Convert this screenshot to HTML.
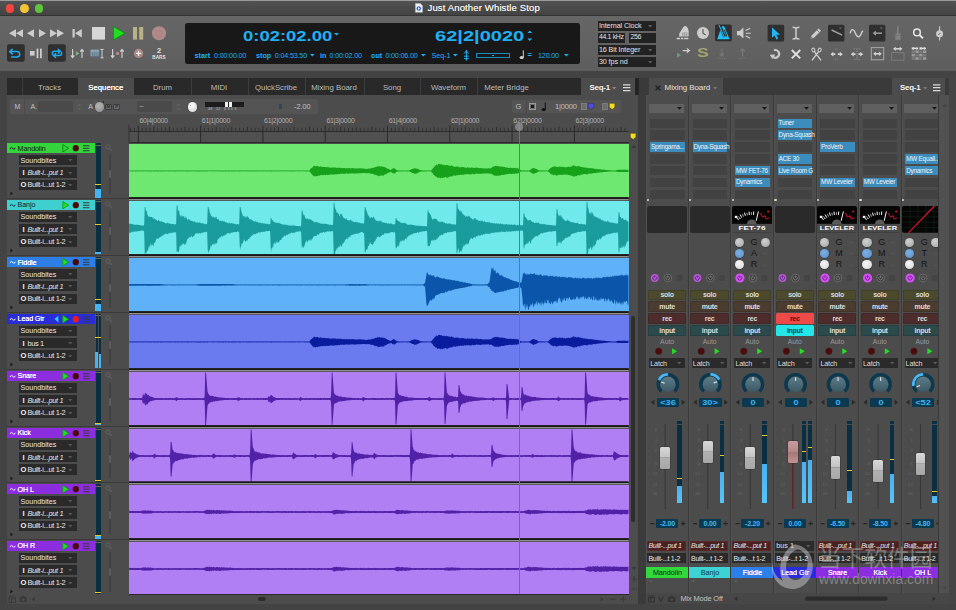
<!DOCTYPE html>
<html lang="en"><head><meta charset="utf-8"><title>Just Another Whistle Stop</title>
<style>
*{margin:0;padding:0;box-sizing:border-box}
html,body{width:956px;height:610px;overflow:hidden;background:#434343}
body{position:relative;font-family:"Liberation Sans","Noto Sans CJK SC",sans-serif;color:#ddd}
div,svg{position:absolute}
.t{white-space:nowrap;line-height:1}
.b{font-weight:bold}
.i{font-style:italic}
svg{overflow:visible}
</style></head>
<body>
<div style="left:0px;top:0px;width:956px;height:16px;background:linear-gradient(#525252,#434343);border-top:1px solid #9a9a9a;border-bottom:1px solid #333;"></div>
<div style="left:5.9px;top:4.2px;width:8.6px;height:8.6px;background:#f4453d;border-radius:50%;"></div>
<div style="left:20px;top:4.2px;width:8.6px;height:8.6px;background:#f0c436;border-radius:50%;"></div>
<div style="left:34.5px;top:4.2px;width:8.6px;height:8.6px;background:#5ec43c;border-radius:50%;"></div>
<svg style="left:415.2px;top:3.4px;" width="9" height="11" viewBox="0 0 9 11"><g transform="scale(.88)"><path d="M0.5 0.5h5.5l2.5 2.5v7.5h-8z" fill="#f4f4f4" stroke="#bbb" stroke-width=".6"/><circle cx="4.3" cy="6.2" r="2.6" fill="#2a6fd0"/><path d="M3.4 4.8l2.3 1.4-2.3 1.4z" fill="#fff"/></g></svg>
<div class="t" style="left:427.5px;top:3px;font-size:9.6px;color:#f4f4f4;letter-spacing:.1px;text-shadow:0 0 .5px rgba(255,255,255,.7);">Just Another Whistle Stop</div>
<div style="left:0px;top:16px;width:956px;height:55px;background:linear-gradient(#666,#5e5e5e);"></div>
<svg style="left:0px;top:0px;" width="180" height="72" viewBox="0 0 180 72"><path d="M9 33.3l7-4v8zM16 33.3l7-4v8z" fill="#cdcdcd"/><path d="M27 33.3l7-4v8z" fill="#cdcdcd"/><path d="M46 33.3l-7-4v8z" fill="#cdcdcd"/><path d="M57 33.3l-7-4v8zM64 33.3l-7-4v8z" fill="#cdcdcd"/><path d="M72.5 29h2.2v8.6h-2.2zM75 33.3l6.8-4.2v8.4z" fill="#cdcdcd"/><rect x="92" y="27" width="13" height="12.6" fill="#d6d6d6"/><path d="M113.4 26.4l11.6 6.8-11.6 6.8z" fill="#1fe01f" stroke="#0a8a0a" stroke-width=".8"/><rect x="133" y="27" width="4" height="12.6" fill="#b9b285"/><rect x="139.2" y="27" width="4" height="12.6" fill="#b9b285"/><circle cx="159" cy="33.2" r="7" fill="#b38a8a"/><circle cx="159" cy="33.2" r="3.2" fill="none" stroke="#a87c7c" stroke-width=".8"/><rect x="7" y="44.2" width="17.8" height="17.6" rx="2" fill="#2f2f2f"/><path d="M12.3 49.3l-2.6 2.3 2.6 2.3M10 51.6h7a2.6 2.6 0 0 1 0 5.4h-5.5" fill="none" stroke="#22aaf0" stroke-width="1.5" stroke-linecap="round" stroke-linejoin="round"/><rect x="30" y="51" width="4.6" height="4.6" fill="#cdcdcd"/><rect x="36.6" y="48.6" width="1.8" height="9.6" fill="#cdcdcd"/><rect x="40" y="48.6" width="1.8" height="9.6" fill="#cdcdcd"/><rect x="48" y="44.2" width="17.8" height="17.6" rx="2" fill="#2f2f2f"/><path d="M52.3 54.5v-1.2a2 2 0 0 1 2-2h5.6M58.2 49.3l2.2 2-2.2 2M61.6 52.3v1.2a2 2 0 0 1-2 2h-5.6M55.6 57.5l-2.2-2 2.2-2" fill="none" stroke="#22aaf0" stroke-width="1.4" stroke-linecap="round" stroke-linejoin="round"/><path d="M72.6 49v8M70.8 55.4l1.8 2.2 1.8-2.2M82 58v-8M80.2 51.6l1.8-2.2 1.8 2.2" fill="none" stroke="#cdcdcd" stroke-width="1.2"/><path d="M75.8 51l3.4 2.4-3.4 2.4z" fill="#7fb27f"/><rect x="90.5" y="49.6" width="8.6" height="6.6" fill="#8aa3b5"/><path d="M92.3 52v5.6M94.2 52v5.6M96.1 52v5.6M98 52v5.6" stroke="#5e7486" stroke-width=".9"/><path d="M100.3 49.4h3.4M102 49.4v8.4M100.3 57.8h3.4" stroke="#cdcdcd" stroke-width="1" fill="none"/><path d="M112.6 49v8M110.8 55.4l1.8 2.2 1.8-2.2M122 58v-8M120.2 51.6l1.8-2.2 1.8 2.2" fill="none" stroke="#cdcdcd" stroke-width="1.2"/><circle cx="117.6" cy="53.4" r="1.7" fill="#b98585"/><circle cx="138.6" cy="53.4" r="4.6" fill="#b08888"/><path d="M136 53.4h5.2M138.6 50.8v5.2" stroke="#f2f2f2" stroke-width="1.1"/></svg>
<div class="t" style="left:149px;top:47.1px;font-size:7.5px;color:#e4e4e4;width:20px;text-align:center;font-weight:bold;">2</div>
<div class="t" style="left:149px;top:55.6px;font-size:4.6px;color:#e4e4e4;width:20px;text-align:center;font-weight:bold;letter-spacing:.1px;">BARS</div>
<div style="left:185px;top:23.2px;width:394.6px;height:40.4px;background:#181818;border-radius:2.5px;"></div>
<div class="t" style="left:242.6px;top:27.6px;font-size:15.2px;color:#1fb0f4;font-weight:bold;transform-origin:0 0;transform:scaleX(1.215);">0:02:02.00</div>
<svg style="left:333.6px;top:32.8px;" width="6" height="4" viewBox="0 0 6 4"><path d="M0 0h5l-2.5 2.6z" fill="#1fb0f4"/></svg>
<div class="t" style="left:434.6px;top:27.6px;font-size:15.2px;color:#1fb0f4;font-weight:bold;transform-origin:0 0;transform:scaleX(1.32);">62|2|0020</div>
<svg style="left:526.6px;top:29.6px;" width="6" height="12" viewBox="0 0 6 12"><path d="M0.4 3l2.4-2.6 2.4 2.6zM0.4 8.4h4.8l-2.4 2.6z" fill="#1fb0f4"/></svg>
<div class="t" style="left:194.6px;top:51.7px;font-size:7.2px;color:#1fb0f4;font-weight:bold;">start</div>
<div class="t" style="left:214px;top:51.7px;font-size:7.2px;color:#1fb0f4;letter-spacing:-.18px;">0:00:00.00</div>
<div class="t" style="left:256px;top:51.7px;font-size:7.2px;color:#1fb0f4;font-weight:bold;">stop</div>
<div class="t" style="left:274.8px;top:51.7px;font-size:7.2px;color:#1fb0f4;letter-spacing:-.18px;">0:04:53.50</div>
<svg style="left:310px;top:54.1px;" width="4.6" height="2.6" viewBox="0 0 4.6 2.6"><path d="M0 0h4.6l-2.3 2.6z" fill="#1fb0f4"/></svg>
<div class="t" style="left:320px;top:51.7px;font-size:7.2px;color:#1fb0f4;font-weight:bold;">in</div>
<div class="t" style="left:329.6px;top:51.7px;font-size:7.2px;color:#1fb0f4;letter-spacing:-.18px;">0:00:02.00</div>
<div class="t" style="left:371px;top:51.7px;font-size:7.2px;color:#1fb0f4;font-weight:bold;">out</div>
<div class="t" style="left:385.4px;top:51.7px;font-size:7.2px;color:#1fb0f4;letter-spacing:-.18px;">0:00:06.00</div>
<svg style="left:421.4px;top:54.1px;" width="4.6" height="2.6" viewBox="0 0 4.6 2.6"><path d="M0 0h4.6l-2.3 2.6z" fill="#1fb0f4"/></svg>
<div class="t" style="left:431.4px;top:51.7px;font-size:7.2px;color:#1fb0f4;">Seq-1</div>
<svg style="left:453px;top:54.1px;" width="4.6" height="2.6" viewBox="0 0 4.6 2.6"><path d="M0 0h4.6l-2.3 2.6z" fill="#1fb0f4"/></svg>
<svg style="left:463px;top:49.6px;" width="7" height="11" viewBox="0 0 7 11"><path d="M3.4 0v10.6M1.2 3.6l2.2-2.8 2.2 2.8M1 6.2h4.8M1 8.6h4.8" stroke="#1fb0f4" stroke-width="1" fill="none"/></svg>
<div style="left:476px;top:52.6px;width:34px;height:5.4px;background:transparent;border:1px solid #1fb0f4;opacity:.75;"></div>
<div style="left:492.4px;top:54.6px;width:1.6px;height:1.6px;background:#1fb0f4;"></div>
<svg style="left:519px;top:49.6px;" width="6" height="10" viewBox="0 0 6 10"><path d="M4.3 0.4v7" stroke="#d0d0d0" stroke-width="1"/><ellipse cx="2.7" cy="7.6" rx="2.1" ry="1.5" fill="#d0d0d0"/></svg>
<div class="t" style="left:527.6px;top:51.4px;font-size:7.6px;color:#1fb0f4;font-weight:bold;">=</div>
<div class="t" style="left:538px;top:51.7px;font-size:7.2px;color:#1fb0f4;letter-spacing:-.18px;">120.00</div>
<svg style="left:564px;top:54.1px;" width="4.6" height="2.6" viewBox="0 0 4.6 2.6"><path d="M0 0h4.6l-2.3 2.6z" fill="#1fb0f4"/></svg>
<div style="left:597.5px;top:21.2px;width:58.6px;height:9.4px;background:#222;"></div>
<div class="t" style="left:598.9px;top:21.9px;font-size:7.2px;color:#e2e2e2;letter-spacing:-.1px;">Internal Clock</div>
<svg style="left:648.1px;top:25px;" width="4.4" height="2.4" viewBox="0 0 4.4 2.4"><path d="M0 0h4.4l-2.2 2.4z" fill="#5c5c5c"/></svg>
<div style="left:597.5px;top:33.2px;width:27.4px;height:9.4px;background:#222;"></div>
<div class="t" style="left:598.9px;top:33.9px;font-size:6.9px;color:#e2e2e2;letter-spacing:-.3px;">44.1 kHz</div>
<div style="left:629px;top:33.2px;width:27.1px;height:9.4px;background:#222;"></div>
<div class="t" style="left:630.4px;top:33.9px;font-size:6.9px;color:#e2e2e2;letter-spacing:-.3px;">256</div>
<div style="left:597.5px;top:45.2px;width:58.6px;height:9.4px;background:#222;"></div>
<div class="t" style="left:598.9px;top:45.9px;font-size:7.2px;color:#e2e2e2;letter-spacing:-.1px;">16 Bit Integer</div>
<svg style="left:648.1px;top:49px;" width="4.4" height="2.4" viewBox="0 0 4.4 2.4"><path d="M0 0h4.4l-2.2 2.4z" fill="#5c5c5c"/></svg>
<div style="left:597.5px;top:57.2px;width:58.6px;height:9.4px;background:#222;"></div>
<div class="t" style="left:598.9px;top:57.9px;font-size:7.2px;color:#e2e2e2;letter-spacing:-.1px;">30 fps nd</div>
<svg style="left:648.1px;top:61px;" width="4.4" height="2.4" viewBox="0 0 4.4 2.4"><path d="M0 0h4.4l-2.2 2.4z" fill="#5c5c5c"/></svg>
<svg style="left:0px;top:0px;" width="956" height="72" viewBox="0 0 956 72"><path d="M679.2 36.600V33.800L683.200 27.200Q684.600 25.600 686.200 26.200Q688.600 27.600 688.600 31.200V36.600z" fill="#cdcdcd"/><path d="M682.800 32.400v4.200M684.800 32v4.600M686.800 32.400v4.200" stroke="#777" stroke-width=".7"/><path d="M676.600 38.400h3.400M680.800 38.400h2.600M684.200 38.400h4.200" stroke="#cdcdcd" stroke-width="1.500" fill="none"/><circle cx="703" cy="33" r="6" fill="#cdcdcd"/><path d="M703 29v4.2l2.6 1.8" stroke="#5e5e5e" stroke-width="1.2" fill="none"/><rect x="715" y="24.4" width="16.8" height="16.8" rx="1.5" fill="#2f2f2f"/><path d="M721.600 26.200h2.600l5.400 13h-12.400z" fill="#1ec0f8"/><path d="M719.600 25.400l5 11.400" stroke="#2f2f2f" stroke-width="2.800"/><path d="M719 25l5.200 11.800" stroke="#1ec0f8" stroke-width="1"/><path d="M724.400 29.600l2.400 6.800" stroke="#2f2f2f" stroke-width="1"/><path d="M737 31h2.8l3.6-3.4v11l-3.6-3.4h-2.8z" fill="#cdcdcd"/><path d="M745.6 30.6l4.6-2.4M745.8 33.2h5M745.6 35.8l4.6 2.4" stroke="#cdcdcd" stroke-width="1.1"/><path d="M677 52.6l4 2.6-4 2.6z" fill="#6f9a6f"/><path d="M682.6 50.6h6.6M686.8 48.4l2.6 2.2-2.6 2.2" stroke="#cdcdcd" stroke-width="1.2" fill="none"/><path d="M721.8 48.6v7.4M719.6 53.6l2.2 2.6 2.2-2.6" stroke="#7a7a7a" stroke-width="1.1" fill="none"/><path d="M718 58.4h8" stroke="#727272" stroke-width="1.2" stroke-dasharray="1.2 .8"/><path d="M742.6 56.4v-7.4M740.4 51.4l2.2-2.6 2.2 2.6" stroke="#7a7a7a" stroke-width="1.1" fill="none"/><path d="M738.6 58.4h8" stroke="#727272" stroke-width="1.2" stroke-dasharray="1.2 .8"/><rect x="767.6" y="24.8" width="16.6" height="16.6" rx="1.5" fill="#2f2f2f"/><path d="M772 27.2v10.6l2.6-2.4 1.8 4 1.8-.8-1.8-3.8h3.6z" fill="#22b4f4"/><path d="M792.600 27.200c1.800 0 3 .4 3.400 1.400c.4-1 1.600-1.400 3.400-1.400M796 28.400v9.400M792.600 39c1.800 0 3-.4 3.400-1.400c.4 1 1.600 1.400 3.400 1.400" stroke="#cdcdcd" stroke-width="1.500" fill="none"/><path d="M810.600 38.800l1-3.400 7-7 2.400 2.400-7 7z" fill="#cdcdcd"/><path d="M817 30l2.400 2.400" stroke="#5e5e5e" stroke-width=".7"/><path d="M811 38.400l.6-1.600 1 1z" fill="#5e5e5e"/><rect x="828" y="24.800" width="16.400" height="16.600" rx="1.500" fill="#2f2f2f"/><path d="M831.600 30l10.600 5.200" stroke="#a0a0a0" stroke-width="1.500"/><path d="M838.800 27.400h3l-1.500 1.800z" fill="#6a6a6a"/><path d="M850 33.400c1.400-5 3.600-5 5.400-.2s4.200 5 6 0c.5-1.400 1-2 1.600-2.400" stroke="#cdcdcd" stroke-width="1.400" fill="none"/><rect x="869" y="24.800" width="16.400" height="16.600" rx="1.500" fill="#2f2f2f"/><path d="M875 33.200h7" stroke="#9a9a9a" stroke-width="1.500"/><path d="M872.600 33.200l3.400-2.600v5.200z" fill="#9a9a9a"/><path d="M879.800 27.400h3l-1.500 1.800z" fill="#6a6a6a"/><path d="M897 26.200v7.400h1.600v-7.400zM895.400 33.600h5.200v6.200h-5.200z" fill="#838383"/><path d="M895.400 35.400h5.200" stroke="#6e6e6e" stroke-width=".6"/><circle cx="917" cy="32.400" r="3.300" fill="none" stroke="#e6e6e6" stroke-width="1.500"/><path d="M919.500 35l3.500 3.400" stroke="#e6e6e6" stroke-width="1.900"/><path d="M939.600 26.200v14.400" stroke="#cdcdcd" stroke-width="1.100"/><circle cx="939.600" cy="33.800" r="3.500" fill="#cdcdcd"/><path d="M938.400 35l1.800-1.800" stroke="#5e5e5e" stroke-width="1"/><path d="M774 50.300a3.800 3.800 0 1 1 -1.200 6.400" stroke="#cdcdcd" stroke-width="2.100" fill="none"/><path d="M769.800 54.800l2.600 4.200 2.800-4.600z" fill="#cdcdcd"/><path d="M791.800 50l8.400 8.400M800.200 50l-8.400 8.400" stroke="#e0e0e0" stroke-width="1.900"/><path d="M814.400 51.600l6.600 8.800M818.600 51.600l-6.600 8.800" stroke="#cdcdcd" stroke-width="1.400"/><ellipse cx="813.400" cy="50" rx="1.500" ry="1.900" fill="none" stroke="#cdcdcd" stroke-width="1.100" transform="rotate(-25 813.400 50)"/><ellipse cx="819.600" cy="50" rx="1.500" ry="1.900" fill="none" stroke="#cdcdcd" stroke-width="1.100" transform="rotate(25 819.600 50)"/><path d="M833.2 54.2H835.3M837.9 54.2H840.0" stroke="#d6d6d6" stroke-width="1.7"/><path d="M830.4 54.2l3 -2.4v4.8zM842.8 54.2l-3 -2.4v4.8z" fill="#d6d6d6"/><path d="M834.800 49.200h3.600M834.800 59.200h3.600" stroke="#8c8c8c" stroke-width=".9" stroke-dasharray="1 .8"/><path d="M853.6 54.2H855.5M858.5 54.2H860.4" stroke="#d6d6d6" stroke-width="1.7"/><path d="M850.8 54.2l3 -2.4v4.8zM863.2 54.2l-3 -2.4v4.8z" fill="#d6d6d6"/><path d="M857 48.400v11.600" stroke="#9a9a9a" stroke-width=".9" stroke-dasharray="1.400 .8"/><path d="M853.600 48.800h2M858.400 48.800h2M853.600 59.600h2M858.400 59.600h2" stroke="#8c8c8c" stroke-width=".8"/><rect x="871.300" y="47.600" width="12.400" height="12.200" fill="none" stroke="#a8a8a8" stroke-width="1"/><path d="M875.7 53.8H879.3" stroke="#dcdcdc" stroke-width="1.5"/><path d="M873.3 53.8l2.6 -2.1v4.2zM881.7 53.8l-2.6 -2.1v4.2z" fill="#dcdcdc"/><path d="M895.5 48.8H899.9" stroke="#dcdcdc" stroke-width="1.5"/><path d="M893.1 48.8l2.6 -2.1v4.2zM902.3 48.8l-2.6 -2.1v4.2z" fill="#dcdcdc"/><rect x="891.600" y="52.600" width="12.400" height="7.600" fill="none" stroke="#7c7c7c" stroke-width=".9"/><rect x="911.6" y="47" width="3.300" height="2.700" fill="#9a9a9a"/><rect x="915.4" y="47" width="3.300" height="2.700" fill="#7a7a7a"/><rect x="919.2" y="47" width="3.300" height="2.700" fill="#9a9a9a"/><rect x="923" y="47" width="3.300" height="2.700" fill="#7a7a7a"/><rect x="911.6" y="50.4" width="3.300" height="2.700" fill="#7a7a7a"/><rect x="915.4" y="50.4" width="3.300" height="2.700" fill="#9a9a9a"/><rect x="919.2" y="50.4" width="3.300" height="2.700" fill="#7a7a7a"/><rect x="923" y="50.4" width="3.300" height="2.700" fill="#9a9a9a"/><rect x="911.6" y="53.8" width="3.300" height="2.700" fill="#9a9a9a"/><rect x="915.4" y="53.8" width="3.300" height="2.700" fill="#7a7a7a"/><rect x="919.2" y="53.8" width="3.300" height="2.700" fill="#9a9a9a"/><rect x="923" y="53.8" width="3.300" height="2.700" fill="#7a7a7a"/><rect x="911.6" y="57.2" width="3.300" height="2.700" fill="#7a7a7a"/><rect x="915.4" y="57.2" width="3.300" height="2.700" fill="#9a9a9a"/><rect x="919.2" y="57.2" width="3.300" height="2.700" fill="#7a7a7a"/><rect x="923" y="57.2" width="3.300" height="2.700" fill="#9a9a9a"/><path d="M913.4 48.4H916.6" stroke="#e4e4e4" stroke-width="1.2"/><path d="M911.6 48.4l2 -1.7v3.4zM918.4 48.4l-2 -1.7v3.4z" fill="#e4e4e4"/><path d="M921.2 48.4H924.4" stroke="#e4e4e4" stroke-width="1.2"/><path d="M919.4 48.4l2 -1.7v3.4zM926.2 48.4l-2 -1.7v3.4z" fill="#e4e4e4"/></svg>
<div class="t" style="left:697px;top:47.2px;font-size:12px;color:#a4a472;font-weight:bold;transform-origin:0 0;transform:scaleX(1.46);">S</div>
<div style="left:7.3px;top:78px;width:630.4px;height:526px;background:#4c4c4c;"></div>
<div style="left:7.3px;top:78px;width:574.2px;height:17px;background:#292929;"></div>
<div style="left:77.5px;top:78px;width:56.5px;height:17px;background:#4c4c4c;"></div>
<div style="left:21.5px;top:78px;width:1px;height:17px;background:#3d3d3d;"></div>
<div style="left:191px;top:78px;width:1px;height:17px;background:#3d3d3d;"></div>
<div style="left:247.5px;top:78px;width:1px;height:17px;background:#3d3d3d;"></div>
<div style="left:304.5px;top:78px;width:1px;height:17px;background:#3d3d3d;"></div>
<div style="left:363.5px;top:78px;width:1px;height:17px;background:#3d3d3d;"></div>
<div style="left:420px;top:78px;width:1px;height:17px;background:#3d3d3d;"></div>
<div style="left:476.5px;top:78px;width:1px;height:17px;background:#3d3d3d;"></div>
<div class="t" style="left:9.5px;top:84px;font-size:7.8px;color:#bcbcbc;width:80px;text-align:center;">Tracks</div>
<div class="t" style="left:65.8px;top:84px;font-size:7.8px;color:#fff;width:80px;text-align:center;text-shadow:0 0 .5px #fff;">Sequence</div>
<div class="t" style="left:122.5px;top:84px;font-size:7.8px;color:#bcbcbc;width:80px;text-align:center;">Drum</div>
<div class="t" style="left:179px;top:84px;font-size:7.8px;color:#bcbcbc;width:80px;text-align:center;">MIDI</div>
<div class="t" style="left:236px;top:84px;font-size:7.8px;color:#bcbcbc;width:80px;text-align:center;">QuickScribe</div>
<div class="t" style="left:294px;top:84px;font-size:7.8px;color:#bcbcbc;width:80px;text-align:center;">Mixing Board</div>
<div class="t" style="left:352px;top:84px;font-size:7.8px;color:#bcbcbc;width:80px;text-align:center;">Song</div>
<div class="t" style="left:408.5px;top:84px;font-size:7.8px;color:#bcbcbc;width:80px;text-align:center;">Waveform</div>
<div class="t" style="left:466.5px;top:84px;font-size:7.8px;color:#bcbcbc;width:80px;text-align:center;">Meter Bridge</div>
<div class="t" style="left:589.4px;top:84.2px;font-size:7.9px;color:#f4f4f4;font-weight:bold;letter-spacing:-.2px;">Seq-1</div>
<svg style="left:612px;top:87px;" width="4.4" height="2.4" viewBox="0 0 4.4 2.4"><path d="M0 0h4.4l-2.2 2.4z" fill="#8a8a8a"/></svg>
<svg style="left:623px;top:83.6px;" width="8" height="8" viewBox="0 0 8 8"><path d="M0 .8h7.4M0 3.7h7.4M0 6.6h7.4" stroke="#d8d8d8" stroke-width="1.3"/></svg>
<div style="left:10px;top:99px;width:307.6px;height:15.4px;background:#545454;border-radius:2.5px;"></div>
<div style="left:24.4px;top:99px;width:1px;height:15.4px;background:#4b4b4b;"></div>
<div class="t" style="left:14.6px;top:103px;font-size:7px;color:#c2c2c2;">M</div>
<div class="t" style="left:30.6px;top:103px;font-size:7px;color:#c2c2c2;">A.</div>
<div style="left:38px;top:101.4px;width:35px;height:10.6px;background:#4a4a4a;border-radius:1.5px;"></div>
<svg style="left:77px;top:102px;" width="5" height="10" viewBox="0 0 5 10"><path d="M.4 3.8l2-2.6 2 2.6zM.4 6l2 2.6 2-2.6z" fill="#626262"/></svg>
<div class="t" style="left:88.2px;top:103px;font-size:7px;color:#c2c2c2;">A</div>
<div style="left:94.6px;top:102.2px;width:9.4px;height:9.4px;background:radial-gradient(circle at 40% 35%,#b4b4b4,#8a8a8a);border-radius:50%;box-shadow:0 0 0 .6px #444;"></div>
<div style="left:102.6px;top:101px;width:1.6px;height:1.6px;background:#222;border-radius:50%;"></div>
<div style="left:105px;top:103.8px;width:6.6px;height:6.6px;background:#6a6a6a;border:.7px solid #3c3c3c;border-radius:1px;"></div>
<div class="t" style="left:105px;top:105px;font-size:4.4px;color:#2a2a2a;width:6.6px;text-align:center;font-weight:bold;">M</div>
<div style="left:113.4px;top:103.8px;width:6.6px;height:6.6px;background:#6a6a6a;border:.7px solid #3c3c3c;border-radius:1px;"></div>
<div class="t" style="left:113.4px;top:105px;font-size:4.4px;color:#2a2a2a;width:6.6px;text-align:center;font-weight:bold;">P</div>
<div style="left:137px;top:101.4px;width:35px;height:10.6px;background:#4a4a4a;border-radius:1.5px;"></div>
<div class="t" style="left:139.4px;top:102.2px;font-size:7.6px;color:#aaa;">–</div>
<svg style="left:176px;top:102px;" width="5" height="10" viewBox="0 0 5 10"><path d="M.4 3.8l2-2.6 2 2.6zM.4 6l2 2.6 2-2.6z" fill="#626262"/></svg>
<div style="left:187.8px;top:102.4px;width:9.4px;height:9.4px;background:radial-gradient(circle at 40% 35%,#fff,#d0d0d0);border-radius:50%;box-shadow:0 0 0 .6px #444;"></div>
<div style="left:189.6px;top:105px;width:1.4px;height:1.4px;background:#777;border-radius:50%;"></div>
<div style="left:205px;top:102px;width:39px;height:4.6px;background:#1c1c1c;"></div>
<div style="left:225.2px;top:101.8px;width:3px;height:5px;background:#f0f0f0;"></div>
<div style="left:229px;top:101.8px;width:3px;height:5px;background:#f0f0f0;"></div>
<div class="t" style="left:208px;top:108.4px;font-size:3.6px;color:#c0c0c0;letter-spacing:.2px;">48&nbsp;&nbsp;&nbsp;12&nbsp;&nbsp;&nbsp;6 3 0 3</div>
<div style="left:279.4px;top:103.6px;width:2.4px;height:5.6px;background:#2a4a5c;"></div>
<div class="t" style="left:294px;top:102.8px;font-size:7.2px;color:#c2c2c2;">-2.00</div>
<div style="left:511.8px;top:100px;width:109px;height:12.8px;background:#545454;border-radius:2px;"></div>
<div style="left:525.6px;top:100px;width:0.8px;height:12.8px;background:#474747;"></div>
<div class="t" style="left:515.6px;top:102.6px;font-size:7.6px;color:#c2c2c2;">G</div>
<div style="left:528.6px;top:102.8px;width:7.4px;height:7.4px;background:#6a6a6a;border:.8px solid #999;"></div>
<div style="left:530.8px;top:105px;width:3px;height:3px;background:#1a1a1a;"></div>
<svg style="left:540.6px;top:101.6px;" width="6" height="10" viewBox="0 0 6 10"><path d="M4.3 0.4v7" stroke="#111" stroke-width="1"/><ellipse cx="2.7" cy="7.6" rx="2.1" ry="1.5" fill="#111"/></svg>
<div class="t" style="left:555px;top:102.6px;font-size:7.6px;color:#c2c2c2;letter-spacing:-.2px;">1|0000</div>
<div style="left:580.8px;top:103px;width:6.4px;height:6.6px;background:#6c6c6c;border:.5px solid #7c7c7c;"></div>
<svg style="left:588px;top:102.8px;" width="6.4" height="6.8" viewBox="0 0 6.4 6.8"><path d="M.3 .3h5.6v4l-2.8 2.2-2.8-2.2z" fill="#4b4bf0" stroke="#222" stroke-width=".4"/></svg>
<div style="left:601.8px;top:103px;width:6.4px;height:6.6px;background:#6c6c6c;border:.5px solid #7c7c7c;"></div>
<svg style="left:609px;top:102.8px;" width="6.4" height="6.8" viewBox="0 0 6.4 6.8"><path d="M.3 .3h5.6v4l-2.8 2.2-2.8-2.2z" fill="#f4dc1c" stroke="#222" stroke-width=".4"/></svg>
<div style="left:129px;top:131.4px;width:499.5px;height:11.4px;background:#505050;"></div>
<div style="left:129px;top:131px;width:499.5px;height:0.9px;background:#2e2e2e;"></div>
<div style="left:129px;top:142.2px;width:499.5px;height:0.9px;background:#2a2a2a;"></div>
<svg style="left:0px;top:0px;" width="640" height="144" viewBox="0 0 640 144"><path d="M130.51 127.8V131.4" stroke="#2c2c2c" stroke-width=".8"/><path d="M134.41 127.8V131.4" stroke="#2c2c2c" stroke-width=".8"/><path d="M138.30 125.6V143" stroke="#2a2a2a" stroke-width="1"/><path d="M142.19 127.8V131.4" stroke="#2c2c2c" stroke-width=".8"/><path d="M146.09 127.8V131.4" stroke="#2c2c2c" stroke-width=".8"/><path d="M149.98 127.8V131.4" stroke="#2c2c2c" stroke-width=".8"/><path d="M153.88 126.8V131.4" stroke="#2a2a2a" stroke-width=".9"/><path d="M157.77 127.8V131.4" stroke="#2c2c2c" stroke-width=".8"/><path d="M161.66 127.8V131.4" stroke="#2c2c2c" stroke-width=".8"/><path d="M165.56 127.8V131.4" stroke="#2c2c2c" stroke-width=".8"/><path d="M169.45 126.8V131.4" stroke="#2a2a2a" stroke-width=".9"/><path d="M173.34 127.8V131.4" stroke="#2c2c2c" stroke-width=".8"/><path d="M177.24 127.8V131.4" stroke="#2c2c2c" stroke-width=".8"/><path d="M181.13 127.8V131.4" stroke="#2c2c2c" stroke-width=".8"/><path d="M185.03 126.8V131.4" stroke="#2a2a2a" stroke-width=".9"/><path d="M188.92 127.8V131.4" stroke="#2c2c2c" stroke-width=".8"/><path d="M192.81 127.8V131.4" stroke="#2c2c2c" stroke-width=".8"/><path d="M196.71 127.8V131.4" stroke="#2c2c2c" stroke-width=".8"/><path d="M200.60 125.6V143" stroke="#2a2a2a" stroke-width="1"/><path d="M204.49 127.8V131.4" stroke="#2c2c2c" stroke-width=".8"/><path d="M208.39 127.8V131.4" stroke="#2c2c2c" stroke-width=".8"/><path d="M212.28 127.8V131.4" stroke="#2c2c2c" stroke-width=".8"/><path d="M216.18 126.8V131.4" stroke="#2a2a2a" stroke-width=".9"/><path d="M220.07 127.8V131.4" stroke="#2c2c2c" stroke-width=".8"/><path d="M223.96 127.8V131.4" stroke="#2c2c2c" stroke-width=".8"/><path d="M227.86 127.8V131.4" stroke="#2c2c2c" stroke-width=".8"/><path d="M231.75 126.8V131.4" stroke="#2a2a2a" stroke-width=".9"/><path d="M235.64 127.8V131.4" stroke="#2c2c2c" stroke-width=".8"/><path d="M239.54 127.8V131.4" stroke="#2c2c2c" stroke-width=".8"/><path d="M243.43 127.8V131.4" stroke="#2c2c2c" stroke-width=".8"/><path d="M247.32 126.8V131.4" stroke="#2a2a2a" stroke-width=".9"/><path d="M251.22 127.8V131.4" stroke="#2c2c2c" stroke-width=".8"/><path d="M255.11 127.8V131.4" stroke="#2c2c2c" stroke-width=".8"/><path d="M259.01 127.8V131.4" stroke="#2c2c2c" stroke-width=".8"/><path d="M262.90 125.6V143" stroke="#2a2a2a" stroke-width="1"/><path d="M266.79 127.8V131.4" stroke="#2c2c2c" stroke-width=".8"/><path d="M270.69 127.8V131.4" stroke="#2c2c2c" stroke-width=".8"/><path d="M274.58 127.8V131.4" stroke="#2c2c2c" stroke-width=".8"/><path d="M278.48 126.8V131.4" stroke="#2a2a2a" stroke-width=".9"/><path d="M282.37 127.8V131.4" stroke="#2c2c2c" stroke-width=".8"/><path d="M286.26 127.8V131.4" stroke="#2c2c2c" stroke-width=".8"/><path d="M290.16 127.8V131.4" stroke="#2c2c2c" stroke-width=".8"/><path d="M294.05 126.8V131.4" stroke="#2a2a2a" stroke-width=".9"/><path d="M297.94 127.8V131.4" stroke="#2c2c2c" stroke-width=".8"/><path d="M301.84 127.8V131.4" stroke="#2c2c2c" stroke-width=".8"/><path d="M305.73 127.8V131.4" stroke="#2c2c2c" stroke-width=".8"/><path d="M309.62 126.8V131.4" stroke="#2a2a2a" stroke-width=".9"/><path d="M313.52 127.8V131.4" stroke="#2c2c2c" stroke-width=".8"/><path d="M317.41 127.8V131.4" stroke="#2c2c2c" stroke-width=".8"/><path d="M321.31 127.8V131.4" stroke="#2c2c2c" stroke-width=".8"/><path d="M325.20 125.6V143" stroke="#2a2a2a" stroke-width="1"/><path d="M329.09 127.8V131.4" stroke="#2c2c2c" stroke-width=".8"/><path d="M332.99 127.8V131.4" stroke="#2c2c2c" stroke-width=".8"/><path d="M336.88 127.8V131.4" stroke="#2c2c2c" stroke-width=".8"/><path d="M340.77 126.8V131.4" stroke="#2a2a2a" stroke-width=".9"/><path d="M344.67 127.8V131.4" stroke="#2c2c2c" stroke-width=".8"/><path d="M348.56 127.8V131.4" stroke="#2c2c2c" stroke-width=".8"/><path d="M352.46 127.8V131.4" stroke="#2c2c2c" stroke-width=".8"/><path d="M356.35 126.8V131.4" stroke="#2a2a2a" stroke-width=".9"/><path d="M360.24 127.8V131.4" stroke="#2c2c2c" stroke-width=".8"/><path d="M364.14 127.8V131.4" stroke="#2c2c2c" stroke-width=".8"/><path d="M368.03 127.8V131.4" stroke="#2c2c2c" stroke-width=".8"/><path d="M371.93 126.8V131.4" stroke="#2a2a2a" stroke-width=".9"/><path d="M375.82 127.8V131.4" stroke="#2c2c2c" stroke-width=".8"/><path d="M379.71 127.8V131.4" stroke="#2c2c2c" stroke-width=".8"/><path d="M383.61 127.8V131.4" stroke="#2c2c2c" stroke-width=".8"/><path d="M387.50 125.6V143" stroke="#2a2a2a" stroke-width="1"/><path d="M391.39 127.8V131.4" stroke="#2c2c2c" stroke-width=".8"/><path d="M395.29 127.8V131.4" stroke="#2c2c2c" stroke-width=".8"/><path d="M399.18 127.8V131.4" stroke="#2c2c2c" stroke-width=".8"/><path d="M403.07 126.8V131.4" stroke="#2a2a2a" stroke-width=".9"/><path d="M406.97 127.8V131.4" stroke="#2c2c2c" stroke-width=".8"/><path d="M410.86 127.8V131.4" stroke="#2c2c2c" stroke-width=".8"/><path d="M414.76 127.8V131.4" stroke="#2c2c2c" stroke-width=".8"/><path d="M418.65 126.8V131.4" stroke="#2a2a2a" stroke-width=".9"/><path d="M422.54 127.8V131.4" stroke="#2c2c2c" stroke-width=".8"/><path d="M426.44 127.8V131.4" stroke="#2c2c2c" stroke-width=".8"/><path d="M430.33 127.8V131.4" stroke="#2c2c2c" stroke-width=".8"/><path d="M434.23 126.8V131.4" stroke="#2a2a2a" stroke-width=".9"/><path d="M438.12 127.8V131.4" stroke="#2c2c2c" stroke-width=".8"/><path d="M442.01 127.8V131.4" stroke="#2c2c2c" stroke-width=".8"/><path d="M445.91 127.8V131.4" stroke="#2c2c2c" stroke-width=".8"/><path d="M449.80 125.6V143" stroke="#2a2a2a" stroke-width="1"/><path d="M453.69 127.8V131.4" stroke="#2c2c2c" stroke-width=".8"/><path d="M457.59 127.8V131.4" stroke="#2c2c2c" stroke-width=".8"/><path d="M461.48 127.8V131.4" stroke="#2c2c2c" stroke-width=".8"/><path d="M465.38 126.8V131.4" stroke="#2a2a2a" stroke-width=".9"/><path d="M469.27 127.8V131.4" stroke="#2c2c2c" stroke-width=".8"/><path d="M473.16 127.8V131.4" stroke="#2c2c2c" stroke-width=".8"/><path d="M477.06 127.8V131.4" stroke="#2c2c2c" stroke-width=".8"/><path d="M480.95 126.8V131.4" stroke="#2a2a2a" stroke-width=".9"/><path d="M484.84 127.8V131.4" stroke="#2c2c2c" stroke-width=".8"/><path d="M488.74 127.8V131.4" stroke="#2c2c2c" stroke-width=".8"/><path d="M492.63 127.8V131.4" stroke="#2c2c2c" stroke-width=".8"/><path d="M496.52 126.8V131.4" stroke="#2a2a2a" stroke-width=".9"/><path d="M500.42 127.8V131.4" stroke="#2c2c2c" stroke-width=".8"/><path d="M504.31 127.8V131.4" stroke="#2c2c2c" stroke-width=".8"/><path d="M508.21 127.8V131.4" stroke="#2c2c2c" stroke-width=".8"/><path d="M512.10 125.6V143" stroke="#2a2a2a" stroke-width="1"/><path d="M515.99 127.8V131.4" stroke="#2c2c2c" stroke-width=".8"/><path d="M519.89 127.8V131.4" stroke="#2c2c2c" stroke-width=".8"/><path d="M523.78 127.8V131.4" stroke="#2c2c2c" stroke-width=".8"/><path d="M527.67 126.8V131.4" stroke="#2a2a2a" stroke-width=".9"/><path d="M531.57 127.8V131.4" stroke="#2c2c2c" stroke-width=".8"/><path d="M535.46 127.8V131.4" stroke="#2c2c2c" stroke-width=".8"/><path d="M539.36 127.8V131.4" stroke="#2c2c2c" stroke-width=".8"/><path d="M543.25 126.8V131.4" stroke="#2a2a2a" stroke-width=".9"/><path d="M547.14 127.8V131.4" stroke="#2c2c2c" stroke-width=".8"/><path d="M551.04 127.8V131.4" stroke="#2c2c2c" stroke-width=".8"/><path d="M554.93 127.8V131.4" stroke="#2c2c2c" stroke-width=".8"/><path d="M558.83 126.8V131.4" stroke="#2a2a2a" stroke-width=".9"/><path d="M562.72 127.8V131.4" stroke="#2c2c2c" stroke-width=".8"/><path d="M566.61 127.8V131.4" stroke="#2c2c2c" stroke-width=".8"/><path d="M570.51 127.8V131.4" stroke="#2c2c2c" stroke-width=".8"/><path d="M574.40 125.6V143" stroke="#2a2a2a" stroke-width="1"/><path d="M578.29 127.8V131.4" stroke="#2c2c2c" stroke-width=".8"/><path d="M582.19 127.8V131.4" stroke="#2c2c2c" stroke-width=".8"/><path d="M586.08 127.8V131.4" stroke="#2c2c2c" stroke-width=".8"/><path d="M589.97 126.8V131.4" stroke="#2a2a2a" stroke-width=".9"/><path d="M593.87 127.8V131.4" stroke="#2c2c2c" stroke-width=".8"/><path d="M597.76 127.8V131.4" stroke="#2c2c2c" stroke-width=".8"/><path d="M601.66 127.8V131.4" stroke="#2c2c2c" stroke-width=".8"/><path d="M605.55 126.8V131.4" stroke="#2a2a2a" stroke-width=".9"/><path d="M609.44 127.8V131.4" stroke="#2c2c2c" stroke-width=".8"/><path d="M613.34 127.8V131.4" stroke="#2c2c2c" stroke-width=".8"/><path d="M617.23 127.8V131.4" stroke="#2c2c2c" stroke-width=".8"/><path d="M621.12 126.8V131.4" stroke="#2a2a2a" stroke-width=".9"/><path d="M625.02 127.8V131.4" stroke="#2c2c2c" stroke-width=".8"/><path d="M129 124.4V143" stroke="#333" stroke-width="1"/></svg>
<div class="t" style="left:139.5px;top:117px;font-size:7px;color:#b2b2b2;letter-spacing:-.3px;">60|4|0000</div>
<div class="t" style="left:201.8px;top:117px;font-size:7px;color:#b2b2b2;letter-spacing:-.3px;">61|1|0000</div>
<div class="t" style="left:264.1px;top:117px;font-size:7px;color:#b2b2b2;letter-spacing:-.3px;">61|2|0000</div>
<div class="t" style="left:326.4px;top:117px;font-size:7px;color:#b2b2b2;letter-spacing:-.3px;">61|3|0000</div>
<div class="t" style="left:388.7px;top:117px;font-size:7px;color:#b2b2b2;letter-spacing:-.3px;">61|4|0000</div>
<div class="t" style="left:451px;top:117px;font-size:7px;color:#b2b2b2;letter-spacing:-.3px;">62|1|0000</div>
<div class="t" style="left:513.3px;top:117px;font-size:7px;color:#b2b2b2;letter-spacing:-.3px;">62|2|0000</div>
<div class="t" style="left:575.6px;top:117px;font-size:7px;color:#b2b2b2;letter-spacing:-.3px;">62|3|0000</div>
<svg style="left:630px;top:133.4px;" width="6.4" height="6.8" viewBox="0 0 6.4 6.8"><path d="M.3 .3h5.6v4l-2.8 2.2-2.8-2.2z" fill="#f4dc1c" stroke="#222" stroke-width=".4"/></svg>
<svg style="left:630.6px;top:143.6px;" width="6" height="5" viewBox="0 0 6 5"><path d="M0 4l2.8-3.6 2.8 3.6z" fill="#3a3a3a"/></svg>
<div style="left:7.3px;top:143px;width:88px;height:10.4px;background:#33d43c;"></div>
<div class="t" style="left:17.6px;top:144.7px;font-size:7.2px;color:#111;letter-spacing:-.15px;">Mandolin</div>
<svg style="left:0px;top:143px;" width="100" height="11" viewBox="0 0 100 11"><path d="M10.2 6c.8-2 1.8-2 2.5-.6s1.700 1.400 2.500-.600" stroke="#111" stroke-width="1" fill="none"/><path d="M62.8 1.5l5.8 3.7-5.8 3.7z" fill="none" stroke="#0a7a0a" stroke-width=".8"/><circle cx="75.8" cy="5.2" r="3.1" fill="#4a0808"/><path d="M83 2.7h6.4M83 5.2h6.4M83 7.7h6.4" stroke="#3a3a3a" stroke-width="1.1"/></svg>
<div style="left:19px;top:155.2px;width:57.6px;height:10.2px;background:#2a2a2a;"></div>
<div class="t" style="left:20.4px;top:156.8px;font-size:7.2px;color:#e6e6e6;">Soundbites</div>
<svg style="left:68.4px;top:159.4px;" width="4.6" height="2.4" viewBox="0 0 4.6 2.4"><path d="M0 0h4.6l-2.3 2.4z" fill="#555"/></svg>
<div style="left:19px;top:167.4px;width:57.6px;height:10.2px;background:#2a2a2a;"></div>
<div class="t" style="left:22.6px;top:168.9px;font-size:7.6px;color:#eee;font-weight:bold;">I</div>
<div class="t" style="left:27.4px;top:168.9px;font-size:7.4px;color:#e6e6e6;font-style:italic;letter-spacing:-.35px;">Built-i...put 1</div>
<svg style="left:68.4px;top:171.6px;" width="4.6" height="2.4" viewBox="0 0 4.6 2.4"><path d="M0 0h4.6l-2.3 2.4z" fill="#555"/></svg>
<div style="left:19px;top:179.8px;width:57.6px;height:10.2px;background:#2a2a2a;"></div>
<div class="t" style="left:20.6px;top:181.3px;font-size:7.6px;color:#eee;font-weight:bold;">O</div>
<div class="t" style="left:27.4px;top:181.3px;font-size:7.4px;color:#e6e6e6;letter-spacing:-.35px;">Built-i...ut 1-2</div>
<svg style="left:68.4px;top:184px;" width="4.6" height="2.4" viewBox="0 0 4.6 2.4"><path d="M0 0h4.6l-2.3 2.4z" fill="#555"/></svg>
<svg style="left:10.4px;top:191px;" width="4" height="5" viewBox="0 0 4 5"><path d="M.4 .4l2.6 2-2.6 2z" fill="#1c1c1c"/></svg>
<div style="left:95.6px;top:143px;width:5.2px;height:54.6px;background:#0b2f42;"></div>
<div style="left:95.4px;top:144.6px;width:5.4px;height:0.8px;background:#6a6a50;"></div>
<svg style="left:104.8px;top:144.4px;" width="8" height="8" viewBox="0 0 8 8"><circle cx="3" cy="3" r="2.1" fill="none" stroke="#626262" stroke-width="1"/><path d="M4.6 4.6l2.2 2.2" stroke="#626262" stroke-width="1.2"/></svg>
<div style="left:108.9px;top:154px;width:2.6px;height:40px;background:#414141;border-radius:1.3px;"></div>
<div style="left:108.9px;top:170px;width:2.6px;height:8px;background:#5c5c5c;border-radius:1.3px;"></div>

<div style="left:129px;top:144.2px;width:499.5px;height:53.2px;background:#6fe872;"></div>
<svg style="left:129px;top:144.2px;" width="499.5" height="53.2" viewBox="0 0 499.5 53.2"><path d="M0.0 26.4L0.5 26.5L1.0 26.5L1.5 26.5L2.0 26.4L2.5 26.4L3.0 26.5L3.5 26.4L4.0 26.4L4.5 26.4L5.0 26.5L5.5 26.4L6.0 26.5L6.5 26.5L7.0 26.5L7.5 26.4L8.0 26.5L8.5 26.4L9.0 26.5L9.5 26.4L10.0 26.5L10.5 26.5L11.0 26.5L11.5 26.5L12.0 26.4L12.5 26.5L13.0 26.5L13.5 26.5L14.0 26.5L14.5 26.5L15.0 26.5L15.5 26.5L16.0 26.5L16.5 26.5L17.0 26.5L17.5 26.4L18.0 26.5L18.5 26.4L19.0 26.4L19.5 26.5L20.0 26.5L20.5 26.4L21.0 26.4L21.5 26.5L22.0 26.4L22.5 26.5L23.0 26.5L23.5 26.5L24.0 26.5L24.5 26.4L25.0 26.5L25.5 26.4L26.0 26.4L26.5 26.5L27.0 26.4L27.5 26.4L28.0 26.5L28.5 26.4L29.0 26.5L29.5 26.4L30.0 26.4L30.5 26.5L31.0 26.4L31.5 26.5L32.0 26.5L32.5 26.4L33.0 26.4L33.5 26.5L34.0 26.4L34.5 26.4L35.0 26.5L35.5 26.5L36.0 26.4L36.5 26.4L37.0 26.4L37.5 26.4L38.0 26.4L38.5 26.4L39.0 26.4L39.5 26.5L40.0 26.4L40.5 26.4L41.0 26.4L41.5 26.5L42.0 26.5L42.5 26.4L43.0 26.5L43.5 26.4L44.0 26.5L44.5 26.4L45.0 26.5L45.5 26.4L46.0 26.4L46.5 26.4L47.0 26.4L47.5 26.4L48.0 26.5L48.5 26.5L49.0 26.4L49.5 26.5L50.0 26.5L50.5 26.5L51.0 26.4L51.5 26.5L52.0 26.4L52.5 26.5L53.0 26.4L53.5 26.5L54.0 26.4L54.5 26.4L55.0 26.5L55.5 26.4L56.0 26.5L56.5 26.4L57.0 26.5L57.5 26.5L58.0 26.5L58.5 26.5L59.0 26.4L59.5 26.4L60.0 26.4L60.5 26.5L61.0 26.4L61.5 26.4L62.0 26.5L62.5 26.5L63.0 26.4L63.5 26.4L64.0 26.4L64.5 26.4L65.0 26.4L65.5 26.5L66.0 26.5L66.5 26.4L67.0 26.4L67.5 26.4L68.0 26.4L68.5 26.4L69.0 26.5L69.5 26.4L70.0 26.5L70.5 26.5L71.0 26.4L71.5 26.5L72.0 26.5L72.5 26.4L73.0 26.5L73.5 26.5L74.0 26.5L74.5 26.5L75.0 26.5L75.5 26.5L76.0 26.4L76.5 26.5L77.0 26.4L77.5 26.5L78.0 26.5L78.5 26.4L79.0 26.4L79.5 26.5L80.0 26.4L80.5 26.4L81.0 26.5L81.5 26.5L82.0 26.5L82.5 26.5L83.0 26.4L83.5 26.4L84.0 26.5L84.5 26.5L85.0 26.5L85.5 26.5L86.0 26.5L86.5 26.4L87.0 26.5L87.5 26.4L88.0 26.5L88.5 26.4L89.0 26.5L89.5 26.5L90.0 26.5L90.5 26.5L91.0 26.5L91.5 26.5L92.0 26.5L92.5 26.5L93.0 26.5L93.5 26.4L94.0 26.5L94.5 26.4L95.0 26.5L95.5 26.5L96.0 26.4L96.5 26.4L97.0 26.4L97.5 26.5L98.0 26.5L98.5 26.4L99.0 26.5L99.5 26.5L100.0 26.4L100.5 26.4L101.0 26.5L101.5 26.4L102.0 26.5L102.5 26.5L103.0 26.4L103.5 26.4L104.0 26.5L104.5 26.5L105.0 26.5L105.5 26.5L106.0 26.5L106.5 26.4L107.0 26.5L107.5 26.4L108.0 26.5L108.5 26.5L109.0 26.4L109.5 26.5L110.0 26.5L110.5 26.4L111.0 26.5L111.5 26.4L112.0 26.4L112.5 26.5L113.0 26.5L113.5 26.5L114.0 26.5L114.5 26.5L115.0 26.5L115.5 26.5L116.0 26.5L116.5 26.5L117.0 26.4L117.5 26.5L118.0 26.4L118.5 26.4L119.0 26.4L119.5 26.4L120.0 26.4L120.5 26.4L121.0 26.5L121.5 26.5L122.0 26.5L122.5 26.5L123.0 26.5L123.5 26.5L124.0 26.5L124.5 26.4L125.0 26.5L125.5 26.5L126.0 26.5L126.5 26.4L127.0 26.4L127.5 26.5L128.0 26.4L128.5 26.4L129.0 26.5L129.5 26.5L130.0 26.4L130.5 26.4L131.0 26.5L131.5 26.5L132.0 26.4L132.5 26.5L133.0 26.5L133.5 26.5L134.0 26.4L134.5 26.5L135.0 26.5L135.5 26.5L136.0 26.5L136.5 26.4L137.0 26.4L137.5 26.4L138.0 26.5L138.5 26.5L139.0 26.5L139.5 26.5L140.0 26.5L140.5 26.5L141.0 26.5L141.5 26.4L142.0 26.4L142.5 26.5L143.0 26.4L143.5 26.4L144.0 26.4L144.5 26.5L145.0 26.4L145.5 26.4L146.0 26.5L146.5 26.5L147.0 26.5L147.5 26.5L148.0 26.5L148.5 26.5L149.0 26.4L149.5 26.4L150.0 26.5L150.5 26.5L151.0 26.5L151.5 26.5L152.0 26.5L152.5 26.5L153.0 26.4L153.5 26.5L154.0 26.5L154.5 26.5L155.0 26.5L155.5 26.5L156.0 26.5L156.5 26.4L157.0 26.4L157.5 26.4L158.0 26.4L158.5 26.4L159.0 26.5L159.5 26.4L160.0 26.4L160.5 26.4L161.0 26.4L161.5 26.5L162.0 26.5L162.5 26.4L163.0 26.5L163.5 26.5L164.0 26.5L164.5 26.4L165.0 26.5L165.5 26.5L166.0 26.5L166.5 26.4L167.0 26.4L167.5 26.5L168.0 26.5L168.5 26.4L169.0 26.4L169.5 26.4L170.0 26.5L170.5 26.4L171.0 26.5L171.5 26.4L172.0 26.5L172.5 26.5L173.0 26.4L173.5 26.4L174.0 26.5L174.5 26.4L175.0 26.4L175.5 26.5L176.0 26.4L176.5 26.4L177.0 26.5L177.5 26.4L178.0 26.4L178.5 26.5L179.0 26.4L179.5 26.5L180.0 26.5L180.5 26.4L181.0 25.6L181.5 24.8L182.0 24.5L182.5 23.9L183.0 23.8L183.5 23.3L184.0 22.6L184.5 22.4L185.0 21.8L185.5 21.8L186.0 21.7L186.5 22.2L187.0 22.5L187.5 21.9L188.0 22.1L188.5 22.1L189.0 21.9L189.5 22.7L190.0 22.7L190.5 22.9L191.0 22.0L191.5 22.6L192.0 22.6L192.5 22.8L193.0 22.7L193.5 22.9L194.0 23.1L194.5 22.8L195.0 23.1L195.5 23.1L196.0 22.8L196.5 22.9L197.0 23.3L197.5 23.6L198.0 23.0L198.5 23.3L199.0 22.9L199.5 23.6L200.0 23.1L200.5 23.7L201.0 23.4L201.5 23.8L202.0 23.6L202.5 23.5L203.0 23.7L203.5 23.3L204.0 23.5L204.5 23.6L205.0 23.3L205.5 23.7L206.0 23.2L206.5 23.5L207.0 23.9L207.5 23.7L208.0 24.0L208.5 23.5L209.0 23.9L209.5 23.6L210.0 23.5L210.5 24.1L211.0 24.2L211.5 23.6L212.0 24.1L212.5 23.7L213.0 24.3L213.5 24.3L214.0 24.1L214.5 24.0L215.0 24.1L215.5 23.9L216.0 24.1L216.5 24.4L217.0 24.2L217.5 23.9L218.0 24.4L218.5 24.1L219.0 24.4L219.5 24.0L220.0 24.3L220.5 24.0L221.0 23.9L221.5 24.4L222.0 24.5L222.5 24.1L223.0 24.2L223.5 24.0L224.0 24.2L224.5 24.3L225.0 24.3L225.5 24.3L226.0 24.7L226.5 24.6L227.0 24.3L227.5 24.5L228.0 24.3L228.5 24.6L229.0 24.5L229.5 24.5L230.0 24.3L230.5 24.3L231.0 24.3L231.5 24.3L232.0 24.6L232.5 24.5L233.0 24.5L233.5 24.5L234.0 24.5L234.5 24.4L235.0 24.8L235.5 24.5L236.0 25.0L236.5 24.8L237.0 25.0L237.5 24.9L238.0 25.0L238.5 24.7L239.0 24.6L239.5 24.5L240.0 24.6L240.5 24.7L241.0 24.4L241.5 24.2L242.0 24.5L242.5 24.0L243.0 24.2L243.5 23.8L244.0 23.7L244.5 23.9L245.0 23.3L245.5 23.7L246.0 22.8L246.5 23.1L247.0 23.0L247.5 22.7L248.0 22.9L248.5 21.8L249.0 22.2L249.5 22.5L250.0 22.5L250.5 21.9L251.0 22.2L251.5 22.8L252.0 22.3L252.5 22.5L253.0 22.7L253.5 22.8L254.0 22.6L254.5 23.0L255.0 22.6L255.5 22.9L256.0 23.6L256.5 23.4L257.0 23.4L257.5 24.0L258.0 24.5L258.5 24.6L259.0 24.9L259.5 25.0L260.0 25.0L260.5 25.4L261.0 25.7L261.5 25.9L262.0 25.9L262.5 25.5L263.0 24.9L263.5 24.7L264.0 24.4L264.5 24.2L265.0 24.3L265.5 24.3L266.0 24.7L266.5 25.2L267.0 25.4L267.5 25.9L268.0 26.2L268.5 26.2L269.0 26.3L269.5 26.4L270.0 26.5L270.5 26.4L271.0 26.5L271.5 26.4L272.0 26.4L272.5 26.5L273.0 26.5L273.5 26.5L274.0 26.5L274.5 26.4L275.0 26.5L275.5 26.4L276.0 26.5L276.5 26.5L277.0 26.4L277.5 26.4L278.0 26.4L278.5 26.4L279.0 26.4L279.5 26.5L280.0 26.5L280.5 26.3L281.0 26.1L281.5 25.9L282.0 25.6L282.5 25.3L283.0 25.0L283.5 25.1L284.0 24.7L284.5 24.7L285.0 24.4L285.5 24.3L286.0 24.3L286.5 24.5L287.0 24.4L287.5 24.7L288.0 24.7L288.5 24.7L289.0 25.1L289.5 25.2L290.0 25.4L290.5 25.8L291.0 25.9L291.5 26.2L292.0 26.4L292.5 26.3L293.0 26.3L293.5 26.3L294.0 26.4L294.5 26.5L295.0 26.4L295.5 26.4L296.0 26.4L296.5 26.4L297.0 26.5L297.5 26.4L298.0 26.4L298.5 26.4L299.0 26.4L299.5 26.5L300.0 26.4L300.5 26.4L301.0 26.4L301.5 26.5L302.0 26.5L302.5 25.9L303.0 25.5L303.5 24.7L304.0 24.5L304.5 23.7L305.0 23.1L305.5 22.4L306.0 22.0L306.5 21.5L307.0 20.9L307.5 20.6L308.0 20.7L308.5 21.4L309.0 20.2L309.5 20.0L310.0 20.0L310.5 19.7L311.0 20.1L311.5 20.2L312.0 20.4L312.5 19.7L313.0 20.7L313.5 20.9L314.0 20.4L314.5 21.2L315.0 20.2L315.5 21.2L316.0 20.9L316.5 21.5L317.0 20.7L317.5 21.3L318.0 20.8L318.5 21.4L319.0 20.8L319.5 21.8L320.0 21.4L320.5 21.8L321.0 21.8L321.5 22.3L322.0 21.2L322.5 21.4L323.0 21.5L323.5 22.3L324.0 22.1L324.5 22.4L325.0 22.6L325.5 22.9L326.0 22.8L326.5 22.4L327.0 22.8L327.5 22.2L328.0 22.8L328.5 22.8L329.0 22.6L329.5 23.2L330.0 22.6L330.5 23.3L331.0 23.5L331.5 23.3L332.0 23.2L332.5 22.8L333.0 23.3L333.5 23.0L334.0 22.9L334.5 23.1L335.0 23.5L335.5 23.2L336.0 23.7L336.5 23.5L337.0 23.7L337.5 23.9L338.0 23.3L338.5 23.2L339.0 23.4L339.5 23.7L340.0 23.8L340.5 23.4L341.0 23.8L341.5 23.6L342.0 24.0L342.5 23.3L343.0 23.5L343.5 23.4L344.0 23.7L344.5 23.9L345.0 24.1L345.5 24.0L346.0 23.7L346.5 23.6L347.0 23.9L347.5 23.6L348.0 23.8L348.5 23.8L349.0 23.8L349.5 24.3L350.0 24.0L350.5 24.1L351.0 24.2L351.5 23.9L352.0 23.8L352.5 24.2L353.0 24.3L353.5 24.3L354.0 24.6L354.5 24.6L355.0 24.4L355.5 24.6L356.0 24.1L356.5 24.4L357.0 24.5L357.5 24.6L358.0 24.4L358.5 24.3L359.0 24.4L359.5 24.3L360.0 24.3L360.5 24.4L361.0 24.4L361.5 24.2L362.0 23.9L362.5 23.8L363.0 23.8L363.5 22.9L364.0 22.6L364.5 22.2L365.0 22.8L365.5 22.3L366.0 22.1L366.5 21.9L367.0 21.8L367.5 22.6L368.0 21.5L368.5 22.2L369.0 21.7L369.5 22.3L370.0 22.5L370.5 22.5L371.0 22.5L371.5 22.6L372.0 22.7L372.5 22.4L373.0 22.3L373.5 22.9L374.0 22.7L374.5 22.9L375.0 22.8L375.5 23.1L376.0 23.1L376.5 22.9L377.0 23.8L377.5 23.8L378.0 23.4L378.5 23.4L379.0 23.8L379.5 24.0L380.0 24.1L380.5 23.9L381.0 23.6L381.5 23.5L382.0 23.9L382.5 23.8L383.0 23.9L383.5 24.2L384.0 24.1L384.5 23.7L385.0 23.7L385.5 24.1L386.0 24.3L386.5 23.7L387.0 24.4L387.5 24.0L388.0 24.2L388.5 24.3L389.0 24.6L389.5 24.5L390.0 25.0L390.5 25.1L391.0 25.4L391.5 26.0L392.0 26.3L392.5 26.4L393.0 26.4L393.5 26.4L394.0 26.5L394.5 26.4L395.0 26.3L395.5 26.5L396.0 26.5L396.5 26.4L397.0 26.4L397.5 26.5L398.0 26.4L398.5 26.5L399.0 26.4L399.5 26.5L400.0 26.4L400.5 26.2L401.0 25.8L401.5 25.7L402.0 25.4L402.5 24.9L403.0 24.6L403.5 24.2L404.0 24.2L404.5 23.9L405.0 24.1L405.5 24.4L406.0 24.5L406.5 24.8L407.0 24.7L407.5 24.9L408.0 25.3L408.5 25.6L409.0 25.9L409.5 26.2L410.0 26.4L410.5 26.4L411.0 26.3L411.5 26.4L412.0 26.4L412.5 26.4L413.0 26.3L413.5 26.4L414.0 26.3L414.5 26.4L415.0 26.4L415.5 26.4L416.0 26.4L416.5 26.5L417.0 26.4L417.5 26.5L418.0 26.5L418.5 26.5L419.0 26.4L419.5 26.0L420.0 25.5L420.5 25.0L421.0 24.6L421.5 24.1L422.0 24.3L422.5 23.5L423.0 23.0L423.5 22.9L424.0 22.8L424.5 22.3L425.0 22.9L425.5 22.3L426.0 22.9L426.5 22.4L427.0 22.3L427.5 22.7L428.0 22.9L428.5 22.9L429.0 23.1L429.5 23.2L430.0 22.2L430.5 22.8L431.0 22.8L431.5 22.8L432.0 23.1L432.5 23.0L433.0 22.6L433.5 22.7L434.0 22.8L434.5 23.3L435.0 23.2L435.5 23.1L436.0 23.1L436.5 23.5L437.0 23.4L437.5 23.3L438.0 23.1L438.5 22.8L439.0 23.3L439.5 22.7L440.0 22.4L440.5 23.2L441.0 23.0L441.5 22.5L442.0 22.9L442.5 22.8L443.0 22.1L443.5 22.1L444.0 21.5L444.5 21.2L445.0 21.5L445.5 22.4L446.0 21.3L446.5 22.3L447.0 21.9L447.5 22.5L448.0 22.6L448.5 22.5L449.0 21.8L449.5 22.2L450.0 22.0L450.5 22.6L451.0 22.9L451.5 22.2L452.0 22.8L452.5 23.3L453.0 22.5L453.5 23.5L454.0 23.1L454.5 23.6L455.0 23.2L455.5 23.4L456.0 23.5L456.5 23.7L457.0 23.6L457.5 23.7L458.0 24.1L458.5 23.8L459.0 24.1L459.5 23.9L460.0 24.2L460.5 24.4L461.0 23.9L461.5 24.1L462.0 24.1L462.5 24.2L463.0 24.3L463.5 24.3L464.0 24.7L464.5 24.3L465.0 24.5L465.5 24.9L466.0 24.8L466.5 24.7L467.0 25.0L467.5 25.0L468.0 24.7L468.5 25.0L469.0 25.3L469.5 25.2L470.0 25.1L470.5 25.3L471.0 25.4L471.5 25.5L472.0 25.2L472.5 25.5L473.0 25.5L473.5 25.7L474.0 25.7L474.5 25.7L475.0 25.6L475.5 25.7L476.0 25.8L476.5 25.9L477.0 25.9L477.5 26.0L478.0 26.0L478.5 26.1L479.0 26.2L479.5 26.2L480.0 26.1L480.5 26.2L481.0 26.2L481.5 26.3L482.0 26.3L482.5 26.5L483.0 26.4L483.5 26.5L484.0 26.4L484.5 26.4L485.0 26.5L485.5 26.4L486.0 26.4L486.5 26.4L487.0 26.3L487.5 26.2L488.0 26.1L488.5 25.9L489.0 25.7L489.5 25.7L490.0 25.8L490.5 25.7L491.0 25.8L491.5 25.8L492.0 25.7L492.5 25.8L493.0 25.7L493.5 25.8L494.0 25.8L494.5 25.7L495.0 25.6L495.5 25.6L496.0 25.7L496.5 25.8L497.0 25.9L497.5 25.7L498.0 25.7L498.5 25.8L499.0 25.8L499.5 25.7L499.5 28.0L499.0 27.9L498.5 28.0L498.0 28.0L497.5 28.0L497.0 27.9L496.5 28.0L496.0 27.9L495.5 28.1L495.0 27.9L494.5 28.0L494.0 28.0L493.5 27.9L493.0 28.0L492.5 27.9L492.0 28.0L491.5 27.9L491.0 28.1L490.5 27.9L490.0 27.9L489.5 28.1L489.0 27.9L488.5 27.9L488.0 27.7L487.5 27.6L487.0 27.5L486.5 27.5L486.0 27.5L485.5 27.4L485.0 27.4L484.5 27.4L484.0 27.4L483.5 27.4L483.0 27.4L482.5 27.4L482.0 27.4L481.5 27.5L481.0 27.6L480.5 27.6L480.0 27.6L479.5 27.6L479.0 27.7L478.5 27.8L478.0 27.7L477.5 27.8L477.0 27.8L476.5 28.0L476.0 28.0L475.5 28.1L475.0 28.1L474.5 28.1L474.0 28.3L473.5 28.3L473.0 28.4L472.5 28.3L472.0 28.3L471.5 28.3L471.0 28.4L470.5 28.6L470.0 28.6L469.5 28.8L469.0 28.6L468.5 28.7L468.0 28.8L467.5 28.7L467.0 29.0L466.5 29.2L466.0 29.3L465.5 29.0L465.0 28.9L464.5 29.0L464.0 29.2L463.5 29.6L463.0 29.4L462.5 29.7L462.0 29.8L461.5 29.8L461.0 29.4L460.5 29.5L460.0 29.5L459.5 30.0L459.0 30.0L458.5 30.3L458.0 30.4L457.5 30.4L457.0 30.2L456.5 29.9L456.0 29.9L455.5 30.0L455.0 30.0L454.5 30.2L454.0 30.6L453.5 30.6L453.0 30.9L452.5 30.5L452.0 30.5L451.5 30.9L451.0 31.4L450.5 31.7L450.0 30.9L449.5 31.0L449.0 31.8L448.5 31.1L448.0 32.1L447.5 32.2L447.0 31.9L446.5 31.8L446.0 32.7L445.5 32.7L445.0 32.1L444.5 32.6L444.0 32.6L443.5 32.2L443.0 31.4L442.5 31.9L442.0 31.3L441.5 31.7L441.0 31.6L440.5 30.8L440.0 31.0L439.5 30.9L439.0 30.8L438.5 30.5L438.0 31.2L437.5 30.6L437.0 30.2L436.5 30.7L436.0 30.8L435.5 30.6L435.0 30.4L434.5 30.7L434.0 31.0L433.5 31.1L433.0 30.5L432.5 31.2L432.0 30.9L431.5 30.6L431.0 30.8L430.5 30.7L430.0 30.6L429.5 31.1L429.0 31.4L428.5 31.0L428.0 31.5L427.5 31.7L427.0 31.5L426.5 30.9L426.0 30.8L425.5 30.8L425.0 31.1L424.5 31.2L424.0 31.2L423.5 30.4L423.0 30.8L422.5 30.2L422.0 30.0L421.5 29.7L421.0 29.0L420.5 28.6L420.0 28.2L419.5 27.8L419.0 27.3L418.5 27.4L418.0 27.3L417.5 27.3L417.0 27.3L416.5 27.3L416.0 27.4L415.5 27.4L415.0 27.4L414.5 27.3L414.0 27.4L413.5 27.4L413.0 27.4L412.5 27.4L412.0 27.4L411.5 27.4L411.0 27.5L410.5 27.4L410.0 27.5L409.5 27.6L409.0 27.9L408.5 28.2L408.0 28.5L407.5 28.8L407.0 28.8L406.5 29.4L406.0 29.1L405.5 29.2L405.0 30.1L404.5 29.9L404.0 29.5L403.5 29.4L403.0 29.0L402.5 28.8L402.0 28.4L401.5 28.3L401.0 28.0L400.5 27.6L400.0 27.3L399.5 27.4L399.0 27.4L398.5 27.4L398.0 27.4L397.5 27.4L397.0 27.4L396.5 27.4L396.0 27.4L395.5 27.4L395.0 27.4L394.5 27.4L394.0 27.4L393.5 27.4L393.0 27.4L392.5 27.4L392.0 27.4L391.5 27.8L391.0 28.2L390.5 28.7L390.0 29.2L389.5 29.3L389.0 29.1L388.5 29.6L388.0 29.7L387.5 29.8L387.0 29.6L386.5 29.5L386.0 29.7L385.5 29.9L385.0 29.6L384.5 29.5L384.0 29.9L383.5 29.7L383.0 30.3L382.5 30.1L382.0 29.7L381.5 29.9L381.0 29.6L380.5 29.7L380.0 30.1L379.5 30.0L379.0 29.9L378.5 30.2L378.0 30.2L377.5 30.1L377.0 30.5L376.5 30.1L376.0 31.0L375.5 30.6L375.0 31.0L374.5 30.9L374.0 31.0L373.5 30.9L373.0 30.8L372.5 31.0L372.0 31.1L371.5 31.7L371.0 31.3L370.5 31.7L370.0 31.2L369.5 32.3L369.0 31.9L368.5 31.2L368.0 31.9L367.5 32.0L367.0 31.3L366.5 32.0L366.0 31.4L365.5 31.4L365.0 31.8L364.5 31.1L364.0 30.4L363.5 30.3L363.0 30.5L362.5 29.8L362.0 29.6L361.5 29.4L361.0 29.9L360.5 29.9L360.0 29.3L359.5 29.3L359.0 29.4L358.5 29.3L358.0 29.8L357.5 29.3L357.0 29.3L356.5 29.5L356.0 29.7L355.5 29.2L355.0 29.6L354.5 29.6L354.0 29.8L353.5 29.4L353.0 29.6L352.5 29.8L352.0 29.7L351.5 30.0L351.0 30.0L350.5 29.7L350.0 29.6L349.5 30.1L349.0 29.5L348.5 30.1L348.0 29.6L347.5 29.6L347.0 29.6L346.5 30.2L346.0 30.3L345.5 30.1L345.0 30.2L344.5 30.4L344.0 29.8L343.5 29.8L343.0 30.3L342.5 30.3L342.0 30.4L341.5 30.4L341.0 30.3L340.5 30.5L340.0 30.3L339.5 30.2L339.0 30.0L338.5 30.5L338.0 30.1L337.5 30.1L337.0 30.6L336.5 30.7L336.0 30.2L335.5 30.2L335.0 30.3L334.5 31.1L334.0 30.8L333.5 30.7L333.0 30.3L332.5 31.1L332.0 31.1L331.5 30.4L331.0 30.9L330.5 30.9L330.0 31.1L329.5 30.6L329.0 31.2L328.5 31.5L328.0 31.3L327.5 30.7L327.0 31.9L326.5 31.8L326.0 31.2L325.5 31.7L325.0 31.2L324.5 31.8L324.0 31.4L323.5 32.3L323.0 32.2L322.5 32.6L322.0 32.5L321.5 32.6L321.0 32.3L320.5 32.7L320.0 33.1L319.5 33.5L319.0 32.6L318.5 34.0L318.0 34.2L317.5 33.7L317.0 32.8L316.5 32.9L316.0 33.5L315.5 33.3L315.0 33.5L314.5 33.4L314.0 33.9L313.5 34.5L313.0 33.3L312.5 33.8L312.0 34.2L311.5 34.4L311.0 33.4L310.5 33.8L310.0 33.8L309.5 33.3L309.0 34.1L308.5 34.1L308.0 33.0L307.5 32.7L307.0 32.4L306.5 32.5L306.0 31.7L305.5 31.7L305.0 30.7L304.5 30.8L304.0 29.7L303.5 29.1L303.0 28.6L302.5 27.9L302.0 27.4L301.5 27.3L301.0 27.4L300.5 27.3L300.0 27.3L299.5 27.3L299.0 27.3L298.5 27.3L298.0 27.4L297.5 27.4L297.0 27.3L296.5 27.4L296.0 27.4L295.5 27.4L295.0 27.5L294.5 27.4L294.0 27.5L293.5 27.4L293.0 27.5L292.5 27.4L292.0 27.4L291.5 27.7L291.0 27.8L290.5 28.1L290.0 28.5L289.5 28.7L289.0 28.6L288.5 29.1L288.0 29.5L287.5 29.5L287.0 29.6L286.5 29.8L286.0 29.8L285.5 30.0L285.0 29.5L284.5 29.0L284.0 29.1L283.5 29.1L283.0 28.9L282.5 28.5L282.0 28.1L281.5 28.1L281.0 27.8L280.5 27.6L280.0 27.3L279.5 27.4L279.0 27.3L278.5 27.4L278.0 27.4L277.5 27.4L277.0 27.4L276.5 27.3L276.0 27.3L275.5 27.3L275.0 27.3L274.5 27.4L274.0 27.4L273.5 27.3L273.0 27.3L272.5 27.4L272.0 27.4L271.5 27.3L271.0 27.4L270.5 27.4L270.0 27.4L269.5 27.5L269.0 27.5L268.5 27.6L268.0 27.5L267.5 28.0L267.0 28.2L266.5 28.8L266.0 28.9L265.5 29.8L265.0 29.4L264.5 29.1L264.0 29.3L263.5 29.3L263.0 28.6L262.5 28.2L262.0 27.7L261.5 27.9L261.0 28.4L260.5 28.5L260.0 28.6L259.5 28.6L259.0 28.9L258.5 29.2L258.0 29.2L257.5 29.9L257.0 30.0L256.5 30.4L256.0 30.2L255.5 30.5L255.0 31.4L254.5 31.5L254.0 31.4L253.5 31.8L253.0 31.2L252.5 31.4L252.0 31.8L251.5 31.5L251.0 32.0L250.5 31.9L250.0 31.3L249.5 32.4L249.0 32.1L248.5 31.8L248.0 31.2L247.5 31.3L247.0 30.6L246.5 30.9L246.0 31.2L245.5 30.8L245.0 30.4L244.5 30.0L244.0 29.9L243.5 29.8L243.0 29.9L242.5 30.0L242.0 29.5L241.5 29.5L241.0 29.7L240.5 29.1L240.0 29.5L239.5 29.1L239.0 28.8L238.5 29.2L238.0 29.3L237.5 29.3L237.0 29.2L236.5 29.1L236.0 29.2L235.5 29.1L235.0 29.1L234.5 29.1L234.0 29.1L233.5 28.9L233.0 29.1L232.5 29.4L232.0 29.0L231.5 29.2L231.0 29.3L230.5 29.3L230.0 29.2L229.5 29.3L229.0 29.6L228.5 29.3L228.0 29.5L227.5 29.6L227.0 29.2L226.5 29.6L226.0 29.7L225.5 29.6L225.0 29.7L224.5 29.3L224.0 29.4L223.5 29.3L223.0 29.4L222.5 29.4L222.0 29.3L221.5 29.4L221.0 29.8L220.5 29.3L220.0 29.8L219.5 29.7L219.0 29.7L218.5 29.5L218.0 29.6L217.5 29.6L217.0 29.5L216.5 29.5L216.0 29.6L215.5 30.1L215.0 30.0L214.5 30.1L214.0 29.6L213.5 29.6L213.0 29.8L212.5 29.9L212.0 29.8L211.5 29.7L211.0 29.7L210.5 30.2L210.0 29.9L209.5 30.1L209.0 30.2L208.5 29.9L208.0 30.4L207.5 30.1L207.0 30.4L206.5 30.0L206.0 30.5L205.5 30.2L205.0 30.7L204.5 30.7L204.0 30.4L203.5 30.3L203.0 30.8L202.5 30.5L202.0 30.3L201.5 30.4L201.0 30.9L200.5 30.3L200.0 31.0L199.5 30.9L199.0 30.7L198.5 31.1L198.0 31.1L197.5 30.8L197.0 30.7L196.5 31.2L196.0 31.2L195.5 30.6L195.0 31.1L194.5 30.9L194.0 31.5L193.5 30.9L193.0 31.0L192.5 31.1L192.0 31.1L191.5 31.4L191.0 31.0L190.5 32.0L190.0 31.6L189.5 31.3L189.0 32.2L188.5 31.9L188.0 31.9L187.5 32.1L187.0 32.2L186.5 32.4L186.0 32.3L185.5 31.8L185.0 32.7L184.5 32.1L184.0 31.3L183.5 31.3L183.0 30.7L182.5 29.8L182.0 29.4L181.5 28.6L181.0 28.2L180.5 27.4L180.0 27.4L179.5 27.3L179.0 27.3L178.5 27.4L178.0 27.3L177.5 27.4L177.0 27.3L176.5 27.4L176.0 27.3L175.5 27.4L175.0 27.3L174.5 27.3L174.0 27.3L173.5 27.3L173.0 27.3L172.5 27.3L172.0 27.3L171.5 27.3L171.0 27.3L170.5 27.4L170.0 27.3L169.5 27.4L169.0 27.3L168.5 27.3L168.0 27.3L167.5 27.3L167.0 27.4L166.5 27.3L166.0 27.4L165.5 27.3L165.0 27.3L164.5 27.4L164.0 27.3L163.5 27.4L163.0 27.3L162.5 27.4L162.0 27.4L161.5 27.3L161.0 27.4L160.5 27.4L160.0 27.3L159.5 27.3L159.0 27.4L158.5 27.3L158.0 27.3L157.5 27.3L157.0 27.3L156.5 27.3L156.0 27.4L155.5 27.4L155.0 27.3L154.5 27.3L154.0 27.3L153.5 27.3L153.0 27.4L152.5 27.3L152.0 27.3L151.5 27.4L151.0 27.3L150.5 27.4L150.0 27.3L149.5 27.3L149.0 27.4L148.5 27.4L148.0 27.3L147.5 27.4L147.0 27.3L146.5 27.3L146.0 27.3L145.5 27.4L145.0 27.3L144.5 27.4L144.0 27.3L143.5 27.3L143.0 27.4L142.5 27.4L142.0 27.4L141.5 27.4L141.0 27.3L140.5 27.3L140.0 27.4L139.5 27.3L139.0 27.3L138.5 27.3L138.0 27.4L137.5 27.4L137.0 27.3L136.5 27.3L136.0 27.3L135.5 27.3L135.0 27.4L134.5 27.4L134.0 27.3L133.5 27.4L133.0 27.3L132.5 27.4L132.0 27.3L131.5 27.3L131.0 27.3L130.5 27.3L130.0 27.4L129.5 27.3L129.0 27.3L128.5 27.4L128.0 27.3L127.5 27.4L127.0 27.3L126.5 27.3L126.0 27.4L125.5 27.3L125.0 27.3L124.5 27.4L124.0 27.3L123.5 27.3L123.0 27.4L122.5 27.3L122.0 27.4L121.5 27.4L121.0 27.4L120.5 27.3L120.0 27.4L119.5 27.3L119.0 27.4L118.5 27.3L118.0 27.4L117.5 27.4L117.0 27.3L116.5 27.3L116.0 27.3L115.5 27.3L115.0 27.3L114.5 27.4L114.0 27.3L113.5 27.3L113.0 27.3L112.5 27.3L112.0 27.3L111.5 27.4L111.0 27.4L110.5 27.4L110.0 27.4L109.5 27.3L109.0 27.4L108.5 27.3L108.0 27.3L107.5 27.3L107.0 27.4L106.5 27.4L106.0 27.4L105.5 27.4L105.0 27.3L104.5 27.4L104.0 27.4L103.5 27.4L103.0 27.4L102.5 27.4L102.0 27.4L101.5 27.3L101.0 27.3L100.5 27.4L100.0 27.3L99.5 27.4L99.0 27.4L98.5 27.3L98.0 27.3L97.5 27.3L97.0 27.4L96.5 27.4L96.0 27.3L95.5 27.3L95.0 27.3L94.5 27.4L94.0 27.4L93.5 27.4L93.0 27.4L92.5 27.4L92.0 27.3L91.5 27.3L91.0 27.4L90.5 27.4L90.0 27.3L89.5 27.4L89.0 27.3L88.5 27.3L88.0 27.4L87.5 27.3L87.0 27.3L86.5 27.3L86.0 27.3L85.5 27.3L85.0 27.4L84.5 27.3L84.0 27.3L83.5 27.4L83.0 27.3L82.5 27.3L82.0 27.3L81.5 27.3L81.0 27.3L80.5 27.3L80.0 27.3L79.5 27.3L79.0 27.3L78.5 27.4L78.0 27.4L77.5 27.4L77.0 27.3L76.5 27.3L76.0 27.4L75.5 27.4L75.0 27.3L74.5 27.4L74.0 27.4L73.5 27.3L73.0 27.4L72.5 27.4L72.0 27.3L71.5 27.4L71.0 27.4L70.5 27.4L70.0 27.4L69.5 27.4L69.0 27.4L68.5 27.3L68.0 27.4L67.5 27.4L67.0 27.4L66.5 27.3L66.0 27.3L65.5 27.4L65.0 27.3L64.5 27.3L64.0 27.3L63.5 27.3L63.0 27.4L62.5 27.4L62.0 27.3L61.5 27.3L61.0 27.4L60.5 27.3L60.0 27.3L59.5 27.4L59.0 27.3L58.5 27.4L58.0 27.4L57.5 27.4L57.0 27.3L56.5 27.3L56.0 27.3L55.5 27.3L55.0 27.4L54.5 27.3L54.0 27.3L53.5 27.3L53.0 27.4L52.5 27.4L52.0 27.3L51.5 27.3L51.0 27.3L50.5 27.3L50.0 27.4L49.5 27.4L49.0 27.3L48.5 27.3L48.0 27.4L47.5 27.3L47.0 27.3L46.5 27.4L46.0 27.4L45.5 27.4L45.0 27.3L44.5 27.3L44.0 27.4L43.5 27.3L43.0 27.4L42.5 27.3L42.0 27.3L41.5 27.4L41.0 27.3L40.5 27.4L40.0 27.4L39.5 27.3L39.0 27.3L38.5 27.3L38.0 27.3L37.5 27.3L37.0 27.3L36.5 27.3L36.0 27.3L35.5 27.3L35.0 27.3L34.5 27.4L34.0 27.4L33.5 27.3L33.0 27.3L32.5 27.4L32.0 27.4L31.5 27.4L31.0 27.4L30.5 27.3L30.0 27.3L29.5 27.4L29.0 27.4L28.5 27.4L28.0 27.4L27.5 27.3L27.0 27.3L26.5 27.4L26.0 27.4L25.5 27.4L25.0 27.4L24.5 27.3L24.0 27.3L23.5 27.3L23.0 27.3L22.5 27.4L22.0 27.4L21.5 27.3L21.0 27.4L20.5 27.4L20.0 27.3L19.5 27.3L19.0 27.4L18.5 27.3L18.0 27.4L17.5 27.3L17.0 27.3L16.5 27.4L16.0 27.3L15.5 27.3L15.0 27.3L14.5 27.4L14.0 27.3L13.5 27.3L13.0 27.4L12.5 27.4L12.0 27.3L11.5 27.3L11.0 27.3L10.5 27.3L10.0 27.4L9.5 27.3L9.0 27.4L8.5 27.3L8.0 27.3L7.5 27.4L7.0 27.4L6.5 27.4L6.0 27.3L5.5 27.3L5.0 27.3L4.5 27.4L4.0 27.4L3.5 27.3L3.0 27.4L2.5 27.3L2.0 27.3L1.5 27.3L1.0 27.4L0.5 27.3L0.0 27.3Z" fill="#17a01a"/></svg>
<div style="left:7.3px;top:198px;width:121.7px;height:1px;background:#3a3a3a;"></div>
<div style="left:7.3px;top:199.6px;width:88px;height:10.4px;background:#3fcfcf;"></div>
<div class="t" style="left:17.6px;top:201.3px;font-size:7.2px;color:#123;letter-spacing:-.15px;">Banjo</div>
<svg style="left:0px;top:199.6px;" width="100" height="11" viewBox="0 0 100 11"><path d="M10.2 6c.8-2 1.8-2 2.5-.6s1.700 1.400 2.500-.600" stroke="#123" stroke-width="1" fill="none"/><path d="M62.8 1.5l5.8 3.7-5.8 3.7z" fill="#22e022" stroke="#0c9a0c" stroke-width=".8"/><circle cx="75.8" cy="5.2" r="3.1" fill="#4a0808"/><path d="M83 2.7h6.4M83 5.2h6.4M83 7.7h6.4" stroke="#3a3a3a" stroke-width="1.1"/></svg>
<div style="left:19px;top:211.8px;width:57.6px;height:10.2px;background:#2a2a2a;"></div>
<div class="t" style="left:20.4px;top:213.4px;font-size:7.2px;color:#e6e6e6;">Soundbites</div>
<svg style="left:68.4px;top:216px;" width="4.6" height="2.4" viewBox="0 0 4.6 2.4"><path d="M0 0h4.6l-2.3 2.4z" fill="#555"/></svg>
<div style="left:19px;top:224px;width:57.6px;height:10.2px;background:#2a2a2a;"></div>
<div class="t" style="left:22.6px;top:225.5px;font-size:7.6px;color:#eee;font-weight:bold;">I</div>
<div class="t" style="left:27.4px;top:225.5px;font-size:7.4px;color:#e6e6e6;font-style:italic;letter-spacing:-.35px;">Built-i...put 1</div>
<svg style="left:68.4px;top:228.2px;" width="4.6" height="2.4" viewBox="0 0 4.6 2.4"><path d="M0 0h4.6l-2.3 2.4z" fill="#555"/></svg>
<div style="left:19px;top:236.4px;width:57.6px;height:10.2px;background:#2a2a2a;"></div>
<div class="t" style="left:20.6px;top:237.9px;font-size:7.6px;color:#eee;font-weight:bold;">O</div>
<div class="t" style="left:27.4px;top:237.9px;font-size:7.4px;color:#e6e6e6;letter-spacing:-.35px;">Built-i...ut 1-2</div>
<svg style="left:68.4px;top:240.6px;" width="4.6" height="2.4" viewBox="0 0 4.6 2.4"><path d="M0 0h4.6l-2.3 2.4z" fill="#555"/></svg>
<svg style="left:10.4px;top:247.6px;" width="4" height="5" viewBox="0 0 4 5"><path d="M.4 .4l2.6 2-2.6 2z" fill="#1c1c1c"/></svg>
<div style="left:95.6px;top:199.6px;width:5.2px;height:54.6px;background:#0b2f42;"></div>
<div style="left:95.4px;top:201.2px;width:5.4px;height:0.8px;background:#6a6a50;"></div>
<svg style="left:104.8px;top:201px;" width="8" height="8" viewBox="0 0 8 8"><circle cx="3" cy="3" r="2.1" fill="none" stroke="#626262" stroke-width="1"/><path d="M4.6 4.6l2.2 2.2" stroke="#626262" stroke-width="1.2"/></svg>
<div style="left:108.9px;top:210.6px;width:2.6px;height:40px;background:#414141;border-radius:1.3px;"></div>
<div style="left:108.9px;top:226.6px;width:2.6px;height:8px;background:#5c5c5c;border-radius:1.3px;"></div>
<svg style="left:129px;top:196.8px;" width="499.5" height="4" viewBox="0 0 499.5 4"><rect y=".3" width="499.5" height="1.700" fill="#161616"/><rect y="2" width="499.5" height="1.200" fill="#909090"/></svg>
<div style="left:129px;top:200.8px;width:499.5px;height:53.2px;background:#6fe9ea;"></div>
<svg style="left:129px;top:200.8px;" width="499.5" height="53.2" viewBox="0 0 499.5 53.2"><path d="M0.0 22.6L0.5 23.1L1.0 22.7L1.5 22.6L2.0 22.8L2.5 22.9L3.0 22.9L3.5 23.1L4.0 23.5L4.5 23.5L5.0 23.6L5.5 23.7L6.0 23.4L6.5 23.9L7.0 24.1L7.5 23.7L8.0 23.8L8.5 23.6L9.0 24.0L9.5 23.8L10.0 23.9L10.5 24.1L11.0 24.2L11.5 24.2L12.0 24.6L12.5 24.6L13.0 24.5L13.5 24.4L14.0 24.7L14.5 24.3L15.0 24.3L15.5 18.6L16.0 9.0L16.5 9.2L17.0 10.5L17.5 8.7L18.0 12.4L18.5 13.8L19.0 14.8L19.5 15.9L20.0 14.9L20.5 16.1L21.0 16.0L21.5 16.1L22.0 15.7L22.5 16.1L23.0 15.7L23.5 17.7L24.0 15.8L24.5 17.9L25.0 17.6L25.5 17.6L26.0 18.8L26.5 18.1L27.0 19.1L27.5 19.1L28.0 19.3L28.5 20.6L29.0 19.2L29.5 19.3L30.0 19.4L30.5 19.8L31.0 20.4L31.5 20.5L32.0 20.6L32.5 19.9L33.0 20.4L33.5 21.3L34.0 21.1L34.5 21.2L35.0 21.1L35.5 22.1L36.0 22.1L36.5 22.2L37.0 22.3L37.5 22.6L38.0 21.5L38.5 22.0L39.0 22.3L39.5 22.5L40.0 21.9L40.5 22.2L41.0 22.8L41.5 23.1L42.0 23.1L42.5 23.2L43.0 22.9L43.5 22.9L44.0 22.9L44.5 23.0L45.0 23.5L45.5 23.4L46.0 23.3L46.5 23.1L47.0 23.6L47.5 16.9L48.0 5.6L48.5 5.7L49.0 9.9L49.5 9.4L50.0 9.3L50.5 12.6L51.0 14.9L51.5 15.7L52.0 13.8L52.5 14.6L53.0 16.8L53.5 14.8L54.0 15.2L54.5 14.5L55.0 16.7L55.5 16.9L56.0 14.7L56.5 17.4L57.0 16.1L57.5 16.5L58.0 18.8L58.5 18.9L59.0 18.1L59.5 18.5L60.0 18.3L60.5 18.6L61.0 19.6L61.5 19.7L62.0 19.9L62.5 19.6L63.0 20.1L63.5 20.0L64.0 20.2L64.5 20.7L65.0 21.2L65.5 20.0L66.0 20.4L66.5 21.7L67.0 20.9L67.5 21.8L68.0 21.2L68.5 21.8L69.0 21.3L69.5 21.9L70.0 21.6L70.5 21.6L71.0 21.2L71.5 22.2L72.0 22.3L72.5 22.4L73.0 22.0L73.5 22.3L74.0 22.6L74.5 22.4L75.0 22.4L75.5 23.3L76.0 23.2L76.5 22.6L77.0 23.2L77.5 23.3L78.0 23.0L78.5 18.1L79.0 9.1L79.5 9.2L80.0 7.0L80.5 11.2L81.0 11.7L81.5 12.9L82.0 15.3L82.5 15.4L83.0 14.4L83.5 16.9L84.0 15.5L84.5 16.0L85.0 15.7L85.5 17.3L86.0 17.3L86.5 16.0L87.0 15.5L87.5 16.1L88.0 18.2L88.5 18.3L89.0 17.7L89.5 18.3L90.0 19.3L90.5 20.2L91.0 19.4L91.5 19.5L92.0 20.7L92.5 19.4L93.0 20.4L93.5 19.3L94.0 20.7L94.5 19.7L95.0 21.0L95.5 19.9L96.0 21.0L96.5 21.6L97.0 20.8L97.5 21.6L98.0 22.2L98.5 22.0L99.0 21.5L99.5 22.4L100.0 22.3L100.5 21.5L101.0 22.3L101.5 22.5L102.0 22.4L102.5 21.8L103.0 22.0L103.5 22.8L104.0 22.4L104.5 22.6L105.0 22.9L105.5 22.6L106.0 23.1L106.5 23.0L107.0 23.6L107.5 23.5L108.0 23.1L108.5 23.0L109.0 23.0L109.5 23.4L110.0 23.7L110.5 18.4L111.0 7.4L111.5 6.4L112.0 8.5L112.5 11.1L113.0 11.8L113.5 14.3L114.0 15.9L114.5 14.8L115.0 14.9L115.5 15.1L116.0 17.1L116.5 16.2L117.0 14.8L117.5 16.7L118.0 15.6L118.5 15.3L119.0 15.7L119.5 16.8L120.0 17.2L120.5 18.2L121.0 18.6L121.5 18.1L122.0 18.4L122.5 18.8L123.0 19.1L123.5 19.3L124.0 20.3L124.5 19.7L125.0 20.4L125.5 20.7L126.0 19.4L126.5 20.5L127.0 20.7L127.5 21.2L128.0 20.5L128.5 21.5L129.0 20.8L129.5 21.8L130.0 22.3L130.5 21.4L131.0 21.3L131.5 21.7L132.0 22.3L132.5 22.3L133.0 22.3L133.5 21.9L134.0 22.1L134.5 22.7L135.0 22.2L135.5 22.6L136.0 22.3L136.5 23.3L137.0 22.5L137.5 23.3L138.0 22.6L138.5 23.0L139.0 22.8L139.5 23.3L140.0 23.2L140.5 22.9L141.0 23.6L141.5 22.7L142.0 16.9L142.5 18.5L143.0 19.4L143.5 19.6L144.0 18.9L144.5 20.8L145.0 21.0L145.5 21.0L146.0 21.2L146.5 22.1L147.0 22.1L147.5 21.4L148.0 21.6L148.5 22.3L149.0 21.5L149.5 21.9L150.0 22.6L150.5 21.8L151.0 22.3L151.5 22.8L152.0 23.1L152.5 23.3L153.0 23.2L153.5 23.4L154.0 23.4L154.5 23.4L155.0 23.5L155.5 23.7L156.0 23.9L156.5 23.4L157.0 23.7L157.5 23.8L158.0 24.2L158.5 24.1L159.0 24.2L159.5 24.4L160.0 24.5L160.5 24.5L161.0 24.7L161.5 24.2L162.0 24.6L162.5 24.7L163.0 24.7L163.5 24.3L164.0 24.4L164.5 24.6L165.0 24.5L165.5 24.5L166.0 24.6L166.5 24.9L167.0 24.7L167.5 24.9L168.0 24.9L168.5 25.0L169.0 25.1L169.5 25.3L170.0 25.1L170.5 25.0L171.0 25.2L171.5 25.4L172.0 25.2L172.5 18.2L173.0 10.4L173.5 10.7L174.0 12.3L174.5 13.8L175.0 15.1L175.5 13.5L176.0 16.4L176.5 17.5L177.0 17.2L177.5 18.3L178.0 17.6L178.5 17.4L179.0 17.4L179.5 18.6L180.0 18.9L180.5 17.8L181.0 18.0L181.5 18.6L182.0 18.7L182.5 18.8L183.0 19.8L183.5 19.5L184.0 20.3L184.5 20.3L185.0 21.2L185.5 21.3L186.0 21.7L186.5 20.5L187.0 21.1L187.5 20.7L188.0 21.6L188.5 21.4L189.0 21.0L189.5 22.0L190.0 22.2L190.5 22.0L191.0 22.1L191.5 22.8L192.0 22.4L192.5 23.0L193.0 22.2L193.5 22.9L194.0 22.5L194.5 22.8L195.0 23.2L195.5 22.8L196.0 22.5L196.5 23.0L197.0 22.7L197.5 23.0L198.0 23.1L198.5 23.5L199.0 23.3L199.5 23.6L200.0 23.8L200.5 23.8L201.0 23.5L201.5 23.8L202.0 23.7L202.5 24.0L203.0 24.2L203.5 23.6L204.0 24.0L204.5 14.8L205.0 4.8L205.5 6.6L206.0 6.2L206.5 8.5L207.0 8.7L207.5 11.3L208.0 12.0L208.5 11.2L209.0 11.7L209.5 13.3L210.0 12.9L210.5 15.4L211.0 14.8L211.5 12.5L212.0 12.9L212.5 12.7L213.0 14.1L213.5 15.0L214.0 15.8L214.5 16.9L215.0 17.1L215.5 17.8L216.0 16.9L216.5 18.5L217.0 17.2L217.5 17.5L218.0 19.0L218.5 19.1L219.0 18.9L219.5 19.4L220.0 19.1L220.5 19.4L221.0 19.8L221.5 18.5L222.0 18.9L222.5 19.7L223.0 19.5L223.5 20.8L224.0 20.1L224.5 21.3L225.0 20.8L225.5 21.2L226.0 21.1L226.5 21.1L227.0 20.6L227.5 21.7L228.0 20.6L228.5 21.5L229.0 21.3L229.5 22.2L230.0 21.3L230.5 21.4L231.0 22.2L231.5 22.0L232.0 22.5L232.5 22.3L233.0 22.3L233.5 22.3L234.0 22.2L234.5 22.7L235.0 22.8L235.5 18.2L236.0 5.9L236.5 7.1L237.0 8.5L237.5 9.7L238.0 10.7L238.5 12.8L239.0 14.6L239.5 14.8L240.0 14.6L240.5 17.0L241.0 16.3L241.5 17.7L242.0 15.7L242.5 16.4L243.0 16.1L243.5 17.6L244.0 15.7L244.5 15.8L245.0 16.7L245.5 17.0L246.0 19.0L246.5 18.4L247.0 19.9L247.5 19.8L248.0 19.2L248.5 20.5L249.0 19.6L249.5 20.5L250.0 20.4L250.5 19.3L251.0 20.6L251.5 19.4L252.0 19.8L252.5 20.8L253.0 20.8L253.5 21.7L254.0 21.3L254.5 21.7L255.0 21.0L255.5 21.7L256.0 21.9L256.5 22.0L257.0 22.0L257.5 21.8L258.0 22.4L258.5 22.4L259.0 22.5L259.5 22.4L260.0 22.2L260.5 22.9L261.0 22.5L261.5 22.4L262.0 22.5L262.5 22.6L263.0 23.3L263.5 23.2L264.0 23.6L264.5 23.0L265.0 23.2L265.5 23.4L266.0 23.5L266.5 22.0L267.0 17.7L267.5 18.7L268.0 19.5L268.5 18.9L269.0 20.1L269.5 20.5L270.0 19.7L270.5 21.0L271.0 20.8L271.5 21.2L272.0 22.5L272.5 21.8L273.0 21.8L273.5 22.0L274.0 22.2L274.5 22.0L275.0 21.9L275.5 21.8L276.0 22.3L276.5 22.5L277.0 22.5L277.5 22.7L278.0 23.3L278.5 23.7L279.0 23.7L279.5 23.9L280.0 23.4L280.5 23.8L281.0 23.3L281.5 23.9L282.0 23.7L282.5 23.6L283.0 23.5L283.5 24.0L284.0 24.1L284.5 24.1L285.0 24.1L285.5 24.4L286.0 24.4L286.5 24.2L287.0 24.7L287.5 24.4L288.0 24.9L288.5 24.4L289.0 24.4L289.5 24.8L290.0 24.8L290.5 24.5L291.0 25.0L291.5 24.7L292.0 25.0L292.5 25.0L293.0 25.0L293.5 24.9L294.0 25.0L294.5 25.3L295.0 25.3L295.5 25.1L296.0 25.1L296.5 25.2L297.0 25.2L297.5 25.4L298.0 25.1L298.5 19.9L299.0 11.7L299.5 12.8L300.0 11.8L300.5 12.0L301.0 13.2L301.5 13.5L302.0 14.8L302.5 16.4L303.0 17.7L303.5 18.2L304.0 19.0L304.5 17.6L305.0 18.0L305.5 17.5L306.0 17.7L306.5 17.9L307.0 17.6L307.5 18.1L308.0 19.0L308.5 19.5L309.0 20.1L309.5 20.7L310.0 20.5L310.5 20.8L311.0 21.4L311.5 21.1L312.0 20.4L312.5 20.6L313.0 20.7L313.5 20.4L314.0 21.6L314.5 21.2L315.0 22.0L315.5 20.9L316.0 22.2L316.5 22.3L317.0 22.5L317.5 21.9L318.0 22.5L318.5 23.1L319.0 22.6L319.5 22.5L320.0 22.4L320.5 22.4L321.0 22.7L321.5 22.6L322.0 22.7L322.5 23.4L323.0 23.3L323.5 22.9L324.0 23.7L324.5 23.3L325.0 23.3L325.5 23.6L326.0 23.5L326.5 23.6L327.0 24.0L327.5 15.8L328.0 9.5L328.5 10.1L329.0 8.7L329.5 7.6L330.0 7.9L330.5 9.9L331.0 10.6L331.5 10.8L332.0 8.8L332.5 11.6L333.0 10.4L333.5 12.9L334.0 13.0L334.5 13.2L335.0 14.5L335.5 14.6L336.0 14.3L336.5 16.5L337.0 15.1L337.5 14.4L338.0 16.3L338.5 15.3L339.0 15.7L339.5 14.5L340.0 15.6L340.5 14.8L341.0 16.2L341.5 16.5L342.0 17.8L342.5 17.1L343.0 17.7L343.5 18.3L344.0 19.0L344.5 18.6L345.0 17.2L345.5 17.0L346.0 17.4L346.5 17.1L347.0 19.1L347.5 18.4L348.0 18.4L348.5 18.9L349.0 19.4L349.5 20.0L350.0 19.6L350.5 20.0L351.0 19.2L351.5 20.4L352.0 19.3L352.5 20.3L353.0 19.4L353.5 19.6L354.0 20.6L354.5 21.1L355.0 20.4L355.5 20.1L356.0 20.5L356.5 21.3L357.0 21.2L357.5 21.1L358.0 21.6L358.5 20.7L359.0 21.6L359.5 20.9L360.0 22.0L360.5 20.8L361.0 21.6L361.5 22.2L362.0 21.2L362.5 22.2L363.0 22.0L363.5 22.0L364.0 22.0L364.5 22.7L365.0 21.7L365.5 21.9L366.0 22.7L366.5 22.8L367.0 22.2L367.5 22.0L368.0 22.8L368.5 22.8L369.0 22.7L369.5 22.8L370.0 22.5L370.5 23.1L371.0 22.4L371.5 22.6L372.0 22.7L372.5 23.0L373.0 23.2L373.5 22.6L374.0 23.2L374.5 23.4L375.0 23.0L375.5 23.4L376.0 23.4L376.5 23.5L377.0 22.9L377.5 23.3L378.0 23.1L378.5 23.5L379.0 23.9L379.5 23.2L380.0 23.6L380.5 23.3L381.0 23.9L381.5 23.4L382.0 23.5L382.5 23.6L383.0 23.4L383.5 23.7L384.0 24.0L384.5 24.1L385.0 23.5L385.5 23.6L386.0 23.5L386.5 23.9L387.0 24.2L387.5 24.3L388.0 24.2L388.5 23.7L389.0 23.9L389.5 24.2L390.0 23.8L390.5 23.8L391.0 24.2L391.5 24.3L392.0 24.0L392.5 24.3L393.0 24.4L393.5 24.2L394.0 24.2L394.5 20.6L395.0 12.8L395.5 13.9L396.0 16.7L396.5 15.7L397.0 16.5L397.5 17.5L398.0 17.7L398.5 19.5L399.0 19.2L399.5 19.2L400.0 19.4L400.5 19.3L401.0 18.5L401.5 19.0L402.0 19.5L402.5 20.5L403.0 20.2L403.5 21.3L404.0 21.0L404.5 20.5L405.0 22.0L405.5 22.0L406.0 22.1L406.5 21.8L407.0 22.0L407.5 21.3L408.0 22.1L408.5 21.8L409.0 22.1L409.5 21.6L410.0 21.9L410.5 22.7L411.0 23.1L411.5 22.7L412.0 22.5L412.5 23.1L413.0 23.5L413.5 22.9L414.0 22.9L414.5 23.3L415.0 22.8L415.5 23.3L416.0 23.2L416.5 23.6L417.0 23.5L417.5 23.7L418.0 23.4L418.5 24.0L419.0 24.0L419.5 23.7L420.0 23.8L420.5 24.1L421.0 24.2L421.5 24.1L422.0 24.2L422.5 24.0L423.0 24.4L423.5 24.3L424.0 24.3L424.5 24.4L425.0 24.4L425.5 24.6L426.0 24.8L426.5 24.5L427.0 24.5L427.5 18.5L428.0 13.4L428.5 14.2L429.0 12.9L429.5 14.1L430.0 15.6L430.5 13.9L431.0 15.4L431.5 14.6L432.0 13.8L432.5 15.6L433.0 16.8L433.5 16.3L434.0 18.3L434.5 18.1L435.0 18.6L435.5 19.2L436.0 19.8L436.5 20.1L437.0 19.8L437.5 20.2L438.0 18.8L438.5 18.6L439.0 19.9L439.5 19.8L440.0 19.2L440.5 20.6L441.0 20.1L441.5 21.3L442.0 21.3L442.5 20.7L443.0 21.7L443.5 20.9L444.0 21.4L444.5 21.0L445.0 21.8L445.5 22.1L446.0 21.9L446.5 22.3L447.0 21.8L447.5 22.3L448.0 21.7L448.5 21.8L449.0 22.3L449.5 22.8L450.0 23.1L450.5 23.0L451.0 23.0L451.5 23.3L452.0 22.7L452.5 22.9L453.0 22.7L453.5 23.5L454.0 23.3L454.5 22.9L455.0 23.6L455.5 23.2L456.0 23.3L456.5 23.4L457.0 23.9L457.5 15.7L458.0 4.1L458.5 7.5L459.0 7.0L459.5 7.3L460.0 11.1L460.5 12.9L461.0 11.5L461.5 13.5L462.0 10.6L462.5 11.1L463.0 13.9L463.5 11.0L464.0 12.2L464.5 14.1L465.0 15.2L465.5 15.6L466.0 15.8L466.5 15.1L467.0 17.1L467.5 16.1L468.0 16.0L468.5 16.4L469.0 17.4L469.5 16.6L470.0 18.3L470.5 17.9L471.0 16.6L471.5 18.0L472.0 18.8L472.5 19.3L473.0 18.3L473.5 18.9L474.0 20.3L474.5 19.3L475.0 20.5L475.5 20.0L476.0 20.5L476.5 20.5L477.0 20.1L477.5 21.0L478.0 20.8L478.5 19.6L479.0 20.2L479.5 21.1L480.0 20.3L480.5 21.7L481.0 21.1L481.5 21.7L482.0 21.5L482.5 22.1L483.0 21.6L483.5 21.8L484.0 21.5L484.5 21.9L485.0 22.0L485.5 21.9L486.0 22.5L486.5 22.6L487.0 22.0L487.5 22.8L488.0 22.2L488.5 22.2L489.0 22.9L489.5 19.8L490.0 13.5L490.5 13.9L491.0 16.3L491.5 15.8L492.0 16.1L492.5 18.5L493.0 16.9L493.5 17.2L494.0 16.9L494.5 18.2L495.0 18.7L495.5 18.9L496.0 19.0L496.5 18.3L497.0 19.1L497.5 19.0L498.0 20.8L498.5 20.1L499.0 20.3L499.5 21.1L499.5 40.7L499.0 39.7L498.5 40.2L498.0 42.6L497.5 40.5L497.0 44.4L496.5 45.8L496.0 43.0L495.5 47.8L495.0 44.4L494.5 45.4L494.0 46.5L493.5 46.9L493.0 44.3L492.5 47.3L492.0 46.4L491.5 47.5L491.0 46.5L490.5 47.7L490.0 52.9L489.5 37.6L489.0 31.4L488.5 31.4L488.0 31.6L487.5 31.7L487.0 31.4L486.5 32.2L486.0 31.8L485.5 31.5L485.0 32.5L484.5 31.7L484.0 32.1L483.5 32.5L483.0 31.7L482.5 32.4L482.0 32.9L481.5 32.8L481.0 32.6L480.5 33.4L480.0 32.5L479.5 32.6L479.0 34.2L478.5 33.1L478.0 33.1L477.5 33.5L477.0 34.4L476.5 34.5L476.0 33.7L475.5 35.0L475.0 34.9L474.5 35.1L474.0 35.4L473.5 35.2L473.0 36.6L472.5 36.8L472.0 37.7L471.5 38.7L471.0 37.0L470.5 37.5L470.0 39.6L469.5 38.9L469.0 38.5L468.5 38.5L468.0 39.4L467.5 39.4L467.0 43.1L466.5 42.7L466.0 45.1L465.5 45.5L465.0 43.4L464.5 45.1L464.0 47.0L463.5 45.5L463.0 48.5L462.5 49.0L462.0 45.9L461.5 46.3L461.0 47.1L460.5 48.6L460.0 47.1L459.5 48.4L459.0 52.9L458.5 52.8L458.0 52.9L457.5 38.3L457.0 30.3L456.5 29.7L456.0 30.1L455.5 30.4L455.0 30.1L454.5 30.4L454.0 30.1L453.5 30.6L453.0 30.3L452.5 30.9L452.0 30.3L451.5 31.0L451.0 30.9L450.5 31.1L450.0 31.0L449.5 30.7L449.0 30.8L448.5 31.3L448.0 31.2L447.5 31.5L447.0 32.2L446.5 31.5L446.0 32.3L445.5 31.9L445.0 32.4L444.5 32.2L444.0 32.9L443.5 32.1L443.0 32.9L442.5 33.2L442.0 33.3L441.5 34.8L441.0 35.4L440.5 35.7L440.0 35.1L439.5 36.4L439.0 35.3L438.5 37.2L438.0 35.5L437.5 37.5L437.0 37.1L436.5 37.0L436.0 37.0L435.5 38.8L435.0 38.6L434.5 39.2L434.0 39.3L433.5 40.6L433.0 39.5L432.5 42.6L432.0 42.7L431.5 40.4L431.0 42.2L430.5 40.9L430.0 40.0L429.5 42.7L429.0 40.9L428.5 42.6L428.0 43.4L427.5 34.5L427.0 29.6L426.5 30.3L426.0 30.1L425.5 29.8L425.0 30.3L424.5 30.5L424.0 30.0L423.5 30.2L423.0 30.7L422.5 30.7L422.0 30.4L421.5 30.6L421.0 30.3L420.5 30.7L420.0 31.0L419.5 30.6L419.0 30.9L418.5 31.1L418.0 30.8L417.5 31.8L417.0 31.1L416.5 31.8L416.0 31.3L415.5 31.7L415.0 31.4L414.5 31.7L414.0 32.6L413.5 32.3L413.0 32.6L412.5 31.7L412.0 32.5L411.5 32.4L411.0 33.5L410.5 33.7L410.0 33.4L409.5 33.9L409.0 35.4L408.5 35.4L408.0 34.6L407.5 35.0L407.0 35.6L406.5 35.2L406.0 35.2L405.5 36.3L405.0 36.8L404.5 37.8L404.0 37.0L403.5 39.1L403.0 38.1L402.5 39.3L402.0 42.1L401.5 43.0L401.0 40.6L400.5 40.3L400.0 40.1L399.5 43.0L399.0 40.3L398.5 42.9L398.0 42.4L397.5 42.6L397.0 43.0L396.5 43.8L396.0 43.5L395.5 45.4L395.0 48.4L394.5 34.8L394.0 29.3L393.5 29.7L393.0 30.0L392.5 29.5L392.0 29.6L391.5 29.6L391.0 29.9L390.5 29.6L390.0 30.0L389.5 30.1L389.0 29.8L388.5 29.7L388.0 29.9L387.5 29.8L387.0 30.3L386.5 30.2L386.0 30.3L385.5 29.8L385.0 30.3L384.5 30.2L384.0 30.5L383.5 30.1L383.0 30.4L382.5 30.3L382.0 30.6L381.5 30.7L381.0 30.6L380.5 30.4L380.0 30.7L379.5 30.3L379.0 30.7L378.5 30.9L378.0 30.2L377.5 30.5L377.0 30.6L376.5 30.9L376.0 31.2L375.5 30.9L375.0 30.4L374.5 31.0L374.0 30.6L373.5 31.3L373.0 30.6L372.5 30.6L372.0 30.5L371.5 31.4L371.0 30.6L370.5 31.4L370.0 31.3L369.5 31.3L369.0 31.4L368.5 30.9L368.0 31.6L367.5 31.2L367.0 31.7L366.5 31.2L366.0 31.4L365.5 31.9L365.0 31.3L364.5 31.8L364.0 32.5L363.5 31.7L363.0 31.5L362.5 31.9L362.0 32.8L361.5 32.3L361.0 31.9L360.5 33.2L360.0 33.1L359.5 32.8L359.0 32.6L358.5 33.0L358.0 32.4L357.5 33.0L357.0 32.4L356.5 32.4L356.0 33.7L355.5 33.1L355.0 33.1L354.5 33.1L354.0 34.3L353.5 34.6L353.0 33.3L352.5 34.1L352.0 33.6L351.5 34.7L351.0 34.9L350.5 34.8L350.0 34.4L349.5 34.0L349.0 34.8L348.5 35.3L348.0 35.5L347.5 35.0L347.0 35.3L346.5 37.2L346.0 36.9L345.5 35.8L345.0 35.9L344.5 36.8L344.0 37.6L343.5 37.9L343.0 37.8L342.5 36.9L342.0 37.1L341.5 37.5L341.0 39.6L340.5 39.0L340.0 42.1L339.5 42.4L339.0 43.4L338.5 42.2L338.0 43.8L337.5 41.9L337.0 44.5L336.5 42.9L336.0 43.6L335.5 45.7L335.0 42.6L334.5 46.1L334.0 45.3L333.5 47.5L333.0 48.7L332.5 51.6L332.0 49.4L331.5 49.5L331.0 50.9L330.5 51.7L330.0 51.5L329.5 46.4L329.0 48.7L328.5 47.7L328.0 47.4L327.5 38.3L327.0 30.0L326.5 30.2L326.0 30.1L325.5 30.3L325.0 30.5L324.5 30.3L324.0 30.8L323.5 30.4L323.0 31.0L322.5 31.0L322.0 30.5L321.5 31.0L321.0 31.4L320.5 31.0L320.0 31.2L319.5 31.3L319.0 31.0L318.5 31.5L318.0 31.5L317.5 32.0L317.0 31.9L316.5 31.8L316.0 31.9L315.5 32.3L315.0 32.7L314.5 32.8L314.0 34.0L313.5 33.9L313.0 33.9L312.5 33.5L312.0 34.1L311.5 34.5L311.0 34.4L310.5 34.4L310.0 36.0L309.5 36.6L309.0 35.8L308.5 38.6L308.0 37.0L307.5 38.3L307.0 39.3L306.5 38.7L306.0 39.2L305.5 38.3L305.0 39.6L304.5 40.0L304.0 38.5L303.5 39.0L303.0 40.6L302.5 38.8L302.0 40.3L301.5 42.8L301.0 44.4L300.5 45.1L300.0 45.7L299.5 43.9L299.0 44.0L298.5 35.1L298.0 29.8L297.5 30.2L297.0 30.0L296.5 30.0L296.0 30.0L295.5 30.4L295.0 29.9L294.5 30.6L294.0 30.0L293.5 30.7L293.0 30.3L292.5 30.9L292.0 30.5L291.5 31.1L291.0 31.3L290.5 31.0L290.0 31.6L289.5 31.9L289.0 31.0L288.5 31.2L288.0 31.7L287.5 32.0L287.0 31.9L286.5 32.0L286.0 32.2L285.5 32.3L285.0 31.8L284.5 32.6L284.0 32.9L283.5 33.5L283.0 32.8L282.5 32.9L282.0 34.4L281.5 34.1L281.0 33.2L280.5 34.9L280.0 34.0L279.5 35.5L279.0 34.7L278.5 36.8L278.0 36.0L277.5 38.4L277.0 37.9L276.5 37.3L276.0 38.1L275.5 39.4L275.0 39.5L274.5 40.0L274.0 38.4L273.5 39.9L273.0 39.6L272.5 41.3L272.0 39.0L271.5 40.4L271.0 41.1L270.5 41.4L270.0 45.2L269.5 45.5L269.0 43.9L268.5 44.9L268.0 46.1L267.5 47.5L267.0 47.0L266.5 36.6L266.0 30.7L265.5 30.9L265.0 31.5L264.5 31.5L264.0 31.5L263.5 31.0L263.0 30.9L262.5 30.9L262.0 31.5L261.5 31.1L261.0 31.8L260.5 31.5L260.0 32.7L259.5 32.0L259.0 32.2L258.5 32.2L258.0 32.1L257.5 32.8L257.0 32.2L256.5 32.3L256.0 32.3L255.5 32.3L255.0 33.6L254.5 33.8L254.0 34.2L253.5 33.2L253.0 34.3L252.5 34.7L252.0 35.2L251.5 35.3L251.0 35.9L250.5 36.2L250.0 36.8L249.5 35.1L249.0 35.8L248.5 35.8L248.0 36.1L247.5 38.2L247.0 37.5L246.5 40.1L246.0 39.5L245.5 40.8L245.0 40.7L244.5 42.9L244.0 42.7L243.5 44.6L243.0 43.3L242.5 42.8L242.0 43.4L241.5 42.1L241.0 41.1L240.5 42.7L240.0 45.0L239.5 44.4L239.0 45.6L238.5 48.2L238.0 48.5L237.5 48.3L237.0 49.0L236.5 51.1L236.0 52.9L235.5 38.5L235.0 31.9L234.5 32.0L234.0 31.4L233.5 31.3L233.0 31.1L232.5 31.1L232.0 31.3L231.5 31.6L231.0 31.6L230.5 32.1L230.0 31.8L229.5 32.8L229.0 32.8L228.5 32.6L228.0 32.7L227.5 32.3L227.0 33.4L226.5 32.7L226.0 32.5L225.5 32.8L225.0 34.1L224.5 32.9L224.0 34.0L223.5 33.4L223.0 34.0L222.5 34.0L222.0 34.3L221.5 34.9L221.0 36.7L220.5 35.5L220.0 35.6L219.5 36.2L219.0 38.2L218.5 38.2L218.0 36.6L217.5 38.0L217.0 37.7L216.5 38.9L216.0 38.6L215.5 41.3L215.0 41.1L214.5 42.1L214.0 43.1L213.5 41.9L213.0 45.1L212.5 46.0L212.0 45.3L211.5 43.3L211.0 45.5L210.5 46.3L210.0 44.3L209.5 46.8L209.0 46.2L208.5 47.0L208.0 49.1L207.5 46.9L207.0 50.3L206.5 49.2L206.0 52.9L205.5 52.9L205.0 52.9L204.5 37.8L204.0 30.3L203.5 30.4L203.0 29.8L202.5 30.4L202.0 30.0L201.5 30.7L201.0 30.2L200.5 30.6L200.0 30.0L199.5 30.7L199.0 30.8L198.5 30.3L198.0 30.6L197.5 30.6L197.0 31.2L196.5 31.1L196.0 31.6L195.5 31.7L195.0 31.1L194.5 30.9L194.0 30.9L193.5 32.0L193.0 31.9L192.5 31.6L192.0 31.7L191.5 31.7L191.0 31.9L190.5 32.3L190.0 33.7L189.5 33.4L189.0 33.4L188.5 32.9L188.0 34.6L187.5 34.9L187.0 34.5L186.5 35.0L186.0 35.2L185.5 35.0L185.0 34.9L184.5 35.7L184.0 36.6L183.5 37.8L183.0 38.6L182.5 38.2L182.0 40.4L181.5 38.0L181.0 40.2L180.5 38.8L180.0 38.5L179.5 38.8L179.0 40.3L178.5 41.4L178.0 40.1L177.5 38.9L177.0 41.5L176.5 40.6L176.0 42.7L175.5 45.4L175.0 44.4L174.5 47.4L174.0 45.4L173.5 44.6L173.0 45.3L172.5 36.1L172.0 30.2L171.5 30.2L171.0 30.8L170.5 30.2L170.0 30.2L169.5 30.5L169.0 30.6L168.5 30.7L168.0 30.4L167.5 30.8L167.0 31.1L166.5 30.8L166.0 31.7L165.5 32.1L165.0 31.7L164.5 31.5L164.0 32.3L163.5 32.3L163.0 31.3L162.5 31.7L162.0 31.9L161.5 32.3L161.0 32.6L160.5 32.8L160.0 32.8L159.5 32.7L159.0 34.0L158.5 34.1L158.0 33.2L157.5 34.3L157.0 34.1L156.5 34.9L156.0 35.5L155.5 34.1L155.0 35.8L154.5 35.6L154.0 36.2L153.5 37.1L153.0 36.6L152.5 38.3L152.0 39.0L151.5 38.9L151.0 39.0L150.5 40.0L150.0 41.5L149.5 40.8L149.0 41.9L148.5 41.9L148.0 40.1L147.5 41.4L147.0 40.6L146.5 43.0L146.0 43.5L145.5 41.1L145.0 42.9L144.5 42.5L144.0 47.7L143.5 45.1L143.0 47.4L142.5 46.9L142.0 52.3L141.5 36.8L141.0 29.7L140.5 29.8L140.0 30.0L139.5 30.0L139.0 30.0L138.5 30.2L138.0 30.3L137.5 30.1L137.0 29.9L136.5 30.2L136.0 30.5L135.5 30.9L135.0 30.7L134.5 30.7L134.0 30.8L133.5 31.0L133.0 31.1L132.5 30.8L132.0 31.1L131.5 31.4L131.0 31.4L130.5 31.7L130.0 31.0L129.5 31.3L129.0 32.2L128.5 32.6L128.0 31.7L127.5 32.3L127.0 33.2L126.5 33.0L126.0 33.1L125.5 32.9L125.0 34.1L124.5 33.3L124.0 33.3L123.5 33.9L123.0 34.5L122.5 34.8L122.0 35.2L121.5 36.4L121.0 35.7L120.5 37.6L120.0 37.9L119.5 37.7L119.0 38.0L118.5 39.8L118.0 39.3L117.5 39.6L117.0 40.5L116.5 40.6L116.0 40.7L115.5 37.9L115.0 40.1L114.5 38.9L114.0 42.2L113.5 42.4L113.0 42.4L112.5 42.5L112.0 45.6L111.5 46.2L111.0 49.2L110.5 35.6L110.0 30.6L109.5 30.9L109.0 30.3L108.5 30.5L108.0 31.1L107.5 30.9L107.0 31.3L106.5 30.9L106.0 30.7L105.5 30.9L105.0 31.0L104.5 31.4L104.0 31.1L103.5 31.5L103.0 31.8L102.5 31.6L102.0 32.1L101.5 31.7L101.0 32.6L100.5 32.4L100.0 32.7L99.5 31.9L99.0 31.8L98.5 32.2L98.0 32.5L97.5 33.0L97.0 33.8L96.5 34.3L96.0 33.2L95.5 34.4L95.0 35.1L94.5 34.9L94.0 34.3L93.5 35.4L93.0 36.4L92.5 34.7L92.0 34.7L91.5 36.5L91.0 36.3L90.5 36.5L90.0 38.0L89.5 37.6L89.0 38.1L88.5 38.8L88.0 42.1L87.5 42.5L87.0 42.7L86.5 41.6L86.0 44.0L85.5 43.5L85.0 42.5L84.5 43.5L84.0 42.3L83.5 44.1L83.0 42.9L82.5 45.8L82.0 44.8L81.5 44.4L81.0 48.5L80.5 48.4L80.0 51.0L79.5 50.0L79.0 52.9L78.5 36.3L78.0 30.6L77.5 30.9L77.0 30.7L76.5 31.6L76.0 30.8L75.5 31.2L75.0 31.2L74.5 31.0L74.0 31.9L73.5 31.9L73.0 31.2L72.5 31.7L72.0 32.3L71.5 32.8L71.0 32.3L70.5 32.0L70.0 32.0L69.5 32.6L69.0 32.8L68.5 32.4L68.0 32.1L67.5 32.5L67.0 32.7L66.5 32.5L66.0 32.6L65.5 34.6L65.0 35.0L64.5 35.4L64.0 35.2L63.5 36.2L63.0 36.6L62.5 34.8L62.0 35.1L61.5 36.6L61.0 36.1L60.5 36.5L60.0 36.0L59.5 37.4L59.0 37.3L58.5 38.0L58.0 38.4L57.5 40.7L57.0 42.7L56.5 42.4L56.0 43.7L55.5 44.1L55.0 42.6L54.5 42.2L54.0 43.4L53.5 42.5L53.0 44.2L52.5 43.3L52.0 45.7L51.5 44.9L51.0 44.9L50.5 45.5L50.0 50.3L49.5 51.4L49.0 50.3L48.5 49.4L48.0 50.5L47.5 38.3L47.0 30.8L46.5 31.3L46.0 31.9L45.5 30.9L45.0 31.3L44.5 31.8L44.0 31.8L43.5 31.2L43.0 31.9L42.5 31.8L42.0 32.3L41.5 32.2L41.0 31.6L40.5 32.2L40.0 32.3L39.5 32.2L39.0 33.3L38.5 33.2L38.0 33.1L37.5 32.3L37.0 33.0L36.5 32.4L36.0 33.5L35.5 33.4L35.0 32.7L34.5 34.6L34.0 34.2L33.5 35.0L33.0 34.6L32.5 35.2L32.0 35.6L31.5 36.3L31.0 35.8L30.5 36.5L30.0 36.9L29.5 37.6L29.0 37.7L28.5 37.6L28.0 37.4L27.5 37.3L27.0 39.2L26.5 39.7L26.0 42.1L25.5 41.9L25.0 41.6L24.5 45.7L24.0 43.4L23.5 45.1L23.0 42.3L22.5 45.6L22.0 42.4L21.5 42.9L21.0 46.4L20.5 44.1L20.0 47.7L19.5 44.9L19.0 49.9L18.5 49.6L18.0 49.2L17.5 52.9L17.0 51.0L16.5 51.9L16.0 52.9L15.5 37.4L15.0 29.7L14.5 29.9L14.0 29.5L13.5 29.4L13.0 29.4L12.5 29.7L12.0 29.8L11.5 29.6L11.0 30.1L10.5 30.2L10.0 29.9L9.5 29.9L9.0 30.3L8.5 30.3L8.0 30.2L7.5 30.5L7.0 30.6L6.5 30.4L6.0 30.2L5.5 30.7L5.0 30.8L4.5 30.5L4.0 30.8L3.5 30.6L3.0 31.4L2.5 30.8L2.0 31.3L1.5 32.0L1.0 31.7L0.5 31.5L0.0 32.6ZM15.0 26.9L15.7 5.9L16.4 5.9L18.4 26.9L16.4 52.9L15.7 52.9ZM47.0 26.9L47.6 4.4L48.5 4.4L50.4 26.9L48.5 50.9L47.6 50.9ZM78.0 26.9L78.7 5.9L79.5 5.9L81.4 26.9L79.5 49.6L78.7 49.6ZM110.0 26.9L110.7 5.9L111.5 5.9L113.4 26.9L111.5 44.9L110.7 44.9ZM141.0 26.9L141.7 16.9L142.4 16.9L144.4 26.9L142.4 47.9L141.7 47.9ZM172.0 26.9L172.7 9.2L173.4 9.2L175.4 26.9L173.4 46.5L172.7 46.5ZM204.0 26.9L204.7 1.5L205.4 1.5L207.4 26.9L205.4 52.9L204.7 52.9ZM235.0 26.9L235.7 5.9L236.4 5.9L238.4 26.9L236.4 50.9L235.7 50.9ZM266.0 26.9L266.6 16.9L267.4 16.9L269.4 26.9L267.4 46.5L266.6 46.5ZM298.0 26.9L298.6 9.2L299.4 9.2L301.4 26.9L299.4 44.9L298.6 44.9ZM327.0 26.9L327.6 2.3L328.4 2.3L330.4 26.9L328.4 52.3L327.6 52.3ZM394.0 26.9L394.6 12.3L395.4 12.3L397.4 26.9L395.4 46.5L394.6 46.5ZM427.0 26.9L427.6 8.2L428.4 8.2L430.4 26.9L428.4 44.9L427.6 44.9ZM457.0 26.9L457.6 1.1L458.4 1.1L460.4 26.9L458.4 52.9L457.6 52.9ZM489.0 26.9L489.6 11.3L490.4 11.3L492.4 26.9L490.4 50.9L489.6 50.9Z" fill="#1b9c9c"/></svg>
<div style="left:7.3px;top:255.2px;width:121.7px;height:1px;background:#3a3a3a;"></div>
<div style="left:7.3px;top:256.8px;width:88px;height:10.4px;background:#2b7fe6;"></div>
<div class="t" style="left:17.6px;top:258.5px;font-size:7.2px;color:#fff;letter-spacing:-.15px;text-shadow:0 0 .6px #fff;">Fiddle</div>
<svg style="left:0px;top:256.8px;" width="100" height="11" viewBox="0 0 100 11"><path d="M10.2 6c.8-2 1.8-2 2.5-.6s1.700 1.400 2.500-.600" stroke="#fff" stroke-width="1" fill="none"/><path d="M62.8 1.5l5.8 3.7-5.8 3.7z" fill="#22e022" stroke="#0c9a0c" stroke-width=".8"/><circle cx="75.8" cy="5.2" r="3.1" fill="#4a0808"/><path d="M83 2.7h6.4M83 5.2h6.4M83 7.7h6.4" stroke="#3a3a3a" stroke-width="1.1"/></svg>
<div style="left:19px;top:269px;width:57.6px;height:10.2px;background:#2a2a2a;"></div>
<div class="t" style="left:20.4px;top:270.6px;font-size:7.2px;color:#e6e6e6;">Soundbites</div>
<svg style="left:68.4px;top:273.2px;" width="4.6" height="2.4" viewBox="0 0 4.6 2.4"><path d="M0 0h4.6l-2.3 2.4z" fill="#555"/></svg>
<div style="left:19px;top:281.2px;width:57.6px;height:10.2px;background:#2a2a2a;"></div>
<div class="t" style="left:22.6px;top:282.7px;font-size:7.6px;color:#eee;font-weight:bold;">I</div>
<div class="t" style="left:27.4px;top:282.7px;font-size:7.4px;color:#e6e6e6;font-style:italic;letter-spacing:-.35px;">Built-i...put 1</div>
<svg style="left:68.4px;top:285.4px;" width="4.6" height="2.4" viewBox="0 0 4.6 2.4"><path d="M0 0h4.6l-2.3 2.4z" fill="#555"/></svg>
<div style="left:19px;top:293.6px;width:57.6px;height:10.2px;background:#2a2a2a;"></div>
<div class="t" style="left:20.6px;top:295.1px;font-size:7.6px;color:#eee;font-weight:bold;">O</div>
<div class="t" style="left:27.4px;top:295.1px;font-size:7.4px;color:#e6e6e6;letter-spacing:-.35px;">Built-i...ut 1-2</div>
<svg style="left:68.4px;top:297.8px;" width="4.6" height="2.4" viewBox="0 0 4.6 2.4"><path d="M0 0h4.6l-2.3 2.4z" fill="#555"/></svg>
<svg style="left:10.4px;top:304.8px;" width="4" height="5" viewBox="0 0 4 5"><path d="M.4 .4l2.6 2-2.6 2z" fill="#1c1c1c"/></svg>
<div style="left:95.6px;top:256.8px;width:5.2px;height:54.6px;background:#0b2f42;"></div>
<div style="left:95.4px;top:258.4px;width:5.4px;height:0.8px;background:#6a6a50;"></div>
<svg style="left:104.8px;top:258.2px;" width="8" height="8" viewBox="0 0 8 8"><circle cx="3" cy="3" r="2.1" fill="none" stroke="#626262" stroke-width="1"/><path d="M4.6 4.6l2.2 2.2" stroke="#626262" stroke-width="1.2"/></svg>
<div style="left:108.9px;top:267.8px;width:2.6px;height:40px;background:#414141;border-radius:1.3px;"></div>
<div style="left:108.9px;top:283.8px;width:2.6px;height:8px;background:#5c5c5c;border-radius:1.3px;"></div>
<svg style="left:129px;top:254px;" width="499.5" height="4" viewBox="0 0 499.5 4"><rect y=".3" width="499.5" height="1.700" fill="#161616"/><rect y="2" width="499.5" height="1.200" fill="#909090"/></svg>
<div style="left:129px;top:258px;width:499.5px;height:53.2px;background:#5fb2f8;"></div>
<svg style="left:129px;top:258px;" width="499.5" height="53.2" viewBox="0 0 499.5 53.2"><path d="M0.0 26.0L0.5 26.0L1.0 26.1L1.5 26.1L2.0 26.0L2.5 26.1L3.0 26.2L3.5 26.1L4.0 26.0L4.5 26.1L5.0 26.1L5.5 26.0L6.0 26.0L6.5 26.1L7.0 26.0L7.5 26.0L8.0 26.1L8.5 26.1L9.0 26.1L9.5 26.0L10.0 26.1L10.5 26.1L11.0 26.1L11.5 26.1L12.0 26.0L12.5 26.0L13.0 26.1L13.5 26.0L14.0 26.1L14.5 26.1L15.0 26.1L15.5 26.0L16.0 26.1L16.5 26.0L17.0 26.1L17.5 26.0L18.0 26.1L18.5 26.0L19.0 26.0L19.5 26.0L20.0 26.0L20.5 26.0L21.0 26.0L21.5 26.0L22.0 26.1L22.5 26.0L23.0 26.0L23.5 26.0L24.0 26.1L24.5 26.0L25.0 26.0L25.5 25.9L26.0 26.1L26.5 26.1L27.0 26.1L27.5 25.9L28.0 26.0L28.5 26.0L29.0 26.0L29.5 26.0L30.0 26.1L30.5 26.1L31.0 26.1L31.5 26.0L32.0 26.0L32.5 26.2L33.0 26.2L33.5 26.2L34.0 26.3L34.5 26.3L35.0 26.3L35.5 26.4L36.0 26.5L36.5 26.5L37.0 26.5L37.5 26.5L38.0 26.5L38.5 26.5L39.0 26.4L39.5 26.5L40.0 26.5L40.5 26.4L41.0 26.4L41.5 26.5L42.0 26.4L42.5 26.4L43.0 26.4L43.5 26.4L44.0 26.4L44.5 26.5L45.0 26.4L45.5 26.4L46.0 26.4L46.5 26.5L47.0 26.4L47.5 26.5L48.0 26.4L48.5 26.5L49.0 26.5L49.5 26.4L50.0 26.5L50.5 26.4L51.0 26.4L51.5 26.5L52.0 26.4L52.5 26.5L53.0 26.5L53.5 26.5L54.0 26.4L54.5 26.5L55.0 26.5L55.5 26.5L56.0 26.4L56.5 26.4L57.0 26.5L57.5 26.5L58.0 26.5L58.5 26.4L59.0 26.5L59.5 26.5L60.0 26.4L60.5 26.4L61.0 26.4L61.5 26.4L62.0 26.4L62.5 26.4L63.0 26.4L63.5 26.4L64.0 26.4L64.5 26.5L65.0 26.4L65.5 26.5L66.0 26.5L66.5 26.4L67.0 26.5L67.5 26.4L68.0 26.3L68.5 26.3L69.0 26.3L69.5 26.2L70.0 26.2L70.5 26.1L71.0 26.0L71.5 26.0L72.0 26.0L72.5 26.1L73.0 26.0L73.5 26.0L74.0 25.9L74.5 26.0L75.0 26.0L75.5 26.1L76.0 26.0L76.5 26.0L77.0 25.9L77.5 26.0L78.0 26.0L78.5 26.1L79.0 26.1L79.5 26.1L80.0 26.0L80.5 26.1L81.0 26.1L81.5 26.0L82.0 26.1L82.5 26.0L83.0 26.0L83.5 26.1L84.0 26.1L84.5 26.1L85.0 26.0L85.5 26.1L86.0 26.0L86.5 26.0L87.0 26.1L87.5 26.1L88.0 26.1L88.5 26.1L89.0 26.0L89.5 26.1L90.0 26.1L90.5 26.1L91.0 26.1L91.5 26.0L92.0 26.1L92.5 26.0L93.0 26.1L93.5 26.1L94.0 26.1L94.5 26.1L95.0 26.1L95.5 26.0L96.0 26.1L96.5 26.1L97.0 26.1L97.5 26.1L98.0 26.2L98.5 26.1L99.0 26.1L99.5 26.2L100.0 26.0L100.5 26.2L101.0 26.1L101.5 26.0L102.0 26.0L102.5 26.0L103.0 26.1L103.5 26.1L104.0 26.2L104.5 26.2L105.0 26.3L105.5 26.3L106.0 26.4L106.5 26.4L107.0 26.4L107.5 26.5L108.0 26.4L108.5 26.4L109.0 26.5L109.5 26.5L110.0 26.4L110.5 26.5L111.0 26.5L111.5 26.4L112.0 26.5L112.5 26.5L113.0 26.5L113.5 26.4L114.0 26.4L114.5 26.4L115.0 26.5L115.5 26.5L116.0 26.4L116.5 26.4L117.0 26.5L117.5 26.5L118.0 26.5L118.5 26.5L119.0 26.4L119.5 26.4L120.0 26.4L120.5 26.4L121.0 26.4L121.5 26.5L122.0 26.4L122.5 26.5L123.0 26.5L123.5 26.5L124.0 26.5L124.5 26.4L125.0 26.5L125.5 26.5L126.0 26.5L126.5 26.4L127.0 26.5L127.5 26.4L128.0 26.5L128.5 26.5L129.0 26.4L129.5 26.5L130.0 26.4L130.5 26.5L131.0 26.5L131.5 26.5L132.0 26.4L132.5 26.4L133.0 26.5L133.5 26.4L134.0 26.5L134.5 26.4L135.0 26.4L135.5 26.5L136.0 26.4L136.5 26.5L137.0 26.5L137.5 26.5L138.0 26.5L138.5 26.4L139.0 26.4L139.5 26.5L140.0 26.4L140.5 26.4L141.0 26.4L141.5 26.4L142.0 26.5L142.5 26.5L143.0 26.5L143.5 26.5L144.0 26.5L144.5 26.4L145.0 26.5L145.5 26.5L146.0 26.5L146.5 26.5L147.0 26.5L147.5 26.5L148.0 26.4L148.5 26.5L149.0 26.4L149.5 26.4L150.0 26.4L150.5 26.5L151.0 26.5L151.5 26.5L152.0 26.5L152.5 26.5L153.0 26.4L153.5 26.4L154.0 26.4L154.5 26.5L155.0 26.5L155.5 26.4L156.0 26.4L156.5 26.4L157.0 26.4L157.5 26.4L158.0 26.4L158.5 26.4L159.0 26.5L159.5 26.4L160.0 26.4L160.5 26.5L161.0 26.5L161.5 26.5L162.0 26.5L162.5 26.5L163.0 26.5L163.5 26.4L164.0 26.4L164.5 26.5L165.0 26.4L165.5 26.4L166.0 26.5L166.5 26.4L167.0 26.5L167.5 26.4L168.0 26.4L168.5 26.5L169.0 26.4L169.5 26.4L170.0 26.5L170.5 26.4L171.0 26.5L171.5 26.4L172.0 26.4L172.5 26.5L173.0 26.5L173.5 26.5L174.0 26.5L174.5 26.5L175.0 26.5L175.5 26.5L176.0 26.4L176.5 26.5L177.0 26.4L177.5 26.4L178.0 26.4L178.5 26.5L179.0 26.4L179.5 26.4L180.0 26.4L180.5 26.4L181.0 26.5L181.5 26.5L182.0 26.5L182.5 26.5L183.0 26.4L183.5 26.4L184.0 26.4L184.5 26.5L185.0 26.4L185.5 26.4L186.0 26.5L186.5 26.4L187.0 26.4L187.5 26.5L188.0 26.4L188.5 26.5L189.0 26.4L189.5 26.4L190.0 26.5L190.5 26.4L191.0 26.5L191.5 26.4L192.0 26.4L192.5 26.4L193.0 26.5L193.5 26.5L194.0 26.4L194.5 26.5L195.0 26.4L195.5 26.5L196.0 26.4L196.5 26.5L197.0 26.5L197.5 26.4L198.0 26.5L198.5 26.4L199.0 26.5L199.5 26.4L200.0 26.4L200.5 26.4L201.0 26.5L201.5 26.5L202.0 26.4L202.5 26.5L203.0 26.5L203.5 26.4L204.0 26.5L204.5 26.4L205.0 26.5L205.5 26.4L206.0 26.4L206.5 26.5L207.0 26.5L207.5 26.4L208.0 26.5L208.5 26.4L209.0 26.5L209.5 26.5L210.0 26.5L210.5 26.5L211.0 26.4L211.5 26.4L212.0 26.5L212.5 26.5L213.0 26.4L213.5 26.4L214.0 26.5L214.5 26.5L215.0 26.5L215.5 26.4L216.0 26.5L216.5 26.4L217.0 26.4L217.5 26.3L218.0 26.4L218.5 26.2L219.0 26.2L219.5 26.2L220.0 26.2L220.5 26.2L221.0 26.1L221.5 26.1L222.0 26.1L222.5 26.1L223.0 26.1L223.5 26.0L224.0 26.2L224.5 26.2L225.0 26.2L225.5 26.1L226.0 26.2L226.5 26.2L227.0 26.1L227.5 26.2L228.0 26.2L228.5 26.1L229.0 26.2L229.5 26.2L230.0 26.1L230.5 26.1L231.0 26.2L231.5 26.1L232.0 26.2L232.5 26.2L233.0 26.1L233.5 26.2L234.0 26.2L234.5 26.1L235.0 26.1L235.5 26.2L236.0 26.1L236.5 26.1L237.0 26.3L237.5 26.2L238.0 26.3L238.5 26.4L239.0 26.4L239.5 26.4L240.0 26.4L240.5 26.5L241.0 26.4L241.5 26.4L242.0 26.5L242.5 26.4L243.0 26.4L243.5 26.5L244.0 26.5L244.5 26.5L245.0 26.5L245.5 26.5L246.0 26.5L246.5 26.5L247.0 26.4L247.5 26.4L248.0 26.4L248.5 26.4L249.0 26.5L249.5 26.4L250.0 26.5L250.5 26.4L251.0 26.5L251.5 26.5L252.0 26.4L252.5 26.4L253.0 26.4L253.5 26.4L254.0 26.5L254.5 26.4L255.0 26.5L255.5 26.5L256.0 26.4L256.5 26.5L257.0 26.5L257.5 26.4L258.0 26.4L258.5 26.5L259.0 26.5L259.5 26.5L260.0 26.5L260.5 26.4L261.0 26.5L261.5 26.5L262.0 26.5L262.5 26.4L263.0 26.4L263.5 26.5L264.0 26.5L264.5 26.4L265.0 26.5L265.5 26.5L266.0 26.5L266.5 26.5L267.0 26.4L267.5 26.4L268.0 26.5L268.5 26.5L269.0 26.5L269.5 26.5L270.0 26.5L270.5 26.4L271.0 26.4L271.5 26.5L272.0 26.5L272.5 26.5L273.0 26.5L273.5 26.4L274.0 26.4L274.5 26.4L275.0 26.4L275.5 26.5L276.0 26.5L276.5 26.4L277.0 26.4L277.5 26.4L278.0 26.5L278.5 26.4L279.0 26.5L279.5 26.4L280.0 26.5L280.5 26.5L281.0 26.4L281.5 26.5L282.0 26.5L282.5 26.5L283.0 26.5L283.5 26.4L284.0 26.5L284.5 26.4L285.0 26.4L285.5 26.4L286.0 26.5L286.5 26.5L287.0 26.5L287.5 26.5L288.0 26.5L288.5 26.5L289.0 26.5L289.5 26.4L290.0 26.4L290.5 26.5L291.0 26.5L291.5 26.5L292.0 26.5L292.5 26.5L293.0 26.4L293.5 26.4L294.0 26.5L294.5 26.1L295.0 25.7L295.5 25.3L296.0 25.0L296.5 22.3L297.0 19.8L297.5 16.0L298.0 14.0L298.5 14.5L299.0 16.6L299.5 17.0L300.0 16.0L300.5 17.0L301.0 17.5L301.5 16.1L302.0 17.9L302.5 17.6L303.0 17.1L303.5 18.6L304.0 17.0L304.5 17.5L305.0 17.6L305.5 18.4L306.0 19.2L306.5 19.4L307.0 19.4L307.5 18.5L308.0 18.8L308.5 18.3L309.0 19.2L309.5 18.8L310.0 19.2L310.5 19.6L311.0 20.3L311.5 20.1L312.0 20.0L312.5 20.4L313.0 19.4L313.5 21.0L314.0 20.5L314.5 20.5L315.0 20.1L315.5 20.4L316.0 20.8L316.5 21.1L317.0 21.6L317.5 20.8L318.0 21.4L318.5 21.6L319.0 21.3L319.5 21.2L320.0 21.6L320.5 21.8L321.0 21.7L321.5 21.5L322.0 21.8L322.5 22.0L323.0 22.0L323.5 22.4L324.0 22.5L324.5 22.1L325.0 22.4L325.5 22.1L326.0 22.6L326.5 22.9L327.0 22.5L327.5 22.9L328.0 22.8L328.5 22.8L329.0 23.0L329.5 22.8L330.0 23.5L330.5 23.6L331.0 23.5L331.5 23.9L332.0 24.0L332.5 23.6L333.0 23.7L333.5 23.9L334.0 23.9L334.5 24.4L335.0 24.5L335.5 24.0L336.0 24.4L336.5 24.3L337.0 24.9L337.5 24.9L338.0 24.9L338.5 24.8L339.0 24.9L339.5 25.2L340.0 25.4L340.5 25.2L341.0 25.4L341.5 25.7L342.0 25.7L342.5 25.9L343.0 26.0L343.5 26.2L344.0 26.4L344.5 26.3L345.0 26.3L345.5 26.4L346.0 26.4L346.5 26.4L347.0 26.4L347.5 26.3L348.0 26.3L348.5 26.4L349.0 26.4L349.5 26.4L350.0 26.4L350.5 26.4L351.0 26.3L351.5 26.4L352.0 26.4L352.5 26.4L353.0 26.4L353.5 26.4L354.0 26.3L354.5 26.4L355.0 26.4L355.5 26.4L356.0 26.3L356.5 26.3L357.0 26.3L357.5 26.3L358.0 26.4L358.5 26.0L359.0 25.4L359.5 25.2L360.0 24.6L360.5 24.5L361.0 20.2L361.5 17.0L362.0 14.0L362.5 10.3L363.0 8.9L363.5 11.9L364.0 9.3L364.5 10.4L365.0 13.6L365.5 12.5L366.0 12.3L366.5 12.2L367.0 15.2L367.5 15.4L368.0 15.1L368.5 14.2L369.0 14.6L369.5 15.6L370.0 15.8L370.5 17.5L371.0 17.1L371.5 17.7L372.0 16.7L372.5 16.6L373.0 18.4L373.5 17.4L374.0 18.5L374.5 18.4L375.0 19.4L375.5 18.9L376.0 19.8L376.5 19.0L377.0 19.7L377.5 20.2L378.0 20.2L378.5 20.8L379.0 19.9L379.5 20.5L380.0 20.4L380.5 21.1L381.0 21.5L381.5 22.1L382.0 21.4L382.5 22.3L383.0 22.0L383.5 22.8L384.0 22.4L384.5 23.0L385.0 22.8L385.5 23.2L386.0 23.3L386.5 23.3L387.0 23.2L387.5 23.3L388.0 23.8L388.5 24.0L389.0 24.2L389.5 24.0L390.0 24.5L390.5 24.4L391.0 24.8L391.5 24.4L392.0 24.6L392.5 24.4L393.0 21.2L393.5 19.1L394.0 15.8L394.5 15.2L395.0 14.9L395.5 14.5L396.0 16.2L396.5 16.6L397.0 14.7L397.5 16.8L398.0 16.9L398.5 15.4L399.0 16.7L399.5 15.7L400.0 17.1L400.5 15.9L401.0 16.0L401.5 14.9L402.0 16.4L402.5 15.6L403.0 16.4L403.5 16.1L404.0 16.1L404.5 15.9L405.0 15.6L405.5 15.3L406.0 15.6L406.5 17.1L407.0 16.8L407.5 16.7L408.0 16.2L408.5 17.2L409.0 17.0L409.5 16.8L410.0 17.8L410.5 17.0L411.0 16.1L411.5 16.6L412.0 16.5L412.5 16.7L413.0 17.9L413.5 17.9L414.0 18.2L414.5 16.4L415.0 17.9L415.5 17.6L416.0 16.8L416.5 17.5L417.0 17.7L417.5 17.3L418.0 17.5L418.5 17.3L419.0 18.5L419.5 18.3L420.0 17.9L420.5 17.8L421.0 18.4L421.5 17.7L422.0 17.4L422.5 17.9L423.0 18.5L423.5 17.8L424.0 17.4L424.5 19.0L425.0 18.3L425.5 18.7L426.0 19.0L426.5 17.8L427.0 18.4L427.5 18.3L428.0 18.2L428.5 19.4L429.0 18.0L429.5 19.2L430.0 19.0L430.5 18.2L431.0 18.6L431.5 19.6L432.0 19.3L432.5 18.4L433.0 19.6L433.5 18.7L434.0 18.8L434.5 19.6L435.0 18.6L435.5 19.0L436.0 19.5L436.5 18.6L437.0 20.0L437.5 19.3L438.0 19.8L438.5 19.6L439.0 20.0L439.5 18.8L440.0 19.3L440.5 19.3L441.0 19.0L441.5 19.3L442.0 19.3L442.5 19.2L443.0 20.1L443.5 19.6L444.0 19.9L444.5 20.7L445.0 20.0L445.5 20.4L446.0 19.4L446.5 19.6L447.0 19.6L447.5 20.7L448.0 19.4L448.5 20.8L449.0 19.6L449.5 20.7L450.0 20.2L450.5 20.3L451.0 19.6L451.5 20.5L452.0 20.8L452.5 20.6L453.0 20.6L453.5 19.7L454.0 20.0L454.5 19.8L455.0 19.6L455.5 19.7L456.0 21.0L456.5 19.9L457.0 20.4L457.5 20.4L458.0 20.2L458.5 20.2L459.0 19.7L459.5 20.1L460.0 19.9L460.5 20.5L461.0 20.1L461.5 20.0L462.0 20.7L462.5 19.7L463.0 20.6L463.5 20.9L464.0 20.6L464.5 19.8L465.0 20.6L465.5 20.3L466.0 19.7L466.5 19.8L467.0 20.6L467.5 19.3L468.0 19.6L468.5 20.2L469.0 19.6L469.5 19.8L470.0 19.7L470.5 20.1L471.0 19.4L471.5 19.9L472.0 19.9L472.5 20.2L473.0 20.3L473.5 19.5L474.0 18.9L474.5 18.7L475.0 19.5L475.5 18.4L476.0 19.9L476.5 18.7L477.0 19.5L477.5 18.7L478.0 18.6L478.5 19.1L479.0 18.5L479.5 19.4L480.0 18.3L480.5 18.9L481.0 18.9L481.5 18.9L482.0 17.6L482.5 19.1L483.0 18.9L483.5 18.3L484.0 17.4L484.5 19.1L485.0 17.6L485.5 17.3L486.0 18.8L486.5 17.3L487.0 18.4L487.5 17.2L488.0 17.7L488.5 18.1L489.0 18.3L489.5 17.5L490.0 17.1L490.5 17.2L491.0 18.0L491.5 17.6L492.0 16.8L492.5 17.6L493.0 16.5L493.5 16.7L494.0 17.4L494.5 17.5L495.0 18.1L495.5 17.5L496.0 16.7L496.5 16.8L497.0 17.5L497.5 16.2L498.0 17.9L498.5 17.6L499.0 16.1L499.5 18.1L499.5 45.9L499.0 48.1L498.5 45.2L498.0 42.8L497.5 42.9L497.0 43.1L496.5 44.7L496.0 43.2L495.5 44.4L495.0 42.4L494.5 47.2L494.0 43.4L493.5 46.8L493.0 43.3L492.5 46.3L492.0 47.2L491.5 44.4L491.0 46.3L490.5 42.8L490.0 46.4L489.5 44.4L489.0 44.2L488.5 46.8L488.0 42.0L487.5 44.1L487.0 45.3L486.5 47.1L486.0 41.3L485.5 41.9L485.0 46.2L484.5 45.1L484.0 45.2L483.5 43.7L483.0 43.6L482.5 41.4L482.0 43.4L481.5 43.4L481.0 41.2L480.5 44.0L480.0 41.3L479.5 40.4L479.0 41.0L478.5 43.2L478.0 40.5L477.5 44.7L477.0 40.3L476.5 40.6L476.0 43.7L475.5 43.1L475.0 41.1L474.5 39.9L474.0 40.9L473.5 41.1L473.0 41.3L472.5 41.1L472.0 39.0L471.5 41.7L471.0 42.9L470.5 40.7L470.0 42.9L469.5 40.9L469.0 43.5L468.5 42.0L468.0 41.5L467.5 42.7L467.0 39.0L466.5 40.9L466.0 41.9L465.5 42.7L465.0 38.2L464.5 38.0L464.0 42.4L463.5 42.0L463.0 41.7L462.5 39.1L462.0 40.8L461.5 42.3L461.0 38.6L460.5 40.2L460.0 38.4L459.5 39.1L459.0 41.9L458.5 39.2L458.0 40.5L457.5 41.2L457.0 40.7L456.5 38.2L456.0 40.5L455.5 41.7L455.0 38.2L454.5 38.6L454.0 39.7L453.5 38.5L453.0 38.4L452.5 40.7L452.0 38.8L451.5 39.2L451.0 42.1L450.5 38.9L450.0 41.9L449.5 39.4L449.0 41.1L448.5 38.2L448.0 39.7L447.5 37.9L447.0 40.8L446.5 41.1L446.0 42.3L445.5 41.2L445.0 39.6L444.5 41.9L444.0 41.0L443.5 41.5L443.0 42.2L442.5 41.8L442.0 41.0L441.5 41.9L441.0 40.2L440.5 38.6L440.0 39.9L439.5 40.4L439.0 42.8L438.5 39.4L438.0 40.4L437.5 39.2L437.0 42.8L436.5 42.8L436.0 42.3L435.5 40.1L435.0 39.5L434.5 42.6L434.0 42.4L433.5 41.1L433.0 44.5L432.5 44.5L432.0 43.5L431.5 42.4L431.0 39.6L430.5 39.8L430.0 40.9L429.5 39.9L429.0 43.4L428.5 45.2L428.0 41.4L427.5 44.4L427.0 45.1L426.5 42.4L426.0 42.9L425.5 43.2L425.0 45.1L424.5 42.7L424.0 46.3L423.5 46.3L423.0 43.7L422.5 43.5L422.0 45.6L421.5 46.8L421.0 45.0L420.5 44.5L420.0 46.1L419.5 43.0L419.0 41.3L418.5 42.0L418.0 45.0L417.5 45.5L417.0 45.2L416.5 44.5L416.0 42.1L415.5 45.6L415.0 44.8L414.5 48.0L414.0 44.6L413.5 46.0L413.0 43.1L412.5 46.5L412.0 48.6L411.5 45.0L411.0 44.2L410.5 46.4L410.0 45.1L409.5 43.8L409.0 45.5L408.5 48.2L408.0 43.6L407.5 43.6L407.0 46.6L406.5 44.8L406.0 47.1L405.5 45.6L405.0 49.5L404.5 48.4L404.0 47.1L403.5 44.8L403.0 46.1L402.5 47.1L402.0 48.2L401.5 45.3L401.0 49.1L400.5 47.8L400.0 50.8L399.5 52.1L399.0 51.7L398.5 46.1L398.0 50.1L397.5 48.1L397.0 45.0L396.5 52.3L396.0 51.0L395.5 45.9L395.0 46.0L394.5 48.1L394.0 48.3L393.5 41.0L393.0 36.0L392.5 30.8L392.0 29.8L391.5 29.8L391.0 28.9L390.5 29.3L390.0 29.2L389.5 29.2L389.0 29.3L388.5 29.9L388.0 30.0L387.5 30.1L387.0 29.9L386.5 30.1L386.0 30.3L385.5 30.7L385.0 30.2L384.5 30.8L384.0 30.7L383.5 30.9L383.0 31.1L382.5 30.9L382.0 31.0L381.5 31.7L381.0 31.1L380.5 31.7L380.0 32.0L379.5 32.3L379.0 31.6L378.5 31.7L378.0 32.2L377.5 32.4L377.0 32.5L376.5 33.2L376.0 32.6L375.5 32.5L375.0 33.4L374.5 33.6L374.0 33.6L373.5 33.6L373.0 32.9L372.5 34.2L372.0 33.1L371.5 33.8L371.0 34.6L370.5 34.0L370.0 34.1L369.5 34.6L369.0 33.8L368.5 35.0L368.0 34.0L367.5 34.7L367.0 35.1L366.5 35.1L366.0 35.3L365.5 34.6L365.0 34.3L364.5 33.8L364.0 33.0L363.5 33.8L363.0 32.3L362.5 32.9L362.0 31.2L361.5 30.9L361.0 30.5L360.5 29.3L360.0 29.1L359.5 28.7L359.0 28.4L358.5 27.8L358.0 27.5L357.5 27.5L357.0 27.5L356.5 27.4L356.0 27.5L355.5 27.5L355.0 27.4L354.5 27.4L354.0 27.4L353.5 27.4L353.0 27.5L352.5 27.5L352.0 27.4L351.5 27.4L351.0 27.5L350.5 27.4L350.0 27.5L349.5 27.5L349.0 27.5L348.5 27.4L348.0 27.4L347.5 27.4L347.0 27.5L346.5 27.4L346.0 27.5L345.5 27.5L345.0 27.5L344.5 27.5L344.0 27.5L343.5 27.6L343.0 27.8L342.5 27.9L342.0 28.1L341.5 28.1L341.0 28.4L340.5 28.4L340.0 28.6L339.5 28.6L339.0 28.6L338.5 28.9L338.0 29.1L337.5 28.9L337.0 29.3L336.5 29.1L336.0 29.5L335.5 29.8L335.0 29.7L334.5 29.6L334.0 30.1L333.5 29.7L333.0 30.0L332.5 29.9L332.0 30.3L331.5 29.9L331.0 30.0L330.5 30.4L330.0 30.4L329.5 30.4L329.0 30.7L328.5 30.9L328.0 31.0L327.5 30.8L327.0 31.3L326.5 31.3L326.0 31.0L325.5 31.1L325.0 31.9L324.5 31.9L324.0 31.6L323.5 31.6L323.0 32.7L322.5 32.5L322.0 32.3L321.5 32.9L321.0 32.5L320.5 32.6L320.0 33.1L319.5 32.4L319.0 33.5L318.5 32.9L318.0 34.2L317.5 34.4L317.0 33.7L316.5 33.4L316.0 33.7L315.5 35.2L315.0 34.9L314.5 34.8L314.0 35.6L313.5 34.7L313.0 34.9L312.5 35.0L312.0 35.1L311.5 35.4L311.0 35.6L310.5 36.4L310.0 35.5L309.5 36.4L309.0 36.4L308.5 37.2L308.0 36.8L307.5 37.3L307.0 37.3L306.5 37.7L306.0 38.5L305.5 40.6L305.0 40.6L304.5 41.5L304.0 39.5L303.5 41.4L303.0 41.7L302.5 42.3L302.0 43.1L301.5 41.8L301.0 42.2L300.5 43.4L300.0 44.7L299.5 45.5L299.0 47.6L298.5 47.1L298.0 49.1L297.5 46.2L297.0 40.5L296.5 34.0L296.0 28.8L295.5 28.3L295.0 28.0L294.5 27.6L294.0 27.4L293.5 27.3L293.0 27.3L292.5 27.4L292.0 27.3L291.5 27.4L291.0 27.4L290.5 27.3L290.0 27.4L289.5 27.4L289.0 27.4L288.5 27.3L288.0 27.3L287.5 27.4L287.0 27.4L286.5 27.3L286.0 27.4L285.5 27.4L285.0 27.3L284.5 27.3L284.0 27.4L283.5 27.4L283.0 27.3L282.5 27.3L282.0 27.3L281.5 27.4L281.0 27.3L280.5 27.3L280.0 27.4L279.5 27.3L279.0 27.4L278.5 27.4L278.0 27.3L277.5 27.3L277.0 27.3L276.5 27.3L276.0 27.4L275.5 27.4L275.0 27.3L274.5 27.3L274.0 27.3L273.5 27.3L273.0 27.4L272.5 27.3L272.0 27.4L271.5 27.3L271.0 27.3L270.5 27.3L270.0 27.4L269.5 27.4L269.0 27.4L268.5 27.3L268.0 27.3L267.5 27.3L267.0 27.4L266.5 27.4L266.0 27.3L265.5 27.4L265.0 27.3L264.5 27.3L264.0 27.3L263.5 27.4L263.0 27.4L262.5 27.3L262.0 27.3L261.5 27.4L261.0 27.4L260.5 27.3L260.0 27.3L259.5 27.4L259.0 27.4L258.5 27.3L258.0 27.4L257.5 27.4L257.0 27.3L256.5 27.4L256.0 27.3L255.5 27.3L255.0 27.4L254.5 27.4L254.0 27.4L253.5 27.3L253.0 27.4L252.5 27.4L252.0 27.4L251.5 27.3L251.0 27.4L250.5 27.4L250.0 27.4L249.5 27.3L249.0 27.4L248.5 27.3L248.0 27.3L247.5 27.3L247.0 27.4L246.5 27.4L246.0 27.3L245.5 27.3L245.0 27.3L244.5 27.3L244.0 27.3L243.5 27.4L243.0 27.3L242.5 27.3L242.0 27.3L241.5 27.3L241.0 27.3L240.5 27.3L240.0 27.4L239.5 27.4L239.0 27.4L238.5 27.4L238.0 27.6L237.5 27.6L237.0 27.7L236.5 27.6L236.0 27.6L235.5 27.6L235.0 27.6L234.5 27.7L234.0 27.6L233.5 27.7L233.0 27.6L232.5 27.6L232.0 27.7L231.5 27.7L231.0 27.7L230.5 27.7L230.0 27.7L229.5 27.7L229.0 27.7L228.5 27.6L228.0 27.6L227.5 27.7L227.0 27.7L226.5 27.7L226.0 27.7L225.5 27.8L225.0 27.6L224.5 27.8L224.0 27.7L223.5 27.7L223.0 27.6L222.5 27.6L222.0 27.8L221.5 27.8L221.0 27.7L220.5 27.7L220.0 27.7L219.5 27.6L219.0 27.5L218.5 27.6L218.0 27.4L217.5 27.5L217.0 27.5L216.5 27.4L216.0 27.4L215.5 27.3L215.0 27.4L214.5 27.3L214.0 27.3L213.5 27.4L213.0 27.3L212.5 27.4L212.0 27.3L211.5 27.3L211.0 27.4L210.5 27.4L210.0 27.3L209.5 27.3L209.0 27.4L208.5 27.3L208.0 27.4L207.5 27.3L207.0 27.4L206.5 27.4L206.0 27.4L205.5 27.3L205.0 27.4L204.5 27.3L204.0 27.4L203.5 27.3L203.0 27.4L202.5 27.3L202.0 27.3L201.5 27.3L201.0 27.3L200.5 27.4L200.0 27.3L199.5 27.4L199.0 27.4L198.5 27.4L198.0 27.3L197.5 27.4L197.0 27.4L196.5 27.3L196.0 27.3L195.5 27.4L195.0 27.3L194.5 27.4L194.0 27.3L193.5 27.3L193.0 27.3L192.5 27.4L192.0 27.4L191.5 27.3L191.0 27.4L190.5 27.4L190.0 27.3L189.5 27.3L189.0 27.4L188.5 27.4L188.0 27.4L187.5 27.4L187.0 27.3L186.5 27.3L186.0 27.3L185.5 27.3L185.0 27.4L184.5 27.3L184.0 27.3L183.5 27.4L183.0 27.4L182.5 27.4L182.0 27.3L181.5 27.4L181.0 27.3L180.5 27.3L180.0 27.4L179.5 27.3L179.0 27.4L178.5 27.3L178.0 27.4L177.5 27.3L177.0 27.4L176.5 27.4L176.0 27.3L175.5 27.3L175.0 27.3L174.5 27.3L174.0 27.3L173.5 27.4L173.0 27.3L172.5 27.3L172.0 27.4L171.5 27.4L171.0 27.4L170.5 27.4L170.0 27.3L169.5 27.3L169.0 27.4L168.5 27.3L168.0 27.4L167.5 27.4L167.0 27.3L166.5 27.3L166.0 27.4L165.5 27.3L165.0 27.3L164.5 27.4L164.0 27.3L163.5 27.4L163.0 27.3L162.5 27.3L162.0 27.3L161.5 27.3L161.0 27.4L160.5 27.3L160.0 27.3L159.5 27.3L159.0 27.4L158.5 27.4L158.0 27.3L157.5 27.3L157.0 27.3L156.5 27.4L156.0 27.4L155.5 27.3L155.0 27.3L154.5 27.4L154.0 27.3L153.5 27.4L153.0 27.3L152.5 27.4L152.0 27.3L151.5 27.4L151.0 27.4L150.5 27.4L150.0 27.4L149.5 27.4L149.0 27.4L148.5 27.4L148.0 27.3L147.5 27.3L147.0 27.4L146.5 27.3L146.0 27.3L145.5 27.4L145.0 27.3L144.5 27.4L144.0 27.4L143.5 27.4L143.0 27.3L142.5 27.3L142.0 27.4L141.5 27.3L141.0 27.3L140.5 27.4L140.0 27.3L139.5 27.4L139.0 27.3L138.5 27.4L138.0 27.4L137.5 27.3L137.0 27.4L136.5 27.3L136.0 27.4L135.5 27.3L135.0 27.4L134.5 27.3L134.0 27.4L133.5 27.3L133.0 27.4L132.5 27.4L132.0 27.4L131.5 27.3L131.0 27.4L130.5 27.4L130.0 27.4L129.5 27.4L129.0 27.3L128.5 27.3L128.0 27.3L127.5 27.4L127.0 27.3L126.5 27.4L126.0 27.3L125.5 27.4L125.0 27.4L124.5 27.3L124.0 27.4L123.5 27.4L123.0 27.3L122.5 27.4L122.0 27.3L121.5 27.3L121.0 27.4L120.5 27.3L120.0 27.4L119.5 27.3L119.0 27.3L118.5 27.3L118.0 27.4L117.5 27.3L117.0 27.3L116.5 27.4L116.0 27.4L115.5 27.3L115.0 27.3L114.5 27.3L114.0 27.3L113.5 27.4L113.0 27.3L112.5 27.4L112.0 27.3L111.5 27.4L111.0 27.3L110.5 27.3L110.0 27.3L109.5 27.4L109.0 27.4L108.5 27.4L108.0 27.3L107.5 27.3L107.0 27.4L106.5 27.4L106.0 27.4L105.5 27.4L105.0 27.4L104.5 27.5L104.0 27.5L103.5 27.6L103.0 27.6L102.5 27.6L102.0 27.7L101.5 27.6L101.0 27.6L100.5 27.6L100.0 27.6L99.5 27.7L99.0 27.6L98.5 27.6L98.0 27.6L97.5 27.6L97.0 27.7L96.5 27.6L96.0 27.7L95.5 27.6L95.0 27.7L94.5 27.6L94.0 27.6L93.5 27.6L93.0 27.6L92.5 27.7L92.0 27.7L91.5 27.7L91.0 27.7L90.5 27.7L90.0 27.7L89.5 27.8L89.0 27.7L88.5 27.7L88.0 27.7L87.5 27.8L87.0 27.6L86.5 27.8L86.0 27.7L85.5 27.7L85.0 27.8L84.5 27.6L84.0 27.8L83.5 27.8L83.0 27.7L82.5 27.7L82.0 27.7L81.5 27.8L81.0 27.7L80.5 27.8L80.0 27.8L79.5 27.7L79.0 27.7L78.5 27.7L78.0 27.8L77.5 27.7L77.0 27.7L76.5 27.8L76.0 27.7L75.5 27.8L75.0 27.7L74.5 27.7L74.0 27.8L73.5 27.8L73.0 27.9L72.5 27.8L72.0 27.8L71.5 27.8L71.0 27.8L70.5 27.7L70.0 27.6L69.5 27.7L69.0 27.6L68.5 27.5L68.0 27.5L67.5 27.4L67.0 27.4L66.5 27.4L66.0 27.3L65.5 27.3L65.0 27.4L64.5 27.3L64.0 27.3L63.5 27.4L63.0 27.3L62.5 27.3L62.0 27.4L61.5 27.3L61.0 27.4L60.5 27.3L60.0 27.3L59.5 27.4L59.0 27.4L58.5 27.3L58.0 27.3L57.5 27.3L57.0 27.3L56.5 27.4L56.0 27.4L55.5 27.3L55.0 27.4L54.5 27.3L54.0 27.4L53.5 27.3L53.0 27.3L52.5 27.3L52.0 27.3L51.5 27.4L51.0 27.3L50.5 27.4L50.0 27.4L49.5 27.4L49.0 27.3L48.5 27.3L48.0 27.3L47.5 27.4L47.0 27.3L46.5 27.4L46.0 27.4L45.5 27.3L45.0 27.4L44.5 27.4L44.0 27.4L43.5 27.4L43.0 27.3L42.5 27.3L42.0 27.4L41.5 27.4L41.0 27.3L40.5 27.3L40.0 27.3L39.5 27.3L39.0 27.3L38.5 27.4L38.0 27.3L37.5 27.4L37.0 27.3L36.5 27.4L36.0 27.4L35.5 27.4L35.0 27.4L34.5 27.5L34.0 27.5L33.5 27.6L33.0 27.5L32.5 27.6L32.0 27.6L31.5 27.6L31.0 27.8L30.5 27.7L30.0 27.8L29.5 27.7L29.0 27.6L28.5 27.6L28.0 27.7L27.5 27.8L27.0 27.7L26.5 27.6L26.0 27.7L25.5 27.8L25.0 27.8L24.5 27.6L24.0 27.7L23.5 27.7L23.0 27.7L22.5 27.8L22.0 27.7L21.5 27.7L21.0 27.8L20.5 27.8L20.0 27.8L19.5 27.7L19.0 27.7L18.5 27.7L18.0 27.8L17.5 27.7L17.0 27.7L16.5 27.6L16.0 27.8L15.5 27.6L15.0 27.7L14.5 27.7L14.0 27.6L13.5 27.7L13.0 27.7L12.5 27.7L12.0 27.6L11.5 27.7L11.0 27.6L10.5 27.7L10.0 27.7L9.5 27.7L9.0 27.8L8.5 27.7L8.0 27.7L7.5 27.7L7.0 27.8L6.5 27.7L6.0 27.7L5.5 27.7L5.0 27.7L4.5 27.7L4.0 27.7L3.5 27.8L3.0 27.7L2.5 27.7L2.0 27.7L1.5 27.7L1.0 27.7L0.5 27.7L0.0 27.7Z" fill="#0b55aa"/></svg>
<div style="left:7.3px;top:312px;width:121.7px;height:1px;background:#3a3a3a;"></div>
<div style="left:7.3px;top:313.6px;width:88px;height:10.4px;background:#2a2cd8;"></div>
<div class="t" style="left:17.6px;top:315.3px;font-size:7.2px;color:#fff;letter-spacing:-.15px;text-shadow:0 0 .6px #fff;">Lead Gtr</div>
<svg style="left:0px;top:313.6px;" width="100" height="11" viewBox="0 0 100 11"><path d="M10.2 6c.8-2 1.8-2 2.5-.6s1.700 1.400 2.500-.600" stroke="#fff" stroke-width="1" fill="none"/><path d="M58.4 1.8v6.6l-4-3.3z" fill="#22d0f0"/><path d="M62.8 1.5l5.8 3.7-5.8 3.7z" fill="#22e022" stroke="#0c9a0c" stroke-width=".8"/><circle cx="75.8" cy="5.2" r="3.1" fill="#f01818"/><path d="M83 2.7h6.4M83 5.2h6.4M83 7.7h6.4" stroke="#3a3a3a" stroke-width="1.1"/></svg>
<div style="left:19px;top:325.8px;width:57.6px;height:10.2px;background:#2a2a2a;"></div>
<div class="t" style="left:20.4px;top:327.4px;font-size:7.2px;color:#e6e6e6;">Soundbites</div>
<svg style="left:68.4px;top:330px;" width="4.6" height="2.4" viewBox="0 0 4.6 2.4"><path d="M0 0h4.6l-2.3 2.4z" fill="#555"/></svg>
<div style="left:19px;top:338px;width:57.6px;height:10.2px;background:#2a2a2a;"></div>
<div class="t" style="left:22.6px;top:339.5px;font-size:7.6px;color:#eee;font-weight:bold;">I</div>
<div class="t" style="left:27.4px;top:339.5px;font-size:7.4px;color:#e6e6e6;letter-spacing:-.35px;">bus 1</div>
<svg style="left:68.4px;top:342.2px;" width="4.6" height="2.4" viewBox="0 0 4.6 2.4"><path d="M0 0h4.6l-2.3 2.4z" fill="#555"/></svg>
<div style="left:19px;top:350.4px;width:57.6px;height:10.2px;background:#2a2a2a;"></div>
<div class="t" style="left:20.6px;top:351.9px;font-size:7.6px;color:#eee;font-weight:bold;">O</div>
<div class="t" style="left:27.4px;top:351.9px;font-size:7.4px;color:#e6e6e6;letter-spacing:-.35px;">Built-i...ut 1-2</div>
<svg style="left:68.4px;top:354.6px;" width="4.6" height="2.4" viewBox="0 0 4.6 2.4"><path d="M0 0h4.6l-2.3 2.4z" fill="#555"/></svg>
<svg style="left:10.4px;top:361.6px;" width="4" height="5" viewBox="0 0 4 5"><path d="M.4 .4l2.6 2-2.6 2z" fill="#1c1c1c"/></svg>
<div style="left:95.6px;top:313.6px;width:5.2px;height:54.6px;background:#0b2f42;"></div>
<div style="left:95.4px;top:315.2px;width:5.4px;height:0.8px;background:#6a6a50;"></div>
<svg style="left:104.8px;top:315px;" width="8" height="8" viewBox="0 0 8 8"><circle cx="3" cy="3" r="2.1" fill="none" stroke="#626262" stroke-width="1"/><path d="M4.6 4.6l2.2 2.2" stroke="#626262" stroke-width="1.2"/></svg>
<div style="left:108.9px;top:324.6px;width:2.6px;height:40px;background:#414141;border-radius:1.3px;"></div>
<div style="left:108.9px;top:340.6px;width:2.6px;height:8px;background:#5c5c5c;border-radius:1.3px;"></div>
<svg style="left:129px;top:310.8px;" width="499.5" height="4" viewBox="0 0 499.5 4"><rect y=".3" width="499.5" height="1.700" fill="#161616"/><rect y="2" width="499.5" height="1.200" fill="#909090"/></svg>
<div style="left:129px;top:314.8px;width:499.5px;height:53.2px;background:#6a7bf0;"></div>
<svg style="left:129px;top:314.8px;" width="499.5" height="53.2" viewBox="0 0 499.5 53.2"><path d="M0.0 26.4L0.5 26.5L1.0 26.5L1.5 26.5L2.0 26.4L2.5 26.4L3.0 26.5L3.5 26.4L4.0 26.4L4.5 26.4L5.0 26.5L5.5 26.4L6.0 26.5L6.5 26.5L7.0 26.5L7.5 26.4L8.0 26.5L8.5 26.4L9.0 26.5L9.5 26.4L10.0 26.5L10.5 26.5L11.0 26.5L11.5 26.5L12.0 26.4L12.5 26.5L13.0 26.5L13.5 26.5L14.0 26.5L14.5 26.5L15.0 26.5L15.5 26.5L16.0 26.5L16.5 26.5L17.0 26.5L17.5 26.4L18.0 26.5L18.5 26.4L19.0 26.4L19.5 26.5L20.0 26.5L20.5 26.4L21.0 26.4L21.5 26.5L22.0 26.4L22.5 26.5L23.0 26.5L23.5 26.5L24.0 26.5L24.5 26.4L25.0 26.5L25.5 26.4L26.0 26.4L26.5 26.5L27.0 26.4L27.5 26.4L28.0 26.5L28.5 26.4L29.0 26.5L29.5 26.4L30.0 26.4L30.5 26.5L31.0 26.4L31.5 26.5L32.0 26.5L32.5 26.4L33.0 26.4L33.5 26.5L34.0 26.4L34.5 26.4L35.0 26.5L35.5 26.5L36.0 26.4L36.5 26.4L37.0 26.4L37.5 26.4L38.0 26.4L38.5 26.4L39.0 26.4L39.5 26.5L40.0 26.4L40.5 26.4L41.0 26.4L41.5 26.5L42.0 26.5L42.5 26.4L43.0 26.5L43.5 26.4L44.0 26.5L44.5 26.4L45.0 26.5L45.5 26.4L46.0 26.4L46.5 26.4L47.0 26.4L47.5 26.4L48.0 26.5L48.5 26.5L49.0 26.4L49.5 26.5L50.0 26.5L50.5 26.5L51.0 26.4L51.5 26.5L52.0 26.4L52.5 26.5L53.0 26.4L53.5 26.5L54.0 26.4L54.5 26.4L55.0 26.5L55.5 26.4L56.0 26.5L56.5 26.4L57.0 26.5L57.5 26.5L58.0 26.5L58.5 26.5L59.0 26.4L59.5 26.4L60.0 26.4L60.5 26.5L61.0 26.4L61.5 26.4L62.0 26.5L62.5 26.5L63.0 26.4L63.5 26.4L64.0 26.4L64.5 26.4L65.0 26.4L65.5 26.5L66.0 26.5L66.5 26.4L67.0 26.4L67.5 26.4L68.0 26.4L68.5 26.4L69.0 26.5L69.5 26.4L70.0 26.5L70.5 26.5L71.0 26.4L71.5 26.5L72.0 26.5L72.5 26.4L73.0 26.5L73.5 26.5L74.0 26.5L74.5 26.5L75.0 26.5L75.5 26.5L76.0 26.4L76.5 26.5L77.0 26.4L77.5 26.5L78.0 26.5L78.5 26.4L79.0 26.4L79.5 26.5L80.0 26.4L80.5 26.4L81.0 26.5L81.5 26.5L82.0 26.5L82.5 26.5L83.0 26.4L83.5 26.4L84.0 26.5L84.5 26.5L85.0 26.5L85.5 26.5L86.0 26.5L86.5 26.4L87.0 26.5L87.5 26.4L88.0 26.5L88.5 26.4L89.0 26.5L89.5 26.5L90.0 26.5L90.5 26.5L91.0 26.5L91.5 26.5L92.0 26.5L92.5 26.5L93.0 26.5L93.5 26.4L94.0 26.5L94.5 26.4L95.0 26.5L95.5 26.5L96.0 26.4L96.5 26.4L97.0 26.4L97.5 26.5L98.0 26.5L98.5 26.4L99.0 26.5L99.5 26.5L100.0 26.4L100.5 26.4L101.0 26.5L101.5 26.4L102.0 26.5L102.5 26.5L103.0 26.4L103.5 26.4L104.0 26.5L104.5 26.5L105.0 26.5L105.5 26.5L106.0 26.5L106.5 26.4L107.0 26.5L107.5 26.4L108.0 26.5L108.5 26.5L109.0 26.4L109.5 26.5L110.0 26.5L110.5 26.4L111.0 26.5L111.5 26.4L112.0 26.4L112.5 26.5L113.0 26.5L113.5 26.5L114.0 26.5L114.5 26.5L115.0 26.5L115.5 26.5L116.0 26.5L116.5 26.5L117.0 26.4L117.5 26.5L118.0 26.4L118.5 26.4L119.0 26.4L119.5 26.4L120.0 26.4L120.5 26.4L121.0 26.5L121.5 26.5L122.0 26.5L122.5 26.5L123.0 26.5L123.5 26.5L124.0 26.5L124.5 26.4L125.0 26.5L125.5 26.5L126.0 26.5L126.5 26.4L127.0 26.4L127.5 26.5L128.0 26.4L128.5 26.4L129.0 26.5L129.5 26.5L130.0 26.4L130.5 26.4L131.0 26.5L131.5 26.5L132.0 26.4L132.5 26.5L133.0 26.5L133.5 26.5L134.0 26.4L134.5 26.5L135.0 26.5L135.5 26.5L136.0 26.5L136.5 26.4L137.0 26.4L137.5 26.4L138.0 26.5L138.5 26.5L139.0 26.5L139.5 26.5L140.0 26.5L140.5 26.5L141.0 26.5L141.5 26.4L142.0 26.4L142.5 26.5L143.0 26.4L143.5 26.4L144.0 26.4L144.5 26.5L145.0 26.4L145.5 26.4L146.0 26.5L146.5 26.5L147.0 26.5L147.5 26.5L148.0 26.5L148.5 26.5L149.0 26.4L149.5 26.4L150.0 26.5L150.5 26.5L151.0 26.5L151.5 26.5L152.0 26.5L152.5 26.5L153.0 26.4L153.5 26.5L154.0 26.5L154.5 26.5L155.0 26.5L155.5 26.5L156.0 26.5L156.5 26.4L157.0 26.4L157.5 26.4L158.0 26.4L158.5 26.4L159.0 26.5L159.5 26.4L160.0 26.4L160.5 26.4L161.0 26.4L161.5 26.5L162.0 26.5L162.5 26.4L163.0 26.5L163.5 26.5L164.0 26.5L164.5 26.4L165.0 26.5L165.5 26.5L166.0 26.5L166.5 26.4L167.0 26.4L167.5 26.5L168.0 26.5L168.5 26.4L169.0 26.4L169.5 26.4L170.0 26.5L170.5 26.4L171.0 26.5L171.5 26.4L172.0 26.5L172.5 26.5L173.0 26.4L173.5 26.4L174.0 26.5L174.5 26.4L175.0 26.4L175.5 26.5L176.0 26.4L176.5 26.4L177.0 26.5L177.5 26.4L178.0 26.4L178.5 26.5L179.0 26.4L179.5 26.5L180.0 26.5L180.5 26.4L181.0 25.6L181.5 24.8L182.0 24.5L182.5 23.9L183.0 23.8L183.5 23.3L184.0 22.6L184.5 22.4L185.0 21.8L185.5 21.8L186.0 21.7L186.5 22.2L187.0 22.5L187.5 21.9L188.0 22.1L188.5 22.1L189.0 21.9L189.5 22.7L190.0 22.7L190.5 22.9L191.0 22.0L191.5 22.6L192.0 22.6L192.5 22.8L193.0 22.7L193.5 22.9L194.0 23.1L194.5 22.8L195.0 23.1L195.5 23.1L196.0 22.8L196.5 22.9L197.0 23.3L197.5 23.6L198.0 23.0L198.5 23.3L199.0 22.9L199.5 23.6L200.0 23.1L200.5 23.7L201.0 23.4L201.5 23.8L202.0 23.6L202.5 23.5L203.0 23.7L203.5 23.3L204.0 23.5L204.5 23.6L205.0 23.3L205.5 23.7L206.0 23.2L206.5 23.5L207.0 23.9L207.5 23.7L208.0 24.0L208.5 23.5L209.0 23.9L209.5 23.6L210.0 23.5L210.5 24.1L211.0 24.2L211.5 23.6L212.0 24.1L212.5 23.7L213.0 24.3L213.5 24.3L214.0 24.1L214.5 24.0L215.0 24.1L215.5 23.9L216.0 24.1L216.5 24.4L217.0 24.2L217.5 23.9L218.0 24.4L218.5 24.1L219.0 24.4L219.5 24.0L220.0 24.3L220.5 24.0L221.0 23.9L221.5 24.4L222.0 24.5L222.5 24.1L223.0 24.2L223.5 24.0L224.0 24.2L224.5 24.3L225.0 24.3L225.5 24.3L226.0 24.7L226.5 24.6L227.0 24.3L227.5 24.5L228.0 24.3L228.5 24.6L229.0 24.5L229.5 24.5L230.0 24.3L230.5 24.3L231.0 24.3L231.5 24.3L232.0 24.6L232.5 24.5L233.0 24.5L233.5 24.5L234.0 24.5L234.5 24.4L235.0 24.8L235.5 24.5L236.0 25.0L236.5 24.8L237.0 25.0L237.5 24.9L238.0 25.0L238.5 24.7L239.0 24.6L239.5 24.5L240.0 24.6L240.5 24.7L241.0 24.4L241.5 24.2L242.0 24.5L242.5 24.0L243.0 24.2L243.5 23.8L244.0 23.7L244.5 23.9L245.0 23.3L245.5 23.7L246.0 22.8L246.5 23.1L247.0 23.0L247.5 22.7L248.0 22.9L248.5 21.8L249.0 22.2L249.5 22.5L250.0 22.5L250.5 21.9L251.0 22.2L251.5 22.8L252.0 22.3L252.5 22.5L253.0 22.7L253.5 22.8L254.0 22.6L254.5 23.0L255.0 22.6L255.5 22.9L256.0 23.6L256.5 23.4L257.0 23.4L257.5 24.0L258.0 24.5L258.5 24.6L259.0 24.9L259.5 25.0L260.0 25.0L260.5 25.4L261.0 25.7L261.5 25.9L262.0 25.9L262.5 25.5L263.0 24.9L263.5 24.7L264.0 24.4L264.5 24.2L265.0 24.3L265.5 24.3L266.0 24.7L266.5 25.2L267.0 25.4L267.5 25.9L268.0 26.2L268.5 26.2L269.0 26.3L269.5 26.4L270.0 26.5L270.5 26.4L271.0 26.5L271.5 26.4L272.0 26.4L272.5 26.5L273.0 26.5L273.5 26.5L274.0 26.5L274.5 26.4L275.0 26.5L275.5 26.4L276.0 26.5L276.5 26.5L277.0 26.4L277.5 26.4L278.0 26.4L278.5 26.4L279.0 26.4L279.5 26.5L280.0 26.5L280.5 26.3L281.0 26.1L281.5 25.9L282.0 25.6L282.5 25.3L283.0 25.0L283.5 25.1L284.0 24.7L284.5 24.7L285.0 24.4L285.5 24.3L286.0 24.3L286.5 24.5L287.0 24.4L287.5 24.7L288.0 24.7L288.5 24.7L289.0 25.1L289.5 25.2L290.0 25.4L290.5 25.8L291.0 25.9L291.5 26.2L292.0 26.4L292.5 26.3L293.0 26.3L293.5 26.3L294.0 26.4L294.5 26.5L295.0 26.4L295.5 26.4L296.0 26.4L296.5 26.4L297.0 26.5L297.5 26.4L298.0 26.4L298.5 26.4L299.0 26.4L299.5 26.5L300.0 26.4L300.5 26.4L301.0 26.4L301.5 26.5L302.0 26.5L302.5 25.9L303.0 25.5L303.5 24.7L304.0 24.5L304.5 23.7L305.0 23.1L305.5 22.4L306.0 22.0L306.5 21.5L307.0 20.9L307.5 20.6L308.0 20.7L308.5 21.4L309.0 20.2L309.5 20.0L310.0 20.0L310.5 19.7L311.0 20.1L311.5 20.2L312.0 20.4L312.5 19.7L313.0 20.7L313.5 20.9L314.0 20.4L314.5 21.2L315.0 20.2L315.5 21.2L316.0 20.9L316.5 21.5L317.0 20.7L317.5 21.3L318.0 20.8L318.5 21.4L319.0 20.8L319.5 21.8L320.0 21.4L320.5 21.8L321.0 21.8L321.5 22.3L322.0 21.2L322.5 21.4L323.0 21.5L323.5 22.3L324.0 22.1L324.5 22.4L325.0 22.6L325.5 22.9L326.0 22.8L326.5 22.4L327.0 22.8L327.5 22.2L328.0 22.8L328.5 22.8L329.0 22.6L329.5 23.2L330.0 22.6L330.5 23.3L331.0 23.5L331.5 23.3L332.0 23.2L332.5 22.8L333.0 23.3L333.5 23.0L334.0 22.9L334.5 23.1L335.0 23.5L335.5 23.2L336.0 23.7L336.5 23.5L337.0 23.7L337.5 23.9L338.0 23.3L338.5 23.2L339.0 23.4L339.5 23.7L340.0 23.8L340.5 23.4L341.0 23.8L341.5 23.6L342.0 24.0L342.5 23.3L343.0 23.5L343.5 23.4L344.0 23.7L344.5 23.9L345.0 24.1L345.5 24.0L346.0 23.7L346.5 23.6L347.0 23.9L347.5 23.6L348.0 23.8L348.5 23.8L349.0 23.8L349.5 24.3L350.0 24.0L350.5 24.1L351.0 24.2L351.5 23.9L352.0 23.8L352.5 24.2L353.0 24.3L353.5 24.3L354.0 24.6L354.5 24.6L355.0 24.4L355.5 24.6L356.0 24.1L356.5 24.4L357.0 24.5L357.5 24.6L358.0 24.4L358.5 24.3L359.0 24.4L359.5 24.3L360.0 24.3L360.5 24.4L361.0 24.4L361.5 24.2L362.0 23.9L362.5 23.8L363.0 23.8L363.5 22.9L364.0 22.6L364.5 22.2L365.0 22.8L365.5 22.3L366.0 22.1L366.5 21.9L367.0 21.8L367.5 22.6L368.0 21.5L368.5 22.2L369.0 21.7L369.5 22.3L370.0 22.5L370.5 22.5L371.0 22.5L371.5 22.6L372.0 22.7L372.5 22.4L373.0 22.3L373.5 22.9L374.0 22.7L374.5 22.9L375.0 22.8L375.5 23.1L376.0 23.1L376.5 22.9L377.0 23.8L377.5 23.8L378.0 23.4L378.5 23.4L379.0 23.8L379.5 24.0L380.0 24.1L380.5 23.9L381.0 23.6L381.5 23.5L382.0 23.9L382.5 23.8L383.0 23.9L383.5 24.2L384.0 24.1L384.5 23.7L385.0 23.7L385.5 24.1L386.0 24.3L386.5 23.7L387.0 24.4L387.5 24.0L388.0 24.2L388.5 24.3L389.0 24.6L389.5 24.5L390.0 25.0L390.5 25.1L391.0 25.4L391.5 26.0L392.0 26.3L392.5 26.4L393.0 26.4L393.5 26.4L394.0 26.5L394.5 26.4L395.0 26.3L395.5 26.5L396.0 26.5L396.5 26.4L397.0 26.4L397.5 26.5L398.0 26.4L398.5 26.5L399.0 26.4L399.5 26.5L400.0 26.4L400.5 26.2L401.0 25.8L401.5 25.7L402.0 25.4L402.5 24.9L403.0 24.6L403.5 24.2L404.0 24.2L404.5 23.9L405.0 24.1L405.5 24.4L406.0 24.5L406.5 24.8L407.0 24.7L407.5 24.9L408.0 25.3L408.5 25.6L409.0 25.9L409.5 26.2L410.0 26.4L410.5 26.4L411.0 26.3L411.5 26.4L412.0 26.4L412.5 26.4L413.0 26.3L413.5 26.4L414.0 26.3L414.5 26.4L415.0 26.4L415.5 26.4L416.0 26.4L416.5 26.5L417.0 26.4L417.5 26.5L418.0 26.5L418.5 26.5L419.0 26.4L419.5 26.0L420.0 25.5L420.5 25.0L421.0 24.6L421.5 24.1L422.0 24.3L422.5 23.5L423.0 23.0L423.5 22.9L424.0 22.8L424.5 22.3L425.0 22.9L425.5 22.3L426.0 22.9L426.5 22.4L427.0 22.3L427.5 22.7L428.0 22.9L428.5 22.9L429.0 23.1L429.5 23.2L430.0 22.2L430.5 22.8L431.0 22.8L431.5 22.8L432.0 23.1L432.5 23.0L433.0 22.6L433.5 22.7L434.0 22.8L434.5 23.3L435.0 23.2L435.5 23.1L436.0 23.1L436.5 23.5L437.0 23.4L437.5 23.3L438.0 23.1L438.5 22.8L439.0 23.3L439.5 22.7L440.0 22.4L440.5 23.2L441.0 23.0L441.5 22.5L442.0 22.9L442.5 22.8L443.0 22.1L443.5 22.1L444.0 21.5L444.5 21.2L445.0 21.5L445.5 22.4L446.0 21.3L446.5 22.3L447.0 21.9L447.5 22.5L448.0 22.6L448.5 22.5L449.0 21.8L449.5 22.2L450.0 22.0L450.5 22.6L451.0 22.9L451.5 22.2L452.0 22.8L452.5 23.3L453.0 22.5L453.5 23.5L454.0 23.1L454.5 23.6L455.0 23.2L455.5 23.4L456.0 23.5L456.5 23.7L457.0 23.6L457.5 23.7L458.0 24.1L458.5 23.8L459.0 24.1L459.5 23.9L460.0 24.2L460.5 24.4L461.0 23.9L461.5 24.1L462.0 24.1L462.5 24.2L463.0 24.3L463.5 24.3L464.0 24.7L464.5 24.3L465.0 24.5L465.5 24.9L466.0 24.8L466.5 24.7L467.0 25.0L467.5 25.0L468.0 24.7L468.5 25.0L469.0 25.3L469.5 25.2L470.0 25.1L470.5 25.3L471.0 25.4L471.5 25.5L472.0 25.2L472.5 25.5L473.0 25.5L473.5 25.7L474.0 25.7L474.5 25.7L475.0 25.6L475.5 25.7L476.0 25.8L476.5 25.9L477.0 25.9L477.5 26.0L478.0 26.0L478.5 26.1L479.0 26.2L479.5 26.2L480.0 26.1L480.5 26.2L481.0 26.2L481.5 26.3L482.0 26.3L482.5 26.5L483.0 26.4L483.5 26.5L484.0 26.4L484.5 26.4L485.0 26.5L485.5 26.4L486.0 26.4L486.5 26.4L487.0 26.3L487.5 26.2L488.0 26.1L488.5 25.9L489.0 25.7L489.5 25.7L490.0 25.8L490.5 25.7L491.0 25.8L491.5 25.8L492.0 25.7L492.5 25.8L493.0 25.7L493.5 25.8L494.0 25.8L494.5 25.7L495.0 25.6L495.5 25.6L496.0 25.7L496.5 25.8L497.0 25.9L497.5 25.7L498.0 25.7L498.5 25.8L499.0 25.8L499.5 25.7L499.5 28.0L499.0 27.9L498.5 28.0L498.0 28.0L497.5 28.0L497.0 27.9L496.5 28.0L496.0 27.9L495.5 28.1L495.0 27.9L494.5 28.0L494.0 28.0L493.5 27.9L493.0 28.0L492.5 27.9L492.0 28.0L491.5 27.9L491.0 28.1L490.5 27.9L490.0 27.9L489.5 28.1L489.0 27.9L488.5 27.9L488.0 27.7L487.5 27.6L487.0 27.5L486.5 27.5L486.0 27.5L485.5 27.4L485.0 27.4L484.5 27.4L484.0 27.4L483.5 27.4L483.0 27.4L482.5 27.4L482.0 27.4L481.5 27.5L481.0 27.6L480.5 27.6L480.0 27.6L479.5 27.6L479.0 27.7L478.5 27.8L478.0 27.7L477.5 27.8L477.0 27.8L476.5 28.0L476.0 28.0L475.5 28.1L475.0 28.1L474.5 28.1L474.0 28.3L473.5 28.3L473.0 28.4L472.5 28.3L472.0 28.3L471.5 28.3L471.0 28.4L470.5 28.6L470.0 28.6L469.5 28.8L469.0 28.6L468.5 28.7L468.0 28.8L467.5 28.7L467.0 29.0L466.5 29.2L466.0 29.3L465.5 29.0L465.0 28.9L464.5 29.0L464.0 29.2L463.5 29.6L463.0 29.4L462.5 29.7L462.0 29.8L461.5 29.8L461.0 29.4L460.5 29.5L460.0 29.5L459.5 30.0L459.0 30.0L458.5 30.3L458.0 30.4L457.5 30.4L457.0 30.2L456.5 29.9L456.0 29.9L455.5 30.0L455.0 30.0L454.5 30.2L454.0 30.6L453.5 30.6L453.0 30.9L452.5 30.5L452.0 30.5L451.5 30.9L451.0 31.4L450.5 31.7L450.0 30.9L449.5 31.0L449.0 31.8L448.5 31.1L448.0 32.1L447.5 32.2L447.0 31.9L446.5 31.8L446.0 32.7L445.5 32.7L445.0 32.1L444.5 32.6L444.0 32.6L443.5 32.2L443.0 31.4L442.5 31.9L442.0 31.3L441.5 31.7L441.0 31.6L440.5 30.8L440.0 31.0L439.5 30.9L439.0 30.8L438.5 30.5L438.0 31.2L437.5 30.6L437.0 30.2L436.5 30.7L436.0 30.8L435.5 30.6L435.0 30.4L434.5 30.7L434.0 31.0L433.5 31.1L433.0 30.5L432.5 31.2L432.0 30.9L431.5 30.6L431.0 30.8L430.5 30.7L430.0 30.6L429.5 31.1L429.0 31.4L428.5 31.0L428.0 31.5L427.5 31.7L427.0 31.5L426.5 30.9L426.0 30.8L425.5 30.8L425.0 31.1L424.5 31.2L424.0 31.2L423.5 30.4L423.0 30.8L422.5 30.2L422.0 30.0L421.5 29.7L421.0 29.0L420.5 28.6L420.0 28.2L419.5 27.8L419.0 27.3L418.5 27.4L418.0 27.3L417.5 27.3L417.0 27.3L416.5 27.3L416.0 27.4L415.5 27.4L415.0 27.4L414.5 27.3L414.0 27.4L413.5 27.4L413.0 27.4L412.5 27.4L412.0 27.4L411.5 27.4L411.0 27.5L410.5 27.4L410.0 27.5L409.5 27.6L409.0 27.9L408.5 28.2L408.0 28.5L407.5 28.8L407.0 28.8L406.5 29.4L406.0 29.1L405.5 29.2L405.0 30.1L404.5 29.9L404.0 29.5L403.5 29.4L403.0 29.0L402.5 28.8L402.0 28.4L401.5 28.3L401.0 28.0L400.5 27.6L400.0 27.3L399.5 27.4L399.0 27.4L398.5 27.4L398.0 27.4L397.5 27.4L397.0 27.4L396.5 27.4L396.0 27.4L395.5 27.4L395.0 27.4L394.5 27.4L394.0 27.4L393.5 27.4L393.0 27.4L392.5 27.4L392.0 27.4L391.5 27.8L391.0 28.2L390.5 28.7L390.0 29.2L389.5 29.3L389.0 29.1L388.5 29.6L388.0 29.7L387.5 29.8L387.0 29.6L386.5 29.5L386.0 29.7L385.5 29.9L385.0 29.6L384.5 29.5L384.0 29.9L383.5 29.7L383.0 30.3L382.5 30.1L382.0 29.7L381.5 29.9L381.0 29.6L380.5 29.7L380.0 30.1L379.5 30.0L379.0 29.9L378.5 30.2L378.0 30.2L377.5 30.1L377.0 30.5L376.5 30.1L376.0 31.0L375.5 30.6L375.0 31.0L374.5 30.9L374.0 31.0L373.5 30.9L373.0 30.8L372.5 31.0L372.0 31.1L371.5 31.7L371.0 31.3L370.5 31.7L370.0 31.2L369.5 32.3L369.0 31.9L368.5 31.2L368.0 31.9L367.5 32.0L367.0 31.3L366.5 32.0L366.0 31.4L365.5 31.4L365.0 31.8L364.5 31.1L364.0 30.4L363.5 30.3L363.0 30.5L362.5 29.8L362.0 29.6L361.5 29.4L361.0 29.9L360.5 29.9L360.0 29.3L359.5 29.3L359.0 29.4L358.5 29.3L358.0 29.8L357.5 29.3L357.0 29.3L356.5 29.5L356.0 29.7L355.5 29.2L355.0 29.6L354.5 29.6L354.0 29.8L353.5 29.4L353.0 29.6L352.5 29.8L352.0 29.7L351.5 30.0L351.0 30.0L350.5 29.7L350.0 29.6L349.5 30.1L349.0 29.5L348.5 30.1L348.0 29.6L347.5 29.6L347.0 29.6L346.5 30.2L346.0 30.3L345.5 30.1L345.0 30.2L344.5 30.4L344.0 29.8L343.5 29.8L343.0 30.3L342.5 30.3L342.0 30.4L341.5 30.4L341.0 30.3L340.5 30.5L340.0 30.3L339.5 30.2L339.0 30.0L338.5 30.5L338.0 30.1L337.5 30.1L337.0 30.6L336.5 30.7L336.0 30.2L335.5 30.2L335.0 30.3L334.5 31.1L334.0 30.8L333.5 30.7L333.0 30.3L332.5 31.1L332.0 31.1L331.5 30.4L331.0 30.9L330.5 30.9L330.0 31.1L329.5 30.6L329.0 31.2L328.5 31.5L328.0 31.3L327.5 30.7L327.0 31.9L326.5 31.8L326.0 31.2L325.5 31.7L325.0 31.2L324.5 31.8L324.0 31.4L323.5 32.3L323.0 32.2L322.5 32.6L322.0 32.5L321.5 32.6L321.0 32.3L320.5 32.7L320.0 33.1L319.5 33.5L319.0 32.6L318.5 34.0L318.0 34.2L317.5 33.7L317.0 32.8L316.5 32.9L316.0 33.5L315.5 33.3L315.0 33.5L314.5 33.4L314.0 33.9L313.5 34.5L313.0 33.3L312.5 33.8L312.0 34.2L311.5 34.4L311.0 33.4L310.5 33.8L310.0 33.8L309.5 33.3L309.0 34.1L308.5 34.1L308.0 33.0L307.5 32.7L307.0 32.4L306.5 32.5L306.0 31.7L305.5 31.7L305.0 30.7L304.5 30.8L304.0 29.7L303.5 29.1L303.0 28.6L302.5 27.9L302.0 27.4L301.5 27.3L301.0 27.4L300.5 27.3L300.0 27.3L299.5 27.3L299.0 27.3L298.5 27.3L298.0 27.4L297.5 27.4L297.0 27.3L296.5 27.4L296.0 27.4L295.5 27.4L295.0 27.5L294.5 27.4L294.0 27.5L293.5 27.4L293.0 27.5L292.5 27.4L292.0 27.4L291.5 27.7L291.0 27.8L290.5 28.1L290.0 28.5L289.5 28.7L289.0 28.6L288.5 29.1L288.0 29.5L287.5 29.5L287.0 29.6L286.5 29.8L286.0 29.8L285.5 30.0L285.0 29.5L284.5 29.0L284.0 29.1L283.5 29.1L283.0 28.9L282.5 28.5L282.0 28.1L281.5 28.1L281.0 27.8L280.5 27.6L280.0 27.3L279.5 27.4L279.0 27.3L278.5 27.4L278.0 27.4L277.5 27.4L277.0 27.4L276.5 27.3L276.0 27.3L275.5 27.3L275.0 27.3L274.5 27.4L274.0 27.4L273.5 27.3L273.0 27.3L272.5 27.4L272.0 27.4L271.5 27.3L271.0 27.4L270.5 27.4L270.0 27.4L269.5 27.5L269.0 27.5L268.5 27.6L268.0 27.5L267.5 28.0L267.0 28.2L266.5 28.8L266.0 28.9L265.5 29.8L265.0 29.4L264.5 29.1L264.0 29.3L263.5 29.3L263.0 28.6L262.5 28.2L262.0 27.7L261.5 27.9L261.0 28.4L260.5 28.5L260.0 28.6L259.5 28.6L259.0 28.9L258.5 29.2L258.0 29.2L257.5 29.9L257.0 30.0L256.5 30.4L256.0 30.2L255.5 30.5L255.0 31.4L254.5 31.5L254.0 31.4L253.5 31.8L253.0 31.2L252.5 31.4L252.0 31.8L251.5 31.5L251.0 32.0L250.5 31.9L250.0 31.3L249.5 32.4L249.0 32.1L248.5 31.8L248.0 31.2L247.5 31.3L247.0 30.6L246.5 30.9L246.0 31.2L245.5 30.8L245.0 30.4L244.5 30.0L244.0 29.9L243.5 29.8L243.0 29.9L242.5 30.0L242.0 29.5L241.5 29.5L241.0 29.7L240.5 29.1L240.0 29.5L239.5 29.1L239.0 28.8L238.5 29.2L238.0 29.3L237.5 29.3L237.0 29.2L236.5 29.1L236.0 29.2L235.5 29.1L235.0 29.1L234.5 29.1L234.0 29.1L233.5 28.9L233.0 29.1L232.5 29.4L232.0 29.0L231.5 29.2L231.0 29.3L230.5 29.3L230.0 29.2L229.5 29.3L229.0 29.6L228.5 29.3L228.0 29.5L227.5 29.6L227.0 29.2L226.5 29.6L226.0 29.7L225.5 29.6L225.0 29.7L224.5 29.3L224.0 29.4L223.5 29.3L223.0 29.4L222.5 29.4L222.0 29.3L221.5 29.4L221.0 29.8L220.5 29.3L220.0 29.8L219.5 29.7L219.0 29.7L218.5 29.5L218.0 29.6L217.5 29.6L217.0 29.5L216.5 29.5L216.0 29.6L215.5 30.1L215.0 30.0L214.5 30.1L214.0 29.6L213.5 29.6L213.0 29.8L212.5 29.9L212.0 29.8L211.5 29.7L211.0 29.7L210.5 30.2L210.0 29.9L209.5 30.1L209.0 30.2L208.5 29.9L208.0 30.4L207.5 30.1L207.0 30.4L206.5 30.0L206.0 30.5L205.5 30.2L205.0 30.7L204.5 30.7L204.0 30.4L203.5 30.3L203.0 30.8L202.5 30.5L202.0 30.3L201.5 30.4L201.0 30.9L200.5 30.3L200.0 31.0L199.5 30.9L199.0 30.7L198.5 31.1L198.0 31.1L197.5 30.8L197.0 30.7L196.5 31.2L196.0 31.2L195.5 30.6L195.0 31.1L194.5 30.9L194.0 31.5L193.5 30.9L193.0 31.0L192.5 31.1L192.0 31.1L191.5 31.4L191.0 31.0L190.5 32.0L190.0 31.6L189.5 31.3L189.0 32.2L188.5 31.9L188.0 31.9L187.5 32.1L187.0 32.2L186.5 32.4L186.0 32.3L185.5 31.8L185.0 32.7L184.5 32.1L184.0 31.3L183.5 31.3L183.0 30.7L182.5 29.8L182.0 29.4L181.5 28.6L181.0 28.2L180.5 27.4L180.0 27.4L179.5 27.3L179.0 27.3L178.5 27.4L178.0 27.3L177.5 27.4L177.0 27.3L176.5 27.4L176.0 27.3L175.5 27.4L175.0 27.3L174.5 27.3L174.0 27.3L173.5 27.3L173.0 27.3L172.5 27.3L172.0 27.3L171.5 27.3L171.0 27.3L170.5 27.4L170.0 27.3L169.5 27.4L169.0 27.3L168.5 27.3L168.0 27.3L167.5 27.3L167.0 27.4L166.5 27.3L166.0 27.4L165.5 27.3L165.0 27.3L164.5 27.4L164.0 27.3L163.5 27.4L163.0 27.3L162.5 27.4L162.0 27.4L161.5 27.3L161.0 27.4L160.5 27.4L160.0 27.3L159.5 27.3L159.0 27.4L158.5 27.3L158.0 27.3L157.5 27.3L157.0 27.3L156.5 27.3L156.0 27.4L155.5 27.4L155.0 27.3L154.5 27.3L154.0 27.3L153.5 27.3L153.0 27.4L152.5 27.3L152.0 27.3L151.5 27.4L151.0 27.3L150.5 27.4L150.0 27.3L149.5 27.3L149.0 27.4L148.5 27.4L148.0 27.3L147.5 27.4L147.0 27.3L146.5 27.3L146.0 27.3L145.5 27.4L145.0 27.3L144.5 27.4L144.0 27.3L143.5 27.3L143.0 27.4L142.5 27.4L142.0 27.4L141.5 27.4L141.0 27.3L140.5 27.3L140.0 27.4L139.5 27.3L139.0 27.3L138.5 27.3L138.0 27.4L137.5 27.4L137.0 27.3L136.5 27.3L136.0 27.3L135.5 27.3L135.0 27.4L134.5 27.4L134.0 27.3L133.5 27.4L133.0 27.3L132.5 27.4L132.0 27.3L131.5 27.3L131.0 27.3L130.5 27.3L130.0 27.4L129.5 27.3L129.0 27.3L128.5 27.4L128.0 27.3L127.5 27.4L127.0 27.3L126.5 27.3L126.0 27.4L125.5 27.3L125.0 27.3L124.5 27.4L124.0 27.3L123.5 27.3L123.0 27.4L122.5 27.3L122.0 27.4L121.5 27.4L121.0 27.4L120.5 27.3L120.0 27.4L119.5 27.3L119.0 27.4L118.5 27.3L118.0 27.4L117.5 27.4L117.0 27.3L116.5 27.3L116.0 27.3L115.5 27.3L115.0 27.3L114.5 27.4L114.0 27.3L113.5 27.3L113.0 27.3L112.5 27.3L112.0 27.3L111.5 27.4L111.0 27.4L110.5 27.4L110.0 27.4L109.5 27.3L109.0 27.4L108.5 27.3L108.0 27.3L107.5 27.3L107.0 27.4L106.5 27.4L106.0 27.4L105.5 27.4L105.0 27.3L104.5 27.4L104.0 27.4L103.5 27.4L103.0 27.4L102.5 27.4L102.0 27.4L101.5 27.3L101.0 27.3L100.5 27.4L100.0 27.3L99.5 27.4L99.0 27.4L98.5 27.3L98.0 27.3L97.5 27.3L97.0 27.4L96.5 27.4L96.0 27.3L95.5 27.3L95.0 27.3L94.5 27.4L94.0 27.4L93.5 27.4L93.0 27.4L92.5 27.4L92.0 27.3L91.5 27.3L91.0 27.4L90.5 27.4L90.0 27.3L89.5 27.4L89.0 27.3L88.5 27.3L88.0 27.4L87.5 27.3L87.0 27.3L86.5 27.3L86.0 27.3L85.5 27.3L85.0 27.4L84.5 27.3L84.0 27.3L83.5 27.4L83.0 27.3L82.5 27.3L82.0 27.3L81.5 27.3L81.0 27.3L80.5 27.3L80.0 27.3L79.5 27.3L79.0 27.3L78.5 27.4L78.0 27.4L77.5 27.4L77.0 27.3L76.5 27.3L76.0 27.4L75.5 27.4L75.0 27.3L74.5 27.4L74.0 27.4L73.5 27.3L73.0 27.4L72.5 27.4L72.0 27.3L71.5 27.4L71.0 27.4L70.5 27.4L70.0 27.4L69.5 27.4L69.0 27.4L68.5 27.3L68.0 27.4L67.5 27.4L67.0 27.4L66.5 27.3L66.0 27.3L65.5 27.4L65.0 27.3L64.5 27.3L64.0 27.3L63.5 27.3L63.0 27.4L62.5 27.4L62.0 27.3L61.5 27.3L61.0 27.4L60.5 27.3L60.0 27.3L59.5 27.4L59.0 27.3L58.5 27.4L58.0 27.4L57.5 27.4L57.0 27.3L56.5 27.3L56.0 27.3L55.5 27.3L55.0 27.4L54.5 27.3L54.0 27.3L53.5 27.3L53.0 27.4L52.5 27.4L52.0 27.3L51.5 27.3L51.0 27.3L50.5 27.3L50.0 27.4L49.5 27.4L49.0 27.3L48.5 27.3L48.0 27.4L47.5 27.3L47.0 27.3L46.5 27.4L46.0 27.4L45.5 27.4L45.0 27.3L44.5 27.3L44.0 27.4L43.5 27.3L43.0 27.4L42.5 27.3L42.0 27.3L41.5 27.4L41.0 27.3L40.5 27.4L40.0 27.4L39.5 27.3L39.0 27.3L38.5 27.3L38.0 27.3L37.5 27.3L37.0 27.3L36.5 27.3L36.0 27.3L35.5 27.3L35.0 27.3L34.5 27.4L34.0 27.4L33.5 27.3L33.0 27.3L32.5 27.4L32.0 27.4L31.5 27.4L31.0 27.4L30.5 27.3L30.0 27.3L29.5 27.4L29.0 27.4L28.5 27.4L28.0 27.4L27.5 27.3L27.0 27.3L26.5 27.4L26.0 27.4L25.5 27.4L25.0 27.4L24.5 27.3L24.0 27.3L23.5 27.3L23.0 27.3L22.5 27.4L22.0 27.4L21.5 27.3L21.0 27.4L20.5 27.4L20.0 27.3L19.5 27.3L19.0 27.4L18.5 27.3L18.0 27.4L17.5 27.3L17.0 27.3L16.5 27.4L16.0 27.3L15.5 27.3L15.0 27.3L14.5 27.4L14.0 27.3L13.5 27.3L13.0 27.4L12.5 27.4L12.0 27.3L11.5 27.3L11.0 27.3L10.5 27.3L10.0 27.4L9.5 27.3L9.0 27.4L8.5 27.3L8.0 27.3L7.5 27.4L7.0 27.4L6.5 27.4L6.0 27.3L5.5 27.3L5.0 27.3L4.5 27.4L4.0 27.4L3.5 27.3L3.0 27.4L2.5 27.3L2.0 27.3L1.5 27.3L1.0 27.4L0.5 27.3L0.0 27.3Z" fill="#0a1c9e"/></svg>
<div style="left:7.3px;top:369px;width:121.7px;height:1px;background:#3a3a3a;"></div>
<div style="left:7.3px;top:370.6px;width:88px;height:10.4px;background:#8c2de0;"></div>
<div class="t" style="left:17.6px;top:372.3px;font-size:7.2px;color:#fff;letter-spacing:-.15px;text-shadow:0 0 .6px #fff;">Snare</div>
<svg style="left:0px;top:370.6px;" width="100" height="11" viewBox="0 0 100 11"><path d="M10.2 6c.8-2 1.8-2 2.5-.6s1.700 1.400 2.500-.600" stroke="#fff" stroke-width="1" fill="none"/><path d="M62.8 1.5l5.8 3.7-5.8 3.7z" fill="#22e022" stroke="#0c9a0c" stroke-width=".8"/><circle cx="75.8" cy="5.2" r="3.1" fill="#4a0808"/><path d="M83 2.7h6.4M83 5.2h6.4M83 7.7h6.4" stroke="#3a3a3a" stroke-width="1.1"/></svg>
<div style="left:19px;top:382.8px;width:57.6px;height:10.2px;background:#2a2a2a;"></div>
<div class="t" style="left:20.4px;top:384.4px;font-size:7.2px;color:#e6e6e6;">Soundbites</div>
<svg style="left:68.4px;top:387px;" width="4.6" height="2.4" viewBox="0 0 4.6 2.4"><path d="M0 0h4.6l-2.3 2.4z" fill="#555"/></svg>
<div style="left:19px;top:395px;width:57.6px;height:10.2px;background:#2a2a2a;"></div>
<div class="t" style="left:22.6px;top:396.5px;font-size:7.6px;color:#eee;font-weight:bold;">I</div>
<div class="t" style="left:27.4px;top:396.5px;font-size:7.4px;color:#e6e6e6;font-style:italic;letter-spacing:-.35px;">Built-i...put 1</div>
<svg style="left:68.4px;top:399.2px;" width="4.6" height="2.4" viewBox="0 0 4.6 2.4"><path d="M0 0h4.6l-2.3 2.4z" fill="#555"/></svg>
<div style="left:19px;top:407.4px;width:57.6px;height:10.2px;background:#2a2a2a;"></div>
<div class="t" style="left:20.6px;top:408.9px;font-size:7.6px;color:#eee;font-weight:bold;">O</div>
<div class="t" style="left:27.4px;top:408.9px;font-size:7.4px;color:#e6e6e6;letter-spacing:-.35px;">Built-i...ut 1-2</div>
<svg style="left:68.4px;top:411.6px;" width="4.6" height="2.4" viewBox="0 0 4.6 2.4"><path d="M0 0h4.6l-2.3 2.4z" fill="#555"/></svg>
<svg style="left:10.4px;top:418.6px;" width="4" height="5" viewBox="0 0 4 5"><path d="M.4 .4l2.6 2-2.6 2z" fill="#1c1c1c"/></svg>
<div style="left:95.6px;top:370.6px;width:5.2px;height:54.6px;background:#0b2f42;"></div>
<div style="left:95.4px;top:372.2px;width:5.4px;height:0.8px;background:#6a6a50;"></div>
<svg style="left:104.8px;top:372px;" width="8" height="8" viewBox="0 0 8 8"><circle cx="3" cy="3" r="2.1" fill="none" stroke="#626262" stroke-width="1"/><path d="M4.6 4.6l2.2 2.2" stroke="#626262" stroke-width="1.2"/></svg>
<div style="left:108.9px;top:381.6px;width:2.6px;height:40px;background:#414141;border-radius:1.3px;"></div>
<div style="left:108.9px;top:397.6px;width:2.6px;height:8px;background:#5c5c5c;border-radius:1.3px;"></div>
<svg style="left:129px;top:367.8px;" width="499.5" height="4" viewBox="0 0 499.5 4"><rect y=".3" width="499.5" height="1.700" fill="#161616"/><rect y="2" width="499.5" height="1.200" fill="#909090"/></svg>
<div style="left:129px;top:371.8px;width:499.5px;height:53.2px;background:#b07ff4;"></div>
<svg style="left:129px;top:371.8px;" width="499.5" height="53.2" viewBox="0 0 499.5 53.2"><path d="M0.0 26.3L0.5 26.2L1.0 26.1L1.5 26.2L2.0 26.0L2.5 26.0L3.0 26.1L3.5 26.2L4.0 26.1L4.5 26.1L5.0 26.1L5.5 26.1L6.0 26.0L6.5 26.0L7.0 26.2L7.5 26.0L8.0 26.2L8.5 26.3L9.0 26.2L9.5 26.2L10.0 26.1L10.5 26.2L11.0 26.0L11.5 26.0L12.0 26.0L12.5 26.1L13.0 26.0L13.5 24.4L14.0 21.1L14.5 23.1L15.0 23.6L15.5 23.1L16.0 20.6L16.5 21.2L17.0 21.7L17.5 21.6L18.0 22.2L18.5 23.2L19.0 23.0L19.5 22.8L20.0 23.8L20.5 24.1L21.0 24.4L21.5 24.7L22.0 24.4L22.5 24.8L23.0 25.1L23.5 25.1L24.0 25.4L24.5 25.8L25.0 25.7L25.5 25.9L26.0 26.0L26.5 26.0L27.0 26.0L27.5 26.1L28.0 26.1L28.5 26.1L29.0 26.0L29.5 26.2L30.0 26.0L30.5 26.0L31.0 26.2L31.5 26.1L32.0 26.1L32.5 26.0L33.0 26.2L33.5 26.0L34.0 26.2L34.5 26.2L35.0 26.0L35.5 26.0L36.0 26.1L36.5 26.2L37.0 26.0L37.5 26.1L38.0 26.1L38.5 26.3L39.0 26.3L39.5 26.0L40.0 26.0L40.5 26.0L41.0 26.0L41.5 26.0L42.0 26.0L42.5 26.2L43.0 26.1L43.5 26.0L44.0 26.2L44.5 26.2L45.0 26.0L45.5 26.0L46.0 26.2L46.5 25.5L47.0 25.2L47.5 24.9L48.0 25.5L48.5 25.7L49.0 26.0L49.5 26.2L50.0 26.3L50.5 26.1L51.0 26.2L51.5 26.1L52.0 26.1L52.5 26.1L53.0 26.2L53.5 26.0L54.0 26.2L54.5 26.2L55.0 26.3L55.5 26.2L56.0 26.2L56.5 26.0L57.0 26.0L57.5 26.2L58.0 26.2L58.5 26.2L59.0 26.1L59.5 26.1L60.0 26.1L60.5 26.0L61.0 26.0L61.5 26.1L62.0 26.2L62.5 26.2L63.0 26.0L63.5 26.3L64.0 26.0L64.5 26.1L65.0 26.2L65.5 26.2L66.0 26.0L66.5 26.0L67.0 26.1L67.5 26.2L68.0 26.1L68.5 26.1L69.0 26.0L69.5 26.2L70.0 26.1L70.5 26.0L71.0 26.0L71.5 26.2L72.0 26.1L72.5 26.2L73.0 26.2L73.5 26.0L74.0 26.2L74.5 26.0L75.0 26.2L75.5 24.9L76.0 16.6L76.5 8.1L77.0 9.8L77.5 16.2L78.0 19.8L78.5 19.3L79.0 21.2L79.5 22.0L80.0 22.4L80.5 23.2L81.0 23.9L81.5 23.7L82.0 23.7L82.5 24.1L83.0 23.6L83.5 24.0L84.0 24.0L84.5 24.3L85.0 24.6L85.5 25.0L86.0 24.4L86.5 24.4L87.0 24.9L87.5 25.0L88.0 24.9L88.5 24.8L89.0 25.3L89.5 25.5L90.0 25.3L90.5 25.5L91.0 25.1L91.5 25.6L92.0 25.7L92.5 25.6L93.0 25.6L93.5 25.8L94.0 25.7L94.5 25.8L95.0 25.6L95.5 25.9L96.0 26.1L96.5 26.0L97.0 26.0L97.5 26.0L98.0 25.9L98.5 26.1L99.0 26.1L99.5 26.0L100.0 26.1L100.5 26.2L101.0 26.1L101.5 26.2L102.0 26.2L102.5 26.1L103.0 26.2L103.5 26.1L104.0 26.2L104.5 26.1L105.0 26.1L105.5 26.0L106.0 26.0L106.5 26.1L107.0 26.1L107.5 26.1L108.0 26.0L108.5 25.7L109.0 24.7L109.5 25.2L110.0 25.4L110.5 25.5L111.0 25.8L111.5 26.0L112.0 26.2L112.5 26.1L113.0 26.2L113.5 26.1L114.0 26.3L114.5 26.2L115.0 26.0L115.5 26.1L116.0 26.2L116.5 26.1L117.0 26.1L117.5 26.1L118.0 26.0L118.5 26.3L119.0 26.2L119.5 26.1L120.0 26.2L120.5 26.1L121.0 26.2L121.5 26.2L122.0 26.2L122.5 26.1L123.0 26.1L123.5 26.2L124.0 26.0L124.5 26.0L125.0 26.0L125.5 26.1L126.0 26.2L126.5 26.2L127.0 26.2L127.5 26.1L128.0 26.0L128.5 26.0L129.0 26.1L129.5 26.1L130.0 26.2L130.5 26.2L131.0 26.0L131.5 26.1L132.0 26.2L132.5 26.1L133.0 26.0L133.5 26.3L134.0 26.1L134.5 26.0L135.0 26.0L135.5 26.2L136.0 26.1L136.5 26.1L137.0 26.0L137.5 26.0L138.0 26.2L138.5 26.1L139.0 25.2L139.5 24.4L140.0 24.0L140.5 24.7L141.0 24.7L141.5 23.0L142.0 23.5L142.5 22.8L143.0 23.6L143.5 23.8L144.0 24.8L144.5 25.0L145.0 25.2L145.5 25.1L146.0 25.7L146.5 25.7L147.0 25.9L147.5 25.9L148.0 26.0L148.5 26.0L149.0 26.1L149.5 26.2L150.0 26.0L150.5 26.0L151.0 26.0L151.5 26.1L152.0 26.1L152.5 26.0L153.0 26.0L153.5 26.0L154.0 26.0L154.5 26.0L155.0 26.2L155.5 26.1L156.0 26.2L156.5 26.0L157.0 26.2L157.5 26.1L158.0 26.2L158.5 26.2L159.0 26.1L159.5 26.1L160.0 26.0L160.5 26.0L161.0 26.2L161.5 26.2L162.0 26.0L162.5 26.2L163.0 26.3L163.5 26.0L164.0 26.3L164.5 26.1L165.0 26.3L165.5 26.0L166.0 26.0L166.5 26.1L167.0 26.0L167.5 26.2L168.0 26.2L168.5 26.1L169.0 26.2L169.5 26.2L170.0 26.2L170.5 25.9L171.0 24.9L171.5 24.9L172.0 25.4L172.5 25.5L173.0 25.9L173.5 26.0L174.0 26.2L174.5 26.2L175.0 26.3L175.5 26.0L176.0 26.2L176.5 26.1L177.0 26.2L177.5 26.0L178.0 26.1L178.5 26.1L179.0 26.2L179.5 26.2L180.0 26.1L180.5 26.1L181.0 26.0L181.5 26.3L182.0 26.0L182.5 26.1L183.0 26.0L183.5 26.1L184.0 26.0L184.5 26.2L185.0 26.1L185.5 26.0L186.0 26.1L186.5 26.0L187.0 26.2L187.5 26.2L188.0 26.3L188.5 26.1L189.0 26.0L189.5 26.1L190.0 26.3L190.5 26.0L191.0 26.0L191.5 26.1L192.0 26.1L192.5 26.1L193.0 26.2L193.5 26.0L194.0 26.1L194.5 26.0L195.0 26.0L195.5 26.1L196.0 26.0L196.5 26.1L197.0 26.0L197.5 26.3L198.0 26.0L198.5 26.0L199.0 26.2L199.5 26.0L200.0 26.1L200.5 26.0L201.0 26.0L201.5 26.1L202.0 23.4L202.5 11.5L203.0 8.3L203.5 13.3L204.0 16.5L204.5 19.6L205.0 21.3L205.5 21.3L206.0 23.2L206.5 22.3L207.0 23.0L207.5 24.1L208.0 23.4L208.5 23.6L209.0 23.8L209.5 24.3L210.0 24.2L210.5 24.7L211.0 24.9L211.5 24.1L212.0 24.5L212.5 24.4L213.0 24.8L213.5 25.2L214.0 25.0L214.5 25.0L215.0 25.2L215.5 25.1L216.0 24.9L216.5 25.2L217.0 25.5L217.5 25.3L218.0 25.7L218.5 25.3L219.0 25.8L219.5 25.7L220.0 25.7L220.5 25.5L221.0 25.6L221.5 25.8L222.0 25.7L222.5 25.7L223.0 25.8L223.5 26.1L224.0 25.9L224.5 26.2L225.0 26.1L225.5 26.0L226.0 26.1L226.5 26.1L227.0 26.0L227.5 26.2L228.0 26.1L228.5 26.1L229.0 26.2L229.5 26.1L230.0 26.1L230.5 26.2L231.0 26.2L231.5 26.2L232.0 26.1L232.5 26.2L233.0 26.2L233.5 25.8L234.0 25.0L234.5 24.9L235.0 25.4L235.5 25.5L236.0 25.9L236.5 26.0L237.0 26.1L237.5 26.0L238.0 26.2L238.5 26.2L239.0 26.2L239.5 26.2L240.0 26.2L240.5 26.0L241.0 26.2L241.5 26.0L242.0 26.1L242.5 26.2L243.0 26.1L243.5 26.1L244.0 26.1L244.5 26.1L245.0 26.0L245.5 26.0L246.0 26.0L246.5 26.0L247.0 26.1L247.5 26.2L248.0 26.0L248.5 26.1L249.0 26.2L249.5 26.2L250.0 26.0L250.5 26.0L251.0 26.2L251.5 26.0L252.0 26.0L252.5 26.1L253.0 26.1L253.5 26.0L254.0 26.0L254.5 26.0L255.0 26.1L255.5 26.2L256.0 26.2L256.5 26.1L257.0 26.2L257.5 26.1L258.0 26.0L258.5 26.1L259.0 26.1L259.5 26.2L260.0 26.1L260.5 26.0L261.0 26.0L261.5 26.0L262.0 26.1L262.5 26.2L263.0 26.1L263.5 26.1L264.0 26.0L264.5 26.1L265.0 26.2L265.5 26.0L266.0 23.5L266.5 15.2L267.0 5.3L267.5 12.1L268.0 16.1L268.5 19.9L269.0 21.7L269.5 21.6L270.0 22.3L270.5 23.5L271.0 22.9L271.5 23.0L272.0 24.1L272.5 23.4L273.0 24.0L273.5 24.1L274.0 23.9L274.5 23.9L275.0 24.3L275.5 24.3L276.0 24.6L276.5 25.1L277.0 24.7L277.5 24.7L278.0 24.6L278.5 25.0L279.0 25.4L279.5 25.4L280.0 25.4L280.5 25.4L281.0 25.6L281.5 25.6L282.0 25.6L282.5 25.4L283.0 25.7L283.5 25.5L284.0 25.8L284.5 25.7L285.0 25.9L285.5 25.7L286.0 25.8L286.5 26.1L287.0 26.1L287.5 26.0L288.0 26.1L288.5 26.1L289.0 26.1L289.5 26.0L290.0 26.0L290.5 26.1L291.0 26.1L291.5 26.0L292.0 26.3L292.5 26.0L293.0 26.2L293.5 26.1L294.0 26.2L294.5 26.1L295.0 26.1L295.5 26.0L296.0 26.1L296.5 26.0L297.0 26.0L297.5 26.0L298.0 26.1L298.5 26.1L299.0 26.0L299.5 25.5L300.0 24.9L300.5 24.6L301.0 25.4L301.5 25.8L302.0 26.0L302.5 26.1L303.0 26.0L303.5 26.0L304.0 26.1L304.5 26.1L305.0 26.2L305.5 26.0L306.0 26.2L306.5 26.1L307.0 26.2L307.5 26.0L308.0 26.3L308.5 26.0L309.0 26.2L309.5 26.0L310.0 26.2L310.5 26.0L311.0 26.3L311.5 26.2L312.0 26.1L312.5 26.2L313.0 26.0L313.5 26.2L314.0 26.2L314.5 26.2L315.0 23.3L315.5 14.2L316.0 6.5L316.5 11.8L317.0 15.6L317.5 18.5L318.0 21.4L318.5 20.8L319.0 22.4L319.5 22.4L320.0 22.9L320.5 23.8L321.0 23.6L321.5 24.1L322.0 23.4L322.5 24.1L323.0 24.3L323.5 24.0L324.0 24.0L324.5 24.7L325.0 25.0L325.5 25.1L326.0 24.5L326.5 24.6L327.0 24.7L327.5 25.4L328.0 25.2L328.5 25.0L329.0 25.1L329.5 20.0L330.0 16.4L330.5 18.0L331.0 19.0L331.5 19.6L332.0 20.0L332.5 21.1L333.0 21.9L333.5 22.3L334.0 22.7L334.5 22.4L335.0 22.3L335.5 23.5L336.0 23.3L336.5 24.0L337.0 23.9L337.5 23.2L338.0 23.5L338.5 24.2L339.0 24.2L339.5 23.8L340.0 24.3L340.5 24.0L341.0 23.9L341.5 24.4L342.0 24.3L342.5 24.2L343.0 24.7L343.5 24.8L344.0 24.8L344.5 24.5L345.0 24.5L345.5 25.2L346.0 25.0L346.5 24.9L347.0 25.1L347.5 25.2L348.0 25.5L348.5 25.2L349.0 25.4L349.5 25.4L350.0 25.5L350.5 25.6L351.0 25.5L351.5 25.4L352.0 25.5L352.5 25.6L353.0 25.8L353.5 25.6L354.0 25.6L354.5 25.8L355.0 25.8L355.5 25.8L356.0 26.1L356.5 26.1L357.0 26.0L357.5 26.0L358.0 26.2L358.5 26.2L359.0 26.2L359.5 26.2L360.0 26.2L360.5 26.2L361.0 26.1L361.5 26.1L362.0 26.1L362.5 26.0L363.0 26.3L363.5 25.7L364.0 24.9L364.5 25.4L365.0 25.7L365.5 25.8L366.0 25.8L366.5 26.2L367.0 26.1L367.5 26.0L368.0 26.0L368.5 26.2L369.0 26.3L369.5 26.1L370.0 26.0L370.5 26.0L371.0 26.1L371.5 26.1L372.0 26.0L372.5 26.3L373.0 26.1L373.5 26.1L374.0 26.0L374.5 26.0L375.0 26.0L375.5 26.2L376.0 26.1L376.5 26.0L377.0 25.2L377.5 20.2L378.0 16.1L378.5 23.0L379.0 25.0L379.5 26.1L380.0 26.0L380.5 26.2L381.0 26.2L381.5 26.1L382.0 26.0L382.5 26.0L383.0 26.0L383.5 26.2L384.0 26.2L384.5 26.2L385.0 26.0L385.5 26.2L386.0 26.2L386.5 26.2L387.0 26.0L387.5 26.1L388.0 26.2L388.5 26.1L389.0 26.0L389.5 26.1L390.0 26.0L390.5 26.0L391.0 26.3L391.5 26.2L392.0 25.3L392.5 20.7L393.0 18.5L393.5 17.6L394.0 18.8L394.5 21.8L395.0 22.4L395.5 22.6L396.0 22.7L396.5 22.3L397.0 23.4L397.5 23.1L398.0 24.1L398.5 23.6L399.0 23.6L399.5 23.6L400.0 24.5L400.5 24.6L401.0 24.2L401.5 24.4L402.0 24.7L402.5 24.5L403.0 25.1L403.5 25.1L404.0 25.3L404.5 24.8L405.0 24.9L405.5 24.8L406.0 25.0L406.5 25.0L407.0 25.1L407.5 25.6L408.0 25.4L408.5 25.4L409.0 25.8L409.5 25.5L410.0 25.6L410.5 25.8L411.0 25.7L411.5 25.8L412.0 25.9L412.5 26.0L413.0 25.7L413.5 26.0L414.0 25.9L414.5 25.9L415.0 26.0L415.5 26.1L416.0 26.0L416.5 26.1L417.0 26.1L417.5 26.1L418.0 26.2L418.5 26.1L419.0 26.0L419.5 26.2L420.0 26.2L420.5 26.0L421.0 26.2L421.5 26.1L422.0 26.0L422.5 26.1L423.0 26.0L423.5 26.0L424.0 26.0L424.5 26.1L425.0 26.0L425.5 26.1L426.0 26.0L426.5 26.1L427.0 26.2L427.5 26.1L428.0 26.0L428.5 25.7L429.0 24.8L429.5 24.5L430.0 25.5L430.5 25.4L431.0 26.0L431.5 25.9L432.0 26.0L432.5 26.0L433.0 26.2L433.5 26.1L434.0 26.1L434.5 26.0L435.0 26.1L435.5 26.0L436.0 26.0L436.5 26.2L437.0 26.2L437.5 26.2L438.0 26.0L438.5 26.1L439.0 26.1L439.5 26.1L440.0 26.0L440.5 26.0L441.0 26.2L441.5 26.2L442.0 26.1L442.5 26.0L443.0 26.0L443.5 26.0L444.0 26.0L444.5 26.1L445.0 26.1L445.5 26.2L446.0 26.3L446.5 26.1L447.0 26.0L447.5 26.0L448.0 26.2L448.5 26.0L449.0 26.2L449.5 26.0L450.0 26.2L450.5 26.1L451.0 26.1L451.5 26.0L452.0 26.0L452.5 26.2L453.0 26.1L453.5 26.3L454.0 26.1L454.5 26.2L455.0 26.2L455.5 25.4L456.0 16.1L456.5 8.6L457.0 8.8L457.5 15.8L458.0 17.7L458.5 19.6L459.0 22.2L459.5 22.5L460.0 22.3L460.5 22.6L461.0 24.0L461.5 23.2L462.0 23.4L462.5 24.2L463.0 24.4L463.5 24.2L464.0 24.0L464.5 24.8L465.0 24.3L465.5 25.0L466.0 24.8L466.5 24.5L467.0 24.9L467.5 24.6L468.0 25.2L468.5 24.8L469.0 25.0L469.5 25.4L470.0 25.2L470.5 25.1L471.0 25.4L471.5 25.3L472.0 25.6L472.5 25.6L473.0 25.8L473.5 25.6L474.0 25.5L474.5 25.9L475.0 25.9L475.5 26.0L476.0 26.0L476.5 25.9L477.0 25.8L477.5 26.0L478.0 26.2L478.5 26.0L479.0 26.1L479.5 26.0L480.0 26.0L480.5 26.0L481.0 26.0L481.5 26.0L482.0 26.0L482.5 26.2L483.0 26.1L483.5 26.1L484.0 26.3L484.5 26.1L485.0 26.0L485.5 26.0L486.0 26.2L486.5 26.1L487.0 26.1L487.5 26.1L488.0 26.2L488.5 26.2L489.0 26.1L489.5 26.1L490.0 26.2L490.5 25.7L491.0 24.2L491.5 25.1L492.0 25.5L492.5 25.4L493.0 25.9L493.5 26.1L494.0 26.2L494.5 26.0L495.0 26.0L495.5 26.0L496.0 26.1L496.5 26.0L497.0 26.1L497.5 26.0L498.0 26.0L498.5 26.1L499.0 26.1L499.5 26.2L499.5 28.0L499.0 28.0L498.5 27.8L498.0 27.8L497.5 27.8L497.0 27.8L496.5 28.0L496.0 27.7L495.5 28.0L495.0 28.0L494.5 27.8L494.0 28.0L493.5 28.2L493.0 28.1L492.5 28.5L492.0 29.0L491.5 29.3L491.0 29.5L490.5 28.7L490.0 27.9L489.5 28.0L489.0 28.0L488.5 27.9L488.0 28.0L487.5 28.0L487.0 27.9L486.5 27.8L486.0 27.7L485.5 27.8L485.0 27.8L484.5 27.9L484.0 27.8L483.5 27.9L483.0 27.9L482.5 28.0L482.0 28.0L481.5 27.7L481.0 28.0L480.5 28.0L480.0 27.8L479.5 27.9L479.0 28.0L478.5 28.0L478.0 27.9L477.5 27.9L477.0 27.9L476.5 28.2L476.0 27.9L475.5 28.2L475.0 28.1L474.5 28.4L474.0 28.4L473.5 28.3L473.0 28.3L472.5 28.5L472.0 28.4L471.5 28.3L471.0 28.7L470.5 28.5L470.0 28.4L469.5 28.6L469.0 29.0L468.5 29.1L468.0 28.7L467.5 29.3L467.0 28.9L466.5 29.2L466.0 29.3L465.5 29.4L465.0 29.1L464.5 29.1L464.0 29.4L463.5 29.8L463.0 29.4L462.5 30.0L462.0 30.4L461.5 30.5L461.0 30.0L460.5 30.2L460.0 31.6L459.5 30.8L459.0 31.6L458.5 32.7L458.0 34.2L457.5 36.2L457.0 40.9L456.5 49.0L456.0 37.7L455.5 29.0L455.0 27.8L454.5 27.8L454.0 27.7L453.5 27.9L453.0 28.0L452.5 27.8L452.0 27.9L451.5 27.8L451.0 27.8L450.5 28.0L450.0 27.9L449.5 28.0L449.0 27.9L448.5 27.9L448.0 28.0L447.5 28.0L447.0 27.8L446.5 27.9L446.0 27.8L445.5 28.0L445.0 27.8L444.5 27.9L444.0 27.8L443.5 28.0L443.0 27.9L442.5 27.8L442.0 27.8L441.5 28.0L441.0 27.8L440.5 27.8L440.0 27.8L439.5 28.0L439.0 27.8L438.5 27.9L438.0 28.0L437.5 27.8L437.0 28.0L436.5 27.8L436.0 27.8L435.5 28.0L435.0 27.9L434.5 27.8L434.0 27.8L433.5 28.0L433.0 27.8L432.5 27.7L432.0 27.8L431.5 27.9L431.0 28.2L430.5 28.6L430.0 28.9L429.5 29.0L429.0 29.2L428.5 28.3L428.0 27.8L427.5 27.9L427.0 27.9L426.5 27.8L426.0 27.8L425.5 28.0L425.0 27.7L424.5 28.0L424.0 27.8L423.5 28.0L423.0 27.8L422.5 27.9L422.0 27.9L421.5 27.8L421.0 27.9L420.5 28.0L420.0 28.0L419.5 27.9L419.0 28.0L418.5 27.8L418.0 27.9L417.5 27.9L417.0 27.9L416.5 27.8L416.0 28.0L415.5 28.0L415.0 28.0L414.5 28.2L414.0 28.0L413.5 28.0L413.0 28.1L412.5 28.3L412.0 28.0L411.5 28.4L411.0 28.2L410.5 28.2L410.0 28.4L409.5 28.7L409.0 28.4L408.5 28.5L408.0 28.8L407.5 28.5L407.0 28.6L406.5 28.8L406.0 29.1L405.5 28.8L405.0 28.8L404.5 28.8L404.0 29.4L403.5 29.0L403.0 28.9L402.5 29.3L402.0 29.8L401.5 29.7L401.0 29.7L400.5 29.9L400.0 29.6L399.5 29.8L399.0 30.6L398.5 30.3L398.0 30.2L397.5 30.2L397.0 31.1L396.5 31.1L396.0 30.7L395.5 32.5L395.0 32.5L394.5 33.7L394.0 33.6L393.5 34.2L393.0 38.3L392.5 32.1L392.0 28.6L391.5 27.8L391.0 27.8L390.5 27.7L390.0 27.7L389.5 27.9L389.0 28.0L388.5 28.0L388.0 28.0L387.5 27.8L387.0 27.9L386.5 27.9L386.0 27.9L385.5 27.8L385.0 28.0L384.5 27.7L384.0 27.8L383.5 27.8L383.0 27.8L382.5 27.9L382.0 27.8L381.5 28.0L381.0 28.0L380.5 28.0L380.0 27.9L379.5 28.0L379.0 29.3L378.5 33.7L378.0 44.4L377.5 37.5L377.0 29.6L376.5 27.9L376.0 27.9L375.5 27.8L375.0 28.0L374.5 27.9L374.0 27.8L373.5 27.7L373.0 27.8L372.5 27.9L372.0 28.0L371.5 27.8L371.0 27.8L370.5 27.8L370.0 27.8L369.5 28.0L369.0 27.8L368.5 27.8L368.0 27.7L367.5 27.9L367.0 27.8L366.5 28.0L366.0 28.1L365.5 28.2L365.0 28.5L364.5 29.0L364.0 29.3L363.5 28.2L363.0 28.0L362.5 27.9L362.0 27.9L361.5 28.0L361.0 27.9L360.5 28.0L360.0 27.8L359.5 27.9L359.0 27.9L358.5 27.7L358.0 28.0L357.5 28.0L357.0 28.0L356.5 28.1L356.0 28.1L355.5 28.2L355.0 28.2L354.5 28.1L354.0 28.2L353.5 28.3L353.0 28.2L352.5 28.2L352.0 28.3L351.5 28.3L351.0 28.5L350.5 28.4L350.0 28.7L349.5 28.6L349.0 28.9L348.5 28.6L348.0 28.9L347.5 28.8L347.0 28.7L346.5 28.9L346.0 29.0L345.5 28.8L345.0 29.4L344.5 29.0L344.0 29.3L343.5 28.9L343.0 29.7L342.5 29.2L342.0 30.0L341.5 29.2L341.0 29.9L340.5 29.3L340.0 29.7L339.5 30.3L339.0 30.6L338.5 29.8L338.0 30.0L337.5 30.4L337.0 30.4L336.5 31.3L336.0 31.4L335.5 30.9L335.0 31.8L334.5 31.1L334.0 31.0L333.5 32.7L333.0 32.0L332.5 32.5L332.0 33.1L331.5 35.0L331.0 35.8L330.5 37.3L330.0 40.8L329.5 34.7L329.0 29.1L328.5 28.9L328.0 28.4L327.5 28.7L327.0 29.0L326.5 29.0L326.0 29.2L325.5 28.8L325.0 29.5L324.5 29.2L324.0 29.8L323.5 29.8L323.0 29.4L322.5 29.9L322.0 30.3L321.5 30.0L321.0 30.2L320.5 30.0L320.0 30.7L319.5 30.9L319.0 31.4L318.5 32.6L318.0 33.7L317.5 35.9L317.0 36.9L316.5 39.1L316.0 48.0L315.5 38.5L315.0 30.4L314.5 27.9L314.0 27.7L313.5 27.8L313.0 27.8L312.5 27.9L312.0 27.9L311.5 28.0L311.0 27.9L310.5 28.0L310.0 27.9L309.5 28.0L309.0 27.8L308.5 28.0L308.0 28.0L307.5 27.7L307.0 28.0L306.5 27.9L306.0 27.8L305.5 27.7L305.0 27.9L304.5 27.8L304.0 27.9L303.5 27.8L303.0 28.0L302.5 28.1L302.0 28.4L301.5 28.3L301.0 28.7L300.5 29.1L300.0 29.5L299.5 28.6L299.0 27.9L298.5 28.0L298.0 28.0L297.5 27.8L297.0 27.9L296.5 28.0L296.0 27.9L295.5 27.8L295.0 27.9L294.5 27.8L294.0 27.8L293.5 27.9L293.0 27.9L292.5 28.0L292.0 27.9L291.5 28.0L291.0 27.8L290.5 27.9L290.0 28.0L289.5 28.0L289.0 28.0L288.5 27.9L288.0 28.0L287.5 27.9L287.0 27.9L286.5 28.2L286.0 28.1L285.5 28.0L285.0 28.0L284.5 28.2L284.0 28.5L283.5 28.5L283.0 28.4L282.5 28.4L282.0 28.2L281.5 28.7L281.0 28.9L280.5 28.6L280.0 28.8L279.5 28.7L279.0 28.8L278.5 29.1L278.0 29.2L277.5 28.9L277.0 29.1L276.5 29.3L276.0 28.9L275.5 29.5L275.0 29.1L274.5 29.3L274.0 29.2L273.5 29.7L273.0 30.0L272.5 30.2L272.0 29.7L271.5 30.4L271.0 30.0L270.5 31.0L270.0 31.3L269.5 32.3L269.0 33.0L268.5 34.6L268.0 38.6L267.5 40.2L267.0 45.1L266.5 39.9L266.0 30.0L265.5 28.0L265.0 28.0L264.5 28.0L264.0 28.0L263.5 27.8L263.0 28.0L262.5 28.0L262.0 27.8L261.5 27.7L261.0 27.8L260.5 27.8L260.0 27.8L259.5 28.0L259.0 27.8L258.5 27.9L258.0 28.0L257.5 27.8L257.0 27.9L256.5 27.8L256.0 27.9L255.5 28.0L255.0 27.9L254.5 27.8L254.0 27.8L253.5 28.0L253.0 27.9L252.5 28.0L252.0 28.0L251.5 28.0L251.0 27.8L250.5 27.8L250.0 27.9L249.5 28.0L249.0 27.9L248.5 27.9L248.0 28.0L247.5 27.8L247.0 28.0L246.5 27.9L246.0 27.9L245.5 27.9L245.0 28.0L244.5 27.9L244.0 27.8L243.5 28.0L243.0 27.9L242.5 27.8L242.0 28.0L241.5 27.8L241.0 27.8L240.5 27.8L240.0 27.9L239.5 27.9L239.0 28.0L238.5 27.8L238.0 27.7L237.5 28.0L237.0 28.0L236.5 28.0L236.0 28.0L235.5 28.3L235.0 28.5L234.5 29.2L234.0 29.7L233.5 28.3L233.0 27.9L232.5 28.0L232.0 27.9L231.5 27.9L231.0 28.0L230.5 27.8L230.0 28.0L229.5 27.9L229.0 28.0L228.5 28.0L228.0 28.0L227.5 27.8L227.0 28.0L226.5 27.8L226.0 27.9L225.5 28.0L225.0 28.0L224.5 27.9L224.0 28.0L223.5 28.0L223.0 28.2L222.5 28.1L222.0 28.2L221.5 28.2L221.0 28.3L220.5 28.2L220.0 28.2L219.5 28.2L219.0 28.3L218.5 28.4L218.0 28.6L217.5 28.6L217.0 28.7L216.5 28.7L216.0 28.7L215.5 29.1L215.0 28.9L214.5 28.9L214.0 29.0L213.5 29.3L213.0 29.2L212.5 29.6L212.0 29.2L211.5 29.3L211.0 29.2L210.5 29.5L210.0 30.1L209.5 29.3L209.0 29.9L208.5 30.4L208.0 30.3L207.5 30.9L207.0 31.0L206.5 30.9L206.0 31.5L205.5 31.8L205.0 32.4L204.5 35.3L204.0 39.1L203.5 42.7L203.0 50.7L202.5 41.3L202.0 30.9L201.5 27.9L201.0 28.0L200.5 28.0L200.0 27.9L199.5 27.8L199.0 28.0L198.5 28.0L198.0 28.0L197.5 27.8L197.0 27.9L196.5 28.0L196.0 28.0L195.5 27.8L195.0 27.8L194.5 27.9L194.0 27.9L193.5 27.8L193.0 27.8L192.5 27.9L192.0 28.0L191.5 28.0L191.0 27.9L190.5 27.8L190.0 27.9L189.5 28.0L189.0 28.0L188.5 28.0L188.0 28.0L187.5 28.0L187.0 27.9L186.5 27.8L186.0 27.7L185.5 28.0L185.0 28.0L184.5 27.8L184.0 27.9L183.5 27.8L183.0 28.0L182.5 27.8L182.0 27.8L181.5 28.0L181.0 28.0L180.5 27.9L180.0 27.9L179.5 27.9L179.0 27.8L178.5 27.7L178.0 27.9L177.5 27.9L177.0 27.9L176.5 27.8L176.0 27.9L175.5 28.0L175.0 27.9L174.5 27.8L174.0 27.8L173.5 27.9L173.0 28.0L172.5 28.1L172.0 28.6L171.5 28.9L171.0 29.2L170.5 28.3L170.0 27.8L169.5 27.8L169.0 27.7L168.5 27.8L168.0 28.0L167.5 27.8L167.0 27.9L166.5 27.7L166.0 27.8L165.5 27.8L165.0 28.0L164.5 27.9L164.0 28.0L163.5 27.8L163.0 27.8L162.5 27.9L162.0 27.9L161.5 28.0L161.0 27.9L160.5 28.0L160.0 27.8L159.5 27.8L159.0 27.9L158.5 27.7L158.0 27.9L157.5 27.8L157.0 28.0L156.5 27.9L156.0 27.9L155.5 27.9L155.0 27.8L154.5 27.8L154.0 27.7L153.5 28.0L153.0 27.9L152.5 27.8L152.0 27.9L151.5 27.8L151.0 27.8L150.5 27.9L150.0 28.0L149.5 27.9L149.0 28.0L148.5 28.0L148.0 27.8L147.5 28.1L147.0 28.3L146.5 28.4L146.0 28.4L145.5 28.8L145.0 29.0L144.5 29.2L144.0 29.9L143.5 30.2L143.0 30.6L142.5 31.2L142.0 30.8L141.5 31.1L141.0 29.4L140.5 29.5L140.0 30.3L139.5 30.3L139.0 28.6L138.5 27.8L138.0 28.0L137.5 27.8L137.0 28.0L136.5 27.9L136.0 28.0L135.5 27.9L135.0 27.9L134.5 27.9L134.0 28.0L133.5 27.8L133.0 28.0L132.5 27.8L132.0 27.7L131.5 27.8L131.0 28.0L130.5 27.8L130.0 28.0L129.5 28.0L129.0 27.8L128.5 28.0L128.0 27.9L127.5 27.8L127.0 27.8L126.5 27.9L126.0 27.8L125.5 28.0L125.0 27.9L124.5 27.8L124.0 27.8L123.5 27.8L123.0 27.8L122.5 27.9L122.0 27.7L121.5 27.8L121.0 28.0L120.5 27.9L120.0 27.9L119.5 27.9L119.0 27.8L118.5 27.8L118.0 28.0L117.5 28.0L117.0 27.9L116.5 27.8L116.0 27.9L115.5 28.0L115.0 27.9L114.5 27.8L114.0 27.8L113.5 28.0L113.0 27.9L112.5 27.9L112.0 27.9L111.5 27.9L111.0 27.9L110.5 28.4L110.0 28.4L109.5 28.6L109.0 29.5L108.5 28.5L108.0 28.0L107.5 27.8L107.0 27.9L106.5 27.8L106.0 27.9L105.5 28.0L105.0 28.0L104.5 28.0L104.0 27.8L103.5 27.9L103.0 27.8L102.5 27.9L102.0 27.8L101.5 27.8L101.0 27.9L100.5 27.8L100.0 28.0L99.5 28.0L99.0 27.8L98.5 28.0L98.0 27.9L97.5 27.9L97.0 28.1L96.5 27.9L96.0 28.0L95.5 28.0L95.0 28.0L94.5 28.3L94.0 28.1L93.5 28.5L93.0 28.3L92.5 28.3L92.0 28.7L91.5 28.3L91.0 28.8L90.5 28.4L90.0 28.8L89.5 28.9L89.0 28.6L88.5 29.2L88.0 29.1L87.5 29.3L87.0 28.7L86.5 28.9L86.0 29.6L85.5 29.5L85.0 29.6L84.5 29.1L84.0 30.0L83.5 29.8L83.0 30.2L82.5 29.6L82.0 30.5L81.5 29.7L81.0 30.9L80.5 30.4L80.0 31.4L79.5 32.0L79.0 31.9L78.5 34.2L78.0 34.8L77.5 37.9L77.0 45.6L76.5 45.8L76.0 38.4L75.5 28.8L75.0 28.0L74.5 28.0L74.0 28.0L73.5 27.9L73.0 27.9L72.5 27.8L72.0 27.8L71.5 28.0L71.0 27.9L70.5 27.8L70.0 28.0L69.5 27.9L69.0 27.7L68.5 28.0L68.0 27.7L67.5 28.0L67.0 27.9L66.5 28.0L66.0 28.0L65.5 28.0L65.0 27.9L64.5 28.0L64.0 28.0L63.5 28.0L63.0 27.9L62.5 27.9L62.0 28.0L61.5 28.0L61.0 27.8L60.5 27.9L60.0 28.0L59.5 27.8L59.0 27.8L58.5 28.0L58.0 27.8L57.5 27.9L57.0 27.9L56.5 28.0L56.0 28.0L55.5 27.9L55.0 27.8L54.5 27.9L54.0 27.8L53.5 28.0L53.0 27.8L52.5 28.0L52.0 28.0L51.5 27.8L51.0 27.9L50.5 27.8L50.0 28.0L49.5 27.9L49.0 27.9L48.5 28.1L48.0 28.6L47.5 28.9L47.0 29.2L46.5 28.2L46.0 28.0L45.5 28.0L45.0 27.9L44.5 28.0L44.0 28.0L43.5 28.0L43.0 28.0L42.5 27.8L42.0 27.8L41.5 28.0L41.0 27.8L40.5 27.8L40.0 27.9L39.5 27.9L39.0 27.9L38.5 27.8L38.0 27.9L37.5 28.0L37.0 28.0L36.5 27.8L36.0 27.9L35.5 27.8L35.0 27.9L34.5 27.8L34.0 28.0L33.5 28.0L33.0 28.0L32.5 27.9L32.0 27.9L31.5 28.0L31.0 27.8L30.5 27.9L30.0 27.8L29.5 27.9L29.0 27.9L28.5 27.9L28.0 27.8L27.5 27.9L27.0 27.8L26.5 27.9L26.0 28.1L25.5 28.2L25.0 28.4L24.5 28.5L24.0 28.6L23.5 28.8L23.0 29.0L22.5 29.2L22.0 29.1L21.5 29.1L21.0 29.3L20.5 30.2L20.0 29.9L19.5 30.5L19.0 31.1L18.5 31.9L18.0 32.7L17.5 32.0L17.0 32.9L16.5 32.7L16.0 33.8L15.5 31.5L15.0 30.4L14.5 31.0L14.0 31.9L13.5 30.2L13.0 28.0L12.5 28.0L12.0 28.0L11.5 27.9L11.0 27.9L10.5 27.7L10.0 27.9L9.5 27.8L9.0 28.0L8.5 28.0L8.0 27.9L7.5 27.9L7.0 27.8L6.5 27.9L6.0 27.9L5.5 28.0L5.0 27.9L4.5 27.9L4.0 27.9L3.5 27.9L3.0 27.8L2.5 27.8L2.0 27.8L1.5 28.0L1.0 27.8L0.5 28.0L0.0 27.8ZM75.6 27.0L76.2 0.4L77.0 0.4L79.0 27.0L77.0 52.9L76.2 52.9ZM202.0 27.0L202.7 0.4L203.4 0.4L205.4 27.0L203.4 52.9L202.7 52.9ZM266.0 27.0L266.6 0.4L267.4 0.4L269.4 27.0L267.4 52.4L266.6 52.4ZM315.0 27.0L315.6 0.4L316.4 0.4L318.4 27.0L316.4 52.0L315.6 52.0ZM329.0 27.0L329.6 13.0L330.4 13.0L332.4 27.0L330.4 41.0L329.6 41.0ZM377.0 27.0L377.6 12.0L378.4 12.0L380.4 27.0L378.4 47.0L377.6 47.0ZM392.0 27.0L392.6 15.0L393.4 15.0L395.4 27.0L393.4 39.0L392.6 39.0ZM455.6 27.0L456.2 0.4L457.1 0.4L459.0 27.0L457.1 52.4L456.2 52.4Z" fill="#5122a8"/></svg>
<div style="left:7.3px;top:426px;width:121.7px;height:1px;background:#3a3a3a;"></div>
<div style="left:7.3px;top:427.6px;width:88px;height:10.4px;background:#8c2de0;"></div>
<div class="t" style="left:17.6px;top:429.3px;font-size:7.2px;color:#fff;letter-spacing:-.15px;text-shadow:0 0 .6px #fff;">Kick</div>
<svg style="left:0px;top:427.6px;" width="100" height="11" viewBox="0 0 100 11"><path d="M10.2 6c.8-2 1.8-2 2.5-.6s1.700 1.400 2.500-.600" stroke="#fff" stroke-width="1" fill="none"/><path d="M62.8 1.5l5.8 3.7-5.8 3.7z" fill="#22e022" stroke="#0c9a0c" stroke-width=".8"/><circle cx="75.8" cy="5.2" r="3.1" fill="#4a0808"/><path d="M83 2.7h6.4M83 5.2h6.4M83 7.7h6.4" stroke="#3a3a3a" stroke-width="1.1"/></svg>
<div style="left:19px;top:439.8px;width:57.6px;height:10.2px;background:#2a2a2a;"></div>
<div class="t" style="left:20.4px;top:441.4px;font-size:7.2px;color:#e6e6e6;">Soundbites</div>
<svg style="left:68.4px;top:444px;" width="4.6" height="2.4" viewBox="0 0 4.6 2.4"><path d="M0 0h4.6l-2.3 2.4z" fill="#555"/></svg>
<div style="left:19px;top:452px;width:57.6px;height:10.2px;background:#2a2a2a;"></div>
<div class="t" style="left:22.6px;top:453.5px;font-size:7.6px;color:#eee;font-weight:bold;">I</div>
<div class="t" style="left:27.4px;top:453.5px;font-size:7.4px;color:#e6e6e6;font-style:italic;letter-spacing:-.35px;">Built-i...put 1</div>
<svg style="left:68.4px;top:456.2px;" width="4.6" height="2.4" viewBox="0 0 4.6 2.4"><path d="M0 0h4.6l-2.3 2.4z" fill="#555"/></svg>
<div style="left:19px;top:464.4px;width:57.6px;height:10.2px;background:#2a2a2a;"></div>
<div class="t" style="left:20.6px;top:465.9px;font-size:7.6px;color:#eee;font-weight:bold;">O</div>
<div class="t" style="left:27.4px;top:465.9px;font-size:7.4px;color:#e6e6e6;letter-spacing:-.35px;">Built-i...ut 1-2</div>
<svg style="left:68.4px;top:468.6px;" width="4.6" height="2.4" viewBox="0 0 4.6 2.4"><path d="M0 0h4.6l-2.3 2.4z" fill="#555"/></svg>
<svg style="left:10.4px;top:475.6px;" width="4" height="5" viewBox="0 0 4 5"><path d="M.4 .4l2.6 2-2.6 2z" fill="#1c1c1c"/></svg>
<div style="left:95.6px;top:427.6px;width:5.2px;height:54.6px;background:#0b2f42;"></div>
<div style="left:95.4px;top:429.2px;width:5.4px;height:0.8px;background:#6a6a50;"></div>
<svg style="left:104.8px;top:429px;" width="8" height="8" viewBox="0 0 8 8"><circle cx="3" cy="3" r="2.1" fill="none" stroke="#626262" stroke-width="1"/><path d="M4.6 4.6l2.2 2.2" stroke="#626262" stroke-width="1.2"/></svg>
<div style="left:108.9px;top:438.6px;width:2.6px;height:40px;background:#414141;border-radius:1.3px;"></div>
<div style="left:108.9px;top:454.6px;width:2.6px;height:8px;background:#5c5c5c;border-radius:1.3px;"></div>
<svg style="left:129px;top:424.8px;" width="499.5" height="4" viewBox="0 0 499.5 4"><rect y=".3" width="499.5" height="1.700" fill="#161616"/><rect y="2" width="499.5" height="1.200" fill="#909090"/></svg>
<div style="left:129px;top:428.8px;width:499.5px;height:53.2px;background:#b07ff4;"></div>
<svg style="left:129px;top:428.8px;" width="499.5" height="53.2" viewBox="0 0 499.5 53.2"><path d="M0.0 26.2L0.5 24.8L1.0 22.5L1.5 23.2L2.0 23.8L2.5 24.1L3.0 23.7L3.5 21.4L4.0 22.1L4.5 23.4L5.0 23.9L5.5 24.2L6.0 24.1L6.5 24.8L7.0 24.8L7.5 25.2L8.0 25.5L8.5 25.7L9.0 25.6L9.5 25.8L10.0 26.0L10.5 26.1L11.0 26.3L11.5 26.2L12.0 26.0L12.5 26.0L13.0 26.0L13.5 26.1L14.0 26.2L14.5 26.1L15.0 26.0L15.5 26.2L16.0 26.2L16.5 26.1L17.0 26.2L17.5 26.2L18.0 26.3L18.5 26.0L19.0 26.1L19.5 26.2L20.0 26.1L20.5 26.2L21.0 26.0L21.5 26.2L22.0 26.0L22.5 26.2L23.0 26.0L23.5 26.0L24.0 26.1L24.5 25.7L25.0 24.4L25.5 24.6L26.0 25.4L26.5 25.3L27.0 25.9L27.5 26.1L28.0 26.1L28.5 26.0L29.0 26.1L29.5 26.0L30.0 26.0L30.5 26.2L31.0 26.2L31.5 26.2L32.0 26.1L32.5 26.2L33.0 26.2L33.5 26.1L34.0 26.1L34.5 26.2L35.0 26.1L35.5 26.1L36.0 26.0L36.5 26.2L37.0 26.2L37.5 26.1L38.0 26.2L38.5 26.0L39.0 26.2L39.5 26.1L40.0 26.1L40.5 26.1L41.0 25.1L41.5 20.6L42.0 13.4L42.5 19.3L43.0 20.0L43.5 20.6L44.0 21.2L44.5 21.5L45.0 22.9L45.5 23.6L46.0 22.8L46.5 23.2L47.0 23.2L47.5 24.3L48.0 23.8L48.5 23.8L49.0 24.4L49.5 23.7L50.0 24.5L50.5 24.3L51.0 24.2L51.5 24.4L52.0 24.4L52.5 24.3L53.0 24.3L53.5 24.7L54.0 25.2L54.5 24.7L55.0 24.8L55.5 25.4L56.0 24.9L56.5 25.2L57.0 25.0L57.5 25.1L58.0 25.1L58.5 25.4L59.0 25.3L59.5 25.3L60.0 25.7L60.5 25.5L61.0 25.5L61.5 25.7L62.0 25.6L62.5 25.7L63.0 25.8L63.5 25.9L64.0 26.0L64.5 26.0L65.0 25.9L65.5 25.9L66.0 26.1L66.5 26.0L67.0 26.2L67.5 26.0L68.0 26.0L68.5 26.2L69.0 26.2L69.5 26.1L70.0 26.0L70.5 26.1L71.0 26.0L71.5 26.0L72.0 26.1L72.5 26.1L73.0 26.1L73.5 26.0L74.0 26.2L74.5 26.3L75.0 26.2L75.5 26.0L76.0 26.0L76.5 26.2L77.0 26.0L77.5 26.0L78.0 26.3L78.5 26.1L79.0 26.0L79.5 26.1L80.0 26.0L80.5 26.1L81.0 26.2L81.5 26.2L82.0 26.2L82.5 26.2L83.0 26.0L83.5 25.4L84.0 24.4L84.5 24.6L85.0 24.8L85.5 25.0L86.0 25.5L86.5 25.9L87.0 26.1L87.5 26.1L88.0 26.3L88.5 26.1L89.0 26.2L89.5 26.0L90.0 26.0L90.5 26.0L91.0 26.1L91.5 26.2L92.0 26.0L92.5 26.0L93.0 26.0L93.5 26.2L94.0 26.2L94.5 26.2L95.0 26.2L95.5 26.2L96.0 26.2L96.5 26.1L97.0 26.2L97.5 26.0L98.0 26.2L98.5 26.3L99.0 26.1L99.5 26.2L100.0 26.1L100.5 26.2L101.0 26.0L101.5 26.1L102.0 26.1L102.5 26.2L103.0 26.0L103.5 26.2L104.0 26.0L104.5 25.9L105.0 25.1L105.5 25.7L106.0 25.6L106.5 25.9L107.0 26.0L107.5 26.1L108.0 26.1L108.5 26.2L109.0 26.2L109.5 26.0L110.0 26.0L110.5 26.1L111.0 26.0L111.5 26.1L112.0 26.1L112.5 26.2L113.0 26.2L113.5 26.0L114.0 26.2L114.5 26.1L115.0 26.2L115.5 26.2L116.0 26.2L116.5 26.2L117.0 26.1L117.5 26.1L118.0 26.0L118.5 26.1L119.0 26.0L119.5 26.1L120.0 26.3L120.5 26.1L121.0 22.7L121.5 15.0L122.0 7.0L122.5 8.6L123.0 12.8L123.5 16.3L124.0 18.8L124.5 19.2L125.0 20.5L125.5 22.5L126.0 22.2L126.5 22.5L127.0 23.5L127.5 22.3L128.0 22.9L128.5 23.3L129.0 23.3L129.5 23.6L130.0 23.8L130.5 23.4L131.0 23.5L131.5 24.4L132.0 24.4L132.5 24.7L133.0 24.1L133.5 24.6L134.0 24.1L134.5 24.9L135.0 24.7L135.5 24.5L136.0 25.1L136.5 24.5L137.0 24.8L137.5 24.8L138.0 25.3L138.5 25.0L139.0 24.9L139.5 24.9L140.0 25.4L140.5 25.0L141.0 25.3L141.5 25.2L142.0 25.7L142.5 25.7L143.0 25.5L143.5 25.6L144.0 25.4L144.5 25.5L145.0 25.7L145.5 25.6L146.0 25.9L146.5 25.7L147.0 25.8L147.5 26.0L148.0 25.8L148.5 26.1L149.0 26.0L149.5 26.0L150.0 26.0L150.5 26.1L151.0 26.2L151.5 26.1L152.0 26.3L152.5 26.0L153.0 26.0L153.5 26.1L154.0 26.2L154.5 26.0L155.0 26.1L155.5 26.1L156.0 26.2L156.5 26.3L157.0 26.2L157.5 26.1L158.0 26.2L158.5 26.0L159.0 26.3L159.5 26.1L160.0 26.1L160.5 26.1L161.0 26.1L161.5 26.1L162.0 26.2L162.5 26.1L163.0 26.0L163.5 25.2L164.0 23.5L164.5 23.7L165.0 24.0L165.5 24.7L166.0 25.0L166.5 25.1L167.0 25.4L167.5 25.9L168.0 25.9L168.5 26.0L169.0 26.0L169.5 26.0L170.0 26.0L170.5 26.2L171.0 26.2L171.5 26.0L172.0 26.2L172.5 26.2L173.0 26.1L173.5 26.0L174.0 26.2L174.5 26.1L175.0 26.0L175.5 26.1L176.0 26.1L176.5 26.1L177.0 26.0L177.5 26.1L178.0 26.0L178.5 26.0L179.0 26.2L179.5 26.1L180.0 26.2L180.5 26.0L181.0 26.3L181.5 26.0L182.0 26.1L182.5 26.1L183.0 26.0L183.5 26.0L184.0 26.0L184.5 26.1L185.0 26.2L185.5 25.9L186.0 24.9L186.5 25.0L187.0 25.5L187.5 25.8L188.0 26.0L188.5 26.2L189.0 26.2L189.5 26.1L190.0 26.2L190.5 26.0L191.0 26.0L191.5 26.2L192.0 26.0L192.5 26.0L193.0 26.1L193.5 26.2L194.0 26.0L194.5 26.0L195.0 26.0L195.5 26.1L196.0 26.1L196.5 26.1L197.0 26.0L197.5 26.0L198.0 26.1L198.5 26.0L199.0 26.0L199.5 26.0L200.0 26.0L200.5 26.2L201.0 26.1L201.5 26.0L202.0 26.2L202.5 26.1L203.0 26.0L203.5 24.5L204.0 22.6L204.5 23.4L205.0 24.2L205.5 24.0L206.0 24.2L206.5 25.2L207.0 25.1L207.5 25.2L208.0 25.5L208.5 25.5L209.0 25.7L209.5 25.9L210.0 26.1L210.5 26.0L211.0 26.1L211.5 26.2L212.0 26.1L212.5 26.1L213.0 26.2L213.5 26.1L214.0 26.0L214.5 26.2L215.0 26.1L215.5 26.0L216.0 26.0L216.5 26.2L217.0 26.2L217.5 26.1L218.0 26.2L218.5 26.2L219.0 26.2L219.5 26.0L220.0 26.0L220.5 26.2L221.0 26.0L221.5 26.2L222.0 24.8L222.5 20.6L223.0 15.6L223.5 18.4L224.0 19.3L224.5 21.5L225.0 22.3L225.5 23.3L226.0 23.4L226.5 23.5L227.0 23.3L227.5 23.9L228.0 23.8L228.5 24.4L229.0 24.5L229.5 24.7L230.0 24.2L230.5 24.2L231.0 25.0L231.5 24.7L232.0 25.1L232.5 24.9L233.0 24.8L233.5 24.9L234.0 25.2L234.5 25.5L235.0 25.1L235.5 25.5L236.0 25.4L236.5 25.7L237.0 25.4L237.5 25.3L238.0 25.4L238.5 25.6L239.0 25.8L239.5 25.8L240.0 26.0L240.5 26.0L241.0 25.7L241.5 26.0L242.0 25.8L242.5 25.9L243.0 26.1L243.5 26.1L244.0 26.1L244.5 25.2L245.0 23.7L245.5 24.1L246.0 24.5L246.5 24.9L247.0 25.0L247.5 25.6L248.0 25.7L248.5 26.1L249.0 26.1L249.5 26.1L250.0 26.1L250.5 26.1L251.0 26.1L251.5 26.2L252.0 26.0L252.5 26.2L253.0 26.0L253.5 26.0L254.0 26.2L254.5 26.0L255.0 26.0L255.5 26.0L256.0 26.3L256.5 26.1L257.0 26.0L257.5 26.3L258.0 26.2L258.5 26.2L259.0 26.0L259.5 26.2L260.0 26.1L260.5 26.2L261.0 26.0L261.5 26.2L262.0 26.1L262.5 26.1L263.0 26.1L263.5 26.2L264.0 26.0L264.5 26.0L265.0 26.1L265.5 26.2L266.0 26.0L266.5 26.1L267.0 26.0L267.5 26.1L268.0 26.1L268.5 26.1L269.0 26.1L269.5 26.2L270.0 26.1L270.5 26.1L271.0 26.1L271.5 26.0L272.0 26.0L272.5 26.1L273.0 26.0L273.5 26.0L274.0 26.0L274.5 26.1L275.0 26.2L275.5 26.0L276.0 26.2L276.5 26.0L277.0 26.0L277.5 26.0L278.0 26.2L278.5 26.0L279.0 26.0L279.5 26.1L280.0 26.1L280.5 26.2L281.0 23.7L281.5 14.5L282.0 1.1L282.5 13.2L283.0 12.3L283.5 18.2L284.0 18.0L284.5 20.7L285.0 20.8L285.5 21.7L286.0 21.3L286.5 22.6L287.0 22.2L287.5 22.9L288.0 22.6L288.5 23.7L289.0 23.2L289.5 23.1L290.0 24.1L290.5 24.1L291.0 23.7L291.5 23.5L292.0 23.6L292.5 24.2L293.0 24.1L293.5 24.2L294.0 24.2L294.5 24.6L295.0 24.5L295.5 24.5L296.0 24.6L296.5 24.4L297.0 24.8L297.5 25.1L298.0 24.7L298.5 25.3L299.0 25.0L299.5 25.5L300.0 25.2L300.5 25.1L301.0 25.1L301.5 25.4L302.0 25.3L302.5 25.4L303.0 25.6L303.5 25.8L304.0 25.4L304.5 25.9L305.0 25.7L305.5 25.6L306.0 25.7L306.5 25.9L307.0 25.7L307.5 25.8L308.0 26.0L308.5 26.0L309.0 25.8L309.5 26.0L310.0 26.1L310.5 26.2L311.0 26.0L311.5 26.2L312.0 26.1L312.5 26.1L313.0 26.0L313.5 26.2L314.0 26.0L314.5 26.2L315.0 26.0L315.5 26.1L316.0 26.0L316.5 26.2L317.0 26.1L317.5 26.3L318.0 26.3L318.5 26.2L319.0 26.0L319.5 26.0L320.0 26.1L320.5 26.1L321.0 26.1L321.5 26.1L322.0 26.2L322.5 25.3L323.0 24.2L323.5 24.6L324.0 25.5L324.5 25.5L325.0 25.7L325.5 26.0L326.0 26.2L326.5 26.1L327.0 26.1L327.5 26.1L328.0 26.1L328.5 26.0L329.0 26.0L329.5 26.1L330.0 26.1L330.5 26.1L331.0 26.2L331.5 26.2L332.0 26.2L332.5 26.0L333.0 26.2L333.5 26.1L334.0 26.0L334.5 26.0L335.0 26.2L335.5 26.1L336.0 26.0L336.5 26.1L337.0 26.0L337.5 26.2L338.0 26.0L338.5 26.2L339.0 26.2L339.5 26.0L340.0 26.1L340.5 26.0L341.0 26.2L341.5 26.0L342.0 26.0L342.5 26.2L343.0 26.1L343.5 26.2L344.0 26.2L344.5 26.1L345.0 26.0L345.5 26.0L346.0 26.2L346.5 26.1L347.0 26.0L347.5 26.2L348.0 26.3L348.5 26.0L349.0 26.2L349.5 26.2L350.0 26.1L350.5 26.0L351.0 26.2L351.5 26.1L352.0 26.1L352.5 26.1L353.0 26.0L353.5 26.2L354.0 26.3L354.5 26.2L355.0 26.2L355.5 26.0L356.0 26.0L356.5 26.1L357.0 26.2L357.5 26.0L358.0 26.0L358.5 26.2L359.0 26.0L359.5 26.1L360.0 26.1L360.5 26.0L361.0 26.1L361.5 26.0L362.0 25.4L362.5 22.1L363.0 18.5L363.5 20.4L364.0 20.2L364.5 21.3L365.0 22.4L365.5 22.5L366.0 23.4L366.5 23.8L367.0 24.0L367.5 24.6L368.0 24.6L368.5 24.6L369.0 24.8L369.5 25.0L370.0 24.7L370.5 25.1L371.0 25.2L371.5 25.1L372.0 25.5L372.5 25.3L373.0 25.5L373.5 25.9L374.0 25.8L374.5 25.6L375.0 26.0L375.5 25.8L376.0 25.9L376.5 26.1L377.0 26.1L377.5 26.3L378.0 26.1L378.5 26.1L379.0 26.3L379.5 26.2L380.0 26.2L380.5 26.2L381.0 26.1L381.5 26.1L382.0 26.1L382.5 26.2L383.0 26.0L383.5 26.3L384.0 26.0L384.5 26.0L385.0 26.2L385.5 26.2L386.0 26.1L386.5 26.0L387.0 26.2L387.5 26.0L388.0 26.2L388.5 26.1L389.0 26.1L389.5 26.1L390.0 26.0L390.5 26.2L391.0 26.1L391.5 26.3L392.0 26.1L392.5 26.2L393.0 26.2L393.5 26.2L394.0 26.1L394.5 26.1L395.0 26.2L395.5 26.1L396.0 26.2L396.5 26.0L397.0 26.1L397.5 26.0L398.0 26.0L398.5 26.2L399.0 26.1L399.5 26.0L400.0 26.1L400.5 26.0L401.0 26.0L401.5 26.0L402.0 26.2L402.5 25.9L403.0 25.1L403.5 25.0L404.0 25.6L404.5 25.6L405.0 25.9L405.5 26.2L406.0 26.2L406.5 26.0L407.0 26.0L407.5 26.0L408.0 26.1L408.5 26.1L409.0 26.0L409.5 26.1L410.0 26.1L410.5 26.2L411.0 26.2L411.5 26.1L412.0 26.1L412.5 26.1L413.0 26.0L413.5 26.2L414.0 26.1L414.5 26.3L415.0 26.2L415.5 26.2L416.0 26.0L416.5 26.1L417.0 26.1L417.5 26.2L418.0 26.2L418.5 26.2L419.0 26.1L419.5 26.0L420.0 26.2L420.5 26.0L421.0 26.2L421.5 26.0L422.0 26.0L422.5 26.0L423.0 26.3L423.5 26.1L424.0 26.2L424.5 26.0L425.0 26.1L425.5 26.1L426.0 26.0L426.5 26.2L427.0 26.0L427.5 26.2L428.0 26.2L428.5 26.2L429.0 26.2L429.5 26.0L430.0 26.2L430.5 26.0L431.0 26.0L431.5 26.1L432.0 26.3L432.5 26.2L433.0 26.2L433.5 26.3L434.0 26.2L434.5 26.1L435.0 26.0L435.5 26.2L436.0 26.1L436.5 26.2L437.0 26.0L437.5 26.1L438.0 26.0L438.5 26.2L439.0 26.0L439.5 26.1L440.0 26.0L440.5 26.2L441.0 26.2L441.5 26.2L442.0 23.1L442.5 13.3L443.0 6.4L443.5 10.3L444.0 13.2L444.5 16.3L445.0 18.8L445.5 20.4L446.0 22.1L446.5 22.2L447.0 21.6L447.5 22.1L448.0 22.9L448.5 23.2L449.0 23.4L449.5 23.6L450.0 23.2L450.5 23.3L451.0 24.1L451.5 23.2L452.0 23.5L452.5 24.4L453.0 24.2L453.5 24.5L454.0 24.7L454.5 24.5L455.0 24.7L455.5 24.8L456.0 24.5L456.5 25.0L457.0 24.9L457.5 24.8L458.0 24.7L458.5 25.2L459.0 25.0L459.5 25.2L460.0 24.8L460.5 25.5L461.0 25.2L461.5 25.6L462.0 25.2L462.5 25.2L463.0 25.3L463.5 25.2L464.0 25.6L464.5 25.7L465.0 25.4L465.5 25.5L466.0 25.5L466.5 25.9L467.0 26.0L467.5 25.8L468.0 25.7L468.5 26.1L469.0 26.0L469.5 25.8L470.0 26.2L470.5 26.1L471.0 26.1L471.5 26.2L472.0 26.0L472.5 26.0L473.0 26.1L473.5 26.0L474.0 26.1L474.5 26.2L475.0 26.1L475.5 26.2L476.0 26.2L476.5 26.1L477.0 26.1L477.5 26.0L478.0 26.0L478.5 26.1L479.0 26.0L479.5 26.2L480.0 26.2L480.5 26.0L481.0 26.3L481.5 26.2L482.0 26.0L482.5 26.1L483.0 26.1L483.5 26.0L484.0 26.1L484.5 24.0L485.0 21.8L485.5 22.4L486.0 22.9L486.5 22.9L487.0 23.8L487.5 23.8L488.0 24.3L488.5 25.1L489.0 24.8L489.5 25.2L490.0 25.4L490.5 25.6L491.0 25.9L491.5 26.1L492.0 26.1L492.5 26.0L493.0 26.1L493.5 26.1L494.0 26.1L494.5 26.1L495.0 26.2L495.5 26.1L496.0 26.0L496.5 26.0L497.0 26.3L497.5 26.1L498.0 26.1L498.5 26.0L499.0 26.1L499.5 26.0L499.5 27.9L499.0 28.0L498.5 27.8L498.0 28.0L497.5 27.9L497.0 27.9L496.5 27.9L496.0 27.9L495.5 28.0L495.0 27.9L494.5 28.0L494.0 27.9L493.5 28.0L493.0 28.0L492.5 27.9L492.0 28.1L491.5 27.9L491.0 28.3L490.5 28.5L490.0 28.8L489.5 28.8L489.0 28.9L488.5 29.2L488.0 29.7L487.5 29.4L487.0 30.5L486.5 30.9L486.0 31.6L485.5 31.3L485.0 31.6L484.5 29.6L484.0 27.9L483.5 27.8L483.0 27.8L482.5 28.0L482.0 27.9L481.5 27.9L481.0 27.8L480.5 28.0L480.0 27.8L479.5 27.9L479.0 28.0L478.5 27.9L478.0 27.8L477.5 27.7L477.0 27.8L476.5 27.9L476.0 27.8L475.5 27.9L475.0 27.7L474.5 27.8L474.0 27.7L473.5 28.0L473.0 27.9L472.5 28.0L472.0 28.0L471.5 28.1L471.0 27.8L470.5 27.9L470.0 27.9L469.5 28.0L469.0 27.9L468.5 28.3L468.0 28.0L467.5 28.0L467.0 28.1L466.5 28.2L466.0 28.4L465.5 28.3L465.0 28.3L464.5 28.3L464.0 28.4L463.5 28.3L463.0 28.3L462.5 28.4L462.0 28.6L461.5 29.0L461.0 28.9L460.5 28.8L460.0 28.9L459.5 28.6L459.0 29.0L458.5 29.3L458.0 29.1L457.5 29.5L457.0 29.2L456.5 29.4L456.0 29.5L455.5 29.8L455.0 29.7L454.5 29.6L454.0 29.8L453.5 29.9L453.0 29.9L452.5 29.5L452.0 30.2L451.5 30.6L451.0 30.0L450.5 30.6L450.0 30.4L449.5 30.1L449.0 31.1L448.5 30.6L448.0 31.8L447.5 30.9L447.0 31.4L446.5 32.0L446.0 33.8L445.5 33.1L445.0 34.2L444.5 35.3L444.0 41.2L443.5 45.7L443.0 50.0L442.5 41.5L442.0 31.4L441.5 27.8L441.0 28.0L440.5 28.0L440.0 28.0L439.5 27.8L439.0 28.0L438.5 27.8L438.0 27.8L437.5 27.8L437.0 27.7L436.5 28.0L436.0 27.8L435.5 28.0L435.0 27.8L434.5 28.0L434.0 27.8L433.5 28.0L433.0 28.0L432.5 27.9L432.0 27.8L431.5 27.7L431.0 28.0L430.5 27.7L430.0 27.8L429.5 27.9L429.0 27.9L428.5 28.0L428.0 27.9L427.5 28.0L427.0 27.9L426.5 27.8L426.0 28.0L425.5 28.0L425.0 27.8L424.5 27.9L424.0 27.9L423.5 27.8L423.0 27.9L422.5 27.9L422.0 27.8L421.5 28.0L421.0 27.8L420.5 27.8L420.0 27.8L419.5 27.9L419.0 28.0L418.5 27.8L418.0 27.8L417.5 28.0L417.0 28.0L416.5 27.8L416.0 27.8L415.5 28.0L415.0 27.9L414.5 27.9L414.0 28.0L413.5 27.9L413.0 27.9L412.5 28.0L412.0 27.9L411.5 28.0L411.0 27.9L410.5 27.9L410.0 27.9L409.5 27.8L409.0 28.0L408.5 28.0L408.0 27.9L407.5 27.9L407.0 27.9L406.5 27.8L406.0 28.0L405.5 27.8L405.0 27.9L404.5 28.2L404.0 28.6L403.5 28.5L403.0 29.2L402.5 28.1L402.0 27.8L401.5 28.0L401.0 27.9L400.5 27.7L400.0 27.9L399.5 27.8L399.0 27.8L398.5 28.0L398.0 27.8L397.5 27.8L397.0 28.0L396.5 28.0L396.0 27.8L395.5 27.8L395.0 27.8L394.5 27.7L394.0 28.0L393.5 27.9L393.0 28.0L392.5 28.0L392.0 28.0L391.5 27.8L391.0 28.0L390.5 27.9L390.0 27.8L389.5 27.9L389.0 27.9L388.5 27.9L388.0 27.9L387.5 28.0L387.0 28.0L386.5 27.7L386.0 28.0L385.5 27.8L385.0 28.0L384.5 27.8L384.0 28.0L383.5 27.9L383.0 27.9L382.5 27.9L382.0 28.0L381.5 27.8L381.0 27.9L380.5 27.9L380.0 27.8L379.5 28.0L379.0 28.0L378.5 28.0L378.0 28.0L377.5 27.8L377.0 27.9L376.5 28.1L376.0 27.9L375.5 28.1L375.0 28.2L374.5 28.3L374.0 28.3L373.5 28.3L373.0 28.5L372.5 28.7L372.0 28.3L371.5 28.4L371.0 28.5L370.5 29.1L370.0 28.9L369.5 29.4L369.0 29.1L368.5 29.6L368.0 29.2L367.5 29.9L367.0 29.9L366.5 30.2L366.0 30.8L365.5 31.6L365.0 31.2L364.5 32.6L364.0 32.8L363.5 33.9L363.0 37.7L362.5 31.9L362.0 28.5L361.5 27.8L361.0 28.0L360.5 27.7L360.0 27.8L359.5 28.0L359.0 27.8L358.5 27.8L358.0 28.0L357.5 27.8L357.0 28.0L356.5 27.8L356.0 27.9L355.5 27.7L355.0 27.9L354.5 27.9L354.0 27.9L353.5 28.0L353.0 27.8L352.5 27.9L352.0 27.9L351.5 27.9L351.0 27.8L350.5 27.8L350.0 27.9L349.5 28.0L349.0 28.0L348.5 27.8L348.0 27.8L347.5 28.0L347.0 27.8L346.5 27.8L346.0 28.0L345.5 27.8L345.0 27.9L344.5 27.9L344.0 27.8L343.5 27.8L343.0 27.8L342.5 28.0L342.0 27.8L341.5 27.8L341.0 28.0L340.5 27.9L340.0 28.0L339.5 27.8L339.0 28.0L338.5 28.0L338.0 28.0L337.5 27.9L337.0 27.9L336.5 27.9L336.0 27.8L335.5 27.8L335.0 28.0L334.5 27.8L334.0 28.0L333.5 27.8L333.0 28.0L332.5 28.0L332.0 27.8L331.5 28.0L331.0 27.9L330.5 27.9L330.0 27.9L329.5 27.9L329.0 27.9L328.5 28.0L328.0 27.8L327.5 27.8L327.0 27.8L326.5 28.0L326.0 27.9L325.5 28.0L325.0 28.2L324.5 28.4L324.0 28.5L323.5 29.1L323.0 29.3L322.5 28.5L322.0 27.8L321.5 27.9L321.0 27.9L320.5 27.8L320.0 27.9L319.5 28.0L319.0 27.9L318.5 27.8L318.0 27.8L317.5 28.0L317.0 28.0L316.5 28.0L316.0 27.8L315.5 28.0L315.0 28.0L314.5 28.0L314.0 28.0L313.5 27.8L313.0 27.9L312.5 27.9L312.0 27.9L311.5 28.0L311.0 27.9L310.5 27.9L310.0 28.0L309.5 27.9L309.0 28.1L308.5 28.2L308.0 27.9L307.5 28.2L307.0 28.2L306.5 28.4L306.0 28.1L305.5 28.2L305.0 28.4L304.5 28.3L304.0 28.2L303.5 28.3L303.0 28.7L302.5 28.5L302.0 28.5L301.5 28.8L301.0 28.4L300.5 28.5L300.0 29.0L299.5 28.7L299.0 28.7L298.5 29.1L298.0 29.1L297.5 29.2L297.0 29.2L296.5 29.1L296.0 29.0L295.5 29.7L295.0 29.4L294.5 29.5L294.0 29.3L293.5 30.0L293.0 30.2L292.5 29.7L292.0 30.0L291.5 29.5L291.0 29.6L290.5 30.0L290.0 30.2L289.5 30.5L289.0 30.3L288.5 30.2L288.0 31.1L287.5 30.4L287.0 30.8L286.5 31.9L286.0 31.7L285.5 32.3L285.0 32.5L284.5 34.9L284.0 34.7L283.5 36.0L283.0 37.7L282.5 43.7L282.0 51.8L281.5 40.3L281.0 30.9L280.5 28.0L280.0 28.0L279.5 27.9L279.0 27.9L278.5 28.0L278.0 27.9L277.5 27.8L277.0 27.9L276.5 27.9L276.0 28.0L275.5 27.9L275.0 28.0L274.5 27.9L274.0 28.0L273.5 27.9L273.0 27.9L272.5 27.8L272.0 28.0L271.5 27.8L271.0 27.9L270.5 27.8L270.0 28.0L269.5 27.8L269.0 27.8L268.5 27.9L268.0 28.0L267.5 27.8L267.0 27.8L266.5 27.8L266.0 27.7L265.5 27.8L265.0 28.0L264.5 27.8L264.0 27.9L263.5 28.0L263.0 28.0L262.5 27.9L262.0 27.9L261.5 28.0L261.0 27.9L260.5 28.0L260.0 27.9L259.5 27.9L259.0 28.0L258.5 28.0L258.0 27.8L257.5 27.9L257.0 28.0L256.5 27.9L256.0 28.0L255.5 27.8L255.0 28.0L254.5 27.9L254.0 27.8L253.5 27.8L253.0 28.0L252.5 27.9L252.0 27.8L251.5 28.0L251.0 28.0L250.5 27.8L250.0 27.8L249.5 27.8L249.0 28.1L248.5 28.1L248.0 28.1L247.5 28.6L247.0 28.6L246.5 28.7L246.0 29.4L245.5 30.3L245.0 30.6L244.5 29.1L244.0 28.1L243.5 28.4L243.0 28.6L242.5 28.7L242.0 28.3L241.5 28.3L241.0 28.5L240.5 28.8L240.0 28.7L239.5 28.8L239.0 29.0L238.5 29.3L238.0 29.1L237.5 29.4L237.0 28.9L236.5 28.9L236.0 29.3L235.5 29.4L235.0 29.6L234.5 29.7L234.0 29.9L233.5 30.0L233.0 29.6L232.5 29.8L232.0 29.8L231.5 29.8L231.0 30.7L230.5 29.9L230.0 30.7L229.5 30.2L229.0 30.4L228.5 30.9L228.0 31.2L227.5 31.8L227.0 32.7L226.5 31.8L226.0 32.1L225.5 34.1L225.0 34.8L224.5 34.6L224.0 36.3L223.5 39.4L223.0 44.4L222.5 38.6L222.0 29.8L221.5 28.0L221.0 27.9L220.5 28.0L220.0 28.0L219.5 28.0L219.0 27.8L218.5 28.0L218.0 28.0L217.5 28.0L217.0 27.9L216.5 27.9L216.0 28.0L215.5 27.9L215.0 27.9L214.5 27.9L214.0 27.8L213.5 28.0L213.0 27.9L212.5 27.8L212.0 27.8L211.5 27.7L211.0 28.0L210.5 27.8L210.0 27.8L209.5 28.0L209.0 28.3L208.5 28.2L208.0 28.5L207.5 28.6L207.0 29.0L206.5 29.0L206.0 29.1L205.5 29.9L205.0 30.3L204.5 30.1L204.0 30.5L203.5 29.5L203.0 28.0L202.5 28.0L202.0 28.0L201.5 27.8L201.0 27.8L200.5 28.0L200.0 27.8L199.5 28.0L199.0 28.0L198.5 27.9L198.0 27.9L197.5 27.8L197.0 27.7L196.5 28.0L196.0 27.8L195.5 28.0L195.0 28.0L194.5 28.0L194.0 28.0L193.5 27.9L193.0 27.9L192.5 27.9L192.0 28.0L191.5 27.7L191.0 27.8L190.5 28.0L190.0 27.8L189.5 27.9L189.0 28.0L188.5 27.8L188.0 28.2L187.5 28.2L187.0 28.7L186.5 29.0L186.0 29.4L185.5 28.4L185.0 28.0L184.5 27.9L184.0 27.9L183.5 27.8L183.0 27.9L182.5 27.8L182.0 28.0L181.5 27.8L181.0 28.0L180.5 27.8L180.0 27.9L179.5 27.8L179.0 28.0L178.5 27.9L178.0 27.9L177.5 27.7L177.0 27.8L176.5 27.8L176.0 28.0L175.5 27.9L175.0 28.0L174.5 27.9L174.0 27.9L173.5 27.9L173.0 27.9L172.5 27.9L172.0 28.0L171.5 27.9L171.0 28.0L170.5 28.0L170.0 28.0L169.5 27.8L169.0 28.1L168.5 28.0L168.0 28.1L167.5 28.2L167.0 28.8L166.5 28.5L166.0 29.2L165.5 29.4L165.0 29.9L164.5 29.9L164.0 30.6L163.5 29.3L163.0 27.9L162.5 27.8L162.0 27.8L161.5 28.0L161.0 27.8L160.5 28.0L160.0 27.9L159.5 27.8L159.0 28.0L158.5 28.0L158.0 27.9L157.5 27.9L157.0 27.9L156.5 27.8L156.0 28.0L155.5 27.9L155.0 28.0L154.5 28.0L154.0 28.0L153.5 27.7L153.0 27.9L152.5 28.0L152.0 27.9L151.5 27.9L151.0 28.0L150.5 28.0L150.0 28.0L149.5 28.1L149.0 27.9L148.5 28.0L148.0 27.9L147.5 28.0L147.0 28.0L146.5 28.2L146.0 28.2L145.5 28.4L145.0 28.1L144.5 28.3L144.0 28.6L143.5 28.6L143.0 28.6L142.5 28.5L142.0 28.8L141.5 28.6L141.0 28.5L140.5 28.5L140.0 28.7L139.5 28.8L139.0 28.6L138.5 28.9L138.0 28.9L137.5 29.0L137.0 29.3L136.5 29.4L136.0 29.4L135.5 29.2L135.0 29.3L134.5 29.1L134.0 29.8L133.5 30.0L133.0 30.0L132.5 29.9L132.0 29.8L131.5 30.5L131.0 30.0L130.5 30.1L130.0 30.6L129.5 30.2L129.0 30.1L128.5 31.2L128.0 30.8L127.5 30.9L127.0 31.6L126.5 31.3L126.0 31.9L125.5 31.4L125.0 33.1L124.5 33.2L124.0 34.7L123.5 36.5L123.0 39.0L122.5 44.7L122.0 50.2L121.5 42.0L121.0 31.2L120.5 27.9L120.0 27.9L119.5 27.8L119.0 27.9L118.5 27.8L118.0 27.7L117.5 27.8L117.0 27.8L116.5 28.0L116.0 28.0L115.5 28.0L115.0 27.9L114.5 28.0L114.0 28.0L113.5 27.8L113.0 27.7L112.5 27.9L112.0 28.0L111.5 27.9L111.0 27.9L110.5 27.9L110.0 28.0L109.5 27.7L109.0 28.0L108.5 27.8L108.0 27.7L107.5 27.8L107.0 27.9L106.5 27.9L106.0 28.4L105.5 28.8L105.0 28.8L104.5 28.2L104.0 28.0L103.5 27.9L103.0 27.9L102.5 28.0L102.0 27.9L101.5 27.9L101.0 27.8L100.5 27.9L100.0 28.0L99.5 27.8L99.0 28.0L98.5 27.9L98.0 27.8L97.5 27.8L97.0 27.9L96.5 28.0L96.0 27.8L95.5 28.0L95.0 27.9L94.5 27.9L94.0 28.0L93.5 27.8L93.0 27.7L92.5 28.0L92.0 27.9L91.5 27.9L91.0 27.9L90.5 28.0L90.0 27.9L89.5 27.8L89.0 27.9L88.5 27.8L88.0 28.0L87.5 27.8L87.0 28.1L86.5 28.5L86.0 28.4L85.5 29.0L85.0 29.0L84.5 29.4L84.0 30.0L83.5 28.5L83.0 27.9L82.5 27.9L82.0 28.0L81.5 28.0L81.0 27.8L80.5 27.9L80.0 28.0L79.5 27.9L79.0 27.7L78.5 27.8L78.0 27.8L77.5 28.0L77.0 28.0L76.5 28.0L76.0 27.8L75.5 27.9L75.0 27.9L74.5 27.9L74.0 27.8L73.5 27.9L73.0 28.1L72.5 27.8L72.0 27.8L71.5 28.2L71.0 28.1L70.5 28.3L70.0 28.1L69.5 28.1L69.0 28.1L68.5 28.2L68.0 28.4L67.5 28.4L67.0 28.2L66.5 28.6L66.0 28.6L65.5 28.7L65.0 28.6L64.5 28.9L64.0 28.8L63.5 28.6L63.0 28.6L62.5 28.9L62.0 28.6L61.5 28.9L61.0 29.0L60.5 29.3L60.0 29.2L59.5 29.0L59.0 28.9L58.5 29.7L58.0 29.8L57.5 29.2L57.0 30.0L56.5 29.4L56.0 29.6L55.5 29.4L55.0 29.9L54.5 30.2L54.0 30.2L53.5 30.6L53.0 30.4L52.5 29.8L52.0 30.4L51.5 30.5L51.0 30.9L50.5 30.9L50.0 31.1L49.5 30.7L49.0 32.0L48.5 31.7L48.0 31.8L47.5 32.0L47.0 32.1L46.5 31.5L46.0 32.8L45.5 33.4L45.0 32.9L44.5 34.0L44.0 35.0L43.5 34.6L43.0 38.0L42.5 39.8L42.0 44.3L41.5 36.5L41.0 30.3L40.5 27.8L40.0 27.9L39.5 27.9L39.0 27.8L38.5 27.9L38.0 27.9L37.5 27.8L37.0 28.0L36.5 27.8L36.0 28.0L35.5 28.0L35.0 28.0L34.5 28.0L34.0 28.0L33.5 27.9L33.0 27.9L32.5 28.0L32.0 27.8L31.5 27.9L31.0 28.0L30.5 27.8L30.0 28.0L29.5 28.0L29.0 27.8L28.5 27.8L28.0 27.9L27.5 27.9L27.0 28.0L26.5 28.3L26.0 28.7L25.5 29.0L25.0 30.0L24.5 28.5L24.0 27.8L23.5 27.8L23.0 27.9L22.5 27.7L22.0 27.9L21.5 28.0L21.0 28.0L20.5 27.9L20.0 28.0L19.5 27.8L19.0 28.0L18.5 27.8L18.0 28.0L17.5 27.9L17.0 28.0L16.5 27.8L16.0 27.9L15.5 27.9L15.0 28.0L14.5 28.0L14.0 27.7L13.5 27.8L13.0 28.0L12.5 28.0L12.0 27.9L11.5 27.8L11.0 27.8L10.5 27.9L10.0 27.9L9.5 28.1L9.0 28.4L8.5 28.4L8.0 28.5L7.5 28.8L7.0 29.6L6.5 29.1L6.0 30.2L5.5 29.9L5.0 30.6L4.5 31.6L4.0 31.2L3.5 32.7L3.0 30.5L2.5 29.4L2.0 29.8L1.5 31.0L1.0 30.8L0.5 29.1L0.0 27.9ZM41.0 27.0L41.6 13.0L42.5 13.0L44.4 27.0L42.5 47.5L41.6 47.5ZM121.0 27.0L121.7 0.4L122.5 0.4L124.4 27.0L122.5 52.9L121.7 52.9ZM222.0 27.0L222.7 13.0L223.4 13.0L225.4 27.0L223.4 47.5L222.7 47.5ZM281.0 27.0L281.6 0.4L282.4 0.4L284.4 27.0L282.4 52.9L281.6 52.9ZM362.0 27.0L362.6 16.0L363.4 16.0L365.4 27.0L363.4 38.0L362.6 38.0ZM442.0 27.0L442.6 0.4L443.4 0.4L445.4 27.0L443.4 52.9L442.6 52.9Z" fill="#5122a8"/></svg>
<div style="left:7.3px;top:482.4px;width:121.7px;height:1px;background:#3a3a3a;"></div>
<div style="left:7.3px;top:484px;width:88px;height:10.4px;background:#8c2de0;"></div>
<div class="t" style="left:17.6px;top:485.7px;font-size:7.2px;color:#fff;letter-spacing:-.15px;text-shadow:0 0 .6px #fff;">OH L</div>
<svg style="left:0px;top:484px;" width="100" height="11" viewBox="0 0 100 11"><path d="M10.2 6c.8-2 1.8-2 2.5-.6s1.700 1.400 2.500-.600" stroke="#fff" stroke-width="1" fill="none"/><path d="M62.8 1.5l5.8 3.7-5.8 3.7z" fill="#22e022" stroke="#0c9a0c" stroke-width=".8"/><circle cx="75.8" cy="5.2" r="3.1" fill="#4a0808"/><path d="M83 2.7h6.4M83 5.2h6.4M83 7.7h6.4" stroke="#3a3a3a" stroke-width="1.1"/></svg>
<div style="left:19px;top:496.2px;width:57.6px;height:10.2px;background:#2a2a2a;"></div>
<div class="t" style="left:20.4px;top:497.8px;font-size:7.2px;color:#e6e6e6;">Soundbites</div>
<svg style="left:68.4px;top:500.4px;" width="4.6" height="2.4" viewBox="0 0 4.6 2.4"><path d="M0 0h4.6l-2.3 2.4z" fill="#555"/></svg>
<div style="left:19px;top:508.4px;width:57.6px;height:10.2px;background:#2a2a2a;"></div>
<div class="t" style="left:22.6px;top:509.9px;font-size:7.6px;color:#eee;font-weight:bold;">I</div>
<div class="t" style="left:27.4px;top:509.9px;font-size:7.4px;color:#e6e6e6;font-style:italic;letter-spacing:-.35px;">Built-i...put 1</div>
<svg style="left:68.4px;top:512.6px;" width="4.6" height="2.4" viewBox="0 0 4.6 2.4"><path d="M0 0h4.6l-2.3 2.4z" fill="#555"/></svg>
<div style="left:19px;top:520.8px;width:57.6px;height:10.2px;background:#2a2a2a;"></div>
<div class="t" style="left:20.6px;top:522.3px;font-size:7.6px;color:#eee;font-weight:bold;">O</div>
<div class="t" style="left:27.4px;top:522.3px;font-size:7.4px;color:#e6e6e6;letter-spacing:-.35px;">Built-i...ut 1-2</div>
<svg style="left:68.4px;top:525px;" width="4.6" height="2.4" viewBox="0 0 4.6 2.4"><path d="M0 0h4.6l-2.3 2.4z" fill="#555"/></svg>
<svg style="left:10.4px;top:532px;" width="4" height="5" viewBox="0 0 4 5"><path d="M.4 .4l2.6 2-2.6 2z" fill="#1c1c1c"/></svg>
<div style="left:95.6px;top:484px;width:5.2px;height:54.6px;background:#0b2f42;"></div>
<div style="left:95.4px;top:485.6px;width:5.4px;height:0.8px;background:#6a6a50;"></div>
<svg style="left:104.8px;top:485.4px;" width="8" height="8" viewBox="0 0 8 8"><circle cx="3" cy="3" r="2.1" fill="none" stroke="#626262" stroke-width="1"/><path d="M4.6 4.6l2.2 2.2" stroke="#626262" stroke-width="1.2"/></svg>
<div style="left:108.9px;top:495px;width:2.6px;height:40px;background:#414141;border-radius:1.3px;"></div>
<div style="left:108.9px;top:511px;width:2.6px;height:8px;background:#5c5c5c;border-radius:1.3px;"></div>
<svg style="left:129px;top:481.2px;" width="499.5" height="4" viewBox="0 0 499.5 4"><rect y=".3" width="499.5" height="1.700" fill="#161616"/><rect y="2" width="499.5" height="1.200" fill="#909090"/></svg>
<div style="left:129px;top:485.2px;width:499.5px;height:53.2px;background:#b07ff4;"></div>
<svg style="left:129px;top:485.2px;" width="499.5" height="53.2" viewBox="0 0 499.5 53.2"><path d="M0.0 26.1L0.5 25.8L1.0 26.1L1.5 26.1L2.0 25.9L2.5 25.9L3.0 26.1L3.5 26.1L4.0 26.0L4.5 25.9L5.0 25.8L5.5 26.2L6.0 26.0L6.5 26.1L7.0 25.9L7.5 26.0L8.0 26.1L8.5 26.0L9.0 25.9L9.5 26.0L10.0 26.2L10.5 25.9L11.0 25.9L11.5 26.2L12.0 26.1L12.5 25.7L13.0 25.7L13.5 25.6L14.0 25.6L14.5 25.6L15.0 25.5L15.5 25.5L16.0 25.2L16.5 25.6L17.0 25.6L17.5 25.7L18.0 25.7L18.5 25.3L19.0 25.4L19.5 25.6L20.0 25.7L20.5 25.8L21.0 25.3L21.5 25.6L22.0 25.7L22.5 25.7L23.0 26.1L23.5 25.8L24.0 26.1L24.5 26.0L25.0 26.2L25.5 26.3L26.0 26.3L26.5 26.3L27.0 26.3L27.5 26.1L28.0 26.2L28.5 26.1L29.0 26.1L29.5 26.2L30.0 26.3L30.5 26.1L31.0 26.3L31.5 26.0L32.0 26.1L32.5 26.2L33.0 26.3L33.5 26.3L34.0 26.3L34.5 26.3L35.0 26.3L35.5 26.1L36.0 26.0L36.5 26.2L37.0 26.3L37.5 26.0L38.0 26.0L38.5 26.2L39.0 26.2L39.5 26.1L40.0 26.1L40.5 26.1L41.0 26.3L41.5 26.3L42.0 26.1L42.5 26.3L43.0 26.3L43.5 26.0L44.0 26.3L44.5 26.1L45.0 26.2L45.5 26.1L46.0 26.1L46.5 26.3L47.0 26.0L47.5 26.3L48.0 26.3L48.5 26.0L49.0 26.3L49.5 26.1L50.0 26.0L50.5 26.2L51.0 26.1L51.5 26.0L52.0 26.3L52.5 26.2L53.0 26.3L53.5 26.1L54.0 26.2L54.5 26.1L55.0 26.0L55.5 26.3L56.0 26.3L56.5 26.2L57.0 26.3L57.5 26.1L58.0 26.0L58.5 26.3L59.0 26.2L59.5 26.2L60.0 26.1L60.5 26.1L61.0 26.3L61.5 26.0L62.0 26.3L62.5 26.2L63.0 26.1L63.5 26.2L64.0 26.0L64.5 26.2L65.0 26.1L65.5 26.1L66.0 26.1L66.5 26.1L67.0 26.1L67.5 26.1L68.0 26.1L68.5 26.1L69.0 26.2L69.5 26.1L70.0 26.1L70.5 26.2L71.0 26.0L71.5 26.3L72.0 26.3L72.5 26.2L73.0 26.1L73.5 26.3L74.0 26.3L74.5 26.1L75.0 25.7L75.5 25.7L76.0 25.5L76.5 25.4L77.0 24.8L77.5 24.9L78.0 24.6L78.5 24.9L79.0 24.7L79.5 25.3L80.0 25.1L80.5 24.6L81.0 24.7L81.5 25.3L82.0 25.3L82.5 24.8L83.0 25.3L83.5 25.2L84.0 24.8L84.5 25.0L85.0 25.1L85.5 25.3L86.0 25.3L86.5 25.4L87.0 25.2L87.5 24.9L88.0 25.1L88.5 25.0L89.0 25.1L89.5 25.6L90.0 25.3L90.5 25.0L91.0 25.4L91.5 25.5L92.0 25.2L92.5 25.2L93.0 25.1L93.5 25.4L94.0 25.4L94.5 25.3L95.0 25.5L95.5 25.5L96.0 25.6L96.5 25.6L97.0 25.8L97.5 25.4L98.0 25.8L98.5 25.6L99.0 25.5L99.5 26.0L100.0 25.8L100.5 25.6L101.0 25.6L101.5 25.6L102.0 25.8L102.5 25.8L103.0 25.9L103.5 25.7L104.0 25.9L104.5 25.9L105.0 25.9L105.5 26.2L106.0 26.2L106.5 26.0L107.0 25.9L107.5 25.9L108.0 26.2L108.5 26.1L109.0 25.9L109.5 26.2L110.0 26.2L110.5 26.1L111.0 26.1L111.5 26.2L112.0 26.0L112.5 26.3L113.0 26.1L113.5 26.2L114.0 26.0L114.5 26.3L115.0 26.2L115.5 26.2L116.0 26.3L116.5 26.1L117.0 26.2L117.5 26.1L118.0 26.0L118.5 26.2L119.0 26.1L119.5 26.2L120.0 26.1L120.5 26.0L121.0 26.0L121.5 25.9L122.0 25.9L122.5 26.0L123.0 26.1L123.5 26.3L124.0 26.1L124.5 26.3L125.0 26.1L125.5 26.0L126.0 26.0L126.5 26.2L127.0 26.3L127.5 26.0L128.0 26.1L128.5 26.1L129.0 26.1L129.5 26.0L130.0 26.2L130.5 26.2L131.0 26.1L131.5 26.2L132.0 26.0L132.5 26.1L133.0 26.0L133.5 26.0L134.0 26.1L134.5 26.2L135.0 26.0L135.5 26.0L136.0 26.2L136.5 26.0L137.0 26.0L137.5 26.2L138.0 26.1L138.5 26.0L139.0 26.1L139.5 26.0L140.0 26.0L140.5 26.3L141.0 26.2L141.5 26.1L142.0 26.2L142.5 26.2L143.0 26.0L143.5 26.2L144.0 26.0L144.5 26.1L145.0 26.2L145.5 26.2L146.0 26.0L146.5 26.3L147.0 26.0L147.5 26.1L148.0 26.1L148.5 26.0L149.0 26.0L149.5 26.0L150.0 26.1L150.5 26.1L151.0 26.0L151.5 26.1L152.0 26.2L152.5 26.0L153.0 26.1L153.5 26.2L154.0 26.2L154.5 26.0L155.0 26.1L155.5 26.1L156.0 26.1L156.5 26.0L157.0 26.2L157.5 26.1L158.0 26.3L158.5 26.3L159.0 26.2L159.5 26.1L160.0 26.1L160.5 26.1L161.0 26.2L161.5 26.1L162.0 26.1L162.5 26.1L163.0 26.0L163.5 26.1L164.0 26.1L164.5 26.3L165.0 26.2L165.5 26.3L166.0 26.0L166.5 26.0L167.0 26.1L167.5 26.0L168.0 26.3L168.5 26.2L169.0 26.1L169.5 26.3L170.0 26.0L170.5 26.3L171.0 26.3L171.5 26.0L172.0 26.2L172.5 26.1L173.0 26.0L173.5 26.3L174.0 26.1L174.5 26.1L175.0 26.2L175.5 26.1L176.0 26.2L176.5 26.2L177.0 26.1L177.5 26.1L178.0 26.3L178.5 26.2L179.0 26.2L179.5 26.1L180.0 26.0L180.5 26.1L181.0 26.1L181.5 26.1L182.0 26.3L182.5 26.0L183.0 26.1L183.5 26.3L184.0 26.2L184.5 26.1L185.0 26.2L185.5 26.1L186.0 26.1L186.5 26.2L187.0 26.2L187.5 26.2L188.0 26.3L188.5 26.0L189.0 26.2L189.5 26.0L190.0 26.0L190.5 26.1L191.0 26.0L191.5 26.3L192.0 26.3L192.5 26.3L193.0 26.1L193.5 26.1L194.0 26.2L194.5 26.2L195.0 26.3L195.5 26.1L196.0 26.2L196.5 26.1L197.0 26.3L197.5 26.2L198.0 26.3L198.5 26.1L199.0 26.1L199.5 26.1L200.0 26.1L200.5 26.3L201.0 26.2L201.5 26.0L202.0 26.0L202.5 26.0L203.0 25.9L203.5 25.4L204.0 25.5L204.5 25.1L205.0 24.9L205.5 25.2L206.0 24.7L206.5 25.1L207.0 25.0L207.5 24.6L208.0 25.2L208.5 25.1L209.0 24.8L209.5 25.0L210.0 25.3L210.5 25.2L211.0 24.9L211.5 24.9L212.0 24.9L212.5 25.6L213.0 25.5L213.5 25.3L214.0 25.7L214.5 25.1L215.0 25.3L215.5 25.4L216.0 25.8L216.5 25.6L217.0 25.6L217.5 25.5L218.0 25.6L218.5 25.9L219.0 25.6L219.5 25.9L220.0 25.9L220.5 25.8L221.0 26.0L221.5 26.1L222.0 26.0L222.5 26.0L223.0 26.0L223.5 26.1L224.0 26.1L224.5 26.1L225.0 26.1L225.5 26.2L226.0 25.8L226.5 26.0L227.0 25.9L227.5 25.8L228.0 25.9L228.5 26.1L229.0 26.2L229.5 25.9L230.0 26.2L230.5 25.9L231.0 26.0L231.5 25.8L232.0 26.1L232.5 25.9L233.0 25.9L233.5 26.2L234.0 25.8L234.5 25.8L235.0 26.2L235.5 26.2L236.0 25.8L236.5 26.2L237.0 26.2L237.5 26.0L238.0 26.1L238.5 26.2L239.0 26.1L239.5 25.8L240.0 26.1L240.5 26.1L241.0 26.2L241.5 25.9L242.0 25.9L242.5 26.0L243.0 25.9L243.5 25.9L244.0 26.2L244.5 26.0L245.0 25.9L245.5 25.8L246.0 26.2L246.5 26.1L247.0 26.0L247.5 25.9L248.0 25.9L248.5 26.2L249.0 26.0L249.5 25.9L250.0 26.0L250.5 26.2L251.0 26.1L251.5 26.1L252.0 26.2L252.5 26.1L253.0 26.2L253.5 26.2L254.0 26.2L254.5 26.1L255.0 26.0L255.5 26.0L256.0 26.0L256.5 26.1L257.0 26.1L257.5 26.0L258.0 26.2L258.5 26.3L259.0 26.0L259.5 25.9L260.0 25.9L260.5 26.1L261.0 25.9L261.5 26.1L262.0 26.1L262.5 26.0L263.0 25.9L263.5 26.1L264.0 26.0L264.5 26.2L265.0 26.1L265.5 26.0L266.0 25.6L266.5 25.7L267.0 25.3L267.5 25.0L268.0 24.8L268.5 24.7L269.0 24.9L269.5 25.0L270.0 24.8L270.5 25.2L271.0 24.7L271.5 25.4L272.0 25.4L272.5 25.1L273.0 25.1L273.5 24.9L274.0 25.4L274.5 25.1L275.0 25.6L275.5 25.6L276.0 25.6L276.5 25.3L277.0 25.7L277.5 25.6L278.0 25.2L278.5 25.6L279.0 25.6L279.5 25.8L280.0 25.7L280.5 25.8L281.0 25.8L281.5 25.6L282.0 26.0L282.5 26.1L283.0 26.1L283.5 26.2L284.0 26.2L284.5 25.9L285.0 26.0L285.5 26.1L286.0 26.0L286.5 26.0L287.0 26.1L287.5 26.0L288.0 25.9L288.5 26.2L289.0 25.9L289.5 26.0L290.0 26.2L290.5 26.0L291.0 26.0L291.5 26.3L292.0 25.9L292.5 26.2L293.0 26.0L293.5 25.9L294.0 25.9L294.5 26.0L295.0 26.0L295.5 26.3L296.0 26.2L296.5 25.9L297.0 25.9L297.5 26.0L298.0 26.1L298.5 26.0L299.0 26.1L299.5 26.1L300.0 26.2L300.5 26.2L301.0 26.0L301.5 26.2L302.0 26.0L302.5 26.0L303.0 26.0L303.5 26.2L304.0 25.9L304.5 25.9L305.0 25.9L305.5 26.1L306.0 26.0L306.5 26.2L307.0 25.9L307.5 26.1L308.0 26.0L308.5 25.9L309.0 26.2L309.5 26.1L310.0 26.1L310.5 26.1L311.0 25.9L311.5 26.0L312.0 26.1L312.5 26.1L313.0 26.2L313.5 26.0L314.0 25.9L314.5 26.2L315.0 25.9L315.5 25.7L316.0 26.0L316.5 25.7L317.0 25.8L317.5 25.7L318.0 25.2L318.5 25.6L319.0 25.4L319.5 25.5L320.0 25.5L320.5 25.7L321.0 25.3L321.5 25.8L322.0 25.7L322.5 25.3L323.0 25.3L323.5 25.5L324.0 25.4L324.5 25.5L325.0 25.7L325.5 25.7L326.0 25.5L326.5 25.7L327.0 25.5L327.5 25.9L328.0 25.5L328.5 25.8L329.0 26.0L329.5 25.6L330.0 25.8L330.5 26.1L331.0 25.9L331.5 25.8L332.0 26.2L332.5 26.2L333.0 25.9L333.5 26.2L334.0 25.9L334.5 25.9L335.0 26.2L335.5 26.2L336.0 25.9L336.5 25.9L337.0 26.3L337.5 25.9L338.0 26.2L338.5 25.9L339.0 25.9L339.5 26.2L340.0 26.0L340.5 26.1L341.0 26.0L341.5 25.9L342.0 26.3L342.5 26.1L343.0 26.1L343.5 26.0L344.0 26.2L344.5 26.2L345.0 26.2L345.5 25.9L346.0 26.0L346.5 26.1L347.0 26.3L347.5 25.9L348.0 26.2L348.5 26.2L349.0 25.9L349.5 26.0L350.0 26.2L350.5 26.2L351.0 26.0L351.5 26.1L352.0 25.9L352.5 26.1L353.0 26.1L353.5 26.2L354.0 26.0L354.5 26.1L355.0 26.2L355.5 25.9L356.0 26.0L356.5 25.9L357.0 26.1L357.5 26.1L358.0 26.0L358.5 26.0L359.0 25.9L359.5 25.9L360.0 25.9L360.5 26.0L361.0 25.9L361.5 26.2L362.0 26.0L362.5 26.0L363.0 26.2L363.5 26.1L364.0 26.0L364.5 26.0L365.0 26.0L365.5 26.1L366.0 26.2L366.5 25.9L367.0 25.9L367.5 26.0L368.0 26.2L368.5 26.0L369.0 26.0L369.5 26.0L370.0 26.0L370.5 26.0L371.0 26.2L371.5 26.1L372.0 26.1L372.5 26.1L373.0 25.9L373.5 25.9L374.0 25.9L374.5 26.0L375.0 26.0L375.5 26.2L376.0 26.1L376.5 25.9L377.0 26.2L377.5 26.1L378.0 26.1L378.5 26.0L379.0 26.1L379.5 25.9L380.0 26.0L380.5 26.0L381.0 26.1L381.5 26.0L382.0 25.9L382.5 25.9L383.0 26.2L383.5 25.9L384.0 26.1L384.5 26.0L385.0 26.0L385.5 26.1L386.0 26.0L386.5 25.9L387.0 26.1L387.5 26.1L388.0 26.0L388.5 26.1L389.0 26.2L389.5 26.0L390.0 26.2L390.5 25.9L391.0 26.2L391.5 26.2L392.0 26.0L392.5 26.2L393.0 26.1L393.5 26.3L394.0 25.9L394.5 26.2L395.0 26.1L395.5 25.8L396.0 25.5L396.5 25.6L397.0 25.4L397.5 25.4L398.0 25.4L398.5 24.8L399.0 24.9L399.5 24.6L400.0 24.8L400.5 25.3L401.0 24.8L401.5 25.4L402.0 24.8L402.5 25.4L403.0 24.9L403.5 25.5L404.0 25.1L404.5 24.8L405.0 25.2L405.5 25.2L406.0 25.1L406.5 25.0L407.0 25.0L407.5 25.1L408.0 25.3L408.5 25.3L409.0 25.4L409.5 25.2L410.0 25.3L410.5 25.6L411.0 25.6L411.5 25.5L412.0 25.4L412.5 25.6L413.0 25.6L413.5 25.7L414.0 25.8L414.5 25.8L415.0 25.7L415.5 25.8L416.0 25.7L416.5 26.1L417.0 26.0L417.5 25.8L418.0 25.9L418.5 25.8L419.0 26.1L419.5 26.1L420.0 25.9L420.5 25.9L421.0 25.8L421.5 26.0L422.0 26.1L422.5 26.2L423.0 26.2L423.5 25.9L424.0 26.0L424.5 25.8L425.0 25.8L425.5 26.0L426.0 25.9L426.5 26.0L427.0 26.2L427.5 26.1L428.0 25.9L428.5 26.1L429.0 25.8L429.5 25.8L430.0 26.2L430.5 25.9L431.0 25.9L431.5 26.1L432.0 26.0L432.5 26.1L433.0 26.0L433.5 25.8L434.0 26.2L434.5 26.0L435.0 25.8L435.5 25.8L436.0 25.9L436.5 25.8L437.0 26.2L437.5 26.1L438.0 26.0L438.5 26.0L439.0 25.8L439.5 25.8L440.0 25.8L440.5 26.1L441.0 26.0L441.5 26.2L442.0 25.9L442.5 25.9L443.0 26.0L443.5 26.1L444.0 26.1L444.5 26.0L445.0 25.8L445.5 26.0L446.0 26.0L446.5 25.9L447.0 25.9L447.5 25.9L448.0 25.9L448.5 26.1L449.0 26.1L449.5 25.8L450.0 25.9L450.5 26.0L451.0 25.9L451.5 26.1L452.0 25.8L452.5 26.0L453.0 25.9L453.5 26.0L454.0 25.9L454.5 26.1L455.0 26.1L455.5 25.8L456.0 25.5L456.5 25.6L457.0 25.5L457.5 25.4L458.0 25.3L458.5 24.8L459.0 24.5L459.5 24.6L460.0 24.5L460.5 24.8L461.0 24.4L461.5 24.1L462.0 24.7L462.5 25.0L463.0 24.5L463.5 24.3L464.0 24.4L464.5 24.0L465.0 24.7L465.5 24.0L466.0 24.8L466.5 24.0L467.0 24.5L467.5 24.7L468.0 24.0L468.5 23.9L469.0 23.8L469.5 24.7L470.0 24.8L470.5 24.8L471.0 24.7L471.5 24.7L472.0 24.0L472.5 24.6L473.0 24.4L473.5 25.0L474.0 24.0L474.5 24.4L475.0 24.0L475.5 24.7L476.0 24.1L476.5 24.1L477.0 24.4L477.5 24.3L478.0 24.9L478.5 24.3L479.0 24.5L479.5 24.5L480.0 24.8L480.5 24.1L481.0 25.1L481.5 24.4L482.0 24.6L482.5 24.4L483.0 24.8L483.5 24.8L484.0 25.1L484.5 24.3L485.0 24.4L485.5 24.2L486.0 24.5L486.5 25.1L487.0 24.4L487.5 24.5L488.0 24.7L488.5 24.9L489.0 24.8L489.5 24.7L490.0 24.7L490.5 25.1L491.0 25.0L491.5 24.6L492.0 25.1L492.5 24.9L493.0 24.6L493.5 24.7L494.0 25.0L494.5 24.7L495.0 25.1L495.5 25.0L496.0 24.5L496.5 25.0L497.0 24.8L497.5 24.9L498.0 25.0L498.5 24.7L499.0 24.7L499.5 24.4L499.5 28.7L499.0 29.5L498.5 28.8L498.0 29.5L497.5 29.2L497.0 29.6L496.5 29.1L496.0 29.0L495.5 29.2L495.0 29.1L494.5 28.8L494.0 29.3L493.5 29.2L493.0 29.3L492.5 29.7L492.0 29.5L491.5 29.0L491.0 29.7L490.5 29.0L490.0 29.6L489.5 28.9L489.0 29.1L488.5 29.0L488.0 29.3L487.5 28.9L487.0 29.1L486.5 28.9L486.0 29.1L485.5 29.2L485.0 29.6L484.5 29.3L484.0 29.5L483.5 29.1L483.0 29.1L482.5 29.3L482.0 29.5L481.5 29.0L481.0 29.0L480.5 29.0L480.0 29.3L479.5 29.7L479.0 29.3L478.5 29.9L478.0 29.4L477.5 29.9L477.0 29.1L476.5 29.6L476.0 29.4L475.5 29.7L475.0 29.4L474.5 29.7L474.0 29.3L473.5 29.3L473.0 29.9L472.5 29.8L472.0 29.6L471.5 29.9L471.0 29.6L470.5 30.1L470.0 29.5L469.5 29.6L469.0 29.1L468.5 29.3L468.0 29.9L467.5 29.4L467.0 29.9L466.5 30.2L466.0 29.4L465.5 29.6L465.0 29.8L464.5 29.1L464.0 29.1L463.5 29.0L463.0 29.4L462.5 29.5L462.0 29.4L461.5 29.9L461.0 29.5L460.5 29.5L460.0 29.3L459.5 29.5L459.0 29.4L458.5 29.0L458.0 28.9L457.5 29.1L457.0 29.0L456.5 28.4L456.0 28.1L455.5 27.9L455.0 27.9L454.5 27.9L454.0 28.1L453.5 28.1L453.0 27.9L452.5 27.9L452.0 27.9L451.5 28.1L451.0 27.9L450.5 28.1L450.0 28.0L449.5 28.0L449.0 27.9L448.5 28.0L448.0 28.1L447.5 27.9L447.0 28.1L446.5 27.9L446.0 28.1L445.5 28.2L445.0 27.9L444.5 28.2L444.0 27.9L443.5 28.2L443.0 28.1L442.5 27.9L442.0 28.1L441.5 28.2L441.0 27.9L440.5 28.0L440.0 28.0L439.5 27.9L439.0 28.1L438.5 27.8L438.0 28.2L437.5 28.2L437.0 27.9L436.5 28.0L436.0 28.2L435.5 28.0L435.0 27.8L434.5 28.1L434.0 28.0L433.5 28.1L433.0 28.2L432.5 28.1L432.0 28.2L431.5 28.2L431.0 28.0L430.5 28.1L430.0 28.0L429.5 27.9L429.0 28.2L428.5 28.0L428.0 28.1L427.5 27.8L427.0 27.9L426.5 27.9L426.0 27.9L425.5 27.8L425.0 27.9L424.5 27.8L424.0 28.0L423.5 28.0L423.0 28.1L422.5 27.9L422.0 27.9L421.5 28.0L421.0 27.9L420.5 28.1L420.0 27.9L419.5 28.0L419.0 27.8L418.5 28.0L418.0 28.1L417.5 28.2L417.0 28.1L416.5 28.1L416.0 28.1L415.5 28.1L415.0 28.2L414.5 28.0L414.0 28.2L413.5 28.2L413.0 28.2L412.5 28.5L412.0 28.6L411.5 28.5L411.0 28.4L410.5 28.3L410.0 28.5L409.5 28.5L409.0 28.9L408.5 28.8L408.0 28.6L407.5 28.9L407.0 28.4L406.5 28.7L406.0 28.9L405.5 29.0L405.0 28.9L404.5 28.5L404.0 28.5L403.5 28.9L403.0 28.8L402.5 28.8L402.0 29.3L401.5 29.3L401.0 29.4L400.5 29.0L400.0 28.8L399.5 29.2L399.0 28.8L398.5 28.8L398.0 28.8L397.5 29.1L397.0 28.7L396.5 28.5L396.0 28.1L395.5 28.1L395.0 27.8L394.5 27.8L394.0 28.0L393.5 28.1L393.0 27.9L392.5 28.1L392.0 27.8L391.5 28.0L391.0 28.1L390.5 27.9L390.0 27.7L389.5 27.9L389.0 28.0L388.5 28.0L388.0 27.7L387.5 28.0L387.0 27.9L386.5 27.7L386.0 28.1L385.5 27.9L385.0 27.8L384.5 28.1L384.0 28.1L383.5 27.8L383.0 28.1L382.5 28.1L382.0 27.8L381.5 27.8L381.0 28.1L380.5 27.7L380.0 28.0L379.5 28.0L379.0 27.9L378.5 28.1L378.0 28.1L377.5 27.9L377.0 28.0L376.5 27.7L376.0 27.8L375.5 27.8L375.0 28.0L374.5 27.8L374.0 27.8L373.5 28.0L373.0 28.0L372.5 27.9L372.0 28.0L371.5 27.9L371.0 27.9L370.5 27.9L370.0 28.0L369.5 27.9L369.0 27.8L368.5 28.1L368.0 28.1L367.5 27.9L367.0 27.8L366.5 27.9L366.0 27.9L365.5 28.0L365.0 27.8L364.5 28.1L364.0 28.0L363.5 27.9L363.0 28.1L362.5 28.1L362.0 28.0L361.5 28.1L361.0 28.0L360.5 27.7L360.0 27.8L359.5 27.8L359.0 27.8L358.5 28.0L358.0 27.9L357.5 27.9L357.0 28.0L356.5 28.0L356.0 28.1L355.5 28.1L355.0 27.9L354.5 27.9L354.0 28.0L353.5 27.9L353.0 28.1L352.5 27.9L352.0 28.1L351.5 27.9L351.0 28.1L350.5 27.9L350.0 27.9L349.5 28.0L349.0 28.0L348.5 28.0L348.0 28.1L347.5 27.9L347.0 28.1L346.5 28.0L346.0 27.8L345.5 27.8L345.0 27.9L344.5 28.1L344.0 27.8L343.5 27.8L343.0 27.8L342.5 27.8L342.0 27.8L341.5 28.0L341.0 28.0L340.5 27.8L340.0 28.0L339.5 27.7L339.0 28.0L338.5 27.8L338.0 27.8L337.5 27.9L337.0 27.8L336.5 28.0L336.0 28.0L335.5 27.7L335.0 27.9L334.5 27.8L334.0 27.9L333.5 27.9L333.0 27.8L332.5 28.0L332.0 27.8L331.5 28.0L331.0 28.2L330.5 28.2L330.0 28.3L329.5 28.0L329.0 28.2L328.5 28.5L328.0 28.3L327.5 28.0L327.0 28.4L326.5 28.6L326.0 28.5L325.5 28.6L325.0 28.5L324.5 28.5L324.0 28.5L323.5 28.2L323.0 28.5L322.5 28.4L322.0 28.6L321.5 28.3L321.0 28.7L320.5 28.8L320.0 28.8L319.5 28.6L319.0 28.7L318.5 28.5L318.0 28.2L317.5 28.3L317.0 28.7L316.5 28.5L316.0 28.3L315.5 28.2L315.0 28.0L314.5 27.9L314.0 27.8L313.5 27.8L313.0 28.0L312.5 28.0L312.0 27.9L311.5 27.9L311.0 28.1L310.5 27.8L310.0 28.1L309.5 27.8L309.0 27.7L308.5 27.9L308.0 27.8L307.5 28.0L307.0 27.9L306.5 27.9L306.0 27.9L305.5 28.0L305.0 27.7L304.5 27.9L304.0 28.1L303.5 27.7L303.0 27.9L302.5 27.8L302.0 27.8L301.5 27.9L301.0 28.0L300.5 27.8L300.0 27.8L299.5 27.7L299.0 27.8L298.5 27.8L298.0 27.8L297.5 28.0L297.0 28.0L296.5 27.9L296.0 27.7L295.5 28.1L295.0 27.8L294.5 27.8L294.0 28.0L293.5 28.0L293.0 28.0L292.5 27.9L292.0 28.1L291.5 27.8L291.0 27.8L290.5 28.1L290.0 28.1L289.5 27.9L289.0 27.7L288.5 27.8L288.0 28.1L287.5 27.8L287.0 28.0L286.5 28.1L286.0 28.1L285.5 28.1L285.0 27.7L284.5 27.9L284.0 27.8L283.5 28.1L283.0 27.8L282.5 28.1L282.0 28.3L281.5 28.2L281.0 28.2L280.5 28.3L280.0 28.6L279.5 28.5L279.0 28.7L278.5 28.6L278.0 28.5L277.5 28.6L277.0 29.0L276.5 29.0L276.0 28.7L275.5 28.8L275.0 28.7L274.5 28.5L274.0 28.4L273.5 28.5L273.0 28.9L272.5 29.1L272.0 28.7L271.5 29.0L271.0 28.6L270.5 28.8L270.0 28.9L269.5 29.2L269.0 29.3L268.5 29.3L268.0 28.9L267.5 28.9L267.0 28.9L266.5 28.3L266.0 28.4L265.5 28.0L265.0 27.9L264.5 28.0L264.0 27.8L263.5 27.9L263.0 27.8L262.5 28.0L262.0 28.0L261.5 27.9L261.0 27.9L260.5 28.0L260.0 27.9L259.5 27.9L259.0 28.0L258.5 27.9L258.0 28.1L257.5 27.8L257.0 27.8L256.5 28.0L256.0 27.9L255.5 28.1L255.0 27.9L254.5 27.9L254.0 27.8L253.5 28.2L253.0 27.8L252.5 28.0L252.0 27.9L251.5 28.1L251.0 28.0L250.5 27.8L250.0 27.8L249.5 28.1L249.0 28.2L248.5 27.8L248.0 28.1L247.5 28.1L247.0 28.1L246.5 28.2L246.0 28.0L245.5 28.1L245.0 27.8L244.5 27.9L244.0 27.8L243.5 27.9L243.0 27.9L242.5 27.9L242.0 27.9L241.5 27.9L241.0 28.1L240.5 28.1L240.0 28.0L239.5 27.8L239.0 28.2L238.5 27.8L238.0 27.9L237.5 27.9L237.0 28.1L236.5 28.1L236.0 28.2L235.5 28.0L235.0 27.8L234.5 28.0L234.0 28.1L233.5 28.1L233.0 28.0L232.5 27.9L232.0 28.0L231.5 28.0L231.0 28.0L230.5 27.8L230.0 28.0L229.5 28.1L229.0 28.1L228.5 27.8L228.0 27.8L227.5 28.1L227.0 27.9L226.5 28.1L226.0 28.0L225.5 28.0L225.0 27.9L224.5 27.9L224.0 28.0L223.5 27.9L223.0 27.8L222.5 28.2L222.0 27.9L221.5 28.2L221.0 27.9L220.5 27.9L220.0 28.3L219.5 28.4L219.0 28.2L218.5 28.0L218.0 28.1L217.5 28.1L217.0 28.1L216.5 28.3L216.0 28.6L215.5 28.2L215.0 28.8L214.5 28.3L214.0 28.9L213.5 28.9L213.0 28.6L212.5 29.1L212.0 28.7L211.5 28.5L211.0 28.6L210.5 28.9L210.0 28.6L209.5 28.8L209.0 28.6L208.5 28.7L208.0 29.3L207.5 28.6L207.0 29.0L206.5 29.2L206.0 29.2L205.5 29.4L205.0 29.5L204.5 29.2L204.0 28.5L203.5 28.5L203.0 28.5L202.5 28.1L202.0 28.0L201.5 27.9L201.0 27.8L200.5 27.9L200.0 28.0L199.5 28.0L199.0 27.8L198.5 27.9L198.0 27.8L197.5 27.7L197.0 27.8L196.5 27.9L196.0 27.9L195.5 27.7L195.0 27.7L194.5 27.9L194.0 27.8L193.5 27.8L193.0 27.8L192.5 27.9L192.0 28.0L191.5 27.9L191.0 27.8L190.5 27.9L190.0 27.8L189.5 28.0L189.0 27.7L188.5 28.0L188.0 27.7L187.5 27.9L187.0 27.9L186.5 28.0L186.0 27.8L185.5 27.8L185.0 27.9L184.5 28.0L184.0 27.7L183.5 27.8L183.0 27.8L182.5 27.7L182.0 27.8L181.5 27.9L181.0 27.9L180.5 27.9L180.0 27.8L179.5 27.7L179.0 27.7L178.5 27.7L178.0 28.0L177.5 27.7L177.0 27.7L176.5 27.9L176.0 27.9L175.5 28.0L175.0 28.0L174.5 27.9L174.0 28.0L173.5 27.7L173.0 28.0L172.5 27.7L172.0 28.0L171.5 27.9L171.0 27.8L170.5 27.9L170.0 27.8L169.5 27.9L169.0 27.8L168.5 27.9L168.0 27.9L167.5 27.8L167.0 28.0L166.5 28.0L166.0 27.8L165.5 27.7L165.0 27.8L164.5 27.9L164.0 27.8L163.5 27.9L163.0 27.8L162.5 27.9L162.0 28.0L161.5 27.9L161.0 27.8L160.5 27.8L160.0 27.9L159.5 27.9L159.0 28.0L158.5 27.7L158.0 28.0L157.5 27.9L157.0 28.0L156.5 28.0L156.0 27.9L155.5 27.7L155.0 27.9L154.5 27.7L154.0 28.0L153.5 28.0L153.0 27.7L152.5 28.0L152.0 27.8L151.5 27.7L151.0 28.0L150.5 27.8L150.0 27.8L149.5 27.8L149.0 27.8L148.5 28.0L148.0 27.8L147.5 27.7L147.0 27.8L146.5 28.0L146.0 27.7L145.5 27.9L145.0 27.8L144.5 27.7L144.0 27.9L143.5 28.0L143.0 28.0L142.5 28.0L142.0 27.9L141.5 28.0L141.0 27.9L140.5 27.8L140.0 28.1L139.5 28.0L139.0 27.9L138.5 27.8L138.0 27.7L137.5 27.8L137.0 27.9L136.5 27.8L136.0 27.9L135.5 27.8L135.0 27.7L134.5 27.8L134.0 27.8L133.5 27.7L133.0 27.7L132.5 28.0L132.0 27.8L131.5 27.9L131.0 28.1L130.5 28.0L130.0 28.0L129.5 28.1L129.0 28.1L128.5 27.9L128.0 27.9L127.5 27.9L127.0 27.8L126.5 27.7L126.0 27.8L125.5 28.1L125.0 27.9L124.5 27.9L124.0 27.8L123.5 27.9L123.0 28.1L122.5 27.8L122.0 27.8L121.5 27.9L121.0 28.0L120.5 27.8L120.0 27.9L119.5 27.8L119.0 27.9L118.5 27.7L118.0 27.9L117.5 28.1L117.0 27.7L116.5 28.0L116.0 27.8L115.5 27.9L115.0 27.9L114.5 28.0L114.0 28.0L113.5 27.7L113.0 28.0L112.5 27.9L112.0 27.7L111.5 28.0L111.0 27.9L110.5 28.1L110.0 27.9L109.5 28.1L109.0 27.9L108.5 27.9L108.0 27.9L107.5 27.9L107.0 28.1L106.5 27.9L106.0 27.9L105.5 27.9L105.0 27.9L104.5 28.2L104.0 28.0L103.5 27.9L103.0 28.0L102.5 27.9L102.0 28.3L101.5 28.1L101.0 28.1L100.5 28.0L100.0 28.5L99.5 28.3L99.0 28.4L98.5 28.3L98.0 28.4L97.5 28.5L97.0 28.5L96.5 28.4L96.0 28.6L95.5 28.4L95.0 28.5L94.5 28.7L94.0 28.3L93.5 28.7L93.0 28.6L92.5 28.4L92.0 28.4L91.5 28.9L91.0 28.9L90.5 29.0L90.0 28.7L89.5 28.4L89.0 28.7L88.5 28.6L88.0 28.8L87.5 29.1L87.0 28.7L86.5 28.8L86.0 28.6L85.5 28.5L85.0 28.6L84.5 28.8L84.0 28.7L83.5 28.6L83.0 29.1L82.5 29.3L82.0 28.7L81.5 28.6L81.0 28.9L80.5 29.4L80.0 28.9L79.5 28.8L79.0 29.0L78.5 29.0L78.0 28.7L77.5 29.3L77.0 29.0L76.5 28.7L76.0 28.5L75.5 28.3L75.0 28.0L74.5 28.0L74.0 27.9L73.5 27.9L73.0 27.7L72.5 27.9L72.0 28.0L71.5 27.8L71.0 27.8L70.5 27.9L70.0 27.7L69.5 27.9L69.0 27.7L68.5 27.7L68.0 27.8L67.5 27.7L67.0 27.7L66.5 27.7L66.0 27.8L65.5 27.9L65.0 28.0L64.5 27.7L64.0 27.8L63.5 27.8L63.0 28.0L62.5 27.7L62.0 27.8L61.5 27.8L61.0 28.0L60.5 27.8L60.0 27.9L59.5 28.0L59.0 27.9L58.5 27.8L58.0 27.7L57.5 27.8L57.0 27.9L56.5 27.9L56.0 27.7L55.5 27.7L55.0 27.8L54.5 27.8L54.0 27.8L53.5 27.8L53.0 27.8L52.5 27.8L52.0 27.8L51.5 28.0L51.0 27.9L50.5 28.0L50.0 28.0L49.5 27.8L49.0 27.9L48.5 28.0L48.0 27.8L47.5 27.8L47.0 27.9L46.5 27.7L46.0 27.7L45.5 27.8L45.0 27.7L44.5 27.8L44.0 27.9L43.5 27.9L43.0 27.7L42.5 28.0L42.0 27.7L41.5 28.0L41.0 27.8L40.5 27.7L40.0 28.0L39.5 27.9L39.0 28.0L38.5 27.8L38.0 27.8L37.5 27.8L37.0 27.8L36.5 27.8L36.0 27.8L35.5 27.9L35.0 27.8L34.5 27.9L34.0 27.7L33.5 27.9L33.0 28.0L32.5 27.9L32.0 27.7L31.5 27.7L31.0 27.9L30.5 27.8L30.0 27.8L29.5 27.9L29.0 27.9L28.5 28.0L28.0 27.8L27.5 27.8L27.0 28.0L26.5 27.8L26.0 27.7L25.5 27.9L25.0 27.8L24.5 27.8L24.0 28.2L23.5 28.2L23.0 28.1L22.5 28.4L22.0 28.5L21.5 28.4L21.0 28.5L20.5 28.6L20.0 28.6L19.5 28.7L19.0 28.3L18.5 28.7L18.0 28.3L17.5 28.7L17.0 28.5L16.5 28.5L16.0 28.5L15.5 28.8L15.0 28.4L14.5 28.8L14.0 28.3L13.5 28.5L13.0 28.5L12.5 28.3L12.0 28.1L11.5 27.9L11.0 27.8L10.5 28.0L10.0 28.1L9.5 28.0L9.0 28.1L8.5 28.1L8.0 28.0L7.5 27.9L7.0 27.9L6.5 28.1L6.0 28.2L5.5 28.1L5.0 28.0L4.5 28.0L4.0 28.1L3.5 28.1L3.0 27.9L2.5 28.0L2.0 27.8L1.5 27.9L1.0 28.2L0.5 27.8L0.0 27.9Z" fill="#5122a8"/></svg>
<div style="left:7.3px;top:539px;width:121.7px;height:1px;background:#3a3a3a;"></div>
<div style="left:7.3px;top:540.6px;width:88px;height:10.4px;background:#8c2de0;"></div>
<div class="t" style="left:17.6px;top:542.3px;font-size:7.2px;color:#fff;letter-spacing:-.15px;text-shadow:0 0 .6px #fff;">OH R</div>
<svg style="left:0px;top:540.6px;" width="100" height="11" viewBox="0 0 100 11"><path d="M10.2 6c.8-2 1.8-2 2.5-.6s1.700 1.400 2.500-.600" stroke="#fff" stroke-width="1" fill="none"/><path d="M62.8 1.5l5.8 3.7-5.8 3.7z" fill="#22e022" stroke="#0c9a0c" stroke-width=".8"/><circle cx="75.8" cy="5.2" r="3.1" fill="#4a0808"/><path d="M83 2.7h6.4M83 5.2h6.4M83 7.7h6.4" stroke="#3a3a3a" stroke-width="1.1"/></svg>
<div style="left:19px;top:552.8px;width:57.6px;height:10.2px;background:#2a2a2a;"></div>
<div class="t" style="left:20.4px;top:554.4px;font-size:7.2px;color:#e6e6e6;">Soundbites</div>
<svg style="left:68.4px;top:557px;" width="4.6" height="2.4" viewBox="0 0 4.6 2.4"><path d="M0 0h4.6l-2.3 2.4z" fill="#555"/></svg>
<div style="left:19px;top:565px;width:57.6px;height:10.2px;background:#2a2a2a;"></div>
<div class="t" style="left:22.6px;top:566.5px;font-size:7.6px;color:#eee;font-weight:bold;">I</div>
<div class="t" style="left:27.4px;top:566.5px;font-size:7.4px;color:#e6e6e6;font-style:italic;letter-spacing:-.35px;">Built-i...put 1</div>
<svg style="left:68.4px;top:569.2px;" width="4.6" height="2.4" viewBox="0 0 4.6 2.4"><path d="M0 0h4.6l-2.3 2.4z" fill="#555"/></svg>
<div style="left:19px;top:577.4px;width:57.6px;height:10.2px;background:#2a2a2a;"></div>
<div class="t" style="left:20.6px;top:578.9px;font-size:7.6px;color:#eee;font-weight:bold;">O</div>
<div class="t" style="left:27.4px;top:578.9px;font-size:7.4px;color:#e6e6e6;letter-spacing:-.35px;">Built-i...ut 1-2</div>
<svg style="left:68.4px;top:581.6px;" width="4.6" height="2.4" viewBox="0 0 4.6 2.4"><path d="M0 0h4.6l-2.3 2.4z" fill="#555"/></svg>
<svg style="left:10.4px;top:588.6px;" width="4" height="5" viewBox="0 0 4 5"><path d="M.4 .4l2.6 2-2.6 2z" fill="#1c1c1c"/></svg>
<div style="left:95.6px;top:540.6px;width:5.2px;height:54.6px;background:#0b2f42;"></div>
<div style="left:95.4px;top:542.2px;width:5.4px;height:0.8px;background:#6a6a50;"></div>
<svg style="left:104.8px;top:542px;" width="8" height="8" viewBox="0 0 8 8"><circle cx="3" cy="3" r="2.1" fill="none" stroke="#626262" stroke-width="1"/><path d="M4.6 4.6l2.2 2.2" stroke="#626262" stroke-width="1.2"/></svg>
<div style="left:108.9px;top:551.6px;width:2.6px;height:40px;background:#414141;border-radius:1.3px;"></div>
<div style="left:108.9px;top:567.6px;width:2.6px;height:8px;background:#5c5c5c;border-radius:1.3px;"></div>
<svg style="left:129px;top:537.8px;" width="499.5" height="4" viewBox="0 0 499.5 4"><rect y=".3" width="499.5" height="1.700" fill="#161616"/><rect y="2" width="499.5" height="1.200" fill="#909090"/></svg>
<div style="left:129px;top:541.8px;width:499.5px;height:53.2px;background:#b07ff4;"></div>
<svg style="left:129px;top:541.8px;" width="499.5" height="53.2" viewBox="0 0 499.5 53.2"><path d="M0.0 26.1L0.5 25.8L1.0 26.1L1.5 26.1L2.0 25.9L2.5 25.9L3.0 26.1L3.5 26.1L4.0 26.0L4.5 25.9L5.0 25.8L5.5 26.2L6.0 26.0L6.5 26.1L7.0 25.9L7.5 26.0L8.0 26.1L8.5 26.0L9.0 25.9L9.5 26.0L10.0 26.2L10.5 25.9L11.0 25.9L11.5 26.2L12.0 26.1L12.5 25.7L13.0 25.7L13.5 25.6L14.0 25.6L14.5 25.6L15.0 25.5L15.5 25.5L16.0 25.2L16.5 25.6L17.0 25.6L17.5 25.7L18.0 25.7L18.5 25.3L19.0 25.4L19.5 25.6L20.0 25.7L20.5 25.8L21.0 25.3L21.5 25.6L22.0 25.7L22.5 25.7L23.0 26.1L23.5 25.8L24.0 26.1L24.5 26.0L25.0 26.2L25.5 26.3L26.0 26.3L26.5 26.3L27.0 26.3L27.5 26.1L28.0 26.2L28.5 26.1L29.0 26.1L29.5 26.2L30.0 26.3L30.5 26.1L31.0 26.3L31.5 26.0L32.0 26.1L32.5 26.2L33.0 26.3L33.5 26.3L34.0 26.3L34.5 26.3L35.0 26.3L35.5 26.1L36.0 26.0L36.5 26.2L37.0 26.3L37.5 26.0L38.0 26.0L38.5 26.2L39.0 26.2L39.5 26.1L40.0 26.1L40.5 26.1L41.0 26.3L41.5 26.3L42.0 26.1L42.5 26.3L43.0 26.3L43.5 26.0L44.0 26.3L44.5 26.1L45.0 26.2L45.5 26.1L46.0 26.1L46.5 26.3L47.0 26.0L47.5 26.3L48.0 26.3L48.5 26.0L49.0 26.3L49.5 26.1L50.0 26.0L50.5 26.2L51.0 26.1L51.5 26.0L52.0 26.3L52.5 26.2L53.0 26.3L53.5 26.1L54.0 26.2L54.5 26.1L55.0 26.0L55.5 26.3L56.0 26.3L56.5 26.2L57.0 26.3L57.5 26.1L58.0 26.0L58.5 26.3L59.0 26.2L59.5 26.2L60.0 26.1L60.5 26.1L61.0 26.3L61.5 26.0L62.0 26.3L62.5 26.2L63.0 26.1L63.5 26.2L64.0 26.0L64.5 26.2L65.0 26.1L65.5 26.1L66.0 26.1L66.5 26.1L67.0 26.1L67.5 26.1L68.0 26.1L68.5 26.1L69.0 26.2L69.5 26.1L70.0 26.1L70.5 26.2L71.0 26.0L71.5 26.3L72.0 26.3L72.5 26.2L73.0 26.1L73.5 26.3L74.0 26.3L74.5 26.1L75.0 25.7L75.5 25.7L76.0 25.5L76.5 25.4L77.0 24.8L77.5 24.9L78.0 24.6L78.5 24.9L79.0 24.7L79.5 25.3L80.0 25.1L80.5 24.6L81.0 24.7L81.5 25.3L82.0 25.3L82.5 24.8L83.0 25.3L83.5 25.2L84.0 24.8L84.5 25.0L85.0 25.1L85.5 25.3L86.0 25.3L86.5 25.4L87.0 25.2L87.5 24.9L88.0 25.1L88.5 25.0L89.0 25.1L89.5 25.6L90.0 25.3L90.5 25.0L91.0 25.4L91.5 25.5L92.0 25.2L92.5 25.2L93.0 25.1L93.5 25.4L94.0 25.4L94.5 25.3L95.0 25.5L95.5 25.5L96.0 25.6L96.5 25.6L97.0 25.8L97.5 25.4L98.0 25.8L98.5 25.6L99.0 25.5L99.5 26.0L100.0 25.8L100.5 25.6L101.0 25.6L101.5 25.6L102.0 25.8L102.5 25.8L103.0 25.9L103.5 25.7L104.0 25.9L104.5 25.9L105.0 25.9L105.5 26.2L106.0 26.2L106.5 26.0L107.0 25.9L107.5 25.9L108.0 26.2L108.5 26.1L109.0 25.9L109.5 26.2L110.0 26.2L110.5 26.1L111.0 26.1L111.5 26.2L112.0 26.0L112.5 26.3L113.0 26.1L113.5 26.2L114.0 26.0L114.5 26.3L115.0 26.2L115.5 26.2L116.0 26.3L116.5 26.1L117.0 26.2L117.5 26.1L118.0 26.0L118.5 26.2L119.0 26.1L119.5 26.2L120.0 26.1L120.5 26.0L121.0 26.0L121.5 25.9L122.0 25.9L122.5 26.0L123.0 26.1L123.5 26.3L124.0 26.1L124.5 26.3L125.0 26.1L125.5 26.0L126.0 26.0L126.5 26.2L127.0 26.3L127.5 26.0L128.0 26.1L128.5 26.1L129.0 26.1L129.5 26.0L130.0 26.2L130.5 26.2L131.0 26.1L131.5 26.2L132.0 26.0L132.5 26.1L133.0 26.0L133.5 26.0L134.0 26.1L134.5 26.2L135.0 26.0L135.5 26.0L136.0 26.2L136.5 26.0L137.0 26.0L137.5 26.2L138.0 26.1L138.5 26.0L139.0 26.1L139.5 26.0L140.0 26.0L140.5 26.3L141.0 26.2L141.5 26.1L142.0 26.2L142.5 26.2L143.0 26.0L143.5 26.2L144.0 26.0L144.5 26.1L145.0 26.2L145.5 26.2L146.0 26.0L146.5 26.3L147.0 26.0L147.5 26.1L148.0 26.1L148.5 26.0L149.0 26.0L149.5 26.0L150.0 26.1L150.5 26.1L151.0 26.0L151.5 26.1L152.0 26.2L152.5 26.0L153.0 26.1L153.5 26.2L154.0 26.2L154.5 26.0L155.0 26.1L155.5 26.1L156.0 26.1L156.5 26.0L157.0 26.2L157.5 26.1L158.0 26.3L158.5 26.3L159.0 26.2L159.5 26.1L160.0 26.1L160.5 26.1L161.0 26.2L161.5 26.1L162.0 26.1L162.5 26.1L163.0 26.0L163.5 26.1L164.0 26.1L164.5 26.3L165.0 26.2L165.5 26.3L166.0 26.0L166.5 26.0L167.0 26.1L167.5 26.0L168.0 26.3L168.5 26.2L169.0 26.1L169.5 26.3L170.0 26.0L170.5 26.3L171.0 26.3L171.5 26.0L172.0 26.2L172.5 26.1L173.0 26.0L173.5 26.3L174.0 26.1L174.5 26.1L175.0 26.2L175.5 26.1L176.0 26.2L176.5 26.2L177.0 26.1L177.5 26.1L178.0 26.3L178.5 26.2L179.0 26.2L179.5 26.1L180.0 26.0L180.5 26.1L181.0 26.1L181.5 26.1L182.0 26.3L182.5 26.0L183.0 26.1L183.5 26.3L184.0 26.2L184.5 26.1L185.0 26.2L185.5 26.1L186.0 26.1L186.5 26.2L187.0 26.2L187.5 26.2L188.0 26.3L188.5 26.0L189.0 26.2L189.5 26.0L190.0 26.0L190.5 26.1L191.0 26.0L191.5 26.3L192.0 26.3L192.5 26.3L193.0 26.1L193.5 26.1L194.0 26.2L194.5 26.2L195.0 26.3L195.5 26.1L196.0 26.2L196.5 26.1L197.0 26.3L197.5 26.2L198.0 26.3L198.5 26.1L199.0 26.1L199.5 26.1L200.0 26.1L200.5 26.3L201.0 26.2L201.5 26.0L202.0 26.0L202.5 26.0L203.0 25.9L203.5 25.4L204.0 25.5L204.5 25.1L205.0 24.9L205.5 25.2L206.0 24.7L206.5 25.1L207.0 25.0L207.5 24.6L208.0 25.2L208.5 25.1L209.0 24.8L209.5 25.0L210.0 25.3L210.5 25.2L211.0 24.9L211.5 24.9L212.0 24.9L212.5 25.6L213.0 25.5L213.5 25.3L214.0 25.7L214.5 25.1L215.0 25.3L215.5 25.4L216.0 25.8L216.5 25.6L217.0 25.6L217.5 25.5L218.0 25.6L218.5 25.9L219.0 25.6L219.5 25.9L220.0 25.9L220.5 25.8L221.0 26.0L221.5 26.1L222.0 26.0L222.5 26.0L223.0 26.0L223.5 26.1L224.0 26.1L224.5 26.1L225.0 26.1L225.5 26.2L226.0 25.8L226.5 26.0L227.0 25.9L227.5 25.8L228.0 25.9L228.5 26.1L229.0 26.2L229.5 25.9L230.0 26.2L230.5 25.9L231.0 26.0L231.5 25.8L232.0 26.1L232.5 25.9L233.0 25.9L233.5 26.2L234.0 25.8L234.5 25.8L235.0 26.2L235.5 26.2L236.0 25.8L236.5 26.2L237.0 26.2L237.5 26.0L238.0 26.1L238.5 26.2L239.0 26.1L239.5 25.8L240.0 26.1L240.5 26.1L241.0 26.2L241.5 25.9L242.0 25.9L242.5 26.0L243.0 25.9L243.5 25.9L244.0 26.2L244.5 26.0L245.0 25.9L245.5 25.8L246.0 26.2L246.5 26.1L247.0 26.0L247.5 25.9L248.0 25.9L248.5 26.2L249.0 26.0L249.5 25.9L250.0 26.0L250.5 26.2L251.0 26.1L251.5 26.1L252.0 26.2L252.5 26.1L253.0 26.2L253.5 26.2L254.0 26.2L254.5 26.1L255.0 26.0L255.5 26.0L256.0 26.0L256.5 26.1L257.0 26.1L257.5 26.0L258.0 26.2L258.5 26.3L259.0 26.0L259.5 25.9L260.0 25.9L260.5 26.1L261.0 25.9L261.5 26.1L262.0 26.1L262.5 26.0L263.0 25.9L263.5 26.1L264.0 26.0L264.5 26.2L265.0 26.1L265.5 26.0L266.0 25.6L266.5 25.7L267.0 25.3L267.5 25.0L268.0 24.8L268.5 24.7L269.0 24.9L269.5 25.0L270.0 24.8L270.5 25.2L271.0 24.7L271.5 25.4L272.0 25.4L272.5 25.1L273.0 25.1L273.5 24.9L274.0 25.4L274.5 25.1L275.0 25.6L275.5 25.6L276.0 25.6L276.5 25.3L277.0 25.7L277.5 25.6L278.0 25.2L278.5 25.6L279.0 25.6L279.5 25.8L280.0 25.7L280.5 25.8L281.0 25.8L281.5 25.6L282.0 26.0L282.5 26.1L283.0 26.1L283.5 26.2L284.0 26.2L284.5 25.9L285.0 26.0L285.5 26.1L286.0 26.0L286.5 26.0L287.0 26.1L287.5 26.0L288.0 25.9L288.5 26.2L289.0 25.9L289.5 26.0L290.0 26.2L290.5 26.0L291.0 26.0L291.5 26.3L292.0 25.9L292.5 26.2L293.0 26.0L293.5 25.9L294.0 25.9L294.5 26.0L295.0 26.0L295.5 26.3L296.0 26.2L296.5 25.9L297.0 25.9L297.5 26.0L298.0 26.1L298.5 26.0L299.0 26.1L299.5 26.1L300.0 26.2L300.5 26.2L301.0 26.0L301.5 26.2L302.0 26.0L302.5 26.0L303.0 26.0L303.5 26.2L304.0 25.9L304.5 25.9L305.0 25.9L305.5 26.1L306.0 26.0L306.5 26.2L307.0 25.9L307.5 26.1L308.0 26.0L308.5 25.9L309.0 26.2L309.5 26.1L310.0 26.1L310.5 26.1L311.0 25.9L311.5 26.0L312.0 26.1L312.5 26.1L313.0 26.2L313.5 26.0L314.0 25.9L314.5 26.2L315.0 25.9L315.5 25.7L316.0 26.0L316.5 25.7L317.0 25.8L317.5 25.7L318.0 25.2L318.5 25.6L319.0 25.4L319.5 25.5L320.0 25.5L320.5 25.7L321.0 25.3L321.5 25.8L322.0 25.7L322.5 25.3L323.0 25.3L323.5 25.5L324.0 25.4L324.5 25.5L325.0 25.7L325.5 25.7L326.0 25.5L326.5 25.7L327.0 25.5L327.5 25.9L328.0 25.5L328.5 25.8L329.0 26.0L329.5 25.6L330.0 25.8L330.5 26.1L331.0 25.9L331.5 25.8L332.0 26.2L332.5 26.2L333.0 25.9L333.5 26.2L334.0 25.9L334.5 25.9L335.0 26.2L335.5 26.2L336.0 25.9L336.5 25.9L337.0 26.3L337.5 25.9L338.0 26.2L338.5 25.9L339.0 25.9L339.5 26.2L340.0 26.0L340.5 26.1L341.0 26.0L341.5 25.9L342.0 26.3L342.5 26.1L343.0 26.1L343.5 26.0L344.0 26.2L344.5 26.2L345.0 26.2L345.5 25.9L346.0 26.0L346.5 26.1L347.0 26.3L347.5 25.9L348.0 26.2L348.5 26.2L349.0 25.9L349.5 26.0L350.0 26.2L350.5 26.2L351.0 26.0L351.5 26.1L352.0 25.9L352.5 26.1L353.0 26.1L353.5 26.2L354.0 26.0L354.5 26.1L355.0 26.2L355.5 25.9L356.0 26.0L356.5 25.9L357.0 26.1L357.5 26.1L358.0 26.0L358.5 26.0L359.0 25.9L359.5 25.9L360.0 25.9L360.5 26.0L361.0 25.9L361.5 26.2L362.0 26.0L362.5 26.0L363.0 26.2L363.5 26.1L364.0 26.0L364.5 26.0L365.0 26.0L365.5 26.1L366.0 26.2L366.5 25.9L367.0 25.9L367.5 26.0L368.0 26.2L368.5 26.0L369.0 26.0L369.5 26.0L370.0 26.0L370.5 26.0L371.0 26.2L371.5 26.1L372.0 26.1L372.5 26.1L373.0 25.9L373.5 25.9L374.0 25.9L374.5 26.0L375.0 26.0L375.5 26.2L376.0 26.1L376.5 25.9L377.0 26.2L377.5 26.1L378.0 26.1L378.5 26.0L379.0 26.1L379.5 25.9L380.0 26.0L380.5 26.0L381.0 26.1L381.5 26.0L382.0 25.9L382.5 25.9L383.0 26.2L383.5 25.9L384.0 26.1L384.5 26.0L385.0 26.0L385.5 26.1L386.0 26.0L386.5 25.9L387.0 26.1L387.5 26.1L388.0 26.0L388.5 26.1L389.0 26.2L389.5 26.0L390.0 26.2L390.5 25.9L391.0 26.2L391.5 26.2L392.0 26.0L392.5 26.2L393.0 26.1L393.5 26.3L394.0 25.9L394.5 26.2L395.0 26.1L395.5 25.8L396.0 25.5L396.5 25.6L397.0 25.4L397.5 25.4L398.0 25.4L398.5 24.8L399.0 24.9L399.5 24.6L400.0 24.8L400.5 25.3L401.0 24.8L401.5 25.4L402.0 24.8L402.5 25.4L403.0 24.9L403.5 25.5L404.0 25.1L404.5 24.8L405.0 25.2L405.5 25.2L406.0 25.1L406.5 25.0L407.0 25.0L407.5 25.1L408.0 25.3L408.5 25.3L409.0 25.4L409.5 25.2L410.0 25.3L410.5 25.6L411.0 25.6L411.5 25.5L412.0 25.4L412.5 25.6L413.0 25.6L413.5 25.7L414.0 25.8L414.5 25.8L415.0 25.7L415.5 25.8L416.0 25.7L416.5 26.1L417.0 26.0L417.5 25.8L418.0 25.9L418.5 25.8L419.0 26.1L419.5 26.1L420.0 25.9L420.5 25.9L421.0 25.8L421.5 26.0L422.0 26.1L422.5 26.2L423.0 26.2L423.5 25.9L424.0 26.0L424.5 25.8L425.0 25.8L425.5 26.0L426.0 25.9L426.5 26.0L427.0 26.2L427.5 26.1L428.0 25.9L428.5 26.1L429.0 25.8L429.5 25.8L430.0 26.2L430.5 25.9L431.0 25.9L431.5 26.1L432.0 26.0L432.5 26.1L433.0 26.0L433.5 25.8L434.0 26.2L434.5 26.0L435.0 25.8L435.5 25.8L436.0 25.9L436.5 25.8L437.0 26.2L437.5 26.1L438.0 26.0L438.5 26.0L439.0 25.8L439.5 25.8L440.0 25.8L440.5 26.1L441.0 26.0L441.5 26.2L442.0 25.9L442.5 25.9L443.0 26.0L443.5 26.1L444.0 26.1L444.5 26.0L445.0 25.8L445.5 26.0L446.0 26.0L446.5 25.9L447.0 25.9L447.5 25.9L448.0 25.9L448.5 26.1L449.0 26.1L449.5 25.8L450.0 25.9L450.5 26.0L451.0 25.9L451.5 26.1L452.0 25.8L452.5 26.0L453.0 25.9L453.5 26.0L454.0 25.9L454.5 26.1L455.0 26.1L455.5 25.8L456.0 25.5L456.5 25.6L457.0 25.5L457.5 25.4L458.0 25.3L458.5 24.8L459.0 24.5L459.5 24.6L460.0 24.5L460.5 24.8L461.0 24.4L461.5 24.1L462.0 24.7L462.5 25.0L463.0 24.5L463.5 24.3L464.0 24.4L464.5 24.0L465.0 24.7L465.5 24.0L466.0 24.8L466.5 24.0L467.0 24.5L467.5 24.7L468.0 24.0L468.5 23.9L469.0 23.8L469.5 24.7L470.0 24.8L470.5 24.8L471.0 24.7L471.5 24.7L472.0 24.0L472.5 24.6L473.0 24.4L473.5 25.0L474.0 24.0L474.5 24.4L475.0 24.0L475.5 24.7L476.0 24.1L476.5 24.1L477.0 24.4L477.5 24.3L478.0 24.9L478.5 24.3L479.0 24.5L479.5 24.5L480.0 24.8L480.5 24.1L481.0 25.1L481.5 24.4L482.0 24.6L482.5 24.4L483.0 24.8L483.5 24.8L484.0 25.1L484.5 24.3L485.0 24.4L485.5 24.2L486.0 24.5L486.5 25.1L487.0 24.4L487.5 24.5L488.0 24.7L488.5 24.9L489.0 24.8L489.5 24.7L490.0 24.7L490.5 25.1L491.0 25.0L491.5 24.6L492.0 25.1L492.5 24.9L493.0 24.6L493.5 24.7L494.0 25.0L494.5 24.7L495.0 25.1L495.5 25.0L496.0 24.5L496.5 25.0L497.0 24.8L497.5 24.9L498.0 25.0L498.5 24.7L499.0 24.7L499.5 24.4L499.5 28.7L499.0 29.5L498.5 28.8L498.0 29.5L497.5 29.2L497.0 29.6L496.5 29.1L496.0 29.0L495.5 29.2L495.0 29.1L494.5 28.8L494.0 29.3L493.5 29.2L493.0 29.3L492.5 29.7L492.0 29.5L491.5 29.0L491.0 29.7L490.5 29.0L490.0 29.6L489.5 28.9L489.0 29.1L488.5 29.0L488.0 29.3L487.5 28.9L487.0 29.1L486.5 28.9L486.0 29.1L485.5 29.2L485.0 29.6L484.5 29.3L484.0 29.5L483.5 29.1L483.0 29.1L482.5 29.3L482.0 29.5L481.5 29.0L481.0 29.0L480.5 29.0L480.0 29.3L479.5 29.7L479.0 29.3L478.5 29.9L478.0 29.4L477.5 29.9L477.0 29.1L476.5 29.6L476.0 29.4L475.5 29.7L475.0 29.4L474.5 29.7L474.0 29.3L473.5 29.3L473.0 29.9L472.5 29.8L472.0 29.6L471.5 29.9L471.0 29.6L470.5 30.1L470.0 29.5L469.5 29.6L469.0 29.1L468.5 29.3L468.0 29.9L467.5 29.4L467.0 29.9L466.5 30.2L466.0 29.4L465.5 29.6L465.0 29.8L464.5 29.1L464.0 29.1L463.5 29.0L463.0 29.4L462.5 29.5L462.0 29.4L461.5 29.9L461.0 29.5L460.5 29.5L460.0 29.3L459.5 29.5L459.0 29.4L458.5 29.0L458.0 28.9L457.5 29.1L457.0 29.0L456.5 28.4L456.0 28.1L455.5 27.9L455.0 27.9L454.5 27.9L454.0 28.1L453.5 28.1L453.0 27.9L452.5 27.9L452.0 27.9L451.5 28.1L451.0 27.9L450.5 28.1L450.0 28.0L449.5 28.0L449.0 27.9L448.5 28.0L448.0 28.1L447.5 27.9L447.0 28.1L446.5 27.9L446.0 28.1L445.5 28.2L445.0 27.9L444.5 28.2L444.0 27.9L443.5 28.2L443.0 28.1L442.5 27.9L442.0 28.1L441.5 28.2L441.0 27.9L440.5 28.0L440.0 28.0L439.5 27.9L439.0 28.1L438.5 27.8L438.0 28.2L437.5 28.2L437.0 27.9L436.5 28.0L436.0 28.2L435.5 28.0L435.0 27.8L434.5 28.1L434.0 28.0L433.5 28.1L433.0 28.2L432.5 28.1L432.0 28.2L431.5 28.2L431.0 28.0L430.5 28.1L430.0 28.0L429.5 27.9L429.0 28.2L428.5 28.0L428.0 28.1L427.5 27.8L427.0 27.9L426.5 27.9L426.0 27.9L425.5 27.8L425.0 27.9L424.5 27.8L424.0 28.0L423.5 28.0L423.0 28.1L422.5 27.9L422.0 27.9L421.5 28.0L421.0 27.9L420.5 28.1L420.0 27.9L419.5 28.0L419.0 27.8L418.5 28.0L418.0 28.1L417.5 28.2L417.0 28.1L416.5 28.1L416.0 28.1L415.5 28.1L415.0 28.2L414.5 28.0L414.0 28.2L413.5 28.2L413.0 28.2L412.5 28.5L412.0 28.6L411.5 28.5L411.0 28.4L410.5 28.3L410.0 28.5L409.5 28.5L409.0 28.9L408.5 28.8L408.0 28.6L407.5 28.9L407.0 28.4L406.5 28.7L406.0 28.9L405.5 29.0L405.0 28.9L404.5 28.5L404.0 28.5L403.5 28.9L403.0 28.8L402.5 28.8L402.0 29.3L401.5 29.3L401.0 29.4L400.5 29.0L400.0 28.8L399.5 29.2L399.0 28.8L398.5 28.8L398.0 28.8L397.5 29.1L397.0 28.7L396.5 28.5L396.0 28.1L395.5 28.1L395.0 27.8L394.5 27.8L394.0 28.0L393.5 28.1L393.0 27.9L392.5 28.1L392.0 27.8L391.5 28.0L391.0 28.1L390.5 27.9L390.0 27.7L389.5 27.9L389.0 28.0L388.5 28.0L388.0 27.7L387.5 28.0L387.0 27.9L386.5 27.7L386.0 28.1L385.5 27.9L385.0 27.8L384.5 28.1L384.0 28.1L383.5 27.8L383.0 28.1L382.5 28.1L382.0 27.8L381.5 27.8L381.0 28.1L380.5 27.7L380.0 28.0L379.5 28.0L379.0 27.9L378.5 28.1L378.0 28.1L377.5 27.9L377.0 28.0L376.5 27.7L376.0 27.8L375.5 27.8L375.0 28.0L374.5 27.8L374.0 27.8L373.5 28.0L373.0 28.0L372.5 27.9L372.0 28.0L371.5 27.9L371.0 27.9L370.5 27.9L370.0 28.0L369.5 27.9L369.0 27.8L368.5 28.1L368.0 28.1L367.5 27.9L367.0 27.8L366.5 27.9L366.0 27.9L365.5 28.0L365.0 27.8L364.5 28.1L364.0 28.0L363.5 27.9L363.0 28.1L362.5 28.1L362.0 28.0L361.5 28.1L361.0 28.0L360.5 27.7L360.0 27.8L359.5 27.8L359.0 27.8L358.5 28.0L358.0 27.9L357.5 27.9L357.0 28.0L356.5 28.0L356.0 28.1L355.5 28.1L355.0 27.9L354.5 27.9L354.0 28.0L353.5 27.9L353.0 28.1L352.5 27.9L352.0 28.1L351.5 27.9L351.0 28.1L350.5 27.9L350.0 27.9L349.5 28.0L349.0 28.0L348.5 28.0L348.0 28.1L347.5 27.9L347.0 28.1L346.5 28.0L346.0 27.8L345.5 27.8L345.0 27.9L344.5 28.1L344.0 27.8L343.5 27.8L343.0 27.8L342.5 27.8L342.0 27.8L341.5 28.0L341.0 28.0L340.5 27.8L340.0 28.0L339.5 27.7L339.0 28.0L338.5 27.8L338.0 27.8L337.5 27.9L337.0 27.8L336.5 28.0L336.0 28.0L335.5 27.7L335.0 27.9L334.5 27.8L334.0 27.9L333.5 27.9L333.0 27.8L332.5 28.0L332.0 27.8L331.5 28.0L331.0 28.2L330.5 28.2L330.0 28.3L329.5 28.0L329.0 28.2L328.5 28.5L328.0 28.3L327.5 28.0L327.0 28.4L326.5 28.6L326.0 28.5L325.5 28.6L325.0 28.5L324.5 28.5L324.0 28.5L323.5 28.2L323.0 28.5L322.5 28.4L322.0 28.6L321.5 28.3L321.0 28.7L320.5 28.8L320.0 28.8L319.5 28.6L319.0 28.7L318.5 28.5L318.0 28.2L317.5 28.3L317.0 28.7L316.5 28.5L316.0 28.3L315.5 28.2L315.0 28.0L314.5 27.9L314.0 27.8L313.5 27.8L313.0 28.0L312.5 28.0L312.0 27.9L311.5 27.9L311.0 28.1L310.5 27.8L310.0 28.1L309.5 27.8L309.0 27.7L308.5 27.9L308.0 27.8L307.5 28.0L307.0 27.9L306.5 27.9L306.0 27.9L305.5 28.0L305.0 27.7L304.5 27.9L304.0 28.1L303.5 27.7L303.0 27.9L302.5 27.8L302.0 27.8L301.5 27.9L301.0 28.0L300.5 27.8L300.0 27.8L299.5 27.7L299.0 27.8L298.5 27.8L298.0 27.8L297.5 28.0L297.0 28.0L296.5 27.9L296.0 27.7L295.5 28.1L295.0 27.8L294.5 27.8L294.0 28.0L293.5 28.0L293.0 28.0L292.5 27.9L292.0 28.1L291.5 27.8L291.0 27.8L290.5 28.1L290.0 28.1L289.5 27.9L289.0 27.7L288.5 27.8L288.0 28.1L287.5 27.8L287.0 28.0L286.5 28.1L286.0 28.1L285.5 28.1L285.0 27.7L284.5 27.9L284.0 27.8L283.5 28.1L283.0 27.8L282.5 28.1L282.0 28.3L281.5 28.2L281.0 28.2L280.5 28.3L280.0 28.6L279.5 28.5L279.0 28.7L278.5 28.6L278.0 28.5L277.5 28.6L277.0 29.0L276.5 29.0L276.0 28.7L275.5 28.8L275.0 28.7L274.5 28.5L274.0 28.4L273.5 28.5L273.0 28.9L272.5 29.1L272.0 28.7L271.5 29.0L271.0 28.6L270.5 28.8L270.0 28.9L269.5 29.2L269.0 29.3L268.5 29.3L268.0 28.9L267.5 28.9L267.0 28.9L266.5 28.3L266.0 28.4L265.5 28.0L265.0 27.9L264.5 28.0L264.0 27.8L263.5 27.9L263.0 27.8L262.5 28.0L262.0 28.0L261.5 27.9L261.0 27.9L260.5 28.0L260.0 27.9L259.5 27.9L259.0 28.0L258.5 27.9L258.0 28.1L257.5 27.8L257.0 27.8L256.5 28.0L256.0 27.9L255.5 28.1L255.0 27.9L254.5 27.9L254.0 27.8L253.5 28.2L253.0 27.8L252.5 28.0L252.0 27.9L251.5 28.1L251.0 28.0L250.5 27.8L250.0 27.8L249.5 28.1L249.0 28.2L248.5 27.8L248.0 28.1L247.5 28.1L247.0 28.1L246.5 28.2L246.0 28.0L245.5 28.1L245.0 27.8L244.5 27.9L244.0 27.8L243.5 27.9L243.0 27.9L242.5 27.9L242.0 27.9L241.5 27.9L241.0 28.1L240.5 28.1L240.0 28.0L239.5 27.8L239.0 28.2L238.5 27.8L238.0 27.9L237.5 27.9L237.0 28.1L236.5 28.1L236.0 28.2L235.5 28.0L235.0 27.8L234.5 28.0L234.0 28.1L233.5 28.1L233.0 28.0L232.5 27.9L232.0 28.0L231.5 28.0L231.0 28.0L230.5 27.8L230.0 28.0L229.5 28.1L229.0 28.1L228.5 27.8L228.0 27.8L227.5 28.1L227.0 27.9L226.5 28.1L226.0 28.0L225.5 28.0L225.0 27.9L224.5 27.9L224.0 28.0L223.5 27.9L223.0 27.8L222.5 28.2L222.0 27.9L221.5 28.2L221.0 27.9L220.5 27.9L220.0 28.3L219.5 28.4L219.0 28.2L218.5 28.0L218.0 28.1L217.5 28.1L217.0 28.1L216.5 28.3L216.0 28.6L215.5 28.2L215.0 28.8L214.5 28.3L214.0 28.9L213.5 28.9L213.0 28.6L212.5 29.1L212.0 28.7L211.5 28.5L211.0 28.6L210.5 28.9L210.0 28.6L209.5 28.8L209.0 28.6L208.5 28.7L208.0 29.3L207.5 28.6L207.0 29.0L206.5 29.2L206.0 29.2L205.5 29.4L205.0 29.5L204.5 29.2L204.0 28.5L203.5 28.5L203.0 28.5L202.5 28.1L202.0 28.0L201.5 27.9L201.0 27.8L200.5 27.9L200.0 28.0L199.5 28.0L199.0 27.8L198.5 27.9L198.0 27.8L197.5 27.7L197.0 27.8L196.5 27.9L196.0 27.9L195.5 27.7L195.0 27.7L194.5 27.9L194.0 27.8L193.5 27.8L193.0 27.8L192.5 27.9L192.0 28.0L191.5 27.9L191.0 27.8L190.5 27.9L190.0 27.8L189.5 28.0L189.0 27.7L188.5 28.0L188.0 27.7L187.5 27.9L187.0 27.9L186.5 28.0L186.0 27.8L185.5 27.8L185.0 27.9L184.5 28.0L184.0 27.7L183.5 27.8L183.0 27.8L182.5 27.7L182.0 27.8L181.5 27.9L181.0 27.9L180.5 27.9L180.0 27.8L179.5 27.7L179.0 27.7L178.5 27.7L178.0 28.0L177.5 27.7L177.0 27.7L176.5 27.9L176.0 27.9L175.5 28.0L175.0 28.0L174.5 27.9L174.0 28.0L173.5 27.7L173.0 28.0L172.5 27.7L172.0 28.0L171.5 27.9L171.0 27.8L170.5 27.9L170.0 27.8L169.5 27.9L169.0 27.8L168.5 27.9L168.0 27.9L167.5 27.8L167.0 28.0L166.5 28.0L166.0 27.8L165.5 27.7L165.0 27.8L164.5 27.9L164.0 27.8L163.5 27.9L163.0 27.8L162.5 27.9L162.0 28.0L161.5 27.9L161.0 27.8L160.5 27.8L160.0 27.9L159.5 27.9L159.0 28.0L158.5 27.7L158.0 28.0L157.5 27.9L157.0 28.0L156.5 28.0L156.0 27.9L155.5 27.7L155.0 27.9L154.5 27.7L154.0 28.0L153.5 28.0L153.0 27.7L152.5 28.0L152.0 27.8L151.5 27.7L151.0 28.0L150.5 27.8L150.0 27.8L149.5 27.8L149.0 27.8L148.5 28.0L148.0 27.8L147.5 27.7L147.0 27.8L146.5 28.0L146.0 27.7L145.5 27.9L145.0 27.8L144.5 27.7L144.0 27.9L143.5 28.0L143.0 28.0L142.5 28.0L142.0 27.9L141.5 28.0L141.0 27.9L140.5 27.8L140.0 28.1L139.5 28.0L139.0 27.9L138.5 27.8L138.0 27.7L137.5 27.8L137.0 27.9L136.5 27.8L136.0 27.9L135.5 27.8L135.0 27.7L134.5 27.8L134.0 27.8L133.5 27.7L133.0 27.7L132.5 28.0L132.0 27.8L131.5 27.9L131.0 28.1L130.5 28.0L130.0 28.0L129.5 28.1L129.0 28.1L128.5 27.9L128.0 27.9L127.5 27.9L127.0 27.8L126.5 27.7L126.0 27.8L125.5 28.1L125.0 27.9L124.5 27.9L124.0 27.8L123.5 27.9L123.0 28.1L122.5 27.8L122.0 27.8L121.5 27.9L121.0 28.0L120.5 27.8L120.0 27.9L119.5 27.8L119.0 27.9L118.5 27.7L118.0 27.9L117.5 28.1L117.0 27.7L116.5 28.0L116.0 27.8L115.5 27.9L115.0 27.9L114.5 28.0L114.0 28.0L113.5 27.7L113.0 28.0L112.5 27.9L112.0 27.7L111.5 28.0L111.0 27.9L110.5 28.1L110.0 27.9L109.5 28.1L109.0 27.9L108.5 27.9L108.0 27.9L107.5 27.9L107.0 28.1L106.5 27.9L106.0 27.9L105.5 27.9L105.0 27.9L104.5 28.2L104.0 28.0L103.5 27.9L103.0 28.0L102.5 27.9L102.0 28.3L101.5 28.1L101.0 28.1L100.5 28.0L100.0 28.5L99.5 28.3L99.0 28.4L98.5 28.3L98.0 28.4L97.5 28.5L97.0 28.5L96.5 28.4L96.0 28.6L95.5 28.4L95.0 28.5L94.5 28.7L94.0 28.3L93.5 28.7L93.0 28.6L92.5 28.4L92.0 28.4L91.5 28.9L91.0 28.9L90.5 29.0L90.0 28.7L89.5 28.4L89.0 28.7L88.5 28.6L88.0 28.8L87.5 29.1L87.0 28.7L86.5 28.8L86.0 28.6L85.5 28.5L85.0 28.6L84.5 28.8L84.0 28.7L83.5 28.6L83.0 29.1L82.5 29.3L82.0 28.7L81.5 28.6L81.0 28.9L80.5 29.4L80.0 28.9L79.5 28.8L79.0 29.0L78.5 29.0L78.0 28.7L77.5 29.3L77.0 29.0L76.5 28.7L76.0 28.5L75.5 28.3L75.0 28.0L74.5 28.0L74.0 27.9L73.5 27.9L73.0 27.7L72.5 27.9L72.0 28.0L71.5 27.8L71.0 27.8L70.5 27.9L70.0 27.7L69.5 27.9L69.0 27.7L68.5 27.7L68.0 27.8L67.5 27.7L67.0 27.7L66.5 27.7L66.0 27.8L65.5 27.9L65.0 28.0L64.5 27.7L64.0 27.8L63.5 27.8L63.0 28.0L62.5 27.7L62.0 27.8L61.5 27.8L61.0 28.0L60.5 27.8L60.0 27.9L59.5 28.0L59.0 27.9L58.5 27.8L58.0 27.7L57.5 27.8L57.0 27.9L56.5 27.9L56.0 27.7L55.5 27.7L55.0 27.8L54.5 27.8L54.0 27.8L53.5 27.8L53.0 27.8L52.5 27.8L52.0 27.8L51.5 28.0L51.0 27.9L50.5 28.0L50.0 28.0L49.5 27.8L49.0 27.9L48.5 28.0L48.0 27.8L47.5 27.8L47.0 27.9L46.5 27.7L46.0 27.7L45.5 27.8L45.0 27.7L44.5 27.8L44.0 27.9L43.5 27.9L43.0 27.7L42.5 28.0L42.0 27.7L41.5 28.0L41.0 27.8L40.5 27.7L40.0 28.0L39.5 27.9L39.0 28.0L38.5 27.8L38.0 27.8L37.5 27.8L37.0 27.8L36.5 27.8L36.0 27.8L35.5 27.9L35.0 27.8L34.5 27.9L34.0 27.7L33.5 27.9L33.0 28.0L32.5 27.9L32.0 27.7L31.5 27.7L31.0 27.9L30.5 27.8L30.0 27.8L29.5 27.9L29.0 27.9L28.5 28.0L28.0 27.8L27.5 27.8L27.0 28.0L26.5 27.8L26.0 27.7L25.5 27.9L25.0 27.8L24.5 27.8L24.0 28.2L23.5 28.2L23.0 28.1L22.5 28.4L22.0 28.5L21.5 28.4L21.0 28.5L20.5 28.6L20.0 28.6L19.5 28.7L19.0 28.3L18.5 28.7L18.0 28.3L17.5 28.7L17.0 28.5L16.5 28.5L16.0 28.5L15.5 28.8L15.0 28.4L14.5 28.8L14.0 28.3L13.5 28.5L13.0 28.5L12.5 28.3L12.0 28.1L11.5 27.9L11.0 27.8L10.5 28.0L10.0 28.1L9.5 28.0L9.0 28.1L8.5 28.1L8.0 28.0L7.5 27.9L7.0 27.9L6.5 28.1L6.0 28.2L5.5 28.1L5.0 28.0L4.5 28.0L4.0 28.1L3.5 28.1L3.0 27.9L2.5 28.0L2.0 27.8L1.5 27.9L1.0 28.2L0.5 27.8L0.0 27.9Z" fill="#5122a8"/></svg>
<div style="left:95.4px;top:188.6px;width:5.4px;height:9px;background:#45b4f4;"></div>
<div style="left:95.4px;top:183.8px;width:5.4px;height:0.9px;background:#e8c81c;"></div>
<div style="left:95.4px;top:251.6px;width:5.4px;height:2.6px;background:#45b4f4;"></div>
<div style="left:95.4px;top:223.6px;width:5.4px;height:0.9px;background:#e8c81c;"></div>
<div style="left:95.4px;top:303.8px;width:5.4px;height:7.6px;background:#45b4f4;"></div>
<div style="left:95.4px;top:298.8px;width:5.4px;height:0.9px;background:#e8c81c;"></div>
<div style="left:95.4px;top:352.2px;width:2.2px;height:16px;background:#45b4f4;"></div>
<div style="left:98.6px;top:353.8px;width:2.2px;height:14.4px;background:#45b4f4;"></div>
<div style="left:97.9px;top:313.6px;width:0.6px;height:54.6px;background:#4b4b4b;"></div>
<div style="left:95.4px;top:336.8px;width:5.4px;height:0.9px;background:#e8c81c;"></div>
<div style="left:95.4px;top:424.2px;width:5.4px;height:1px;background:#45b4f4;"></div>
<div style="left:95.4px;top:422.6px;width:5.4px;height:0.9px;background:#e8c81c;"></div>
<div style="left:95.4px;top:482.2px;width:5.4px;height:0px;background:#45b4f4;"></div>
<div style="left:95.4px;top:480.2px;width:5.4px;height:0.9px;background:#e8c81c;"></div>
<div style="left:95.4px;top:536.4px;width:5.4px;height:2.2px;background:#45b4f4;"></div>
<div style="left:95.4px;top:535.2px;width:5.4px;height:0.9px;background:#e8c81c;"></div>
<div style="left:95.4px;top:594px;width:5.4px;height:1.2px;background:#45b4f4;"></div>
<div style="left:95.4px;top:591.8px;width:5.4px;height:0.9px;background:#e8c81c;"></div>
<div style="left:7.3px;top:594.2px;width:628.7px;height:10px;background:#4c4c4c;"></div>
<div style="left:129px;top:594px;width:499.5px;height:0.8px;background:#2a2a2a;"></div>
<div style="left:518.6px;top:124px;width:1px;height:470px;background:#3c9c2c;"></div>
<div style="left:515.1px;top:122.8px;width:8px;height:8px;background:rgba(150,150,150,.72);border-radius:50%;"></div>
<svg style="left:0px;top:0px;" width="640" height="610" viewBox="0 0 640 610"><path d="M9 596.2h6.4" stroke="#3a3a3a" stroke-width="1"/><rect x="9.2" y="598" width="6.2" height="4.6" fill="none" stroke="#3a3a3a" stroke-width="1"/><path d="M11.4 598v4.6" stroke="#3a3a3a" stroke-width="1"/><rect x="19.6" y="597" width="7.2" height="5" rx="1" fill="#3a3a3a"/><rect x="21.6" y="595.8" width="3" height="2" fill="#3a3a3a"/><circle cx="23.2" cy="599.6" r="1.4" fill="#4b4b4b"/><path d="M34.6 597v4.4l-3.2-2.2z" fill="#3a3a3a"/><rect x="258" y="597" width="7.6" height="4" rx="2" fill="#2c2c2c"/><path d="M600.6 597l3 2.2-3 2.2z" fill="#3a3a3a"/><path d="M610.4 599.2h5.6M620.6 599.2h5.6M623.4 596.4v5.6" stroke="#3a3a3a" stroke-width="1.1"/><path d="M631.4 567l2.6 3.2 2.6-3.2z" fill="#3a3a3a"/><path d="M631.2 579h5.6M634 576.2v5.6M631.2 589h5.6" stroke="#3a3a3a" stroke-width="1.1"/></svg>
<div style="left:631.4px;top:316px;width:3.4px;height:206px;background:#2e2e2e;border-radius:1.7px;"></div>
<div style="left:646px;top:78px;width:302.6px;height:526px;background:#4c4c4c;"></div>
<div style="left:639px;top:78px;width:10px;height:17px;background:#3a3a3a;"></div>
<div style="left:637.7px;top:95px;width:8.3px;height:509px;background:#3b3b3b;"></div>
<div style="left:635.2px;top:78px;width:3.8px;height:17px;background:#232323;"></div>
<div style="left:722.7px;top:78px;width:169.3px;height:17px;background:#3a3a3a;"></div>
<div style="left:945px;top:78px;width:3.6px;height:17px;background:#3a3a3a;"></div>
<svg style="left:654.6px;top:84.6px;" width="6" height="6" viewBox="0 0 6 6"><path d="M.6 .6l4.6 4.6M5.2 .6l-4.6 4.6" stroke="#1e1e1e" stroke-width="1.3"/></svg>
<div class="t" style="left:664.6px;top:83.8px;font-size:8px;color:#e2e2e2;letter-spacing:-.1px;">Mixing Board</div>
<svg style="left:712.6px;top:87px;" width="4.4" height="2.4" viewBox="0 0 4.4 2.4"><path d="M0 0h4.4l-2.2 2.4z" fill="#777"/></svg>
<div class="t" style="left:900px;top:84.2px;font-size:7.9px;color:#f4f4f4;font-weight:bold;letter-spacing:-.2px;">Seq-1</div>
<svg style="left:922.6px;top:87px;" width="4.4" height="2.4" viewBox="0 0 4.4 2.4"><path d="M0 0h4.4l-2.2 2.4z" fill="#7a7a7a"/></svg>
<svg style="left:933px;top:83.6px;" width="8" height="8" viewBox="0 0 8 8"><path d="M0 .8h7.4M0 3.7h7.4M0 6.6h7.4" stroke="#d8d8d8" stroke-width="1.3"/></svg>
<div style="left:0;top:95px;width:938.4px;height:500px;overflow:hidden;background:transparent">
<div style="left:645.3px;top:0px;width:1px;height:500px;background:#3a3a3a;"></div>
<div style="left:646.3px;top:0px;width:0.8px;height:500px;background:#525252;"></div>
<div style="left:649px;top:9px;width:35px;height:9.2px;background:#606060;"></div>
<svg style="left:676.7px;top:12.4px;" width="5" height="2.8" viewBox="0 0 5 2.8"><path d="M0 0h5l-2.5 2.8z" fill="#161616"/></svg>
<div style="left:650px;top:23.5px;width:34.6px;height:9.6px;background:#424242;"></div>
<div style="left:650px;top:35.35px;width:34.6px;height:9.6px;background:#424242;"></div>
<div style="left:650px;top:47.2px;width:34.6px;height:9.6px;background:#3c8dbd;"></div>
<div class="t" style="left:650.9px;top:48.9px;font-size:6.4px;color:#f4f4f4;letter-spacing:-.25px;">Springama...</div>
<div style="left:650px;top:59.05px;width:34.6px;height:9.6px;background:#424242;"></div>
<div style="left:650px;top:70.9px;width:34.6px;height:9.6px;background:#424242;"></div>
<div style="left:650px;top:82.75px;width:34.6px;height:9.6px;background:#424242;"></div>
<div style="left:650px;top:94.6px;width:34.6px;height:9.6px;background:#424242;"></div>
<div style="left:646.5px;top:103.5px;width:2.4px;height:2.4px;background:#dcd8c4;border-radius:50%;"></div>
<div style="left:647px;top:111px;width:40px;height:26.8px;background:#2a2a2a;border-radius:2.5px;"></div>
<svg style="left:0px;top:0px;" width="938.4" height="500" viewBox="0 0 938.4 500"><circle cx="654.80" cy="183" r="3.9" fill="#b25cd2"/><path d="M656.00 181.28A2.1 2.1 0 1 1 653.60 181.28" stroke="#6a1a8a" stroke-width=".9" fill="none"/><path d="M654.80 180.2v2.6" stroke="#6a1a8a" stroke-width=".9"/><circle cx="667.80" cy="183" r="3.9" fill="#3c3c3c" stroke="#747474" stroke-width=".8"/><path d="M668.89 181.44A1.9 1.9 0 1 1 666.71 181.44" stroke="#8a8a8a" stroke-width=".8" fill="none"/><path d="M667.80 180.4v2.4" stroke="#8a8a8a" stroke-width=".8"/><path d="M676.30 181h6M676.30 183h6M676.30 185h6" stroke="#363636" stroke-width=".7"/><circle cx="658.70" cy="256.2" r="3.2" fill="#4e0a0a"/><circle cx="658.70" cy="256.2" r="3.2" fill="none" stroke="#3a2020" stroke-width=".6"/><path d="M672.10 253.2l5 3-5 3z" fill="#22e022"/><path d="M661.28 296.39A9.7 9.7 0 1 1 674.52 296.39" stroke="#0b3950" stroke-width="3.4" fill="none"/><path d="M667.90 279.40A9.9 9.9 0 0 0 658.93 285.12" stroke="#48b8f4" stroke-width="2.6" fill="none"/><defs><linearGradient id="kg0" x1="0" y1="0" x2="0" y2="1"><stop offset="0" stop-color="#5c7c8a"/><stop offset="1" stop-color="#3c5864"/></linearGradient></defs><circle cx="667.90" cy="289.3" r="7.6" fill="url(#kg0)"/><path d="M664.68 288.22L661.26 287.08" stroke="#dfeaf0" stroke-width="1.1"/><path d="M654.30 304.6v5.4l-3.6-2.7z" fill="#2a2a2a"/><path d="M681.70 304.6v5.4l3.6-2.7z" fill="#2a2a2a"/><path d="M665.20 329V414" stroke="#363636" stroke-width="1"/><path d="M650.50 428.6h4M680.90 428.6h4.4M683.10 426.4v4.4" stroke="#262626" stroke-width="1.1"/><path d="M648.70 485.4h4l-2 1.6z" fill="#666"/></svg>
<div style="left:647.9px;top:194.5px;width:38.4px;height:10.4px;background:#4b4a2c;border-radius:1.5px;box-shadow:inset 0 0 0 .5px rgba(0,0,0,.25);"></div>
<div class="t" style="left:647.9px;top:196.2px;font-size:7px;color:#dcdcdc;width:38.4px;text-align:center;font-weight:bold;letter-spacing:-.3px;">solo</div>
<div style="left:647.9px;top:206.3px;width:38.4px;height:10.4px;background:#4b3c30;border-radius:1.5px;box-shadow:inset 0 0 0 .5px rgba(0,0,0,.25);"></div>
<div class="t" style="left:647.9px;top:208px;font-size:7px;color:#dcdcdc;width:38.4px;text-align:center;font-weight:bold;letter-spacing:-.3px;">mute</div>
<div style="left:647.9px;top:218.2px;width:38.4px;height:10.4px;background:#4d2c2c;border-radius:1.5px;box-shadow:inset 0 0 0 .5px rgba(0,0,0,.25);"></div>
<div class="t" style="left:647.9px;top:219.9px;font-size:7px;color:#dcdcdc;width:38.4px;text-align:center;font-weight:bold;letter-spacing:-.3px;">rec</div>
<div style="left:647.9px;top:230.2px;width:38.4px;height:10.4px;background:#2a4a4c;border-radius:1.5px;box-shadow:inset 0 0 0 .5px rgba(0,0,0,.25);"></div>
<div class="t" style="left:647.9px;top:231.9px;font-size:7px;color:#dcdcdc;width:38.4px;text-align:center;font-weight:bold;letter-spacing:-.3px;">input</div>
<div class="t" style="left:647.9px;top:244.2px;font-size:6.8px;color:#9a9a9a;width:38.4px;text-align:center;">Auto</div>
<div style="left:649.2px;top:263.3px;width:35.6px;height:9.6px;background:#2a2a2a;border-radius:1px;"></div>
<div class="t" style="left:650.3px;top:264.6px;font-size:7.2px;color:#dedede;letter-spacing:-.2px;">Latch</div>
<svg style="left:677.3px;top:267px;" width="4.4" height="2.4" viewBox="0 0 4.4 2.4"><path d="M0 0h4.4l-2.2 2.4z" fill="#5a5a5a"/></svg>
<div style="left:656.9px;top:303px;width:22.1px;height:8.8px;background:#0b3950;border-radius:1px;"></div>
<div class="t" style="left:656.9px;top:303.7px;font-size:8px;color:#3cb4f6;width:22.1px;text-align:center;font-weight:bold;transform:scaleX(1.15);">&lt;36</div>
<div class="t" style="left:648.3px;top:333.3px;font-size:4.4px;color:#666;width:9px;text-align:right;">6</div>
<div class="t" style="left:648.3px;top:344.3px;font-size:4.4px;color:#666;width:9px;text-align:right;">3</div>
<div class="t" style="left:648.3px;top:354px;font-size:4.4px;color:#666;width:9px;text-align:right;">0</div>
<div class="t" style="left:648.3px;top:367.1px;font-size:4.4px;color:#666;width:9px;text-align:right;">6</div>
<div class="t" style="left:648.3px;top:376.8px;font-size:4.4px;color:#666;width:9px;text-align:right;">12</div>
<div class="t" style="left:648.3px;top:388px;font-size:4.4px;color:#666;width:9px;text-align:right;">24</div>
<div class="t" style="left:648.3px;top:397.3px;font-size:4.4px;color:#666;width:9px;text-align:right;">48</div>
<div style="left:677.1px;top:325.8px;width:4.6px;height:3px;background:#0b2f42;"></div>
<div style="left:677.1px;top:330.2px;width:4.6px;height:77.6px;background:#0b2f42;"></div>
<div style="left:677.1px;top:391.3px;width:4.6px;height:16.5px;background:linear-gradient(#4ab0f0,#56c4fa);"></div>
<div style="left:677.1px;top:382.9px;width:4.6px;height:1px;background:#e8c81c;"></div>
<div style="left:660.3px;top:352.1px;width:9.9px;height:22.4px;background:linear-gradient(#d8d8d8,#c4c4c4 46%,#8e8e8e 49%,#b0b0b0 52%,#a8a8a8);border-radius:1.5px;box-shadow:0 0 0 .5px rgba(40,40,40,.6);"></div>
<div style="left:656.3px;top:424.4px;width:22.2px;height:8.6px;background:#0b3950;border-radius:1px;"></div>
<div class="t" style="left:653.3px;top:425.4px;font-size:7px;color:#40b8f8;width:28.2px;text-align:center;font-weight:bold;letter-spacing:-.2px;">-2.00</div>
<div style="left:647.3px;top:446.2px;width:38.6px;height:9.6px;background:#4a2020;box-shadow:inset 0 0 0 .6px #6a3030;"></div>
<div class="t" style="left:648.5px;top:447.4px;font-size:7px;color:#e6e6e6;font-style:italic;letter-spacing:-.3px;">Built-...put 1</div>
<div style="left:647.3px;top:458.4px;width:38.6px;height:9.2px;background:#2a2a2a;"></div>
<div class="t" style="left:648.5px;top:459.5px;font-size:7px;color:#e6e6e6;letter-spacing:-.3px;">Built-...t 1-2</div>
<div style="left:646.2px;top:471.8px;width:42.55px;height:11px;background:#33d83c;"></div>
<div class="t" style="left:646.2px;top:473.7px;font-size:7.2px;color:#0a2a0a;width:42.55px;text-align:center;">Mandolin</div>
<div style="left:687.85px;top:0px;width:1px;height:500px;background:#3a3a3a;"></div>
<div style="left:688.85px;top:0px;width:0.8px;height:500px;background:#525252;"></div>
<div style="left:691.55px;top:9px;width:35px;height:9.2px;background:#606060;"></div>
<svg style="left:719.25px;top:12.4px;" width="5" height="2.8" viewBox="0 0 5 2.8"><path d="M0 0h5l-2.5 2.8z" fill="#161616"/></svg>
<div style="left:692.55px;top:23.5px;width:34.6px;height:9.6px;background:#424242;"></div>
<div style="left:692.55px;top:35.35px;width:34.6px;height:9.6px;background:#424242;"></div>
<div style="left:692.55px;top:47.2px;width:34.6px;height:9.6px;background:#3c8dbd;"></div>
<div class="t" style="left:693.45px;top:48.9px;font-size:6.4px;color:#f4f4f4;letter-spacing:-.25px;">Dyna-Squash</div>
<div style="left:692.55px;top:59.05px;width:34.6px;height:9.6px;background:#424242;"></div>
<div style="left:692.55px;top:70.9px;width:34.6px;height:9.6px;background:#424242;"></div>
<div style="left:692.55px;top:82.75px;width:34.6px;height:9.6px;background:#424242;"></div>
<div style="left:692.55px;top:94.6px;width:34.6px;height:9.6px;background:#424242;"></div>
<div style="left:689.05px;top:103.5px;width:2.4px;height:2.4px;background:#dcd8c4;border-radius:50%;"></div>
<div style="left:689.55px;top:111px;width:40px;height:26.8px;background:#2a2a2a;border-radius:2.5px;"></div>
<svg style="left:0px;top:0px;" width="938.4" height="500" viewBox="0 0 938.4 500"><circle cx="697.35" cy="183" r="3.9" fill="#b25cd2"/><path d="M698.55 181.28A2.1 2.1 0 1 1 696.15 181.28" stroke="#6a1a8a" stroke-width=".9" fill="none"/><path d="M697.35 180.2v2.6" stroke="#6a1a8a" stroke-width=".9"/><circle cx="710.35" cy="183" r="3.9" fill="#3c3c3c" stroke="#747474" stroke-width=".8"/><path d="M711.44 181.44A1.9 1.9 0 1 1 709.26 181.44" stroke="#8a8a8a" stroke-width=".8" fill="none"/><path d="M710.35 180.4v2.4" stroke="#8a8a8a" stroke-width=".8"/><path d="M718.85 181h6M718.85 183h6M718.85 185h6" stroke="#363636" stroke-width=".7"/><circle cx="701.25" cy="256.2" r="3.2" fill="#4e0a0a"/><circle cx="701.25" cy="256.2" r="3.2" fill="none" stroke="#3a2020" stroke-width=".6"/><path d="M714.65 253.2l5 3-5 3z" fill="#22e022"/><path d="M703.83 296.39A9.7 9.7 0 1 1 717.07 296.39" stroke="#0b3950" stroke-width="3.4" fill="none"/><path d="M710.45 279.40A9.9 9.9 0 0 1 719.19 284.65" stroke="#48b8f4" stroke-width="2.6" fill="none"/><defs><linearGradient id="kg1" x1="0" y1="0" x2="0" y2="1"><stop offset="0" stop-color="#5c7c8a"/><stop offset="1" stop-color="#3c5864"/></linearGradient></defs><circle cx="710.45" cy="289.3" r="7.6" fill="url(#kg1)"/><path d="M713.61 288.04L716.95 286.70" stroke="#dfeaf0" stroke-width="1.1"/><path d="M696.85 304.6v5.4l-3.6-2.7z" fill="#2a2a2a"/><path d="M724.25 304.6v5.4l3.6-2.7z" fill="#2a2a2a"/><path d="M707.75 329V414" stroke="#363636" stroke-width="1"/><path d="M693.05 428.6h4M723.45 428.6h4.4M725.65 426.4v4.4" stroke="#262626" stroke-width="1.1"/><path d="M691.25 485.4h4l-2 1.6z" fill="#666"/></svg>
<div style="left:690.45px;top:194.5px;width:38.4px;height:10.4px;background:#4b4a2c;border-radius:1.5px;box-shadow:inset 0 0 0 .5px rgba(0,0,0,.25);"></div>
<div class="t" style="left:690.45px;top:196.2px;font-size:7px;color:#dcdcdc;width:38.4px;text-align:center;font-weight:bold;letter-spacing:-.3px;">solo</div>
<div style="left:690.45px;top:206.3px;width:38.4px;height:10.4px;background:#4b3c30;border-radius:1.5px;box-shadow:inset 0 0 0 .5px rgba(0,0,0,.25);"></div>
<div class="t" style="left:690.45px;top:208px;font-size:7px;color:#dcdcdc;width:38.4px;text-align:center;font-weight:bold;letter-spacing:-.3px;">mute</div>
<div style="left:690.45px;top:218.2px;width:38.4px;height:10.4px;background:#4d2c2c;border-radius:1.5px;box-shadow:inset 0 0 0 .5px rgba(0,0,0,.25);"></div>
<div class="t" style="left:690.45px;top:219.9px;font-size:7px;color:#dcdcdc;width:38.4px;text-align:center;font-weight:bold;letter-spacing:-.3px;">rec</div>
<div style="left:690.45px;top:230.2px;width:38.4px;height:10.4px;background:#2a4a4c;border-radius:1.5px;box-shadow:inset 0 0 0 .5px rgba(0,0,0,.25);"></div>
<div class="t" style="left:690.45px;top:231.9px;font-size:7px;color:#dcdcdc;width:38.4px;text-align:center;font-weight:bold;letter-spacing:-.3px;">input</div>
<div class="t" style="left:690.45px;top:244.2px;font-size:6.8px;color:#9a9a9a;width:38.4px;text-align:center;">Auto</div>
<div style="left:691.75px;top:263.3px;width:35.6px;height:9.6px;background:#2a2a2a;border-radius:1px;"></div>
<div class="t" style="left:692.85px;top:264.6px;font-size:7.2px;color:#dedede;letter-spacing:-.2px;">Latch</div>
<svg style="left:719.85px;top:267px;" width="4.4" height="2.4" viewBox="0 0 4.4 2.4"><path d="M0 0h4.4l-2.2 2.4z" fill="#5a5a5a"/></svg>
<div style="left:699.45px;top:303px;width:22.1px;height:8.8px;background:#0b3950;border-radius:1px;"></div>
<div class="t" style="left:699.45px;top:303.7px;font-size:8px;color:#3cb4f6;width:22.1px;text-align:center;font-weight:bold;transform:scaleX(1.15);">30&gt;</div>
<div class="t" style="left:690.85px;top:333.3px;font-size:4.4px;color:#666;width:9px;text-align:right;">6</div>
<div class="t" style="left:690.85px;top:344.3px;font-size:4.4px;color:#666;width:9px;text-align:right;">3</div>
<div class="t" style="left:690.85px;top:354px;font-size:4.4px;color:#666;width:9px;text-align:right;">0</div>
<div class="t" style="left:690.85px;top:367.1px;font-size:4.4px;color:#666;width:9px;text-align:right;">6</div>
<div class="t" style="left:690.85px;top:376.8px;font-size:4.4px;color:#666;width:9px;text-align:right;">12</div>
<div class="t" style="left:690.85px;top:388px;font-size:4.4px;color:#666;width:9px;text-align:right;">24</div>
<div class="t" style="left:690.85px;top:397.3px;font-size:4.4px;color:#666;width:9px;text-align:right;">48</div>
<div style="left:719.65px;top:325.8px;width:4.6px;height:3px;background:#0b2f42;"></div>
<div style="left:719.65px;top:330.2px;width:4.6px;height:77.6px;background:#0b2f42;"></div>
<div style="left:719.65px;top:377px;width:4.6px;height:30.8px;background:linear-gradient(#4ab0f0,#56c4fa);"></div>
<div style="left:719.65px;top:360.1px;width:4.6px;height:1px;background:#e8c81c;"></div>
<div style="left:702.85px;top:345.8px;width:9.9px;height:22.4px;background:linear-gradient(#d8d8d8,#c4c4c4 46%,#8e8e8e 49%,#b0b0b0 52%,#a8a8a8);border-radius:1.5px;box-shadow:0 0 0 .5px rgba(40,40,40,.6);"></div>
<div style="left:698.85px;top:424.4px;width:22.2px;height:8.6px;background:#0b3950;border-radius:1px;"></div>
<div class="t" style="left:695.85px;top:425.4px;font-size:7px;color:#40b8f8;width:28.2px;text-align:center;font-weight:bold;letter-spacing:-.2px;">0.00</div>
<div style="left:689.85px;top:446.2px;width:38.6px;height:9.6px;background:#4a2020;box-shadow:inset 0 0 0 .6px #6a3030;"></div>
<div class="t" style="left:691.05px;top:447.4px;font-size:7px;color:#e6e6e6;font-style:italic;letter-spacing:-.3px;">Built-...put 1</div>
<div style="left:689.85px;top:458.4px;width:38.6px;height:9.2px;background:#2a2a2a;"></div>
<div class="t" style="left:691.05px;top:459.5px;font-size:7px;color:#e6e6e6;letter-spacing:-.3px;">Built-...t 1-2</div>
<div style="left:688.75px;top:471.8px;width:42.55px;height:11px;background:#3fd2d2;"></div>
<div class="t" style="left:688.75px;top:473.7px;font-size:7.2px;color:#0a3a4a;width:42.55px;text-align:center;">Banjo</div>
<div style="left:730.4px;top:0px;width:1px;height:500px;background:#3a3a3a;"></div>
<div style="left:731.4px;top:0px;width:0.8px;height:500px;background:#525252;"></div>
<div style="left:734.1px;top:9px;width:35px;height:9.2px;background:#606060;"></div>
<svg style="left:761.8px;top:12.4px;" width="5" height="2.8" viewBox="0 0 5 2.8"><path d="M0 0h5l-2.5 2.8z" fill="#161616"/></svg>
<div style="left:735.1px;top:23.5px;width:34.6px;height:9.6px;background:#424242;"></div>
<div style="left:735.1px;top:35.35px;width:34.6px;height:9.6px;background:#424242;"></div>
<div style="left:735.1px;top:47.2px;width:34.6px;height:9.6px;background:#424242;"></div>
<div style="left:735.1px;top:59.05px;width:34.6px;height:9.6px;background:#424242;"></div>
<div style="left:735.1px;top:70.9px;width:34.6px;height:9.6px;background:#3c8dbd;"></div>
<div class="t" style="left:736px;top:72.6px;font-size:6.4px;color:#f4f4f4;letter-spacing:-.25px;">MW FET-76</div>
<div style="left:735.1px;top:82.75px;width:34.6px;height:9.6px;background:#3c8dbd;"></div>
<div class="t" style="left:736px;top:84.45px;font-size:6.4px;color:#f4f4f4;letter-spacing:-.25px;">Dynamics</div>
<div style="left:735.1px;top:94.6px;width:34.6px;height:9.6px;background:#424242;"></div>
<div style="left:731.6px;top:103.5px;width:2.4px;height:2.4px;background:#dcd8c4;border-radius:50%;"></div>
<svg style="left:732.1px;top:111px;" width="40" height="26.8" viewBox="0 0 40 26.8"><rect width="40" height="26.8" rx="2" fill="#050505"/><rect y="17.8" width="40" height="9" fill="#4a4a4a"/><path d="M15 17.9a4.8 4.4 0 0 1 9.600 0z" fill="#5a5a5a"/><path d="M6.4 13.8L4.2 11.2" stroke="#f4f4f4" stroke-width="1"/><path d="M8.0 12.5L6.5 10.4" stroke="#f4f4f4" stroke-width="0.7"/><path d="M9.7 11.5L8.1 8.5" stroke="#f4f4f4" stroke-width="1"/><path d="M11.5 10.6L10.5 8.2" stroke="#f4f4f4" stroke-width="0.7"/><path d="M13.4 9.8L12.4 6.6" stroke="#f4f4f4" stroke-width="1"/><path d="M15.4 9.3L14.8 6.8" stroke="#f4f4f4" stroke-width="0.7"/><path d="M17.4 9.0L17.0 5.6" stroke="#f4f4f4" stroke-width="1"/><path d="M19.4 8.8L19.4 6.2" stroke="#f4f4f4" stroke-width="0.7"/><path d="M21.5 8.9L21.7 5.5" stroke="#f4f4f4" stroke-width="1"/><rect x="2.800" y="9.800" width="2.600" height="2.200" fill="#f0f0f0"/><path d="M6 13.600l1.800-1.200M8.400 12.600l1-1" stroke="#ddd" stroke-width=".7"/><path d="M28.400 6.800l1.800 4.200 3.200-1M32.600 9.400l1.600 3.600 3.200-1.200" stroke="#e01030" stroke-width=".9" fill="none"/><circle cx="36.200" cy="5.600" r="1" fill="#e01030"/><path d="M26.400 5.400l-2.200 9.400" stroke="#f4f4f4" stroke-width="1"/></svg>
<div class="t" style="left:732.1px;top:130.8px;font-size:5.6px;color:#fff;width:40px;text-align:center;font-weight:bold;transform:scaleX(1.48);">FET-76</div>
<div style="left:734.7px;top:142.7px;width:9.4px;height:9.4px;background:radial-gradient(circle at 40% 35%,#d0d0d0,#a4a4a4);border-radius:50%;box-shadow:0 .3px 0 .5px #3a3a3a;"></div>
<div class="t" style="left:749px;top:142.8px;font-size:9px;color:#141414;width:10px;text-align:center;">G</div>
<div style="left:761px;top:142.7px;width:9.4px;height:9.4px;background:radial-gradient(circle at 40% 35%,#d0d0d0,#a4a4a4);border-radius:50%;box-shadow:0 .3px 0 .5px #3a3a3a;"></div>
<div style="left:734.7px;top:154px;width:9.4px;height:9.4px;background:radial-gradient(circle at 40% 35%,#7ab0e4,#5a90c8);border-radius:50%;box-shadow:0 .3px 0 .5px #3a3a3a;"></div>
<div class="t" style="left:749px;top:154.1px;font-size:9px;color:#141414;width:10px;text-align:center;">A</div>
<div style="left:763.4px;top:158.4px;width:4px;height:0.8px;background:#555;"></div>
<div style="left:734.7px;top:165.1px;width:9.4px;height:9.4px;background:radial-gradient(circle at 40% 35%,#f8f8f8,#d4d4d4);border-radius:50%;box-shadow:0 .3px 0 .5px #3a3a3a;"></div>
<div class="t" style="left:749px;top:165.2px;font-size:9px;color:#141414;width:10px;text-align:center;">R</div>
<div style="left:763.4px;top:169.5px;width:4px;height:0.8px;background:#555;"></div>
<svg style="left:0px;top:0px;" width="938.4" height="500" viewBox="0 0 938.4 500"><circle cx="739.90" cy="183" r="4.6" fill="#d552f4"/><path d="M741.10 181.28A2.1 2.1 0 1 1 738.70 181.28" stroke="#6a1a8a" stroke-width=".9" fill="none"/><path d="M739.90 180.2v2.6" stroke="#6a1a8a" stroke-width=".9"/><circle cx="752.90" cy="183" r="3.9" fill="#3c3c3c" stroke="#747474" stroke-width=".8"/><path d="M753.99 181.44A1.9 1.9 0 1 1 751.81 181.44" stroke="#8a8a8a" stroke-width=".8" fill="none"/><path d="M752.90 180.4v2.4" stroke="#8a8a8a" stroke-width=".8"/><path d="M761.40 181h6M761.40 183h6M761.40 185h6" stroke="#363636" stroke-width=".7"/><circle cx="743.80" cy="256.2" r="3.2" fill="#4e0a0a"/><circle cx="743.80" cy="256.2" r="3.2" fill="none" stroke="#3a2020" stroke-width=".6"/><path d="M757.20 253.2l5 3-5 3z" fill="#22e022"/><path d="M746.38 296.39A9.7 9.7 0 1 1 759.62 296.39" stroke="#0b3950" stroke-width="3.4" fill="none"/><defs><linearGradient id="kg2" x1="0" y1="0" x2="0" y2="1"><stop offset="0" stop-color="#5c7c8a"/><stop offset="1" stop-color="#3c5864"/></linearGradient></defs><circle cx="753.00" cy="289.3" r="7.6" fill="url(#kg2)"/><path d="M753.00 285.90L753.00 282.30" stroke="#dfeaf0" stroke-width="1.1"/><path d="M739.40 304.6v5.4l-3.6-2.7z" fill="#2a2a2a"/><path d="M766.80 304.6v5.4l3.6-2.7z" fill="#2a2a2a"/><path d="M750.30 329V414" stroke="#363636" stroke-width="1"/><path d="M735.60 428.6h4M766.00 428.6h4.4M768.20 426.4v4.4" stroke="#262626" stroke-width="1.1"/><path d="M733.80 485.4h4l-2 1.6z" fill="#666"/></svg>
<div style="left:733px;top:194.5px;width:38.4px;height:10.4px;background:#4b4a2c;border-radius:1.5px;box-shadow:inset 0 0 0 .5px rgba(0,0,0,.25);"></div>
<div class="t" style="left:733px;top:196.2px;font-size:7px;color:#dcdcdc;width:38.4px;text-align:center;font-weight:bold;letter-spacing:-.3px;">solo</div>
<div style="left:733px;top:206.3px;width:38.4px;height:10.4px;background:#4b3c30;border-radius:1.5px;box-shadow:inset 0 0 0 .5px rgba(0,0,0,.25);"></div>
<div class="t" style="left:733px;top:208px;font-size:7px;color:#dcdcdc;width:38.4px;text-align:center;font-weight:bold;letter-spacing:-.3px;">mute</div>
<div style="left:733px;top:218.2px;width:38.4px;height:10.4px;background:#4d2c2c;border-radius:1.5px;box-shadow:inset 0 0 0 .5px rgba(0,0,0,.25);"></div>
<div class="t" style="left:733px;top:219.9px;font-size:7px;color:#dcdcdc;width:38.4px;text-align:center;font-weight:bold;letter-spacing:-.3px;">rec</div>
<div style="left:733px;top:230.2px;width:38.4px;height:10.4px;background:#2a4a4c;border-radius:1.5px;box-shadow:inset 0 0 0 .5px rgba(0,0,0,.25);"></div>
<div class="t" style="left:733px;top:231.9px;font-size:7px;color:#dcdcdc;width:38.4px;text-align:center;font-weight:bold;letter-spacing:-.3px;">input</div>
<div class="t" style="left:733px;top:244.2px;font-size:6.8px;color:#9a9a9a;width:38.4px;text-align:center;">Auto</div>
<div style="left:734.3px;top:263.3px;width:35.6px;height:9.6px;background:#2a2a2a;border-radius:1px;"></div>
<div class="t" style="left:735.4px;top:264.6px;font-size:7.2px;color:#dedede;letter-spacing:-.2px;">Latch</div>
<svg style="left:762.4px;top:267px;" width="4.4" height="2.4" viewBox="0 0 4.4 2.4"><path d="M0 0h4.4l-2.2 2.4z" fill="#5a5a5a"/></svg>
<div style="left:742px;top:303px;width:22.1px;height:8.8px;background:#0b3950;border-radius:1px;"></div>
<div class="t" style="left:742px;top:303.7px;font-size:8px;color:#3cb4f6;width:22.1px;text-align:center;font-weight:bold;transform:scaleX(1.15);">0</div>
<div class="t" style="left:733.4px;top:333.3px;font-size:4.4px;color:#666;width:9px;text-align:right;">6</div>
<div class="t" style="left:733.4px;top:344.3px;font-size:4.4px;color:#666;width:9px;text-align:right;">3</div>
<div class="t" style="left:733.4px;top:354px;font-size:4.4px;color:#666;width:9px;text-align:right;">0</div>
<div class="t" style="left:733.4px;top:367.1px;font-size:4.4px;color:#666;width:9px;text-align:right;">6</div>
<div class="t" style="left:733.4px;top:376.8px;font-size:4.4px;color:#666;width:9px;text-align:right;">12</div>
<div class="t" style="left:733.4px;top:388px;font-size:4.4px;color:#666;width:9px;text-align:right;">24</div>
<div class="t" style="left:733.4px;top:397.3px;font-size:4.4px;color:#666;width:9px;text-align:right;">48</div>
<div style="left:762.2px;top:325.8px;width:4.6px;height:3px;background:#0b2f42;"></div>
<div style="left:762.2px;top:330.2px;width:4.6px;height:77.6px;background:#0b2f42;"></div>
<div style="left:762.2px;top:369.3px;width:4.6px;height:38.5px;background:linear-gradient(#4ab0f0,#56c4fa);"></div>
<div style="left:762.2px;top:339.7px;width:4.6px;height:1px;background:#e8c81c;"></div>
<div style="left:745.4px;top:352px;width:9.9px;height:22.4px;background:linear-gradient(#d8d8d8,#c4c4c4 46%,#8e8e8e 49%,#b0b0b0 52%,#a8a8a8);border-radius:1.5px;box-shadow:0 0 0 .5px rgba(40,40,40,.6);"></div>
<div style="left:741.4px;top:424.4px;width:22.2px;height:8.6px;background:#0b3950;border-radius:1px;"></div>
<div class="t" style="left:738.4px;top:425.4px;font-size:7px;color:#40b8f8;width:28.2px;text-align:center;font-weight:bold;letter-spacing:-.2px;">-2.20</div>
<div style="left:732.4px;top:446.2px;width:38.6px;height:9.6px;background:#4a2020;box-shadow:inset 0 0 0 .6px #6a3030;"></div>
<div class="t" style="left:733.6px;top:447.4px;font-size:7px;color:#e6e6e6;font-style:italic;letter-spacing:-.3px;">Built-...put 1</div>
<div style="left:732.4px;top:458.4px;width:38.6px;height:9.2px;background:#2a2a2a;"></div>
<div class="t" style="left:733.6px;top:459.5px;font-size:7px;color:#e6e6e6;letter-spacing:-.3px;">Built-...t 1-2</div>
<div style="left:731.3px;top:471.8px;width:42.55px;height:11px;background:#2b80ea;"></div>
<div class="t" style="left:731.3px;top:473.7px;font-size:7.2px;color:#fff;width:42.55px;text-align:center;text-shadow:0 0 .6px #fff;">Fiddle</div>
<div style="left:772.95px;top:0px;width:1px;height:500px;background:#3a3a3a;"></div>
<div style="left:773.95px;top:0px;width:0.8px;height:500px;background:#525252;"></div>
<div style="left:776.65px;top:9px;width:35px;height:9.2px;background:#606060;"></div>
<svg style="left:804.35px;top:12.4px;" width="5" height="2.8" viewBox="0 0 5 2.8"><path d="M0 0h5l-2.5 2.8z" fill="#161616"/></svg>
<div style="left:777.65px;top:23.5px;width:34.6px;height:9.6px;background:#3c8dbd;"></div>
<div class="t" style="left:778.55px;top:25.2px;font-size:6.4px;color:#f4f4f4;letter-spacing:-.25px;">Tuner</div>
<div style="left:777.65px;top:35.35px;width:34.6px;height:9.6px;background:#3c8dbd;"></div>
<div class="t" style="left:778.55px;top:37.05px;font-size:6.4px;color:#f4f4f4;letter-spacing:-.25px;">Dyna-Squash</div>
<div style="left:777.65px;top:47.2px;width:34.6px;height:9.6px;background:#424242;"></div>
<div style="left:777.65px;top:59.05px;width:34.6px;height:9.6px;background:#3c8dbd;"></div>
<div class="t" style="left:778.55px;top:60.75px;font-size:6.4px;color:#f4f4f4;letter-spacing:-.25px;">ACE 30</div>
<div style="left:777.65px;top:70.9px;width:34.6px;height:9.6px;background:#3c8dbd;"></div>
<div class="t" style="left:778.55px;top:72.6px;font-size:6.4px;color:#f4f4f4;letter-spacing:-.25px;">Live Room G</div>
<div style="left:777.65px;top:82.75px;width:34.6px;height:9.6px;background:#424242;"></div>
<div style="left:777.65px;top:94.6px;width:34.6px;height:9.6px;background:#424242;"></div>
<div style="left:774.15px;top:103.5px;width:2.4px;height:2.4px;background:#dcd8c4;border-radius:50%;"></div>
<div style="left:774.65px;top:111px;width:40px;height:26.8px;background:#2a2a2a;border-radius:2.5px;"></div>
<svg style="left:0px;top:0px;" width="938.4" height="500" viewBox="0 0 938.4 500"><circle cx="782.45" cy="183" r="3.9" fill="#b25cd2"/><path d="M783.65 181.28A2.1 2.1 0 1 1 781.25 181.28" stroke="#6a1a8a" stroke-width=".9" fill="none"/><path d="M782.45 180.2v2.6" stroke="#6a1a8a" stroke-width=".9"/><circle cx="795.45" cy="183" r="3.9" fill="#3c3c3c" stroke="#747474" stroke-width=".8"/><path d="M796.54 181.44A1.9 1.9 0 1 1 794.36 181.44" stroke="#8a8a8a" stroke-width=".8" fill="none"/><path d="M795.45 180.4v2.4" stroke="#8a8a8a" stroke-width=".8"/><path d="M803.95 181h6M803.95 183h6M803.95 185h6" stroke="#363636" stroke-width=".7"/><circle cx="786.35" cy="256.2" r="3.2" fill="#4e0a0a"/><circle cx="786.35" cy="256.2" r="3.2" fill="none" stroke="#3a2020" stroke-width=".6"/><path d="M799.75 253.2l5 3-5 3z" fill="#22e022"/><path d="M788.93 296.39A9.7 9.7 0 1 1 802.17 296.39" stroke="#0b3950" stroke-width="3.4" fill="none"/><defs><linearGradient id="kg3" x1="0" y1="0" x2="0" y2="1"><stop offset="0" stop-color="#5c7c8a"/><stop offset="1" stop-color="#3c5864"/></linearGradient></defs><circle cx="795.55" cy="289.3" r="7.6" fill="url(#kg3)"/><path d="M795.55 285.90L795.55 282.30" stroke="#dfeaf0" stroke-width="1.1"/><path d="M781.95 304.6v5.4l-3.6-2.7z" fill="#2a2a2a"/><path d="M809.35 304.6v5.4l3.6-2.7z" fill="#2a2a2a"/><path d="M792.85 329V414" stroke="#363636" stroke-width="1"/><path d="M792.85 357.2V414" stroke="#6a2222" stroke-width="1.2"/><path d="M778.15 428.6h4M808.55 428.6h4.4M810.75 426.4v4.4" stroke="#262626" stroke-width="1.1"/><path d="M776.35 485.4h4l-2 1.6z" fill="#666"/></svg>
<div style="left:775.55px;top:194.5px;width:38.4px;height:10.4px;background:#4b4a2c;border-radius:1.5px;box-shadow:inset 0 0 0 .5px rgba(0,0,0,.25);"></div>
<div class="t" style="left:775.55px;top:196.2px;font-size:7px;color:#dcdcdc;width:38.4px;text-align:center;font-weight:bold;letter-spacing:-.3px;">solo</div>
<div style="left:775.55px;top:206.3px;width:38.4px;height:10.4px;background:#4b3c30;border-radius:1.5px;box-shadow:inset 0 0 0 .5px rgba(0,0,0,.25);"></div>
<div class="t" style="left:775.55px;top:208px;font-size:7px;color:#dcdcdc;width:38.4px;text-align:center;font-weight:bold;letter-spacing:-.3px;">mute</div>
<div style="left:775.55px;top:218.2px;width:38.4px;height:10.4px;background:#f04a48;border-radius:1.5px;"></div>
<div class="t" style="left:775.55px;top:219.9px;font-size:7px;color:#5a1010;width:38.4px;text-align:center;font-weight:bold;letter-spacing:-.3px;">rec</div>
<div style="left:775.55px;top:230.2px;width:38.4px;height:10.4px;background:#25e6e6;border-radius:1.5px;"></div>
<div class="t" style="left:775.55px;top:231.9px;font-size:7px;color:#0a4a4a;width:38.4px;text-align:center;font-weight:bold;letter-spacing:-.3px;">input</div>
<div class="t" style="left:775.55px;top:244.2px;font-size:6.8px;color:#9a9a9a;width:38.4px;text-align:center;">Auto</div>
<div style="left:776.85px;top:263.3px;width:35.6px;height:9.6px;background:#2a2a2a;border-radius:1px;"></div>
<div class="t" style="left:777.95px;top:264.6px;font-size:7.2px;color:#dedede;letter-spacing:-.2px;">Latch</div>
<svg style="left:804.95px;top:267px;" width="4.4" height="2.4" viewBox="0 0 4.4 2.4"><path d="M0 0h4.4l-2.2 2.4z" fill="#5a5a5a"/></svg>
<div style="left:784.55px;top:303px;width:22.1px;height:8.8px;background:#0b3950;border-radius:1px;"></div>
<div class="t" style="left:784.55px;top:303.7px;font-size:8px;color:#3cb4f6;width:22.1px;text-align:center;font-weight:bold;transform:scaleX(1.15);">0</div>
<div class="t" style="left:775.95px;top:333.3px;font-size:4.4px;color:#666;width:9px;text-align:right;">6</div>
<div class="t" style="left:775.95px;top:344.3px;font-size:4.4px;color:#666;width:9px;text-align:right;">3</div>
<div class="t" style="left:775.95px;top:354px;font-size:4.4px;color:#666;width:9px;text-align:right;">0</div>
<div class="t" style="left:775.95px;top:367.1px;font-size:4.4px;color:#666;width:9px;text-align:right;">6</div>
<div class="t" style="left:775.95px;top:376.8px;font-size:4.4px;color:#666;width:9px;text-align:right;">12</div>
<div class="t" style="left:775.95px;top:388px;font-size:4.4px;color:#666;width:9px;text-align:right;">24</div>
<div class="t" style="left:775.95px;top:397.3px;font-size:4.4px;color:#666;width:9px;text-align:right;">48</div>
<div style="left:801.55px;top:325.8px;width:4px;height:3px;background:#0b2f42;"></div>
<div style="left:801.55px;top:330.2px;width:4px;height:77.6px;background:#0b2f42;"></div>
<div style="left:801.55px;top:367px;width:4px;height:40.8px;background:linear-gradient(#4ab0f0,#56c4fa);"></div>
<div style="left:801.55px;top:355.7px;width:4px;height:1px;background:#e8c81c;"></div>
<div style="left:807.85px;top:325.8px;width:4px;height:3px;background:#0b2f42;"></div>
<div style="left:807.85px;top:330.2px;width:4px;height:77.6px;background:#0b2f42;"></div>
<div style="left:807.85px;top:365px;width:4px;height:42.8px;background:linear-gradient(#4ab0f0,#56c4fa);"></div>
<div style="left:807.85px;top:351.8px;width:4px;height:1px;background:#e8c81c;"></div>
<div style="left:787.95px;top:346px;width:9.9px;height:22.4px;background:linear-gradient(#c89c9c,#b88888 48%,#a87878 52%,#c09292);border-radius:1.5px;box-shadow:0 0 0 .5px rgba(40,40,40,.6);"></div>
<div style="left:783.95px;top:424.4px;width:22.2px;height:8.6px;background:#0b3950;border-radius:1px;"></div>
<div class="t" style="left:780.95px;top:425.4px;font-size:7px;color:#40b8f8;width:28.2px;text-align:center;font-weight:bold;letter-spacing:-.2px;">0.00</div>
<div style="left:774.95px;top:446.2px;width:38.6px;height:9.6px;background:#2c2c2c;"></div>
<div class="t" style="left:776.35px;top:447.4px;font-size:7.2px;color:#e0e0e0;">bus 1</div>
<svg style="left:805.95px;top:450px;" width="4.4" height="2.4" viewBox="0 0 4.4 2.4"><path d="M0 0h4.4l-2.2 2.4z" fill="#5a5a5a"/></svg>
<div style="left:774.95px;top:458.4px;width:38.6px;height:9.2px;background:#2a2a2a;"></div>
<div class="t" style="left:776.15px;top:459.5px;font-size:7px;color:#e6e6e6;letter-spacing:-.3px;">Built-...t 1-2</div>
<div style="left:773.85px;top:471.8px;width:42.55px;height:11px;background:#2a2cdc;"></div>
<div class="t" style="left:773.85px;top:473.7px;font-size:7.2px;color:#fff;width:42.55px;text-align:center;text-shadow:0 0 .6px #fff;">Lead Gtr</div>
<div style="left:815.5px;top:0px;width:1px;height:500px;background:#3a3a3a;"></div>
<div style="left:816.5px;top:0px;width:0.8px;height:500px;background:#525252;"></div>
<div style="left:819.2px;top:9px;width:35px;height:9.2px;background:#606060;"></div>
<svg style="left:846.9px;top:12.4px;" width="5" height="2.8" viewBox="0 0 5 2.8"><path d="M0 0h5l-2.5 2.8z" fill="#161616"/></svg>
<div style="left:820.2px;top:23.5px;width:34.6px;height:9.6px;background:#424242;"></div>
<div style="left:820.2px;top:35.35px;width:34.6px;height:9.6px;background:#424242;"></div>
<div style="left:820.2px;top:47.2px;width:34.6px;height:9.6px;background:#3c8dbd;"></div>
<div class="t" style="left:821.1px;top:48.9px;font-size:6.4px;color:#f4f4f4;letter-spacing:-.25px;">ProVerb</div>
<div style="left:820.2px;top:59.05px;width:34.6px;height:9.6px;background:#424242;"></div>
<div style="left:820.2px;top:70.9px;width:34.6px;height:9.6px;background:#424242;"></div>
<div style="left:820.2px;top:82.75px;width:34.6px;height:9.6px;background:#3c8dbd;"></div>
<div class="t" style="left:821.1px;top:84.45px;font-size:6.4px;color:#f4f4f4;letter-spacing:-.25px;">MW Leveler</div>
<div style="left:820.2px;top:94.6px;width:34.6px;height:9.6px;background:#424242;"></div>
<div style="left:816.7px;top:103.5px;width:2.4px;height:2.4px;background:#dcd8c4;border-radius:50%;"></div>
<svg style="left:817.2px;top:111px;" width="40" height="26.8" viewBox="0 0 40 26.8"><rect width="40" height="26.8" rx="2" fill="#050505"/><rect y="17.8" width="40" height="9" fill="#4a4a4a"/><path d="M15 17.9a4.8 4.4 0 0 1 9.600 0z" fill="#5a5a5a"/><path d="M6.4 13.8L4.2 11.2" stroke="#f4f4f4" stroke-width="1"/><path d="M8.0 12.5L6.5 10.4" stroke="#f4f4f4" stroke-width="0.7"/><path d="M9.7 11.5L8.1 8.5" stroke="#f4f4f4" stroke-width="1"/><path d="M11.5 10.6L10.5 8.2" stroke="#f4f4f4" stroke-width="0.7"/><path d="M13.4 9.8L12.4 6.6" stroke="#f4f4f4" stroke-width="1"/><path d="M15.4 9.3L14.8 6.8" stroke="#f4f4f4" stroke-width="0.7"/><path d="M17.4 9.0L17.0 5.6" stroke="#f4f4f4" stroke-width="1"/><path d="M19.4 8.8L19.4 6.2" stroke="#f4f4f4" stroke-width="0.7"/><path d="M21.5 8.9L21.7 5.5" stroke="#f4f4f4" stroke-width="1"/><rect x="2.800" y="9.800" width="2.600" height="2.200" fill="#f0f0f0"/><path d="M6 13.600l1.800-1.200M8.400 12.600l1-1" stroke="#ddd" stroke-width=".7"/><path d="M28.400 6.800l1.800 4.200 3.200-1M32.600 9.400l1.600 3.600 3.200-1.200" stroke="#e01030" stroke-width=".9" fill="none"/><circle cx="36.200" cy="5.600" r="1" fill="#e01030"/><path d="M26.400 5.400l-2.200 9.400" stroke="#f4f4f4" stroke-width="1"/></svg>
<div class="t" style="left:817.2px;top:130.8px;font-size:5.6px;color:#fff;width:40px;text-align:center;font-weight:bold;transform:scaleX(1.33);">LEVELER</div>
<div style="left:819.8px;top:142.7px;width:9.4px;height:9.4px;background:radial-gradient(circle at 40% 35%,#d0d0d0,#a4a4a4);border-radius:50%;box-shadow:0 .3px 0 .5px #3a3a3a;"></div>
<div class="t" style="left:834.1px;top:142.8px;font-size:9px;color:#141414;width:10px;text-align:center;">G</div>
<div style="left:848.5px;top:147.1px;width:4px;height:0.8px;background:#555;"></div>
<div style="left:819.8px;top:154px;width:9.4px;height:9.4px;background:radial-gradient(circle at 40% 35%,#7ab0e4,#5a90c8);border-radius:50%;box-shadow:0 .3px 0 .5px #3a3a3a;"></div>
<div class="t" style="left:834.1px;top:154.1px;font-size:9px;color:#141414;width:10px;text-align:center;">M</div>
<div style="left:848.5px;top:158.4px;width:4px;height:0.8px;background:#555;"></div>
<div style="left:819.8px;top:165.1px;width:9.4px;height:9.4px;background:radial-gradient(circle at 40% 35%,#f8f8f8,#d4d4d4);border-radius:50%;box-shadow:0 .3px 0 .5px #3a3a3a;"></div>
<div class="t" style="left:834.1px;top:165.2px;font-size:9px;color:#141414;width:10px;text-align:center;">R</div>
<div style="left:848.5px;top:169.5px;width:4px;height:0.8px;background:#555;"></div>
<svg style="left:0px;top:0px;" width="938.4" height="500" viewBox="0 0 938.4 500"><circle cx="825.00" cy="183" r="4.6" fill="#d552f4"/><path d="M826.20 181.28A2.1 2.1 0 1 1 823.80 181.28" stroke="#6a1a8a" stroke-width=".9" fill="none"/><path d="M825.00 180.2v2.6" stroke="#6a1a8a" stroke-width=".9"/><circle cx="838.00" cy="183" r="3.9" fill="#3c3c3c" stroke="#747474" stroke-width=".8"/><path d="M839.09 181.44A1.9 1.9 0 1 1 836.91 181.44" stroke="#8a8a8a" stroke-width=".8" fill="none"/><path d="M838.00 180.4v2.4" stroke="#8a8a8a" stroke-width=".8"/><path d="M846.50 181h6M846.50 183h6M846.50 185h6" stroke="#363636" stroke-width=".7"/><circle cx="828.90" cy="256.2" r="3.2" fill="#4e0a0a"/><circle cx="828.90" cy="256.2" r="3.2" fill="none" stroke="#3a2020" stroke-width=".6"/><path d="M842.30 253.2l5 3-5 3z" fill="#22e022"/><path d="M831.48 296.39A9.7 9.7 0 1 1 844.72 296.39" stroke="#0b3950" stroke-width="3.4" fill="none"/><defs><linearGradient id="kg4" x1="0" y1="0" x2="0" y2="1"><stop offset="0" stop-color="#5c7c8a"/><stop offset="1" stop-color="#3c5864"/></linearGradient></defs><circle cx="838.10" cy="289.3" r="7.6" fill="url(#kg4)"/><path d="M838.10 285.90L838.10 282.30" stroke="#dfeaf0" stroke-width="1.1"/><path d="M824.50 304.6v5.4l-3.6-2.7z" fill="#2a2a2a"/><path d="M851.90 304.6v5.4l3.6-2.7z" fill="#2a2a2a"/><path d="M835.40 329V414" stroke="#363636" stroke-width="1"/><path d="M820.70 428.6h4M851.10 428.6h4.4M853.30 426.4v4.4" stroke="#262626" stroke-width="1.1"/><path d="M818.90 485.4h4l-2 1.6z" fill="#666"/></svg>
<div style="left:818.1px;top:194.5px;width:38.4px;height:10.4px;background:#4b4a2c;border-radius:1.5px;box-shadow:inset 0 0 0 .5px rgba(0,0,0,.25);"></div>
<div class="t" style="left:818.1px;top:196.2px;font-size:7px;color:#dcdcdc;width:38.4px;text-align:center;font-weight:bold;letter-spacing:-.3px;">solo</div>
<div style="left:818.1px;top:206.3px;width:38.4px;height:10.4px;background:#4b3c30;border-radius:1.5px;box-shadow:inset 0 0 0 .5px rgba(0,0,0,.25);"></div>
<div class="t" style="left:818.1px;top:208px;font-size:7px;color:#dcdcdc;width:38.4px;text-align:center;font-weight:bold;letter-spacing:-.3px;">mute</div>
<div style="left:818.1px;top:218.2px;width:38.4px;height:10.4px;background:#4d2c2c;border-radius:1.5px;box-shadow:inset 0 0 0 .5px rgba(0,0,0,.25);"></div>
<div class="t" style="left:818.1px;top:219.9px;font-size:7px;color:#dcdcdc;width:38.4px;text-align:center;font-weight:bold;letter-spacing:-.3px;">rec</div>
<div style="left:818.1px;top:230.2px;width:38.4px;height:10.4px;background:#2a4a4c;border-radius:1.5px;box-shadow:inset 0 0 0 .5px rgba(0,0,0,.25);"></div>
<div class="t" style="left:818.1px;top:231.9px;font-size:7px;color:#dcdcdc;width:38.4px;text-align:center;font-weight:bold;letter-spacing:-.3px;">input</div>
<div class="t" style="left:818.1px;top:244.2px;font-size:6.8px;color:#9a9a9a;width:38.4px;text-align:center;">Auto</div>
<div style="left:819.4px;top:263.3px;width:35.6px;height:9.6px;background:#2a2a2a;border-radius:1px;"></div>
<div class="t" style="left:820.5px;top:264.6px;font-size:7.2px;color:#dedede;letter-spacing:-.2px;">Latch</div>
<svg style="left:847.5px;top:267px;" width="4.4" height="2.4" viewBox="0 0 4.4 2.4"><path d="M0 0h4.4l-2.2 2.4z" fill="#5a5a5a"/></svg>
<div style="left:827.1px;top:303px;width:22.1px;height:8.8px;background:#0b3950;border-radius:1px;"></div>
<div class="t" style="left:827.1px;top:303.7px;font-size:8px;color:#3cb4f6;width:22.1px;text-align:center;font-weight:bold;transform:scaleX(1.15);">0</div>
<div class="t" style="left:818.5px;top:333.3px;font-size:4.4px;color:#666;width:9px;text-align:right;">6</div>
<div class="t" style="left:818.5px;top:344.3px;font-size:4.4px;color:#666;width:9px;text-align:right;">3</div>
<div class="t" style="left:818.5px;top:354px;font-size:4.4px;color:#666;width:9px;text-align:right;">0</div>
<div class="t" style="left:818.5px;top:367.1px;font-size:4.4px;color:#666;width:9px;text-align:right;">6</div>
<div class="t" style="left:818.5px;top:376.8px;font-size:4.4px;color:#666;width:9px;text-align:right;">12</div>
<div class="t" style="left:818.5px;top:388px;font-size:4.4px;color:#666;width:9px;text-align:right;">24</div>
<div class="t" style="left:818.5px;top:397.3px;font-size:4.4px;color:#666;width:9px;text-align:right;">48</div>
<div style="left:847.3px;top:325.8px;width:4.6px;height:3px;background:#0b2f42;"></div>
<div style="left:847.3px;top:330.2px;width:4.6px;height:77.6px;background:#0b2f42;"></div>
<div style="left:847.3px;top:396.4px;width:4.6px;height:11.4px;background:linear-gradient(#4ab0f0,#56c4fa);"></div>
<div style="left:847.3px;top:374.5px;width:4.6px;height:1px;background:#e8c81c;"></div>
<div style="left:830.5px;top:361.3px;width:9.9px;height:22.4px;background:linear-gradient(#d8d8d8,#c4c4c4 46%,#8e8e8e 49%,#b0b0b0 52%,#a8a8a8);border-radius:1.5px;box-shadow:0 0 0 .5px rgba(40,40,40,.6);"></div>
<div style="left:826.5px;top:424.4px;width:22.2px;height:8.6px;background:#0b3950;border-radius:1px;"></div>
<div class="t" style="left:823.5px;top:425.4px;font-size:7px;color:#40b8f8;width:28.2px;text-align:center;font-weight:bold;letter-spacing:-.2px;">-6.50</div>
<div style="left:817.5px;top:446.2px;width:38.6px;height:9.6px;background:#4a2020;box-shadow:inset 0 0 0 .6px #6a3030;"></div>
<div class="t" style="left:818.7px;top:447.4px;font-size:7px;color:#e6e6e6;font-style:italic;letter-spacing:-.3px;">Built-...put 1</div>
<div style="left:817.5px;top:458.4px;width:38.6px;height:9.2px;background:#2a2a2a;"></div>
<div class="t" style="left:818.7px;top:459.5px;font-size:7px;color:#e6e6e6;letter-spacing:-.3px;">Built-...t 1-2</div>
<div style="left:816.4px;top:471.8px;width:42.55px;height:11px;background:#8c2de2;"></div>
<div class="t" style="left:816.4px;top:473.7px;font-size:7.2px;color:#fff;width:42.55px;text-align:center;text-shadow:0 0 .6px #fff;">Snare</div>
<div style="left:858.05px;top:0px;width:1px;height:500px;background:#3a3a3a;"></div>
<div style="left:859.05px;top:0px;width:0.8px;height:500px;background:#525252;"></div>
<div style="left:861.75px;top:9px;width:35px;height:9.2px;background:#606060;"></div>
<svg style="left:889.45px;top:12.4px;" width="5" height="2.8" viewBox="0 0 5 2.8"><path d="M0 0h5l-2.5 2.8z" fill="#161616"/></svg>
<div style="left:862.75px;top:23.5px;width:34.6px;height:9.6px;background:#424242;"></div>
<div style="left:862.75px;top:35.35px;width:34.6px;height:9.6px;background:#424242;"></div>
<div style="left:862.75px;top:47.2px;width:34.6px;height:9.6px;background:#424242;"></div>
<div style="left:862.75px;top:59.05px;width:34.6px;height:9.6px;background:#424242;"></div>
<div style="left:862.75px;top:70.9px;width:34.6px;height:9.6px;background:#424242;"></div>
<div style="left:862.75px;top:82.75px;width:34.6px;height:9.6px;background:#3c8dbd;"></div>
<div class="t" style="left:863.65px;top:84.45px;font-size:6.4px;color:#f4f4f4;letter-spacing:-.25px;">MW Leveler</div>
<div style="left:862.75px;top:94.6px;width:34.6px;height:9.6px;background:#424242;"></div>
<div style="left:859.25px;top:103.5px;width:2.4px;height:2.4px;background:#dcd8c4;border-radius:50%;"></div>
<svg style="left:859.75px;top:111px;" width="40" height="26.8" viewBox="0 0 40 26.8"><rect width="40" height="26.8" rx="2" fill="#050505"/><rect y="17.8" width="40" height="9" fill="#4a4a4a"/><path d="M15 17.9a4.8 4.4 0 0 1 9.600 0z" fill="#5a5a5a"/><path d="M6.4 13.8L4.2 11.2" stroke="#f4f4f4" stroke-width="1"/><path d="M8.0 12.5L6.5 10.4" stroke="#f4f4f4" stroke-width="0.7"/><path d="M9.7 11.5L8.1 8.5" stroke="#f4f4f4" stroke-width="1"/><path d="M11.5 10.6L10.5 8.2" stroke="#f4f4f4" stroke-width="0.7"/><path d="M13.4 9.8L12.4 6.6" stroke="#f4f4f4" stroke-width="1"/><path d="M15.4 9.3L14.8 6.8" stroke="#f4f4f4" stroke-width="0.7"/><path d="M17.4 9.0L17.0 5.6" stroke="#f4f4f4" stroke-width="1"/><path d="M19.4 8.8L19.4 6.2" stroke="#f4f4f4" stroke-width="0.7"/><path d="M21.5 8.9L21.7 5.5" stroke="#f4f4f4" stroke-width="1"/><rect x="2.800" y="9.800" width="2.600" height="2.200" fill="#f0f0f0"/><path d="M6 13.600l1.800-1.200M8.400 12.600l1-1" stroke="#ddd" stroke-width=".7"/><path d="M28.400 6.800l1.800 4.200 3.200-1M32.600 9.400l1.600 3.600 3.200-1.200" stroke="#e01030" stroke-width=".9" fill="none"/><circle cx="36.200" cy="5.600" r="1" fill="#e01030"/><path d="M26.400 5.400l-2.200 9.400" stroke="#f4f4f4" stroke-width="1"/></svg>
<div class="t" style="left:859.75px;top:130.8px;font-size:5.6px;color:#fff;width:40px;text-align:center;font-weight:bold;transform:scaleX(1.33);">LEVELER</div>
<div style="left:862.35px;top:142.7px;width:9.4px;height:9.4px;background:radial-gradient(circle at 40% 35%,#d0d0d0,#a4a4a4);border-radius:50%;box-shadow:0 .3px 0 .5px #3a3a3a;"></div>
<div class="t" style="left:876.65px;top:142.8px;font-size:9px;color:#141414;width:10px;text-align:center;">G</div>
<div style="left:891.05px;top:147.1px;width:4px;height:0.8px;background:#555;"></div>
<div style="left:862.35px;top:154px;width:9.4px;height:9.4px;background:radial-gradient(circle at 40% 35%,#7ab0e4,#5a90c8);border-radius:50%;box-shadow:0 .3px 0 .5px #3a3a3a;"></div>
<div class="t" style="left:876.65px;top:154.1px;font-size:9px;color:#141414;width:10px;text-align:center;">M</div>
<div style="left:891.05px;top:158.4px;width:4px;height:0.8px;background:#555;"></div>
<div style="left:862.35px;top:165.1px;width:9.4px;height:9.4px;background:radial-gradient(circle at 40% 35%,#f8f8f8,#d4d4d4);border-radius:50%;box-shadow:0 .3px 0 .5px #3a3a3a;"></div>
<div class="t" style="left:876.65px;top:165.2px;font-size:9px;color:#141414;width:10px;text-align:center;">R</div>
<div style="left:891.05px;top:169.5px;width:4px;height:0.8px;background:#555;"></div>
<svg style="left:0px;top:0px;" width="938.4" height="500" viewBox="0 0 938.4 500"><circle cx="867.55" cy="183" r="4.6" fill="#d552f4"/><path d="M868.75 181.28A2.1 2.1 0 1 1 866.35 181.28" stroke="#6a1a8a" stroke-width=".9" fill="none"/><path d="M867.55 180.2v2.6" stroke="#6a1a8a" stroke-width=".9"/><circle cx="880.55" cy="183" r="3.9" fill="#3c3c3c" stroke="#747474" stroke-width=".8"/><path d="M881.64 181.44A1.9 1.9 0 1 1 879.46 181.44" stroke="#8a8a8a" stroke-width=".8" fill="none"/><path d="M880.55 180.4v2.4" stroke="#8a8a8a" stroke-width=".8"/><path d="M889.05 181h6M889.05 183h6M889.05 185h6" stroke="#363636" stroke-width=".7"/><circle cx="871.45" cy="256.2" r="3.2" fill="#4e0a0a"/><circle cx="871.45" cy="256.2" r="3.2" fill="none" stroke="#3a2020" stroke-width=".6"/><path d="M884.85 253.2l5 3-5 3z" fill="#22e022"/><path d="M874.03 296.39A9.7 9.7 0 1 1 887.27 296.39" stroke="#0b3950" stroke-width="3.4" fill="none"/><defs><linearGradient id="kg5" x1="0" y1="0" x2="0" y2="1"><stop offset="0" stop-color="#5c7c8a"/><stop offset="1" stop-color="#3c5864"/></linearGradient></defs><circle cx="880.65" cy="289.3" r="7.6" fill="url(#kg5)"/><path d="M880.65 285.90L880.65 282.30" stroke="#dfeaf0" stroke-width="1.1"/><path d="M867.05 304.6v5.4l-3.6-2.7z" fill="#2a2a2a"/><path d="M894.45 304.6v5.4l3.6-2.7z" fill="#2a2a2a"/><path d="M877.95 329V414" stroke="#363636" stroke-width="1"/><path d="M863.25 428.6h4M893.65 428.6h4.4M895.85 426.4v4.4" stroke="#262626" stroke-width="1.1"/><path d="M861.45 485.4h4l-2 1.6z" fill="#666"/></svg>
<div style="left:860.65px;top:194.5px;width:38.4px;height:10.4px;background:#4b4a2c;border-radius:1.5px;box-shadow:inset 0 0 0 .5px rgba(0,0,0,.25);"></div>
<div class="t" style="left:860.65px;top:196.2px;font-size:7px;color:#dcdcdc;width:38.4px;text-align:center;font-weight:bold;letter-spacing:-.3px;">solo</div>
<div style="left:860.65px;top:206.3px;width:38.4px;height:10.4px;background:#4b3c30;border-radius:1.5px;box-shadow:inset 0 0 0 .5px rgba(0,0,0,.25);"></div>
<div class="t" style="left:860.65px;top:208px;font-size:7px;color:#dcdcdc;width:38.4px;text-align:center;font-weight:bold;letter-spacing:-.3px;">mute</div>
<div style="left:860.65px;top:218.2px;width:38.4px;height:10.4px;background:#4d2c2c;border-radius:1.5px;box-shadow:inset 0 0 0 .5px rgba(0,0,0,.25);"></div>
<div class="t" style="left:860.65px;top:219.9px;font-size:7px;color:#dcdcdc;width:38.4px;text-align:center;font-weight:bold;letter-spacing:-.3px;">rec</div>
<div style="left:860.65px;top:230.2px;width:38.4px;height:10.4px;background:#2a4a4c;border-radius:1.5px;box-shadow:inset 0 0 0 .5px rgba(0,0,0,.25);"></div>
<div class="t" style="left:860.65px;top:231.9px;font-size:7px;color:#dcdcdc;width:38.4px;text-align:center;font-weight:bold;letter-spacing:-.3px;">input</div>
<div class="t" style="left:860.65px;top:244.2px;font-size:6.8px;color:#9a9a9a;width:38.4px;text-align:center;">Auto</div>
<div style="left:861.95px;top:263.3px;width:35.6px;height:9.6px;background:#2a2a2a;border-radius:1px;"></div>
<div class="t" style="left:863.05px;top:264.6px;font-size:7.2px;color:#dedede;letter-spacing:-.2px;">Latch</div>
<svg style="left:890.05px;top:267px;" width="4.4" height="2.4" viewBox="0 0 4.4 2.4"><path d="M0 0h4.4l-2.2 2.4z" fill="#5a5a5a"/></svg>
<div style="left:869.65px;top:303px;width:22.1px;height:8.8px;background:#0b3950;border-radius:1px;"></div>
<div class="t" style="left:869.65px;top:303.7px;font-size:8px;color:#3cb4f6;width:22.1px;text-align:center;font-weight:bold;transform:scaleX(1.15);">0</div>
<div class="t" style="left:861.05px;top:333.3px;font-size:4.4px;color:#666;width:9px;text-align:right;">6</div>
<div class="t" style="left:861.05px;top:344.3px;font-size:4.4px;color:#666;width:9px;text-align:right;">3</div>
<div class="t" style="left:861.05px;top:354px;font-size:4.4px;color:#666;width:9px;text-align:right;">0</div>
<div class="t" style="left:861.05px;top:367.1px;font-size:4.4px;color:#666;width:9px;text-align:right;">6</div>
<div class="t" style="left:861.05px;top:376.8px;font-size:4.4px;color:#666;width:9px;text-align:right;">12</div>
<div class="t" style="left:861.05px;top:388px;font-size:4.4px;color:#666;width:9px;text-align:right;">24</div>
<div class="t" style="left:861.05px;top:397.3px;font-size:4.4px;color:#666;width:9px;text-align:right;">48</div>
<div style="left:889.85px;top:325.8px;width:4.6px;height:3px;background:#0b2f42;"></div>
<div style="left:889.85px;top:330.2px;width:4.6px;height:77.6px;background:#0b2f42;"></div>
<div style="left:889.85px;top:379.3px;width:4.6px;height:28.5px;background:linear-gradient(#4ab0f0,#56c4fa);"></div>
<div style="left:889.85px;top:364.2px;width:4.6px;height:1px;background:#e8c81c;"></div>
<div style="left:873.05px;top:364.8px;width:9.9px;height:22.4px;background:linear-gradient(#d8d8d8,#c4c4c4 46%,#8e8e8e 49%,#b0b0b0 52%,#a8a8a8);border-radius:1.5px;box-shadow:0 0 0 .5px rgba(40,40,40,.6);"></div>
<div style="left:869.05px;top:424.4px;width:22.2px;height:8.6px;background:#0b3950;border-radius:1px;"></div>
<div class="t" style="left:866.05px;top:425.4px;font-size:7px;color:#40b8f8;width:28.2px;text-align:center;font-weight:bold;letter-spacing:-.2px;">-8.50</div>
<div style="left:860.05px;top:446.2px;width:38.6px;height:9.6px;background:#4a2020;box-shadow:inset 0 0 0 .6px #6a3030;"></div>
<div class="t" style="left:861.25px;top:447.4px;font-size:7px;color:#e6e6e6;font-style:italic;letter-spacing:-.3px;">Built-...put 1</div>
<div style="left:860.05px;top:458.4px;width:38.6px;height:9.2px;background:#2a2a2a;"></div>
<div class="t" style="left:861.25px;top:459.5px;font-size:7px;color:#e6e6e6;letter-spacing:-.3px;">Built-...t 1-2</div>
<div style="left:858.95px;top:471.8px;width:42.55px;height:11px;background:#8c2de2;"></div>
<div class="t" style="left:858.95px;top:473.7px;font-size:7.2px;color:#fff;width:42.55px;text-align:center;text-shadow:0 0 .6px #fff;">Kick</div>
<div style="left:900.6px;top:0px;width:1px;height:500px;background:#3a3a3a;"></div>
<div style="left:901.6px;top:0px;width:0.8px;height:500px;background:#525252;"></div>
<div style="left:904.3px;top:9px;width:35px;height:9.2px;background:#606060;"></div>
<svg style="left:932px;top:12.4px;" width="5" height="2.8" viewBox="0 0 5 2.8"><path d="M0 0h5l-2.5 2.8z" fill="#161616"/></svg>
<div style="left:905.3px;top:23.5px;width:34.6px;height:9.6px;background:#424242;"></div>
<div style="left:905.3px;top:35.35px;width:34.6px;height:9.6px;background:#424242;"></div>
<div style="left:905.3px;top:47.2px;width:34.6px;height:9.6px;background:#424242;"></div>
<div style="left:905.3px;top:59.05px;width:34.6px;height:9.6px;background:#3c8dbd;"></div>
<div class="t" style="left:906.2px;top:60.75px;font-size:6.4px;color:#f4f4f4;letter-spacing:-.25px;">MW Equali...</div>
<div style="left:905.3px;top:70.9px;width:34.6px;height:9.6px;background:#3c8dbd;"></div>
<div class="t" style="left:906.2px;top:72.6px;font-size:6.4px;color:#f4f4f4;letter-spacing:-.25px;">Dynamics</div>
<div style="left:905.3px;top:82.75px;width:34.6px;height:9.6px;background:#424242;"></div>
<div style="left:905.3px;top:94.6px;width:34.6px;height:9.6px;background:#424242;"></div>
<div style="left:901.8px;top:103.5px;width:2.4px;height:2.4px;background:#dcd8c4;border-radius:50%;"></div>
<svg style="left:902.3px;top:111px;" width="40" height="26.8" viewBox="0 0 40 26.8"><rect width="40" height="26.8" rx="2" fill="#050505"/><path d="M8 0V26.8" stroke="#16301a" stroke-width=".5"/><path d="M16 0V26.8" stroke="#16301a" stroke-width=".5"/><path d="M24 0V26.8" stroke="#16301a" stroke-width=".5"/><path d="M32 0V26.8" stroke="#16301a" stroke-width=".5"/><path d="M0 5.4H40" stroke="#16301a" stroke-width=".5"/><path d="M0 10.8H40" stroke="#16301a" stroke-width=".5"/><path d="M0 16.2H40" stroke="#16301a" stroke-width=".5"/><path d="M0 21.6H40" stroke="#16301a" stroke-width=".5"/><path d="M6.4 26.8L32.4 0" stroke="#e01030" stroke-width="1.1"/><circle cx="38.6" cy="19.6" r=".8" fill="#2a7a2a"/></svg>
<div style="left:904.9px;top:142.7px;width:9.4px;height:9.4px;background:radial-gradient(circle at 40% 35%,#d0d0d0,#a4a4a4);border-radius:50%;box-shadow:0 .3px 0 .5px #3a3a3a;"></div>
<div class="t" style="left:919.2px;top:142.8px;font-size:9px;color:#141414;width:10px;text-align:center;">G</div>
<div style="left:931.2px;top:142.7px;width:9.4px;height:9.4px;background:radial-gradient(circle at 40% 35%,#d0d0d0,#a4a4a4);border-radius:50%;box-shadow:0 .3px 0 .5px #3a3a3a;"></div>
<div style="left:904.9px;top:154px;width:9.4px;height:9.4px;background:radial-gradient(circle at 40% 35%,#7ab0e4,#5a90c8);border-radius:50%;box-shadow:0 .3px 0 .5px #3a3a3a;"></div>
<div class="t" style="left:919.2px;top:154.1px;font-size:9px;color:#141414;width:10px;text-align:center;">T</div>
<div style="left:933.6px;top:158.4px;width:4px;height:0.8px;background:#555;"></div>
<div style="left:904.9px;top:165.1px;width:9.4px;height:9.4px;background:radial-gradient(circle at 40% 35%,#f8f8f8,#d4d4d4);border-radius:50%;box-shadow:0 .3px 0 .5px #3a3a3a;"></div>
<div class="t" style="left:919.2px;top:165.2px;font-size:9px;color:#141414;width:10px;text-align:center;">R</div>
<div style="left:933.6px;top:169.5px;width:4px;height:0.8px;background:#555;"></div>
<svg style="left:0px;top:0px;" width="938.4" height="500" viewBox="0 0 938.4 500"><circle cx="910.10" cy="183" r="4.6" fill="#d552f4"/><path d="M911.30 181.28A2.1 2.1 0 1 1 908.90 181.28" stroke="#6a1a8a" stroke-width=".9" fill="none"/><path d="M910.10 180.2v2.6" stroke="#6a1a8a" stroke-width=".9"/><circle cx="923.10" cy="183" r="3.9" fill="#3c3c3c" stroke="#747474" stroke-width=".8"/><path d="M924.19 181.44A1.9 1.9 0 1 1 922.01 181.44" stroke="#8a8a8a" stroke-width=".8" fill="none"/><path d="M923.10 180.4v2.4" stroke="#8a8a8a" stroke-width=".8"/><path d="M931.60 181h6M931.60 183h6M931.60 185h6" stroke="#363636" stroke-width=".7"/><circle cx="914.00" cy="256.2" r="3.2" fill="#4e0a0a"/><circle cx="914.00" cy="256.2" r="3.2" fill="none" stroke="#3a2020" stroke-width=".6"/><path d="M927.40 253.2l5 3-5 3z" fill="#22e022"/><path d="M916.58 296.39A9.7 9.7 0 1 1 929.82 296.39" stroke="#0b3950" stroke-width="3.4" fill="none"/><path d="M923.20 279.40A9.9 9.9 0 0 0 913.45 291.02" stroke="#48b8f4" stroke-width="2.6" fill="none"/><defs><linearGradient id="kg6" x1="0" y1="0" x2="0" y2="1"><stop offset="0" stop-color="#5c7c8a"/><stop offset="1" stop-color="#3c5864"/></linearGradient></defs><circle cx="923.20" cy="289.3" r="7.6" fill="url(#kg6)"/><path d="M920.01 290.46L916.62 291.69" stroke="#dfeaf0" stroke-width="1.1"/><path d="M909.60 304.6v5.4l-3.6-2.7z" fill="#2a2a2a"/><path d="M937.00 304.6v5.4l3.6-2.7z" fill="#2a2a2a"/><path d="M920.50 329V414" stroke="#363636" stroke-width="1"/><path d="M905.80 428.6h4M936.20 428.6h4.4M938.40 426.4v4.4" stroke="#262626" stroke-width="1.1"/><path d="M904.00 485.4h4l-2 1.6z" fill="#666"/></svg>
<div style="left:903.2px;top:194.5px;width:38.4px;height:10.4px;background:#4b4a2c;border-radius:1.5px;box-shadow:inset 0 0 0 .5px rgba(0,0,0,.25);"></div>
<div class="t" style="left:903.2px;top:196.2px;font-size:7px;color:#dcdcdc;width:38.4px;text-align:center;font-weight:bold;letter-spacing:-.3px;">solo</div>
<div style="left:903.2px;top:206.3px;width:38.4px;height:10.4px;background:#4b3c30;border-radius:1.5px;box-shadow:inset 0 0 0 .5px rgba(0,0,0,.25);"></div>
<div class="t" style="left:903.2px;top:208px;font-size:7px;color:#dcdcdc;width:38.4px;text-align:center;font-weight:bold;letter-spacing:-.3px;">mute</div>
<div style="left:903.2px;top:218.2px;width:38.4px;height:10.4px;background:#4d2c2c;border-radius:1.5px;box-shadow:inset 0 0 0 .5px rgba(0,0,0,.25);"></div>
<div class="t" style="left:903.2px;top:219.9px;font-size:7px;color:#dcdcdc;width:38.4px;text-align:center;font-weight:bold;letter-spacing:-.3px;">rec</div>
<div style="left:903.2px;top:230.2px;width:38.4px;height:10.4px;background:#2a4a4c;border-radius:1.5px;box-shadow:inset 0 0 0 .5px rgba(0,0,0,.25);"></div>
<div class="t" style="left:903.2px;top:231.9px;font-size:7px;color:#dcdcdc;width:38.4px;text-align:center;font-weight:bold;letter-spacing:-.3px;">input</div>
<div class="t" style="left:903.2px;top:244.2px;font-size:6.8px;color:#9a9a9a;width:38.4px;text-align:center;">Auto</div>
<div style="left:904.5px;top:263.3px;width:35.6px;height:9.6px;background:#2a2a2a;border-radius:1px;"></div>
<div class="t" style="left:905.6px;top:264.6px;font-size:7.2px;color:#dedede;letter-spacing:-.2px;">Latch</div>
<svg style="left:932.6px;top:267px;" width="4.4" height="2.4" viewBox="0 0 4.4 2.4"><path d="M0 0h4.4l-2.2 2.4z" fill="#5a5a5a"/></svg>
<div style="left:912.2px;top:303px;width:22.1px;height:8.8px;background:#0b3950;border-radius:1px;"></div>
<div class="t" style="left:912.2px;top:303.7px;font-size:8px;color:#3cb4f6;width:22.1px;text-align:center;font-weight:bold;transform:scaleX(1.15);">&lt;52</div>
<div class="t" style="left:903.6px;top:333.3px;font-size:4.4px;color:#666;width:9px;text-align:right;">6</div>
<div class="t" style="left:903.6px;top:344.3px;font-size:4.4px;color:#666;width:9px;text-align:right;">3</div>
<div class="t" style="left:903.6px;top:354px;font-size:4.4px;color:#666;width:9px;text-align:right;">0</div>
<div class="t" style="left:903.6px;top:367.1px;font-size:4.4px;color:#666;width:9px;text-align:right;">6</div>
<div class="t" style="left:903.6px;top:376.8px;font-size:4.4px;color:#666;width:9px;text-align:right;">12</div>
<div class="t" style="left:903.6px;top:388px;font-size:4.4px;color:#666;width:9px;text-align:right;">24</div>
<div class="t" style="left:903.6px;top:397.3px;font-size:4.4px;color:#666;width:9px;text-align:right;">48</div>
<div style="left:932.4px;top:325.8px;width:4.6px;height:3px;background:#0b2f42;"></div>
<div style="left:932.4px;top:330.2px;width:4.6px;height:77.6px;background:#0b2f42;"></div>
<div style="left:932.4px;top:400.8px;width:4.6px;height:7px;background:linear-gradient(#4ab0f0,#56c4fa);"></div>
<div style="left:932.4px;top:395.9px;width:4.6px;height:1px;background:#e8c81c;"></div>
<div style="left:915.6px;top:357.8px;width:9.9px;height:22.4px;background:linear-gradient(#d8d8d8,#c4c4c4 46%,#8e8e8e 49%,#b0b0b0 52%,#a8a8a8);border-radius:1.5px;box-shadow:0 0 0 .5px rgba(40,40,40,.6);"></div>
<div style="left:911.6px;top:424.4px;width:22.2px;height:8.6px;background:#0b3950;border-radius:1px;"></div>
<div class="t" style="left:908.6px;top:425.4px;font-size:7px;color:#40b8f8;width:28.2px;text-align:center;font-weight:bold;letter-spacing:-.2px;">-4.80</div>
<div style="left:902.6px;top:446.2px;width:38.6px;height:9.6px;background:#4a2020;box-shadow:inset 0 0 0 .6px #6a3030;"></div>
<div class="t" style="left:903.8px;top:447.4px;font-size:7px;color:#e6e6e6;font-style:italic;letter-spacing:-.3px;">Built-...put 1</div>
<div style="left:902.6px;top:458.4px;width:38.6px;height:9.2px;background:#2a2a2a;"></div>
<div class="t" style="left:903.8px;top:459.5px;font-size:7px;color:#e6e6e6;letter-spacing:-.3px;">Built-...t 1-2</div>
<div style="left:901.5px;top:471.8px;width:42.55px;height:11px;background:#8c2de2;"></div>
<div class="t" style="left:901.5px;top:473.7px;font-size:7.2px;color:#fff;width:42.55px;text-align:center;text-shadow:0 0 .6px #fff;">OH L</div>
</div>
<div style="left:938.4px;top:95px;width:10.2px;height:498px;background:#515151;border-left:1px solid #3a3a3a;"></div>
<svg style="left:941.6px;top:102.6px;" width="6" height="5" viewBox="0 0 6 5"><path d="M0 4l2.8-3.6 2.8 3.6z" fill="#464646"/></svg>
<svg style="left:941.6px;top:586px;" width="6" height="5" viewBox="0 0 6 5"><path d="M0 .4l2.8 3.6 2.8-3.6z" fill="#484848"/></svg>
<div style="left:646px;top:593px;width:302.6px;height:11px;background:#474747;"></div>
<svg style="left:0px;top:0px;" width="956" height="610" viewBox="0 0 956 610"><path d="M648.4 596h6" stroke="#333" stroke-width="1"/><rect x="648.6" y="597.6" width="5.8" height="4.4" fill="none" stroke="#333" stroke-width="1"/><path d="M650.8 597.6v4.4" stroke="#333" stroke-width="1"/><path d="M658.6 596.6l2.4 4.6 2.4-4.6" stroke="#333" stroke-width="1.2" fill="none"/><rect x="668" y="597" width="7.4" height="5" rx="1" fill="#333"/><rect x="670.2" y="595.8" width="3" height="2" fill="#333"/><circle cx="671.7" cy="599.6" r="1.4" fill="#4a4a4a"/><path d="M737.4 596.6v4.4l-3.2-2.2z" fill="#2e2e2e"/><path d="M932.6 596.6v4.4l3.2-2.2z" fill="#2e2e2e"/><rect x="805" y="596.6" width="82.6" height="4.2" rx="2.1" fill="#2c2c2c"/></svg>
<div class="t" style="left:680.6px;top:595.2px;font-size:7.4px;color:#c4c4c4;letter-spacing:-.15px;">Mix Mode Off</div>
<div style="left:948.6px;top:78px;width:7.4px;height:532px;background:#454545;"></div>
<div style="left:0px;top:604px;width:956px;height:6px;background:#434343;"></div>
<svg style="left:0px;top:0px;" width="956" height="610" viewBox="0 0 956 610"><g fill="rgba(225,225,225,.42)" fill-rule="evenodd"><path d="M792.6 544.6c11.6-.6 20.4 9.4 20.2 21.8c-.2 12.6-9 22.4-20.4 22.6c-9.6.2-17.6-6.4-20-16.4c-1-4.2-.6-8 .2-10.4c-.4 8 3.600 15.8 10.400 18.600c-3.400-5.800-3.800-14.400-1.200-21.400c2.200-6 5.800-10.600 10.800-14.800zM797.4 549.4c-5.800 1.600-10.200 7.600-11.200 14.800c-1 7.800 2.200 14.400 7.600 15.600c6 1.400 12.200-4.600 13.600-13.200c1.400-8.400-2.600-16.400-10-17.200z"/></g></svg>
<div class="t" style="left:818.6px;top:547.4px;font-size:22.8px;color:rgba(235,235,235,.34);font-family:"Noto Sans CJK SC",sans-serif;font-weight:300;-webkit-text-stroke:.5px rgba(240,240,240,.38);">当下软件园</div>
<div class="t" style="left:819px;top:572.6px;font-size:13.8px;color:rgba(190,190,190,.5);letter-spacing:.05px;">www.downxia.com</div>
</body></html>
